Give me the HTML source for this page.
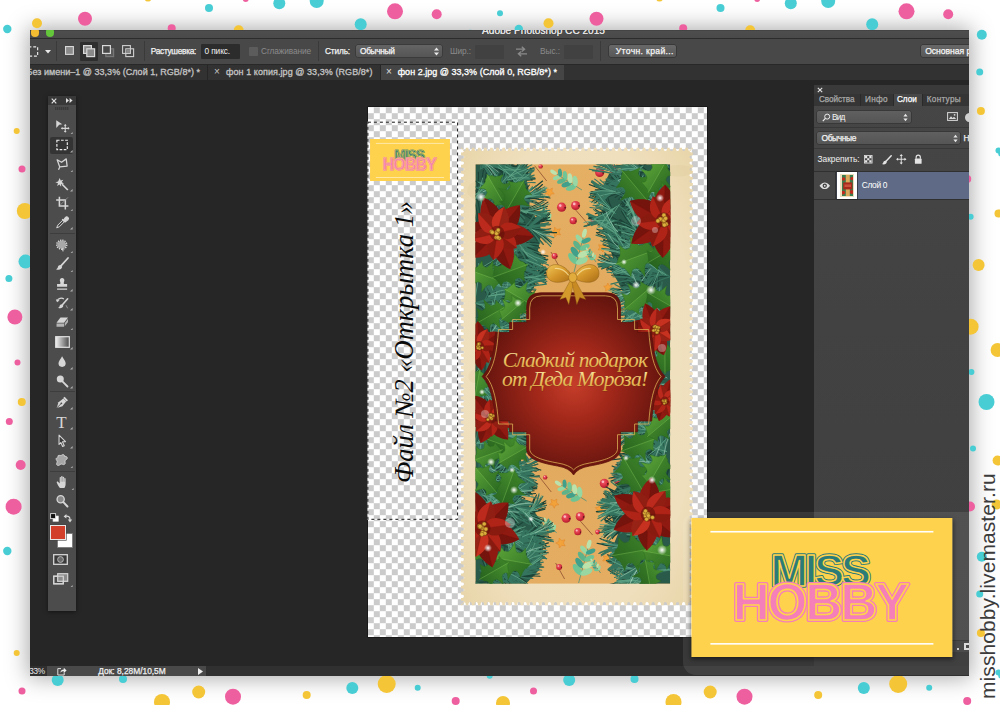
<!DOCTYPE html>
<html lang="ru"><head><meta charset="utf-8"><title>Adobe Photoshop CC 2015</title>
<style>
html,body{margin:0;padding:0;background:#fff;}
body{width:1000px;height:705px;overflow:hidden;position:relative;font-family:"Liberation Sans",sans-serif;}
.dots{position:absolute;left:0;top:0;}
.a{position:absolute;}
#shadow{position:absolute;left:30px;top:30px;width:939px;height:646px;box-shadow:0 0 21px 2px rgba(0,0,0,.34);}
#win{position:absolute;left:30px;top:30px;width:939px;height:646px;overflow:hidden;background:#262626;}
#in{position:absolute;left:-30px;top:-30px;width:1000px;height:705px;}
#title{left:30px;top:30px;width:939px;height:8px;background:linear-gradient(#3a3a3a 0,#4d4d4d 1px,#4a4a4a);overflow:hidden;}
#title span{position:absolute;left:0;width:1027px;text-align:center;top:-3.600px;font-size:10.100px;color:#e4e4e4;white-space:nowrap;line-height:1;text-shadow:0 0 .5px #e4e4e4;}
#optbar{left:30px;top:38px;width:939px;height:26px;background:#484848;border-top:1px solid #2c2c2c;box-sizing:border-box;}
#tabbar{left:30px;top:64px;width:939px;height:16px;background:#323232;border-top:1px solid #282828;box-sizing:border-box;}
.t{position:absolute;white-space:nowrap;line-height:1;}
.b{font-weight:bold;}
#doc{left:367.700px;top:107px;width:339.300px;height:530px;background:conic-gradient(#cbcbcb 25%,#fff 0 50%,#cbcbcb 0 75%,#fff 0) -0.2px .2px/12px 12px;box-shadow:0 0 0 .6px #111;}
#ftext{left:0;top:0;}
#ftext span{position:absolute;left:390.900px;top:483px;transform-origin:0 0;transform:rotate(-90deg);font-family:"Liberation Serif",serif;font-style:italic;font-size:26.4px;line-height:1;white-space:nowrap;color:#0a0a0a;}
#vtext{left:977.200px;top:698.500px;transform-origin:0 0;transform:rotate(-90deg);font-size:21px;color:#3b3b3b;white-space:nowrap;line-height:1;letter-spacing:.09px;}
</style></head><body>
<div id="shadow"></div>
<svg class="dots" width="1000" height="705" viewBox="0 0 1000 705"><circle cx="7.3" cy="29.0" r="4.2" fill="#47cdd3"/><circle cx="7.3" cy="551.0" r="4.2" fill="#47cdd3"/><circle cx="518.8" cy="29.0" r="4.2" fill="#47cdd3"/><circle cx="37.0" cy="23.3" r="5" fill="#f4c536"/><circle cx="548.5" cy="23.3" r="5" fill="#f4c536"/><circle cx="85.0" cy="18.7" r="7" fill="#ee5f9f"/><circle cx="596.5" cy="18.7" r="7" fill="#ee5f9f"/><circle cx="148.0" cy="-2.0" r="3.5" fill="#f4c536"/><circle cx="659.5" cy="-2.0" r="3.5" fill="#f4c536"/><circle cx="171.7" cy="28.3" r="4" fill="#ee5f9f"/><circle cx="683.2" cy="28.3" r="4" fill="#ee5f9f"/><circle cx="209.0" cy="8.0" r="4" fill="#47cdd3"/><circle cx="720.5" cy="8.0" r="4" fill="#47cdd3"/><circle cx="238.7" cy="30.3" r="5" fill="#f4c536"/><circle cx="750.2" cy="30.3" r="5" fill="#f4c536"/><circle cx="245.7" cy="-1.0" r="3" fill="#ee5f9f"/><circle cx="757.2" cy="-1.0" r="3" fill="#ee5f9f"/><circle cx="279.3" cy="3.3" r="6" fill="#47cdd3"/><circle cx="790.8" cy="3.3" r="6" fill="#47cdd3"/><circle cx="316.7" cy="1.0" r="7" fill="#47cdd3"/><circle cx="828.2" cy="1.0" r="7" fill="#47cdd3"/><circle cx="360.7" cy="24.3" r="6" fill="#47cdd3"/><circle cx="872.2" cy="24.3" r="6" fill="#47cdd3"/><circle cx="395.0" cy="11.3" r="8" fill="#ee5f9f"/><circle cx="906.5" cy="11.3" r="8" fill="#ee5f9f"/><circle cx="436.7" cy="14.3" r="5" fill="#ee5f9f"/><circle cx="948.2" cy="14.3" r="5" fill="#ee5f9f"/><circle cx="-11.5" cy="13.3" r="3" fill="#47cdd3"/><circle cx="-11.5" cy="535.3" r="3" fill="#47cdd3"/><circle cx="500.0" cy="13.3" r="3" fill="#47cdd3"/><circle cx="1011.5" cy="13.3" r="3" fill="#47cdd3"/><circle cx="1011.5" cy="535.3" r="3" fill="#47cdd3"/><circle cx="16.7" cy="131.0" r="3" fill="#f4c536"/><circle cx="16.7" cy="653.0" r="3" fill="#f4c536"/><circle cx="22.0" cy="169.0" r="3.5" fill="#ee5f9f"/><circle cx="22.0" cy="691.0" r="3.5" fill="#ee5f9f"/><circle cx="533.5" cy="691.0" r="3.5" fill="#ee5f9f"/><circle cx="24.8" cy="211.0" r="8" fill="#f4c536"/><circle cx="25.5" cy="261.6" r="7" fill="#47cdd3"/><circle cx="8.9" cy="278.6" r="3.5" fill="#47cdd3"/><circle cx="14.9" cy="317.0" r="7.5" fill="#ee5f9f"/><circle cx="17.5" cy="362.6" r="3" fill="#ee5f9f"/><circle cx="21.8" cy="402.0" r="4" fill="#f4c536"/><circle cx="9.3" cy="421.5" r="3.5" fill="#ee5f9f"/><circle cx="20.7" cy="465.0" r="5" fill="#ee5f9f"/><circle cx="13.6" cy="506.7" r="8" fill="#ee5f9f"/><circle cx="470.3" cy="34.8" r="5" fill="#47cdd3"/><circle cx="981.8" cy="34.8" r="5" fill="#47cdd3"/><circle cx="981.8" cy="556.8" r="5" fill="#47cdd3"/><circle cx="979.7" cy="72.0" r="3.5" fill="#47cdd3"/><circle cx="979.7" cy="594.0" r="3.5" fill="#47cdd3"/><circle cx="980.9" cy="110.9" r="4" fill="#f4c536"/><circle cx="980.9" cy="632.9" r="4" fill="#f4c536"/><circle cx="998.5" cy="150.4" r="3" fill="#47cdd3"/><circle cx="998.5" cy="672.4" r="3" fill="#47cdd3"/><circle cx="970.6" cy="216.8" r="3" fill="#47cdd3"/><circle cx="998.5" cy="213.4" r="4" fill="#f4c536"/><circle cx="978.6" cy="265.0" r="6" fill="#f4c536"/><circle cx="970.6" cy="326.7" r="8" fill="#f4c536"/><circle cx="997.6" cy="350.0" r="7" fill="#f4c536"/><circle cx="971.4" cy="372.0" r="3" fill="#47cdd3"/><circle cx="986.5" cy="402.0" r="8" fill="#47cdd3"/><circle cx="973.0" cy="448.6" r="3" fill="#47cdd3"/><circle cx="997.6" cy="460.5" r="5" fill="#f4c536"/><circle cx="970.0" cy="506.5" r="5" fill="#ee5f9f"/><circle cx="996.6" cy="504.5" r="5" fill="#f4c536"/><circle cx="57.7" cy="680.0" r="6" fill="#47cdd3"/><circle cx="569.2" cy="680.0" r="6" fill="#47cdd3"/><circle cx="123.0" cy="679.0" r="4" fill="#47cdd3"/><circle cx="634.5" cy="679.0" r="4" fill="#47cdd3"/><circle cx="162.0" cy="702.0" r="8" fill="#f4c536"/><circle cx="673.5" cy="702.0" r="8" fill="#f4c536"/><circle cx="198.7" cy="692.0" r="6.5" fill="#f4c536"/><circle cx="710.2" cy="692.0" r="6.5" fill="#f4c536"/><circle cx="233.0" cy="696.7" r="8" fill="#ee5f9f"/><circle cx="744.5" cy="696.7" r="8" fill="#ee5f9f"/><circle cx="306.7" cy="695.0" r="4" fill="#f4c536"/><circle cx="818.2" cy="695.0" r="4" fill="#f4c536"/><circle cx="352.3" cy="688.0" r="6" fill="#47cdd3"/><circle cx="863.8" cy="688.0" r="6" fill="#47cdd3"/><circle cx="386.7" cy="684.0" r="9" fill="#f4c536"/><circle cx="898.2" cy="684.0" r="9" fill="#f4c536"/><circle cx="417.7" cy="687.7" r="3" fill="#47cdd3"/><circle cx="929.2" cy="687.7" r="3" fill="#47cdd3"/><circle cx="455.7" cy="701.0" r="4" fill="#ee5f9f"/><circle cx="967.2" cy="179.0" r="4" fill="#ee5f9f"/><circle cx="967.2" cy="701.0" r="4" fill="#ee5f9f"/><circle cx="489.7" cy="675.7" r="3" fill="#47cdd3"/><circle cx="1001.2" cy="153.7" r="3" fill="#47cdd3"/><circle cx="1001.2" cy="675.7" r="3" fill="#47cdd3"/><circle cx="-8.5" cy="181.0" r="7" fill="#f4c536"/><circle cx="-8.5" cy="703.0" r="7" fill="#f4c536"/><circle cx="503.0" cy="703.0" r="7" fill="#f4c536"/></svg>
<div id="win"><div id="in">
<div class="a" id="title"><span>Adobe Photoshop CC 2015</span></div>
<div class="a" id="optbar"></div>
<div class="a" id="tabbar"></div>
<div class="a" style="left:30.600px;top:27.800px;width:8.800px;height:8.800px;border-radius:50%;background:#f4bc30;"></div>
<div class="a" style="left:45.600px;top:27.800px;width:8.800px;height:8.800px;border-radius:50%;background:#63c63b;"></div>
<svg class="a" style="left:28px;top:45.500px" width="11" height="11" viewBox="0 0 12 12"><rect x="0.5" y="1" width="10" height="10" fill="none" stroke="#e6e6e6" stroke-width="1.300" stroke-dasharray="3.200 2"/></svg>
<svg class="a" style="left:45px;top:49.5px" width="6" height="4" viewBox="0 0 6 4"><path d="M0 0h6L3 3.6z" fill="#e8e8e8"/></svg>
<div class="a" style="left:55.500px;top:41px;width:1px;height:20px;background:#3a3a3a;"></div>
<div class="a" style="left:80px;top:41.5px;width:18px;height:19px;background:#2e2e2e;border-radius:1px;"></div>
<svg class="a" style="left:64.800px;top:45.600px" width="10" height="10" viewBox="0 0 11 11"><rect x="0.6" y="0.6" width="8.6" height="8.6" fill="#8a8a8a" stroke="#d9d9d9" stroke-width="1.2"/></svg>
<svg class="a" style="left:83px;top:44.5px" width="13" height="13" viewBox="0 0 13 13"><rect x="0.6" y="0.6" width="7.8" height="7.8" fill="#8a8a8a" stroke="#d9d9d9" stroke-width="1.2"/><rect x="3.8" y="3.8" width="7.8" height="7.8" fill="#8a8a8a" stroke="#d9d9d9" stroke-width="1.2"/></svg>
<svg class="a" style="left:102px;top:44.5px" width="13" height="13" viewBox="0 0 13 13"><rect x="3.8" y="3.8" width="7.8" height="7.8" fill="#5a5a5a" stroke="#777" stroke-width="1.2"/><rect x="0.6" y="0.6" width="7.8" height="7.8" fill="#484848" stroke="#d9d9d9" stroke-width="1.2"/></svg>
<svg class="a" style="left:121.5px;top:44.5px" width="13" height="13" viewBox="0 0 13 13"><rect x="0.6" y="0.6" width="7.8" height="7.8" fill="none" stroke="#cfcfcf" stroke-width="1.1"/><rect x="3.8" y="3.8" width="7.8" height="7.8" fill="none" stroke="#cfcfcf" stroke-width="1.1"/><rect x="4.4" y="4.4" width="3.6" height="3.6" fill="#8a8a8a"/></svg>
<div class="a" style="left:143.5px;top:41px;width:1px;height:20px;background:#3a3a3a;"></div>
<div class="t" style="left:150.75px;top:47.05px;font-size:8.3px;font-weight:normal;color:#f2f2f2;letter-spacing:-0.294px;-webkit-text-stroke:.25px #f2f2f2;">Растушевка:</div>
<div class="a" style="left:201px;top:44px;width:39px;height:14.5px;background:#2c2c2c;border-radius:1px;"></div>
<div class="t" style="left:204.50px;top:47.05px;font-size:8.3px;font-weight:normal;color:#f2f2f2;letter-spacing:-0.105px;">0 пикс.</div>
<div class="a" style="left:248.5px;top:46.5px;width:9px;height:9px;background:#5c5c5c;border-radius:1px;"></div>
<div class="t" style="left:261.00px;top:47.05px;font-size:8.3px;font-weight:normal;color:#8b8b8b;letter-spacing:-0.114px;">Сглаживание</div>
<div class="a" style="left:317.5px;top:41px;width:1px;height:20px;background:#3a3a3a;"></div>
<div class="t" style="left:325.00px;top:47.05px;font-size:8.3px;font-weight:normal;color:#f2f2f2;letter-spacing:-0.151px;-webkit-text-stroke:.25px #f2f2f2;">Стиль:</div>
<div class="a" style="left:355.5px;top:45px;width:86.5px;height:12px;background:linear-gradient(#646464,#555);border-radius:2px;box-shadow:0 0 0 .5px #2e2e2e;"></div>
<div class="t" style="left:360.00px;top:47.05px;font-size:8.3px;font-weight:normal;color:#f6f6f6;letter-spacing:-0.310px;-webkit-text-stroke:.25px #f6f6f6;">Обычный</div>
<svg class="a" style="left:433.5px;top:46.5px" width="5" height="9" viewBox="0 0 5 9"><path d="M0 3.4L2.5 .6 5 3.4zM0 5.6L2.5 8.4 5 5.6z" fill="#e8e8e8"/></svg>
<div class="t" style="left:450.00px;top:47.05px;font-size:8.3px;font-weight:normal;color:#8b8b8b;letter-spacing:-0.094px;">Шир.:</div>
<div class="a" style="left:475px;top:44.5px;width:29px;height:14px;background:#414141;border-radius:1px;"></div>
<svg class="a" style="left:514.5px;top:45.5px" width="13" height="11" viewBox="0 0 13 11"><path d="M1 3.2h8.2M6.8 .8L9.6 3.2 6.8 5.4M12 7.8H3.8M6.2 5.6L3.4 7.8 6.2 10.2" fill="none" stroke="#8a8a8a" stroke-width="1.3"/></svg>
<div class="t" style="left:540.00px;top:47.05px;font-size:8.3px;font-weight:normal;color:#8b8b8b;letter-spacing:-0.053px;">Выс.:</div>
<div class="a" style="left:563.5px;top:44.5px;width:29px;height:14px;background:#414141;border-radius:1px;"></div>
<div class="a" style="left:600px;top:41px;width:1px;height:20px;background:#3a3a3a;"></div>
<div class="a" style="left:608.5px;top:45px;width:67.5px;height:12px;background:linear-gradient(#686868,#585858);border-radius:2px;box-shadow:0 0 0 .5px #2a2a2a;"></div>
<div class="t" style="left:615.75px;top:46.90px;font-size:8.6px;font-weight:normal;color:#f6f6f6;letter-spacing:0.345px;-webkit-text-stroke:.25px #f6f6f6;">Уточн. край...</div>
<div class="a" style="left:921px;top:45px;width:60px;height:12px;background:linear-gradient(#686868,#585858);border-radius:2px;box-shadow:0 0 0 .5px #2a2a2a;"></div>
<div class="t" style="left:925.20px;top:46.90px;font-size:8.6px;font-weight:normal;color:#f6f6f6;letter-spacing:-0.030px;-webkit-text-stroke:.25px #f6f6f6;">Основная рабочая среда</div>
<div class="a" style="left:380.3px;top:65px;width:183.3px;height:15px;background:#454545;"></div>
<div class="a" style="left:207px;top:65px;width:1px;height:15px;background:#262626;"></div>
<div class="a" style="left:380px;top:65px;width:1px;height:15px;background:#262626;"></div>
<div class="t" style="left:26.50px;top:68.20px;font-size:9px;font-weight:normal;color:#c4c4c4;letter-spacing:0.023px;-webkit-text-stroke:.3px #c4c4c4;">Без имени–1 @ 33,3% (Слой 1, RGB/8*) *</div>
<div class="t" style="left:214px;top:67.2px;font-size:10px;color:#c4c4c4;">×</div>
<div class="t" style="left:226.00px;top:68.20px;font-size:9px;font-weight:normal;color:#c4c4c4;letter-spacing:0.066px;-webkit-text-stroke:.3px #c4c4c4;">фон 1 копия.jpg @ 33,3% (RGB/8*)</div>
<div class="t" style="left:386px;top:67.2px;font-size:10px;color:#e0e0e0;">×</div>
<div class="t" style="left:397.70px;top:68.20px;font-size:9px;font-weight:normal;color:#fff;letter-spacing:0.023px;-webkit-text-stroke:.3px #fff;">фон 2.jpg @ 33,3% (Слой 0, RGB/8*) *</div>
<div class="a" style="left:30px;top:665.5px;width:939px;height:11px;background:#303030;"></div>
<div class="a" style="left:47px;top:665.5px;width:159px;height:11px;background:#494949;"></div>
<div class="t" style="left:29.00px;top:666.50px;font-size:8.6px;font-weight:normal;color:#e8e8e8;letter-spacing:-0.568px;">33%</div>
<svg class="a" style="left:56.5px;top:666.5px" width="10" height="9" viewBox="0 0 10 9"><path d="M4 1.6H.8V8h6.4V5.6" fill="none" stroke="#ddd" stroke-width="1"/><path d="M3.4 5.8C3.6 3.6 5 2.6 6.8 2.6V.8L9.6 3.4 6.8 6V4.2C5.4 4.2 4.4 4.6 3.4 5.8z" fill="#eee"/></svg>
<div class="t" style="left:98.30px;top:666.60px;font-size:8.4px;font-weight:normal;color:#f0f0f0;letter-spacing:-0.014px;-webkit-text-stroke:.25px #f0f0f0;">Док: 8,28M/10,5M</div>
<svg class="a" style="left:198px;top:668px" width="5" height="7" viewBox="0 0 5 7"><path d="M0 0L5 3.5 0 7z" fill="#eee"/></svg>
<div class="a" id="doc"></div>
<svg class="a" style="left:455px;top:140px" width="240" height="470" viewBox="455 140 240 470"><defs><radialGradient id="gPaper" cx=".5" cy=".5" r=".75"><stop offset="0" stop-color="#f3e6c6"/><stop offset=".7" stop-color="#efdfbc"/><stop offset="1" stop-color="#e6d2a4"/></radialGradient><linearGradient id="gKraft" x1="0" y1="0" x2="0" y2="1"><stop offset="0" stop-color="#e5af64"/><stop offset=".5" stop-color="#e0a85c"/><stop offset="1" stop-color="#e4ad62"/></linearGradient><radialGradient id="gBerry" cx=".4" cy=".35" r=".7"><stop offset="0" stop-color="#f2606c"/><stop offset=".6" stop-color="#d62f40"/><stop offset="1" stop-color="#a81a2a"/></radialGradient><radialGradient id="gPlaque" gradientUnits="userSpaceOnUse" cx="573.6" cy="384" r="92"><stop offset="0" stop-color="#c63e2a"/><stop offset=".4" stop-color="#a3281a"/><stop offset="1" stop-color="#64140e"/></radialGradient><linearGradient id="gH1" x1="0" y1="0" x2="1" y2="1"><stop offset="0" stop-color="#62aa3a"/><stop offset="1" stop-color="#2b6e24"/></linearGradient><linearGradient id="gH2" x1="1" y1="0" x2="0" y2="1"><stop offset="0" stop-color="#4f9a32"/><stop offset="1" stop-color="#245f1e"/></linearGradient><linearGradient id="gGold" x1="0" y1="0" x2="0" y2="1"><stop offset="0" stop-color="#fbeeb4"/><stop offset=".5" stop-color="#ecc566"/><stop offset="1" stop-color="#d29a34"/></linearGradient><linearGradient id="gBow" x1="0" y1="0" x2="1" y2="1"><stop offset="0" stop-color="#f0c65a"/><stop offset=".5" stop-color="#d4962a"/><stop offset="1" stop-color="#a86c16"/></linearGradient><radialGradient id="gSp"><stop offset="0" stop-color="#fff" stop-opacity="1"/><stop offset=".3" stop-color="#fff" stop-opacity=".7"/><stop offset="1" stop-color="#fff" stop-opacity="0"/></radialGradient><clipPath id="cPic"><rect x="475.4" y="164.2" width="194.80000000000007" height="419.59999999999997"/></clipPath><filter id="fBlur" x="-5%" y="-5%" width="110%" height="110%"><feGaussianBlur stdDeviation=".45"/></filter></defs><path d="M461 147.8h1.3a1.75 3.3 0 0 0 3.5 0h1.3h1.3a1.75 3.3 0 0 0 3.5 0h1.3h1.3a1.75 3.3 0 0 0 3.5 0h1.3h1.3a1.75 3.3 0 0 0 3.5 0h1.3h1.3a1.75 3.3 0 0 0 3.5 0h1.3h1.3a1.75 3.3 0 0 0 3.5 0h1.3h1.3a1.75 3.3 0 0 0 3.5 0h1.3h1.3a1.75 3.3 0 0 0 3.5 0h1.3h1.3a1.75 3.3 0 0 0 3.5 0h1.3h1.3a1.75 3.3 0 0 0 3.5 0h1.3h1.3a1.75 3.3 0 0 0 3.5 0h1.3h1.3a1.75 3.3 0 0 0 3.5 0h1.3h1.3a1.75 3.3 0 0 0 3.5 0h1.3h1.3a1.75 3.3 0 0 0 3.5 0h1.3h1.3a1.75 3.3 0 0 0 3.5 0h1.3h1.3a1.75 3.3 0 0 0 3.5 0h1.3h1.3a1.75 3.3 0 0 0 3.5 0h1.3h1.3a1.75 3.3 0 0 0 3.5 0h1.3h1.3a1.75 3.3 0 0 0 3.5 0h1.3h1.3a1.75 3.3 0 0 0 3.5 0h1.3h1.3a1.75 3.3 0 0 0 3.5 0h1.3h1.3a1.75 3.3 0 0 0 3.5 0h1.3h1.3a1.75 3.3 0 0 0 3.5 0h1.3h1.3a1.75 3.3 0 0 0 3.5 0h1.3h1.3a1.75 3.3 0 0 0 3.5 0h1.3h1.3a1.75 3.3 0 0 0 3.5 0h1.3h1.3a1.75 3.3 0 0 0 3.5 0h1.3h1.3a1.75 3.3 0 0 0 3.5 0h1.3h1.3a1.75 3.3 0 0 0 3.5 0h1.3h1.3a1.75 3.3 0 0 0 3.5 0h1.3h1.3a1.75 3.3 0 0 0 3.5 0h1.3h1.3a1.75 3.3 0 0 0 3.5 0h1.3h1.3a1.75 3.3 0 0 0 3.5 0h1.3h1.3a1.75 3.3 0 0 0 3.5 0h1.3h1.3a1.75 3.3 0 0 0 3.5 0h1.3h1.3a1.75 3.3 0 0 0 3.5 0h1.3h1.3a1.75 3.3 0 0 0 3.5 0h1.3h1.3a1.75 3.3 0 0 0 3.5 0h1.3v1.3a3.3 1.75 0 0 0 0 3.5v1.3v1.3a3.3 1.75 0 0 0 0 3.5v1.3v1.3a3.3 1.75 0 0 0 0 3.5v1.3v1.3a3.3 1.75 0 0 0 0 3.5v1.3v1.3a3.3 1.75 0 0 0 0 3.5v1.3v1.3a3.3 1.75 0 0 0 0 3.5v1.3v1.3a3.3 1.75 0 0 0 0 3.5v1.3v1.3a3.3 1.75 0 0 0 0 3.5v1.3v1.3a3.3 1.75 0 0 0 0 3.5v1.3v1.3a3.3 1.75 0 0 0 0 3.5v1.3v1.3a3.3 1.75 0 0 0 0 3.5v1.3v1.3a3.3 1.75 0 0 0 0 3.5v1.3v1.3a3.3 1.75 0 0 0 0 3.5v1.3v1.3a3.3 1.75 0 0 0 0 3.5v1.3v1.3a3.3 1.75 0 0 0 0 3.5v1.3v1.3a3.3 1.75 0 0 0 0 3.5v1.3v1.3a3.3 1.75 0 0 0 0 3.5v1.3v1.3a3.3 1.75 0 0 0 0 3.5v1.3v1.3a3.3 1.75 0 0 0 0 3.5v1.3v1.3a3.3 1.75 0 0 0 0 3.5v1.3v1.3a3.3 1.75 0 0 0 0 3.5v1.3v1.3a3.3 1.75 0 0 0 0 3.5v1.3v1.3a3.3 1.75 0 0 0 0 3.5v1.3v1.3a3.3 1.75 0 0 0 0 3.5v1.3v1.3a3.3 1.75 0 0 0 0 3.5v1.3v1.3a3.3 1.75 0 0 0 0 3.5v1.3v1.3a3.3 1.75 0 0 0 0 3.5v1.3v1.3a3.3 1.75 0 0 0 0 3.5v1.3v1.3a3.3 1.75 0 0 0 0 3.5v1.3v1.3a3.3 1.75 0 0 0 0 3.5v1.3v1.3a3.3 1.75 0 0 0 0 3.5v1.3v1.3a3.3 1.75 0 0 0 0 3.5v1.3v1.3a3.3 1.75 0 0 0 0 3.5v1.3v1.3a3.3 1.75 0 0 0 0 3.5v1.3v1.3a3.3 1.75 0 0 0 0 3.5v1.3v1.3a3.3 1.75 0 0 0 0 3.5v1.3v1.3a3.3 1.75 0 0 0 0 3.5v1.3v1.3a3.3 1.75 0 0 0 0 3.5v1.3v1.3a3.3 1.75 0 0 0 0 3.5v1.3v1.3a3.3 1.75 0 0 0 0 3.5v1.3v1.3a3.3 1.75 0 0 0 0 3.5v1.3v1.3a3.3 1.75 0 0 0 0 3.5v1.3v1.3a3.3 1.75 0 0 0 0 3.5v1.3v1.3a3.3 1.75 0 0 0 0 3.5v1.3v1.3a3.3 1.75 0 0 0 0 3.5v1.3v1.3a3.3 1.75 0 0 0 0 3.5v1.3v1.3a3.3 1.75 0 0 0 0 3.5v1.3v1.3a3.3 1.75 0 0 0 0 3.5v1.3v1.3a3.3 1.75 0 0 0 0 3.5v1.3v1.3a3.3 1.75 0 0 0 0 3.5v1.3v1.3a3.3 1.75 0 0 0 0 3.5v1.3v1.3a3.3 1.75 0 0 0 0 3.5v1.3v1.3a3.3 1.75 0 0 0 0 3.5v1.3v1.3a3.3 1.75 0 0 0 0 3.5v1.3v1.3a3.3 1.75 0 0 0 0 3.5v1.3v1.3a3.3 1.75 0 0 0 0 3.5v1.3v1.3a3.3 1.75 0 0 0 0 3.5v1.3v1.3a3.3 1.75 0 0 0 0 3.5v1.3v1.3a3.3 1.75 0 0 0 0 3.5v1.3v1.3a3.3 1.75 0 0 0 0 3.5v1.3v1.3a3.3 1.75 0 0 0 0 3.5v1.3v1.3a3.3 1.75 0 0 0 0 3.5v1.3v1.3a3.3 1.75 0 0 0 0 3.5v1.3v1.3a3.3 1.75 0 0 0 0 3.5v1.3v1.3a3.3 1.75 0 0 0 0 3.5v1.3v1.3a3.3 1.75 0 0 0 0 3.5v1.3v1.3a3.3 1.75 0 0 0 0 3.5v1.3v1.3a3.3 1.75 0 0 0 0 3.5v1.3v1.3a3.3 1.75 0 0 0 0 3.5v1.3v1.3a3.3 1.75 0 0 0 0 3.5v1.3v1.3a3.3 1.75 0 0 0 0 3.5v1.3v1.3a3.3 1.75 0 0 0 0 3.5v1.3v1.3a3.3 1.75 0 0 0 0 3.5v1.3v1.3a3.3 1.75 0 0 0 0 3.5v1.3v1.3a3.3 1.75 0 0 0 0 3.5v1.3h-1.3a1.75 3.3 0 0 0 -3.5 0h-1.3h-1.3a1.75 3.3 0 0 0 -3.5 0h-1.3h-1.3a1.75 3.3 0 0 0 -3.5 0h-1.3h-1.3a1.75 3.3 0 0 0 -3.5 0h-1.3h-1.3a1.75 3.3 0 0 0 -3.5 0h-1.3h-1.3a1.75 3.3 0 0 0 -3.5 0h-1.3h-1.3a1.75 3.3 0 0 0 -3.5 0h-1.3h-1.3a1.75 3.3 0 0 0 -3.5 0h-1.3h-1.3a1.75 3.3 0 0 0 -3.5 0h-1.3h-1.3a1.75 3.3 0 0 0 -3.5 0h-1.3h-1.3a1.75 3.3 0 0 0 -3.5 0h-1.3h-1.3a1.75 3.3 0 0 0 -3.5 0h-1.3h-1.3a1.75 3.3 0 0 0 -3.5 0h-1.3h-1.3a1.75 3.3 0 0 0 -3.5 0h-1.3h-1.3a1.75 3.3 0 0 0 -3.5 0h-1.3h-1.3a1.75 3.3 0 0 0 -3.5 0h-1.3h-1.3a1.75 3.3 0 0 0 -3.5 0h-1.3h-1.3a1.75 3.3 0 0 0 -3.5 0h-1.3h-1.3a1.75 3.3 0 0 0 -3.5 0h-1.3h-1.3a1.75 3.3 0 0 0 -3.5 0h-1.3h-1.3a1.75 3.3 0 0 0 -3.5 0h-1.3h-1.3a1.75 3.3 0 0 0 -3.5 0h-1.3h-1.3a1.75 3.3 0 0 0 -3.5 0h-1.3h-1.3a1.75 3.3 0 0 0 -3.5 0h-1.3h-1.3a1.75 3.3 0 0 0 -3.5 0h-1.3h-1.3a1.75 3.3 0 0 0 -3.5 0h-1.3h-1.3a1.75 3.3 0 0 0 -3.5 0h-1.3h-1.3a1.75 3.3 0 0 0 -3.5 0h-1.3h-1.3a1.75 3.3 0 0 0 -3.5 0h-1.3h-1.3a1.75 3.3 0 0 0 -3.5 0h-1.3h-1.3a1.75 3.3 0 0 0 -3.5 0h-1.3h-1.3a1.75 3.3 0 0 0 -3.5 0h-1.3h-1.3a1.75 3.3 0 0 0 -3.5 0h-1.3h-1.3a1.75 3.3 0 0 0 -3.5 0h-1.3h-1.3a1.75 3.3 0 0 0 -3.5 0h-1.3h-1.3a1.75 3.3 0 0 0 -3.5 0h-1.3h-1.3a1.75 3.3 0 0 0 -3.5 0h-1.3h-1.3a1.75 3.3 0 0 0 -3.5 0h-1.3v-1.3a3.3 1.75 0 0 0 0 -3.5v-1.3v-1.3a3.3 1.75 0 0 0 0 -3.5v-1.3v-1.3a3.3 1.75 0 0 0 0 -3.5v-1.3v-1.3a3.3 1.75 0 0 0 0 -3.5v-1.3v-1.3a3.3 1.75 0 0 0 0 -3.5v-1.3v-1.3a3.3 1.75 0 0 0 0 -3.5v-1.3v-1.3a3.3 1.75 0 0 0 0 -3.5v-1.3v-1.3a3.3 1.75 0 0 0 0 -3.5v-1.3v-1.3a3.3 1.75 0 0 0 0 -3.5v-1.3v-1.3a3.3 1.75 0 0 0 0 -3.5v-1.3v-1.3a3.3 1.75 0 0 0 0 -3.5v-1.3v-1.3a3.3 1.75 0 0 0 0 -3.5v-1.3v-1.3a3.3 1.75 0 0 0 0 -3.5v-1.3v-1.3a3.3 1.75 0 0 0 0 -3.5v-1.3v-1.3a3.3 1.75 0 0 0 0 -3.5v-1.3v-1.3a3.3 1.75 0 0 0 0 -3.5v-1.3v-1.3a3.3 1.75 0 0 0 0 -3.5v-1.3v-1.3a3.3 1.75 0 0 0 0 -3.5v-1.3v-1.3a3.3 1.75 0 0 0 0 -3.5v-1.3v-1.3a3.3 1.75 0 0 0 0 -3.5v-1.3v-1.3a3.3 1.75 0 0 0 0 -3.5v-1.3v-1.3a3.3 1.75 0 0 0 0 -3.5v-1.3v-1.3a3.3 1.75 0 0 0 0 -3.5v-1.3v-1.3a3.3 1.75 0 0 0 0 -3.5v-1.3v-1.3a3.3 1.75 0 0 0 0 -3.5v-1.3v-1.3a3.3 1.75 0 0 0 0 -3.5v-1.3v-1.3a3.3 1.75 0 0 0 0 -3.5v-1.3v-1.3a3.3 1.75 0 0 0 0 -3.5v-1.3v-1.3a3.3 1.75 0 0 0 0 -3.5v-1.3v-1.3a3.3 1.75 0 0 0 0 -3.5v-1.3v-1.3a3.3 1.75 0 0 0 0 -3.5v-1.3v-1.3a3.3 1.75 0 0 0 0 -3.5v-1.3v-1.3a3.3 1.75 0 0 0 0 -3.5v-1.3v-1.3a3.3 1.75 0 0 0 0 -3.5v-1.3v-1.3a3.3 1.75 0 0 0 0 -3.5v-1.3v-1.3a3.3 1.75 0 0 0 0 -3.5v-1.3v-1.3a3.3 1.75 0 0 0 0 -3.5v-1.3v-1.3a3.3 1.75 0 0 0 0 -3.5v-1.3v-1.3a3.3 1.75 0 0 0 0 -3.5v-1.3v-1.3a3.3 1.75 0 0 0 0 -3.5v-1.3v-1.3a3.3 1.75 0 0 0 0 -3.5v-1.3v-1.3a3.3 1.75 0 0 0 0 -3.5v-1.3v-1.3a3.3 1.75 0 0 0 0 -3.5v-1.3v-1.3a3.3 1.75 0 0 0 0 -3.5v-1.3v-1.3a3.3 1.75 0 0 0 0 -3.5v-1.3v-1.3a3.3 1.75 0 0 0 0 -3.5v-1.3v-1.3a3.3 1.75 0 0 0 0 -3.5v-1.3v-1.3a3.3 1.75 0 0 0 0 -3.5v-1.3v-1.3a3.3 1.75 0 0 0 0 -3.5v-1.3v-1.3a3.3 1.75 0 0 0 0 -3.5v-1.3v-1.3a3.3 1.75 0 0 0 0 -3.5v-1.3v-1.3a3.3 1.75 0 0 0 0 -3.5v-1.3v-1.3a3.3 1.75 0 0 0 0 -3.5v-1.3v-1.3a3.3 1.75 0 0 0 0 -3.5v-1.3v-1.3a3.3 1.75 0 0 0 0 -3.5v-1.3v-1.3a3.3 1.75 0 0 0 0 -3.5v-1.3v-1.3a3.3 1.75 0 0 0 0 -3.5v-1.3v-1.3a3.3 1.75 0 0 0 0 -3.5v-1.3v-1.3a3.3 1.75 0 0 0 0 -3.5v-1.3v-1.3a3.3 1.75 0 0 0 0 -3.5v-1.3v-1.3a3.3 1.75 0 0 0 0 -3.5v-1.3v-1.3a3.3 1.75 0 0 0 0 -3.5v-1.3v-1.3a3.3 1.75 0 0 0 0 -3.5v-1.3v-1.3a3.3 1.75 0 0 0 0 -3.5v-1.3v-1.3a3.3 1.75 0 0 0 0 -3.5v-1.3v-1.3a3.3 1.75 0 0 0 0 -3.5v-1.3v-1.3a3.3 1.75 0 0 0 0 -3.5v-1.3v-1.3a3.3 1.75 0 0 0 0 -3.5v-1.3v-1.3a3.3 1.75 0 0 0 0 -3.5v-1.3v-1.3a3.3 1.75 0 0 0 0 -3.5v-1.3v-1.3a3.3 1.75 0 0 0 0 -3.5v-1.3v-1.3a3.3 1.75 0 0 0 0 -3.5v-1.3v-1.3a3.3 1.75 0 0 0 0 -3.5v-1.3v-1.3a3.3 1.75 0 0 0 0 -3.5v-1.3v-1.3a3.3 1.75 0 0 0 0 -3.5v-1.3z" fill="url(#gPaper)"/><ellipse cx="474.9" cy="376.3" rx="6.4" ry="6.6" fill="#d9c08a" opacity=".18"/><ellipse cx="477.5" cy="190.5" rx="10.2" ry="9" fill="#d9c08a" opacity=".18"/><ellipse cx="678.7" cy="170.8" rx="14.6" ry="5.7" fill="#d9c08a" opacity=".18"/><g clip-path="url(#cPic)"><rect x="475.4" y="164.2" width="194.80000000000007" height="419.59999999999997" fill="url(#gKraft)"/><path d="M534.6 165.7L546.7 181" stroke="#9a5a34" stroke-width=".9"/><path d="M573 207L588 224" stroke="#9a5a34" stroke-width=".9"/><path d="M551 252L560 268" stroke="#9a5a34" stroke-width=".9"/><path d="M582 190L556.6 174.1" stroke="#3b8f7c" stroke-width=".7"/><ellipse cx="571" cy="187.7" rx="5.4" ry="2.7" transform="rotate(160.4 571 187.7)" fill="#63c79a" opacity=".9"/><ellipse cx="575.1" cy="181.1" rx="5.4" ry="2.7" transform="rotate(263.6 575.1 181.1)" fill="#8fdcaa" opacity=".9"/><ellipse cx="566.3" cy="184.4" rx="5" ry="2.5" transform="rotate(160.4 566.3 184.4)" fill="#2f9e8f" opacity=".9"/><ellipse cx="570" cy="178.3" rx="5" ry="2.5" transform="rotate(263.6 570 178.3)" fill="#b7e8b5" opacity=".9"/><ellipse cx="561.5" cy="181.1" rx="4.6" ry="2.2" transform="rotate(160.4 561.5 181.1)" fill="#4fb38e" opacity=".9"/><ellipse cx="565" cy="175.5" rx="4.6" ry="2.2" transform="rotate(263.6 565 175.5)" fill="#63c79a" opacity=".9"/><ellipse cx="556.8" cy="177.7" rx="4.1" ry="2" transform="rotate(160.4 556.8 177.7)" fill="#8fdcaa" opacity=".9"/><ellipse cx="560" cy="172.7" rx="4.1" ry="2" transform="rotate(263.6 560 172.7)" fill="#2f9e8f" opacity=".9"/><ellipse cx="553.6" cy="172.3" rx="3.8" ry="1.9" transform="rotate(212 553.6 172.3)" fill="#b7e8b5" opacity=".9"/><path d="M552 222L541.7 209.7" stroke="#3b8f7c" stroke-width=".7"/><ellipse cx="546.8" cy="219" rx="2.9" ry="1.4" transform="rotate(178.4 546.8 219)" fill="#63c79a" opacity=".9"/><ellipse cx="550" cy="216.3" rx="2.9" ry="1.4" transform="rotate(281.6 550 216.3)" fill="#8fdcaa" opacity=".9"/><ellipse cx="544.9" cy="216.6" rx="2.7" ry="1.3" transform="rotate(178.4 544.9 216.6)" fill="#2f9e8f" opacity=".9"/><ellipse cx="547.9" cy="214.1" rx="2.7" ry="1.3" transform="rotate(281.6 547.9 214.1)" fill="#b7e8b5" opacity=".9"/><ellipse cx="543.1" cy="214.1" rx="2.4" ry="1.2" transform="rotate(178.4 543.1 214.1)" fill="#4fb38e" opacity=".9"/><ellipse cx="545.8" cy="211.9" rx="2.4" ry="1.2" transform="rotate(281.6 545.8 211.9)" fill="#63c79a" opacity=".9"/><ellipse cx="541.3" cy="211.6" rx="2.2" ry="1.1" transform="rotate(178.4 541.3 211.6)" fill="#8fdcaa" opacity=".9"/><ellipse cx="543.7" cy="209.6" rx="2.2" ry="1.1" transform="rotate(281.6 543.7 209.6)" fill="#2f9e8f" opacity=".9"/><ellipse cx="540.5" cy="208.3" rx="2" ry="1" transform="rotate(230 540.5 208.3)" fill="#b7e8b5" opacity=".9"/><path d="M574 272L583.3 237.2" stroke="#3b8f7c" stroke-width=".7"/><ellipse cx="572.8" cy="258.5" rx="6.5" ry="3.2" transform="rotate(233.4 572.8 258.5)" fill="#63c79a" opacity=".9"/><ellipse cx="581.8" cy="260.9" rx="6.5" ry="3.2" transform="rotate(336.6 581.8 260.9)" fill="#8fdcaa" opacity=".9"/><ellipse cx="574.9" cy="252" rx="6" ry="3" transform="rotate(233.4 574.9 252)" fill="#2f9e8f" opacity=".9"/><ellipse cx="583.2" cy="254.2" rx="6" ry="3" transform="rotate(336.6 583.2 254.2)" fill="#b7e8b5" opacity=".9"/><ellipse cx="577.1" cy="245.4" rx="5.5" ry="2.7" transform="rotate(233.4 577.1 245.4)" fill="#4fb38e" opacity=".9"/><ellipse cx="584.6" cy="247.4" rx="5.5" ry="2.7" transform="rotate(336.6 584.6 247.4)" fill="#63c79a" opacity=".9"/><ellipse cx="579.2" cy="238.8" rx="5" ry="2.4" transform="rotate(233.4 579.2 238.8)" fill="#8fdcaa" opacity=".9"/><ellipse cx="586.1" cy="240.6" rx="5" ry="2.4" transform="rotate(336.6 586.1 240.6)" fill="#2f9e8f" opacity=".9"/><ellipse cx="584.4" cy="233.2" rx="4.6" ry="2.2" transform="rotate(285 584.4 233.2)" fill="#b7e8b5" opacity=".9"/><path d="M596 262L588 250.5" stroke="#3b8f7c" stroke-width=".7"/><ellipse cx="591.7" cy="259" rx="2.5" ry="1.2" transform="rotate(183.4 591.7 259)" fill="#63c79a" opacity=".9"/><ellipse cx="594.7" cy="256.9" rx="2.5" ry="1.2" transform="rotate(286.6 594.7 256.9)" fill="#8fdcaa" opacity=".9"/><ellipse cx="590.3" cy="256.7" rx="2.3" ry="1.1" transform="rotate(183.4 590.3 256.7)" fill="#2f9e8f" opacity=".9"/><ellipse cx="593" cy="254.8" rx="2.3" ry="1.1" transform="rotate(286.6 593 254.8)" fill="#b7e8b5" opacity=".9"/><ellipse cx="588.8" cy="254.4" rx="2.1" ry="1" transform="rotate(183.4 588.8 254.4)" fill="#4fb38e" opacity=".9"/><ellipse cx="591.3" cy="252.7" rx="2.1" ry="1" transform="rotate(286.6 591.3 252.7)" fill="#63c79a" opacity=".9"/><ellipse cx="587.4" cy="252.1" rx="1.9" ry="0.9" transform="rotate(183.4 587.4 252.1)" fill="#8fdcaa" opacity=".9"/><ellipse cx="589.7" cy="250.6" rx="1.9" ry="0.9" transform="rotate(286.6 589.7 250.6)" fill="#2f9e8f" opacity=".9"/><ellipse cx="587" cy="249.2" rx="1.8" ry="0.9" transform="rotate(235 587 249.2)" fill="#b7e8b5" opacity=".9"/><polygon points="554.3,193.7 551,194.2 549.6,197.2 548.1,194.2 544.8,193.8 547.1,191.5 546.5,188.2 549.5,189.7 552.4,188.1 551.9,191.4" fill="#f2a23a" stroke="#e0852a" stroke-width=".5" stroke-linejoin="round"/><polygon points="597.3,202 594.8,200.4 592.1,201.7 592.7,198.8 590.7,196.6 593.7,196.3 595.2,193.7 596.3,196.5 599.3,197.1 597,199" fill="#f2a23a" stroke="#e0852a" stroke-width=".5" stroke-linejoin="round"/><polygon points="560.6,234.9 557.2,234.4 554.8,237 554.2,233.6 551.1,232.1 554.2,230.5 554.6,227.1 557,229.5 560.4,228.8 558.9,231.9" fill="#f2a23a" stroke="#e0852a" stroke-width=".5" stroke-linejoin="round"/><polygon points="606.6,248.2 603.7,249.2 603,252.2 601.1,249.8 598,250 599.7,247.5 598.6,244.6 601.5,245.5 603.9,243.5 604,246.5" fill="#f2a23a" stroke="#e0852a" stroke-width=".5" stroke-linejoin="round"/><polygon points="610.8,291 608.1,289.7 605.5,291.2 605.9,288.3 603.7,286.3 606.6,285.7 607.8,283 609.2,285.6 612.2,285.9 610.2,288.1" fill="#f2a23a" stroke="#e0852a" stroke-width=".5" stroke-linejoin="round"/><circle cx="540.6" cy="166.4" r="2.2" fill="url(#gBerry)"/><circle cx="539.9" cy="165.6" r="0.6" fill="#ffd9dc" opacity=".75"/><circle cx="542.2" cy="166.6" r="0.4" fill="#3a1a10"/><circle cx="599.7" cy="172.4" r="4.6" fill="url(#gBerry)"/><circle cx="598.3" cy="170.8" r="1.3" fill="#ffd9dc" opacity=".75"/><circle cx="603.2" cy="172.9" r="0.8" fill="#3a1a10"/><circle cx="613.5" cy="169.3" r="4" fill="url(#gBerry)"/><circle cx="612.3" cy="167.9" r="1.1" fill="#ffd9dc" opacity=".75"/><circle cx="616.5" cy="169.7" r="0.7" fill="#3a1a10"/><circle cx="561.6" cy="207.2" r="4.6" fill="url(#gBerry)"/><circle cx="560.2" cy="205.6" r="1.3" fill="#ffd9dc" opacity=".75"/><circle cx="565.1" cy="207.7" r="0.8" fill="#3a1a10"/><circle cx="575.6" cy="205.5" r="4.5" fill="url(#gBerry)"/><circle cx="574.2" cy="203.9" r="1.3" fill="#ffd9dc" opacity=".75"/><circle cx="579" cy="205.9" r="0.8" fill="#3a1a10"/><circle cx="573.2" cy="220.7" r="3.6" fill="url(#gBerry)"/><circle cx="572.1" cy="219.4" r="1" fill="#ffd9dc" opacity=".75"/><circle cx="575.9" cy="221.1" r="0.6" fill="#3a1a10"/><circle cx="593" cy="221" r="2.4" fill="url(#gBerry)"/><circle cx="592.3" cy="220.2" r="0.7" fill="#ffd9dc" opacity=".75"/><circle cx="594.8" cy="221.2" r="0.4" fill="#3a1a10"/><circle cx="554.6" cy="256" r="3" fill="url(#gBerry)"/><circle cx="553.7" cy="254.9" r="0.8" fill="#ffd9dc" opacity=".75"/><circle cx="556.9" cy="256.3" r="0.5" fill="#3a1a10"/><path d="M539.2 476.7L551.3 492" stroke="#9a5a34" stroke-width=".9"/><path d="M577.6 518L592.6 535" stroke="#9a5a34" stroke-width=".9"/><path d="M555.6 563L564.6 579" stroke="#9a5a34" stroke-width=".9"/><path d="M586.6 501L561.2 485.1" stroke="#3b8f7c" stroke-width=".7"/><ellipse cx="575.6" cy="498.7" rx="5.4" ry="2.7" transform="rotate(160.4 575.6 498.7)" fill="#63c79a" opacity=".9"/><ellipse cx="579.7" cy="492.1" rx="5.4" ry="2.7" transform="rotate(263.6 579.7 492.1)" fill="#8fdcaa" opacity=".9"/><ellipse cx="570.9" cy="495.4" rx="5" ry="2.5" transform="rotate(160.4 570.9 495.4)" fill="#2f9e8f" opacity=".9"/><ellipse cx="574.6" cy="489.3" rx="5" ry="2.5" transform="rotate(263.6 574.6 489.3)" fill="#b7e8b5" opacity=".9"/><ellipse cx="566.1" cy="492.1" rx="4.6" ry="2.2" transform="rotate(160.4 566.1 492.1)" fill="#4fb38e" opacity=".9"/><ellipse cx="569.6" cy="486.5" rx="4.6" ry="2.2" transform="rotate(263.6 569.6 486.5)" fill="#63c79a" opacity=".9"/><ellipse cx="561.4" cy="488.7" rx="4.1" ry="2" transform="rotate(160.4 561.4 488.7)" fill="#8fdcaa" opacity=".9"/><ellipse cx="564.6" cy="483.7" rx="4.1" ry="2" transform="rotate(263.6 564.6 483.7)" fill="#2f9e8f" opacity=".9"/><ellipse cx="558.2" cy="483.3" rx="3.8" ry="1.9" transform="rotate(212 558.2 483.3)" fill="#b7e8b5" opacity=".9"/><path d="M556.6 533L546.3 520.7" stroke="#3b8f7c" stroke-width=".7"/><ellipse cx="551.4" cy="530" rx="2.9" ry="1.4" transform="rotate(178.4 551.4 530)" fill="#63c79a" opacity=".9"/><ellipse cx="554.6" cy="527.3" rx="2.9" ry="1.4" transform="rotate(281.6 554.6 527.3)" fill="#8fdcaa" opacity=".9"/><ellipse cx="549.5" cy="527.6" rx="2.7" ry="1.3" transform="rotate(178.4 549.5 527.6)" fill="#2f9e8f" opacity=".9"/><ellipse cx="552.5" cy="525.1" rx="2.7" ry="1.3" transform="rotate(281.6 552.5 525.1)" fill="#b7e8b5" opacity=".9"/><ellipse cx="547.7" cy="525.1" rx="2.4" ry="1.2" transform="rotate(178.4 547.7 525.1)" fill="#4fb38e" opacity=".9"/><ellipse cx="550.4" cy="522.9" rx="2.4" ry="1.2" transform="rotate(281.6 550.4 522.9)" fill="#63c79a" opacity=".9"/><ellipse cx="545.9" cy="522.6" rx="2.2" ry="1.1" transform="rotate(178.4 545.9 522.6)" fill="#8fdcaa" opacity=".9"/><ellipse cx="548.3" cy="520.6" rx="2.2" ry="1.1" transform="rotate(281.6 548.3 520.6)" fill="#2f9e8f" opacity=".9"/><ellipse cx="545.1" cy="519.3" rx="2" ry="1" transform="rotate(230 545.1 519.3)" fill="#b7e8b5" opacity=".9"/><path d="M578.6 583L587.9 548.2" stroke="#3b8f7c" stroke-width=".7"/><ellipse cx="577.4" cy="569.5" rx="6.5" ry="3.2" transform="rotate(233.4 577.4 569.5)" fill="#63c79a" opacity=".9"/><ellipse cx="586.4" cy="571.9" rx="6.5" ry="3.2" transform="rotate(336.6 586.4 571.9)" fill="#8fdcaa" opacity=".9"/><ellipse cx="579.5" cy="563" rx="6" ry="3" transform="rotate(233.4 579.5 563)" fill="#2f9e8f" opacity=".9"/><ellipse cx="587.8" cy="565.2" rx="6" ry="3" transform="rotate(336.6 587.8 565.2)" fill="#b7e8b5" opacity=".9"/><ellipse cx="581.7" cy="556.4" rx="5.5" ry="2.7" transform="rotate(233.4 581.7 556.4)" fill="#4fb38e" opacity=".9"/><ellipse cx="589.2" cy="558.4" rx="5.5" ry="2.7" transform="rotate(336.6 589.2 558.4)" fill="#63c79a" opacity=".9"/><ellipse cx="583.8" cy="549.8" rx="5" ry="2.4" transform="rotate(233.4 583.8 549.8)" fill="#8fdcaa" opacity=".9"/><ellipse cx="590.7" cy="551.6" rx="5" ry="2.4" transform="rotate(336.6 590.7 551.6)" fill="#2f9e8f" opacity=".9"/><ellipse cx="589" cy="544.2" rx="4.6" ry="2.2" transform="rotate(285 589 544.2)" fill="#b7e8b5" opacity=".9"/><path d="M600.6 573L592.6 561.5" stroke="#3b8f7c" stroke-width=".7"/><ellipse cx="596.3" cy="570" rx="2.5" ry="1.2" transform="rotate(183.4 596.3 570)" fill="#63c79a" opacity=".9"/><ellipse cx="599.3" cy="567.9" rx="2.5" ry="1.2" transform="rotate(286.6 599.3 567.9)" fill="#8fdcaa" opacity=".9"/><ellipse cx="594.9" cy="567.7" rx="2.3" ry="1.1" transform="rotate(183.4 594.9 567.7)" fill="#2f9e8f" opacity=".9"/><ellipse cx="597.6" cy="565.8" rx="2.3" ry="1.1" transform="rotate(286.6 597.6 565.8)" fill="#b7e8b5" opacity=".9"/><ellipse cx="593.4" cy="565.4" rx="2.1" ry="1" transform="rotate(183.4 593.4 565.4)" fill="#4fb38e" opacity=".9"/><ellipse cx="595.9" cy="563.7" rx="2.1" ry="1" transform="rotate(286.6 595.9 563.7)" fill="#63c79a" opacity=".9"/><ellipse cx="592" cy="563.1" rx="1.9" ry="0.9" transform="rotate(183.4 592 563.1)" fill="#8fdcaa" opacity=".9"/><ellipse cx="594.3" cy="561.6" rx="1.9" ry="0.9" transform="rotate(286.6 594.3 561.6)" fill="#2f9e8f" opacity=".9"/><ellipse cx="591.6" cy="560.2" rx="1.8" ry="0.9" transform="rotate(235 591.6 560.2)" fill="#b7e8b5" opacity=".9"/><polygon points="558.9,504.7 555.6,505.2 554.2,508.2 552.7,505.2 549.4,504.8 551.7,502.5 551.1,499.2 554.1,500.7 557,499.1 556.5,502.4" fill="#f2a23a" stroke="#e0852a" stroke-width=".5" stroke-linejoin="round"/><polygon points="601.9,513 599.4,511.4 596.7,512.7 597.3,509.8 595.3,507.6 598.3,507.3 599.8,504.7 600.9,507.5 603.9,508.1 601.6,510" fill="#f2a23a" stroke="#e0852a" stroke-width=".5" stroke-linejoin="round"/><polygon points="565.2,545.9 561.8,545.4 559.4,548 558.8,544.6 555.7,543.1 558.8,541.5 559.2,538.1 561.6,540.5 565,539.8 563.5,542.9" fill="#f2a23a" stroke="#e0852a" stroke-width=".5" stroke-linejoin="round"/><polygon points="611.2,559.2 608.3,560.2 607.6,563.2 605.7,560.8 602.6,561 604.3,558.5 603.2,555.6 606.1,556.5 608.5,554.5 608.6,557.5" fill="#f2a23a" stroke="#e0852a" stroke-width=".5" stroke-linejoin="round"/><polygon points="615.4,602 612.7,600.7 610.1,602.2 610.5,599.3 608.3,597.3 611.2,596.7 612.4,594 613.8,596.6 616.8,596.9 614.8,599.1" fill="#f2a23a" stroke="#e0852a" stroke-width=".5" stroke-linejoin="round"/><circle cx="545.2" cy="477.4" r="2.2" fill="url(#gBerry)"/><circle cx="544.5" cy="476.6" r="0.6" fill="#ffd9dc" opacity=".75"/><circle cx="546.9" cy="477.6" r="0.4" fill="#3a1a10"/><circle cx="604.3" cy="483.4" r="4.6" fill="url(#gBerry)"/><circle cx="602.9" cy="481.8" r="1.3" fill="#ffd9dc" opacity=".75"/><circle cx="607.8" cy="483.9" r="0.8" fill="#3a1a10"/><circle cx="618.1" cy="480.3" r="4" fill="url(#gBerry)"/><circle cx="616.9" cy="478.9" r="1.1" fill="#ffd9dc" opacity=".75"/><circle cx="621.1" cy="480.7" r="0.7" fill="#3a1a10"/><circle cx="566.2" cy="518.2" r="4.6" fill="url(#gBerry)"/><circle cx="564.8" cy="516.6" r="1.3" fill="#ffd9dc" opacity=".75"/><circle cx="569.7" cy="518.7" r="0.8" fill="#3a1a10"/><circle cx="580.2" cy="516.5" r="4.5" fill="url(#gBerry)"/><circle cx="578.9" cy="514.9" r="1.3" fill="#ffd9dc" opacity=".75"/><circle cx="583.6" cy="517" r="0.8" fill="#3a1a10"/><circle cx="577.8" cy="531.7" r="3.6" fill="url(#gBerry)"/><circle cx="576.7" cy="530.4" r="1" fill="#ffd9dc" opacity=".75"/><circle cx="580.5" cy="532.1" r="0.6" fill="#3a1a10"/><circle cx="597.6" cy="532" r="2.4" fill="url(#gBerry)"/><circle cx="596.9" cy="531.2" r="0.7" fill="#ffd9dc" opacity=".75"/><circle cx="599.4" cy="532.2" r="0.4" fill="#3a1a10"/><circle cx="559.2" cy="567" r="3" fill="url(#gBerry)"/><circle cx="558.3" cy="566" r="0.8" fill="#ffd9dc" opacity=".75"/><circle cx="561.5" cy="567.3" r="0.5" fill="#3a1a10"/><g filter="url(#fBlur)"><path d="M475.4 164.2L513 164.2L525 174L528 186L530 198L529 210L540 222L541 234L539 246L536 258L535 270L536 282L531 292L519 300L521 462L525 474L525 486L521 498L533 510L542 522L538 534L540 546L541 558L539 570L526 583.8L475.4 583.8z" fill="#2b5a49"/><path d="M670.2 164.2L630 164.2L609 174L603 186L605 198L603 210L601 222L605 234L609 246L613 258L611 270L618 282L623 292L631 300L630 462L626 474L618 486L609 498L611 510L613 522L618 534L613 546L618 558L623 570L628 583.8L670.2 583.8z" fill="#2b5a49"/><path d="M480.3 429.8Q484.1 440.5 490.6 449.7M478.3 422.7Q477 434.2 472 444.5M481.3 433.4Q486.9 443.6 494.2 452.5M478.3 422.7Q475.9 437.6 471.1 452M481.4 433.7Q483.3 442.5 487.9 450.1M478.3 422.5Q475 436.4 470.4 449.9M481.3 433.2Q485.7 442.8 492.2 451.2M478 421.4Q486 433.3 497 442.5M480.9 431.9Q482 440.8 481.2 449.7M654.9 413.8Q647.5 422.5 638 428.7M654 414.9Q647.3 424.1 642.1 434.2M657.5 410.2Q654.9 419.8 655 429.6M654.3 414.5Q646.4 423.8 636.9 431.5M655.6 412.9Q651.4 420.4 649.8 428.9M654.7 414Q646 421.8 635.1 426.4M655.1 413.6Q646.1 420.2 635.9 424.7M660.7 406Q658.3 420.4 661.2 434.6M654.2 414.7Q649.2 421.2 643 426.6M655.3 413.2Q647.2 423.3 638 432.2M652.9 416.5Q648.7 425.9 646.9 436.1M656.1 412.1Q650.6 419.6 643.5 425.7M653.6 415.5Q647.9 423.8 645.5 433.6M664.8 527.6Q656.6 522.3 647.7 518.3M667.2 530Q657.1 520.5 651.9 507.7M669.9 532.7Q657.3 522.9 642.6 516.7M666.7 529.5Q656.4 520.1 648.5 508.6M661.4 524.3Q654.9 516.1 651.3 506.2M664.4 527.2Q659.3 519.9 655.8 511.6M670.3 533.1Q666 523.1 665.9 512.1M664.7 527.5Q655.5 521 644.6 518.5M662.9 525.7Q655 520 645.6 517.2M666.6 529.4Q660.6 521.7 658.4 512.2M668.7 531.5Q660.6 525 650.9 521.2M662.3 525.2Q654.6 518.6 649.9 509.7M671.2 534Q665.9 520.4 665.4 505.8M526.2 269.2Q536 269.6 545.5 267.1M527.4 269.3Q535 270.5 542.3 268.2M528.1 269.3Q536.6 269.1 544.7 271.7M520.7 268.7Q530 266.7 538.3 262.3M523.3 268.9Q532.7 272.1 540.1 278.7M517.6 268.4Q529.7 273.3 539.8 281.5M524.8 269Q533.9 268.7 542.3 265.2M525.3 269.1Q534.6 271.3 543.5 274.7M517.6 268.4Q530.5 265.6 541.8 258.6M527.2 269.2Q535 271.5 542.2 275.2M495.9 315Q503.7 310.6 512.5 309.1M494.8 315.8Q501.1 310.6 504.5 303.1M491.7 318.4Q500.5 309.8 507.3 299.6M489.3 320.3Q497.3 310.1 503.1 298.5M488.4 321Q502 317.5 515.9 319.4M666.6 489.5Q657.7 490.9 648.6 490.9M670.8 487.3Q657.4 494.7 642.7 498.9M664.6 490.6Q659 496.8 655.6 504.5M666.5 489.6Q659.3 495.9 655 504.4M660.7 492.8Q651.1 496.4 641 495.4M672.2 486.5Q663.9 493.2 656.5 500.8M506.7 287.8Q514.5 282.5 523.6 280M511.6 281Q517.4 270.9 518.3 259.3M505.5 289.4Q514.8 277 526.5 266.8M506.3 288.3Q512.1 278.7 514 267.6M509.1 284.4Q517.8 279 527.2 274.8M507.5 286.6Q514 277.4 522.7 270.3M507.5 286.6Q512.8 278.2 515.9 268.7M513.2 278.8Q518.2 272.9 523.9 267.5M507.6 286.4Q515.4 275.5 519.6 262.8M512.3 280Q515.7 271.7 517.2 262.8M490.9 439.8Q506.6 435 522.8 437M489.5 440.6Q495.9 430 500.6 418.5M499.1 435.1Q509.8 427.6 522.5 424.4M490.9 439.8Q501.2 430.4 509.4 419.2M494.9 437.5Q505.8 430 518.8 427.5M494.7 437.6Q508.1 431.7 522.8 429.8M502.5 433.2Q509.4 427.5 515.1 420.7M490.2 440.2Q500.3 430.3 509.5 419.6M501.7 433.7Q507.8 428.9 512 422.4M492.7 438.7Q503.5 431.3 509.9 420M496.4 436.6Q506.5 430.6 514.5 421.9M490.9 439.8Q501.9 433.8 514 430.6M476.1 194.1Q486.1 187.9 495 180.1M476.6 193.9Q485.5 190.6 492.3 183.9M473.2 195.1Q484.3 190.3 496.4 189.2M479 193.1Q489.9 192.3 500 196.3M480.9 192.4Q488.5 190.2 494.9 185.7M475.9 194.2Q485.8 188 493 178.8M473.8 194.9Q485.5 193.8 497.3 194.1M473.9 194.9Q486.4 196.3 498.4 200.2M476.9 193.8Q486.7 188.5 494.2 180.3M476.6 193.9Q487.7 195.2 498.4 198.5M484.7 191Q492.7 185.5 500.1 179.3M473 195.2Q484.4 196.2 495.7 198.2M653.1 305.4Q642 300.8 630.2 299M659 311.3Q653.5 300 649.8 287.9M656.3 308.7Q644.8 305.5 633 305.2M660.5 312.8Q658.1 302.4 657.1 291.9M656.4 308.8Q645.3 303.5 633 302.9M662.1 314.4Q658.5 302 659.5 289.2M655.7 308.1Q645.5 304.3 634.6 304M651.6 304Q645.1 297.9 641.1 289.9M658.8 311.1Q646.8 307.1 634.3 307.9M660.3 312.6Q653.1 303.8 650.6 292.8M656 308.3Q647.8 300.3 638 294.3M661.5 313.8Q650.9 301.9 643.2 287.9M658.4 310.8Q649.9 300.2 642.7 288.7M613.5 228.6Q604 222.2 593.1 218.8M614.3 229.3Q605.3 223.5 598.7 214.9M611.3 227Q605.9 222.4 602.5 216.2M619.4 233Q611.3 224.9 607.8 213.9M610 226.1Q603.5 221 595.5 219.2M612.4 227.8Q603.6 224.5 594.4 222.1M609.3 225.5Q604 221.8 597.8 219.7M610.9 226.7Q604.2 222 596.2 219.9M612.7 228Q605.7 220.8 600.9 211.9M609.8 225.8Q602.8 222.2 595.3 219.6M496.3 372.1Q503.6 379.9 512.5 385.8M496.9 372.7Q505.7 381.6 510.9 393M496.2 372Q505.5 378.7 516.8 380.7M496.8 372.6Q499.3 381.6 499.1 390.9M499.7 375.7Q506.7 384.7 509.6 395.8M496.7 372.5Q504.8 377.6 513.5 381.9M495.8 371.6Q498.9 382.5 500.5 393.8M498.4 374.3Q505.7 379.2 513.4 383.3M499.4 375.3Q506.2 382.7 514.7 388.1M503 379.1Q509.1 383.3 515.9 386.3M494.2 369.8Q497.1 384.1 497.2 398.7M495.5 371.2Q508.4 378.1 522 383.4M653.7 362.4Q646.6 353.9 637.1 348.1M656.6 365.8Q649.6 355.3 644.5 343.8M653.4 362.1Q644.9 352.9 640.1 341.3M654.4 363.2Q649.4 351 649.5 337.8M650 358.2Q643.1 351.3 635.6 345.3M656.7 365.8Q644.1 357.5 630 352.2M485.5 185.1Q492.1 189.6 498.4 194.7M485.1 185Q492.7 185.7 500.3 184.8M480.6 183.2Q489.9 192.7 498.2 203.1M485.2 185Q494.5 187.1 504.1 186.7M485.6 185.2Q496.5 189.9 505.4 197.8M478.1 182.2Q492.1 187.5 507.1 188.2M475.7 181.2Q487.2 187.6 496.2 197.1M478.4 182.3Q490.2 187.5 502.7 190.2M482.5 184Q492.6 189 501.2 196.3M478.2 182.2Q493.1 186.6 508.6 186.8M476.8 181.6Q487.2 187.5 496.6 194.7M505.8 360.5Q516.9 366.4 529.2 368.6M502.8 357.5Q513.2 367.1 526 373M507.2 361.9Q512 370.9 515.2 380.6M503 357.7Q508.4 364.9 512.7 372.6M502.8 357.5Q513.9 362.2 526.1 362.7M504.6 359.3Q508.5 366.5 510.8 374.4M509.7 364.3Q517.6 370.8 522.4 379.9M510.4 364.9Q516.3 369.6 520.4 376M506 360.7Q516.7 365.7 528 369.2M504.1 358.8Q510.8 369.8 514.9 382M507.4 362Q513.4 369.6 517.9 378.2M507.4 362Q514.3 370.9 524.5 375.7M503.2 357.9Q511.4 363.4 521.1 365.3M639.4 327.3Q630.8 335.2 624.9 345.2M638.9 327.5Q631.3 331.7 625.9 338.5M646.8 323.1Q636 328.9 628.6 338.6M648.4 322.2Q638.8 329.9 631.4 339.6M638.5 327.8Q629.8 336.2 622.4 345.6M650.6 321Q636 329.3 620.1 334.9M646.8 323.1Q638.8 332.9 633.4 344.3M643.5 325Q633.4 332.1 624.1 340.2M643.3 325.1Q631.2 329.5 618.3 329.3M635.5 570.5Q629 580 624.5 590.6M644.2 561.8Q636.7 569.9 627.3 575.5M637.7 568.2Q632.6 575.5 630.3 584M639.4 566.5Q631.3 574.2 620.6 577.5M642.6 563.4Q633.7 574.7 629.1 588.3M639.7 566.3Q631.5 573 621.6 576.8M646.9 559.1Q635.1 572.9 629.6 590.3M645.6 560.4Q638.7 572.5 635.6 586M642.9 563.1Q632.4 570.4 621.4 576.8M640.4 565.6Q632.1 572.3 626.8 581.4M622.7 527.4Q615 527.3 608 530.4M622.5 527.4Q612.7 524.7 604.2 519.1M627.7 527.2Q620.4 530.7 614.2 536M625.1 527.3Q615.2 524.5 607.2 518.1M626.5 527.2Q617.2 526.6 608.4 523.6M627.5 527.2Q616 524.9 604.9 520.7M619.5 527.5Q610.8 528.1 603 532.1M625.1 527.3Q615.1 527.8 605.2 526.3M618.1 527.6Q610.7 527.5 603.6 529.6M630 527.1Q616.4 526.5 603.7 531.3M622.6 527.4Q613.2 529.1 604.2 532.4M665.9 226.3Q658.1 235.2 653.4 246M656.3 230.9Q647.1 234.8 640.2 242.1M656.2 231Q648.3 235.4 639.3 236.8M653.9 232.1Q645.4 236 638.5 242.3M664.3 227.1Q652.2 240.2 643.5 255.7M660.8 228.7Q649.8 231.3 638.4 230.6M659.5 229.4Q649.7 236.9 643 247.2M651.8 233Q640.6 238 631.6 246.5M661.6 228.4Q650.4 232.4 638.6 232.1M654.6 231.7Q646.8 235.4 640.4 241.3M658.2 230Q645.6 232.4 632.8 231.5M662.9 567.8Q654 564.1 645.6 559.4M664 568.1Q655.7 568.9 647.6 571.2M669.3 569.5Q659.9 566.9 651.5 561.7M665.5 568.5Q657.8 567.4 650 567.3M662.1 567.6Q655.2 564.7 649.8 559.5M671 569.9Q662.8 565.2 656.6 558.1M670.1 569.6Q656.9 565.3 646.4 556.2M486 376.9Q489.1 363.8 488.8 350.3M483.3 382.9Q487 372.6 487.6 361.6M481.7 386.4Q480.9 372.6 476.2 359.5M481.9 385.9Q490.4 375.2 502.6 369.1M486 376.9Q490.7 364.3 489.3 350.9M485.8 377.5Q490.9 369.6 498.6 364.1M483.3 382.8Q485.5 370.9 485.3 358.8M480.8 388.4Q482.1 373.2 478.1 358.5M486.6 375.6Q492.3 368.9 499.2 363.8M483.8 381.7Q489.9 367.3 498.5 354.3M487.4 373.9Q491.7 366 498.6 360.3M483.9 381.6Q492.4 373 503.8 368.7M627.8 545.4Q618.3 549.5 609.8 555.5M625.8 545.7Q611.1 547.8 597 543.3M623.3 546Q611.4 548.4 601.3 554.9M625 545.8Q615 543.8 605.5 540.2M625.2 545.7Q611.8 546.1 598.7 543.6M626.2 545.6Q612.4 544.8 600 538.6M619.3 546.5Q608.7 547.2 598.7 543.4M497.5 246.6Q504.3 250 511.8 251.4M491.7 244.2Q504.3 243.7 516.1 239.3M488.4 242.8Q496.9 253.5 501.2 266.6M490.3 243.6Q505 243.5 519.7 242M490.6 243.7Q505.4 242.8 519.1 237.3M493.4 244.9Q502.5 247.9 509.8 254.1M495.7 245.9Q507.2 249.8 516.1 258M495.9 245.9Q506.3 251.6 518 253.7M492.2 244.4Q504.6 246.8 517.1 245.4M489.5 243.2Q503 248.2 513.9 257.5M489.6 243.3Q497 253.4 503.3 264.2M518.6 258.9Q528.2 264.8 537.1 271.6M525.8 259.9Q534.6 259.7 542.9 256.6M526.9 260Q533.5 260.9 539.4 264.1M523.9 259.7Q534.2 260.9 544.2 258.3M525.5 259.9Q533.1 262.1 540.9 260.8M518.5 258.9Q532.1 261.9 545.9 259.3M529.6 260.4Q538.8 260.7 547.9 259.3M520.4 259.2Q529.1 258.1 537.2 254.6M528 260.2Q534.3 260.5 540.3 262.7M528.2 260.2Q534.7 261.1 540.6 264.1M523.4 259.6Q535.1 261.7 546.9 260.3M519.2 259Q531.6 263 541.3 271.7M530.2 260.5Q535.6 262.1 540.7 264.3M655.7 403.5Q641 401.1 626.3 403.3M651 400Q646.6 393.1 642.8 385.9M659.8 406.7Q654 395.8 650.2 384M650.7 399.7Q643.3 397 635.6 396.2M651.1 400Q642.5 395.8 632.9 395.1M660.5 407.2Q648.3 405.7 636.2 406.9M658.5 405.7Q645.8 396.5 635.7 384.5M659.7 406.6Q648.4 399.3 636 394M652.9 401.4Q644.7 396.8 635.3 396.2M652.5 401.1Q641.9 395.6 630.1 394.4M649.2 398.6Q642.1 392.8 633.3 389.8M648.1 397.8Q641.2 389.3 636.7 379.4M657.9 405.2Q644.2 399.6 629.8 395.7M656.1 403.9Q646 395.1 640.3 383.1M638.2 183.1Q635 192.4 633.1 202.1M634.6 188.6Q629 197.4 620.9 204.2M640.2 179.9Q632.8 187.7 622.9 192M640.9 178.9Q630.8 190 618.9 199.3M635.7 187Q630.9 197.3 622.5 204.9M642.7 176.2Q634.2 187.6 624.2 197.6M638.4 182.7Q632.8 196.5 633.3 211.4M636.9 185.1Q631.3 194.3 623.9 202.1M641.9 177.4Q634.5 190.5 623.8 201M636.8 185.2Q632.3 194.6 632.2 205.1M641.5 178Q628.9 188.5 615.2 197.4M638.2 183Q629.9 190.7 619.5 195.1M505.6 429.2Q511.4 442 516.1 455.3M507.3 430.6Q518.1 436.8 530.4 438.5M508.9 431.9Q516.9 437.8 526.3 441M507.3 430.7Q514.6 443.5 520.1 457.1M511.8 434.3Q519.6 441.2 526 449.3M504.4 428.3Q512.5 434.6 521.8 438.8M513.8 435.9Q520.7 441.7 529.5 443.8M512.2 434.6Q517.8 440 521.2 447M514.1 436.2Q522.2 444 532.3 449.1M503.9 427.9Q511.3 438 514.7 450M508 431.2Q516.8 437.1 527 440.2M629.6 512.9Q621 513.4 612.9 510.6M639 509.1Q623.5 514.3 611.8 525.8M635.7 510.4Q627 514.3 619 519.4M636.6 510.1Q622.2 510.5 608.7 505.3M638 509.5Q629.5 519.6 622.4 530.8M631.2 512.2Q620.7 516.2 609.7 518.3M626.9 514Q619.1 516.8 612.7 522.1M632.8 499.6Q622.5 505.1 614.9 514.1M625.2 501.8Q615 502 605 500.1M631 500.1Q616.5 502.6 602.4 498.7M627.9 501Q616.1 506.4 607 515.6M638.4 498Q626.7 495.9 617.2 488.9M638.6 498Q621.4 495.3 606 487M634.1 499.2Q624.2 509.1 616.9 521M628.6 500.8Q620.4 503.1 612.6 506.8M509 308.3Q515.2 303.2 520.1 296.7M505.2 311.4Q512 303.2 515.8 293.2M506.3 310.6Q514.2 303.9 523.1 298.4M499.9 315.8Q508.3 307.2 514 296.7M508.1 309Q514 304.8 520.8 302.4M505.9 310.8Q511.5 303.5 515.5 295.2M509.5 307.9Q513.5 303.7 516.3 298.6M505.3 311.4Q510.2 305.6 517.2 302.7M501.2 314.8Q506.4 308 509.9 300.2M530.8 281.8Q538.5 276.5 543.5 268.7M530.2 282.2Q538.9 276.3 549.2 274.4M519.3 289Q526.7 278.6 533 267.5M531.3 281.5Q539.6 276.2 546.9 269.4M520.7 288.1Q532.9 282.5 545.9 279.5M530.7 281.9Q537.3 278 542.3 272.2M520.8 288Q531.8 279.1 545.6 276M523.1 286.6Q532.3 280.5 538.8 271.7M527.9 283.6Q537.6 278.7 544.2 270.1M512.1 376.6Q519.7 370.9 526.6 364.2M506.9 379.9Q517.9 375.3 529.7 373.2M506.1 380.5Q511.5 374.2 515.5 366.9M508.4 379Q517.5 371.7 528.8 369M505.4 380.9Q515.3 372.5 521.4 361M512.6 376.4Q518.6 371.4 526 368.9M510.4 377.7Q515.4 372.6 519.7 366.9M505.6 380.7Q511.6 375 516.5 368.4M513.6 375.7Q518.3 371.9 524.1 370.3M509.6 378.2Q515.9 376.2 522.6 375.8M510.4 377.7Q516.5 371.7 521.8 365M512 376.7Q518.9 372.6 526.7 371.2M529.1 226.4Q535.3 221 538.6 213.6M534 223.8Q541.4 219.3 549.7 217.4M529.4 226.2Q539.7 221.1 551.2 220.4M527.5 227.2Q534.5 223.4 539.4 217.1M533.6 224Q542.6 220.8 549.6 214.4M529.4 226.2Q539.7 222.8 550.5 224.2M522.5 229.9Q534.2 222.3 548 220.2M532.2 224.7Q538.8 221.9 543.7 216.6M532.4 224.6Q539.2 221.6 546.2 219.3M534.1 223.7Q542.4 218.6 550.1 212.6M528.5 226.7Q536.2 222.6 544.7 220.8M656.4 238.9Q651.7 227 643.7 217M658.6 245.4Q659.5 233.9 662.9 222.9M659.2 247.3Q654.3 231.6 645.3 217.9M659.5 248.1Q657.7 236.8 660.4 225.6M656.2 238.3Q653.4 228.3 655.1 218.1M656.1 237.9Q652 230.5 646.8 223.8M659.7 248.7Q659.1 233.5 663.2 218.8M660 249.6Q656.9 237.5 655.2 225.2M658.1 244.1Q653.4 234.1 644.8 227.3M659.7 248.9Q660.9 233.8 666.3 219.6M656.4 239Q653.1 229.3 646 221.7M661.1 253Q656 239.3 655.1 224.7M659.2 247.4Q655.4 237.1 647.6 229.3M639.7 518.6Q629.6 510.9 617.5 507.5M631 509.5Q625.3 503.4 621.4 496M635.2 513.9Q626.7 501.5 622.5 487M635.6 514.3Q626.7 504.9 622.8 492.7M638.5 517.3Q626.6 510.8 613.3 508.6M630.1 508.5Q623.7 502.7 618.9 495.5M639.4 518.3Q623.1 511.2 605.6 507.8M637.2 516Q635 503.4 633.8 490.7M632.3 510.8Q624.5 503.7 619.6 494.5M639.9 518.8Q626.9 507 609.9 502.3M507 283.4Q514.8 290.3 519.5 299.6M501.8 279.2Q513.1 287 521.4 298M503.9 280.9Q515.2 289.5 528.3 295.1M503.9 280.9Q514 282.3 524.2 281.8M505.7 282.3Q510.9 292.1 513.8 302.8M511.6 287.1Q517.4 294.4 519.9 303.4M506.2 282.7Q519.6 286.2 533.4 287.6M502.7 279.9Q505.3 290.2 506.5 300.7M505.6 282.2Q516.8 283.1 528.1 282.5M503.3 280.4Q512.4 287 522.2 292.7M502.1 279.4Q506.4 292.8 508.9 306.6M506.7 283.1Q521.7 287.1 536.9 284M502.5 279.7Q507.4 294.4 510.4 309.6M503.2 280.3Q517.1 287.7 532.8 288.7M503.2 280.3Q518.2 288.8 535.5 290.2M503.1 280.2Q512.1 289.7 517.4 301.6M511.2 552.2Q518.1 547.8 525.8 545M512.4 550.5Q516.3 539.6 516.9 528M515.2 546.2Q519.8 539.5 523.2 532.2M509.7 554.4Q514 543.6 513 532M511.5 551.8Q517.5 544.1 526.2 539.5M509.7 554.5Q517.4 542.9 527.6 533.3M510.1 553.9Q519.5 543.9 530.8 536.3M508.7 555.9Q512.1 543.5 512.2 530.6M509.3 555.1Q518.2 547.8 529.3 544.7M512.8 549.9Q519.3 543.1 526.9 537.3M512.5 550.3Q515.9 542.3 516.6 533.7M508.5 556.3Q512.3 544.2 514.3 531.6M503.3 192.7Q512.7 202.9 524.9 209.6M505 195.1Q506.9 204.1 505.4 213.2M508 199.2Q514.9 205.7 523.6 209.4M507.6 198.7Q513.6 208.4 514.9 219.6M503.7 193.2Q511.5 206.8 515.1 222.1M509.9 201.8Q513 209.1 513.2 217M503.9 193.5Q508.1 208 509.6 223.1M502.8 191.9Q511.7 202.8 524.2 209.2M509 200.5Q512.4 208.9 512.5 217.9M506.7 197.3Q516.3 206.7 528.7 212.1M509.2 200.9Q515.9 207.8 524.8 211.4M504.2 193.9Q511.5 205.9 523.1 213.9M507 197.7Q513.7 207.5 517.5 218.6M507 197.8Q515 202.4 523.7 205.1M509 200.5Q511 208.5 511.4 216.7M639.1 243.3Q633 237.9 626 233.6M643.8 251.8Q637.7 239.8 633.9 226.8M642.1 248.8Q633.9 236.8 622 228.6M642.5 249.5Q642.8 237.4 645.5 225.7M643.9 251.9Q642 236 641.9 219.9M645.7 255.2Q642.3 242 643.2 228.4M644.8 253.6Q635 245.3 622.8 241.2M641.5 247.5Q639.7 237.8 641.5 228.2M638.3 241.8Q633.5 231.8 626.6 223M643.4 251.1Q632.4 245.1 620.1 242.1M638.1 241.4Q632.5 232.2 631.1 221.5M492.6 218.4Q501.4 216 508.3 210M489.8 218.6Q500 220.5 509.1 225.5M486.4 218.9Q499.9 215 512.8 209.3M490.5 218.6Q498.6 215.2 504.8 208.9M498.2 217.9Q507.2 218.4 516 220.8M496.6 218Q504.6 218.8 511.9 221.9M485.6 219Q496.7 221.7 506.8 226.9M490.9 218.5Q502.1 212.5 510.2 202.6M492.1 218.4Q503.9 218.4 515.8 219.4M494.3 218.2Q505 217.3 514.2 211.8M486.8 218.9Q497.4 221.4 506.3 227.8M649.5 390.4Q634.8 392.3 621 397.6M644.9 390.7Q633.1 389 622.5 383.4M639.5 391Q630.7 390 623 385.6M646.4 390.6Q635.9 387.6 626.3 382.5M639.2 391.1Q629.1 393.3 620.3 398.9M647.9 390.5Q638.2 388.6 629.2 384.7M647.9 390.5Q638.3 393.5 630.7 400M638.5 391.1Q630.9 391.4 623.5 389.9M644.1 390.7Q636.2 391.4 629.3 395.2M650 390.3Q640.6 385.7 632.2 379.5M648.7 390.4Q637.3 394.9 627.5 402.4M642.3 390.8Q630.6 392.5 619.5 396.7M645.7 390.6Q634.2 392.3 622.9 389.4M652.5 351.9Q646.6 342.4 643.4 331.7M656.2 357.4Q652.1 347.4 649.2 336.9M652.5 351.9Q649 343.2 647.5 334M650.2 348.4Q643.2 341.7 634.5 337.4M649 346.7Q642.5 339.6 639.4 330.5M650.5 348.9Q645.3 337.9 636.1 329.8M656.4 357.8Q644.9 345.5 629.2 339.3M654.3 354.6Q642 344.2 628.6 335.1M498.4 160.8Q509.1 159.8 519.7 157.4M498.4 160.8Q505.7 161.7 513 160.3M489.7 158.8Q497.7 162.7 503.5 169.5M496.7 160.4Q505.2 164.5 512.5 170.7M493 159.5Q501.7 162.2 510.7 160.9M499.8 161.1Q506.3 162.8 512.2 166.2M500.2 161.2Q506.8 161.9 513.3 161.1M495.5 160.1Q504 163 511.5 167.9M499 160.9Q505.7 161 512.2 159.4M498.3 160.7Q507.5 161.9 516.7 162M488.5 158.5Q499.1 163.1 508.1 170.3M490.8 159Q502.8 158.3 514.1 154.3M487.8 158.4Q500 166.2 507.4 178.6M496.2 160.3Q506.7 160.4 517.1 159.3M616.5 234.1Q609.5 226.7 606.6 217M614.2 232.1Q607 226.6 598.3 224.5M615.5 233.2Q606.2 225.1 595.7 218.6M618.7 236Q613.1 226.8 609.6 216.5M621.8 238.7Q609.6 233.7 596.4 232.5M617.4 234.9Q610.8 229.8 603.5 225.7M616 233.6Q606.3 225.8 600.5 214.7M623 239.8Q610.5 233.4 597 229.2M618.3 235.6Q608.1 228.3 600.8 218.1M616.2 233.8Q609.1 225.4 603.2 216.3M614.5 232.4Q608.1 225.8 605.4 217M507.7 463.8Q515.1 458.2 520.2 450.4M500.4 469.4Q508.3 462.5 514.7 454.2M504.5 466.2Q512.6 463.4 521.1 463.8M500.7 469.1Q510.6 461.4 516.7 450.5M508.3 463.3Q514.5 459.2 519.1 453.4M502.2 468Q509.1 458.3 515 448M500.9 469Q509.2 460.6 516 451M500.8 469.1Q510.9 465.7 521.2 463.2M508.3 463.3Q515.4 459.8 522.9 457.3M503.2 467.2Q511.5 464.8 520 465.6M499.9 469.7Q509 462.5 515.1 452.6M487.1 484Q494 487.1 501.5 487M476.2 479.6Q491.9 485.8 504.3 497.2M477.7 480.2Q491.5 477.8 503.9 471.3M481.5 481.7Q486.9 488.5 490.6 496.4M476.3 479.6Q485.2 489.5 491.1 501.5M482.9 482.3Q492 483 500.7 479.8M488.2 484.4Q497.2 487.7 506.7 486.6M475.9 479.5Q485.6 486.8 494.3 495.2M485.9 483.5Q493.4 488.8 498.5 496.4M483.5 482.5Q495.8 483.3 508.1 482.3M487.2 484Q496.2 491.9 504 500.8M483.9 482.7Q495.9 485.2 508 484M481.6 481.8Q491.2 487.6 498.6 495.9M645.4 398.7Q636 394.6 626 392.5M639.8 394.6Q630.8 390.1 620.9 388M646.6 399.6Q639.3 389.2 634.6 377.5M642.3 396.4Q635.8 391.5 627.8 389.8M640.9 395.3Q632.3 389.4 623.3 384.2M645.2 398.5Q635.1 391.2 623.4 387.1M642.3 396.4Q633.5 389.5 627.7 379.8M639.9 394.6Q632.4 387.9 622.6 385.2M644.7 398.2Q634.4 391.8 626.8 382.5M659.7 545.7Q654.2 539.1 647.4 533.7M658.9 544.5Q654.8 538.6 649.8 533.3M659.9 546Q657.6 535.8 658 525.4M661.9 549.1Q660.5 540.1 662.1 531.2M656.5 540.8Q653.1 532.7 651.3 524.2M663.1 551Q654.7 547.2 645.6 546.3M662.4 549.9Q658.1 536.7 656.2 523M659.7 545.7Q650.7 538 640 533M663 550.8Q660.7 537.5 661.8 524M658.9 544.5Q653.9 538.6 648.2 533.6M662.8 550.5Q658.2 539.5 657 527.5M662.9 550.7Q657.5 542.8 649.4 538M664.5 162Q656.5 156 646.9 153.1M667.4 166.2Q665.6 157 665.7 147.6M664.7 162.3Q656.2 155.1 646.3 150.3M666.3 164.5Q663.5 152 661.7 139.2M668 167.2Q657.1 158.7 643.5 155.7M669.6 169.5Q661.8 162.3 652.1 157.9M661.9 158.1Q655.8 151.6 648 147.1M666 164.1Q663.6 153.9 664.4 143.5M665.8 163.9Q656.3 159.1 646.3 155.4M664.4 161.8Q660 154.3 657 146M521.2 562.7Q527.8 555 530.6 545.2M528.8 557.5Q535.8 553 540.4 546.1M528.9 557.3Q535.1 552.1 542.5 548.9M492.2 339.1Q502.6 334.1 509.8 324.9M494.6 338.4Q501.9 337.4 509.3 337.6M483.8 341.2Q497.8 333.6 508.5 321.9M496.8 337.9Q505.5 332.8 512.5 325.6M487.8 340.2Q499.8 339.3 511.3 342.6M486.5 340.5Q498.7 336.3 511.5 337.6M493.8 338.7Q502.2 337.3 509.4 332.7M487.3 340.3Q496.8 336.7 504.6 330.2M493.1 338.8Q499.8 334.7 504.7 328.7M624.6 247.3Q613.7 237.3 606.1 224.5M618.8 242.5Q608.6 237.7 598 234.2M627.2 249.5Q620 235.8 616.9 220.6M625.6 248.2Q616.5 240.6 611.8 229.7M621.5 244.8Q614.2 236.2 607.8 226.9M625.6 248.2Q614.8 243.2 603.2 240.3M618.1 241.9Q610.6 233.1 604.5 223.2M514.1 338.1Q520.2 335.8 526.6 334.8M506.2 341Q514.1 335 518.5 326.1M508 340.4Q515.6 340.3 523 342.1M510.9 339.3Q519.9 333.9 525.5 325.2M506.9 340.8Q514.6 339.1 522.5 339.4M515.6 337.6Q523.2 334 530.1 329.3M511 339.3Q520.4 339.3 529.8 340.5M510.9 339.3Q521.2 336.6 531.7 337.6M665.7 593.6Q664.3 608.5 668.4 622.8M666.2 592.5Q660.8 601.9 652.2 608.5M666.7 591.4Q667.1 603.8 670.1 615.7M666.8 591.4Q659.5 597.6 651.5 602.7M669.9 584.7Q659 593.9 645.8 599M663.7 598Q659.5 606.4 659.2 615.8M668.4 587.9Q656.7 600.5 643.5 611.6M666.9 591Q667.3 603.7 669.9 616.1M664.1 597.1Q659.3 606.7 657.3 617.1M487 434.1Q501.7 433.2 516.2 430.5M498.4 438.1Q508 441.8 516.9 446.9M490.4 435.3Q499.1 442.4 507 450.4M498.7 438.2Q507.8 441.2 517.2 443.1M491.4 435.7Q501.6 443.4 510.8 452.3M487.7 434.4Q494.8 441 500.4 449M498.5 438.2Q505.7 439.3 512.9 439.2M491.8 435.8Q500 438.7 507.7 442.8M495.1 437Q505.5 440.3 516.4 441.1M490.7 435.4Q503.5 439 514.5 446.2M496.8 437.6Q502.9 441.7 508.3 446.6M485.2 433.5Q497.7 433.5 509.2 428.6M517.1 507.8Q524 510.5 530.2 514.4M516.3 507.5Q526.2 511.8 533.9 519.6M511 505.4Q521.9 511.5 530.4 520.6M520.9 509.3Q528.1 512.7 533.4 518.6M517.5 508Q524.2 509.2 531 508.3M514.2 506.7Q523.1 512.4 530.2 520.3M518 508.1Q525.3 509.8 531.1 514.5M665.1 384.1Q652.4 389 641 396.4M664.5 384.1Q649 385.2 634.8 391.4M654.4 384.7Q644.1 381.7 634.3 377M660.8 384.3Q648.6 388.2 638.2 395.5M659.9 384.4Q649.6 381.7 639.7 377.9M665.2 384.1Q651.8 385.9 638.6 383M656.2 384.6Q644 384.6 632.2 382.1M658.1 384.5Q647.6 381.7 638.3 376.1M663.1 384.2Q651.1 383.1 639.8 378.7M655.8 443.5Q649.5 437 646.3 428.4M666.6 451.6Q657.8 440.1 653 426.4M655.5 443.2Q648.3 438.4 640.6 434.5M655.7 443.4Q646.9 438.2 637 435.7M664.9 450.4Q656.6 442.4 652.1 431.8M656.2 443.7Q649.1 441 641.5 440.4M656.7 444.1Q650 437.2 644.8 429M660.3 446.9Q651.2 440.2 640 438.4M661.7 448Q654.4 437.8 651.3 425.7M658.5 445.5Q652.4 437.9 650.1 428.3M666.3 451.4Q657.3 446.6 647.1 446.1M655.5 443.2Q651.3 438.2 649.4 431.8M665.2 450.6Q656.8 438.7 650.3 425.7M510.8 492.9Q521.4 490.7 530 484.1M515.5 491.3Q524.8 488.3 534.5 488.2M504.4 495.1Q513 488.6 519.3 479.9M515.8 491.3Q525.6 487.1 536.2 485.6M505.3 494.8Q515.4 494.5 524.8 498.4M514.4 491.7Q523.2 490.3 532 490M515.1 491.5Q525.8 489.3 536.8 488.7M660.7 153.5Q648.8 149.8 636.7 147.1M656.5 149.5Q649.7 142.1 640.6 138M664.5 157.2Q653.8 145.8 639.3 140.1M659.3 152.2Q651.9 146.1 642.9 143.2M654.8 147.9Q648.1 138.6 642.7 128.5M664.8 157.5Q655.5 145.2 648.1 131.7M664.1 156.8Q651.8 153.3 639.3 150.9M661.2 154Q657.3 142.8 655.9 131.1M663.8 156.5Q652 153.6 639.9 152.1M484.3 518.5Q486.1 506.6 484.1 494.8M488.7 508.1Q493.6 500.5 501.3 495.9M486.6 513.1Q486.8 501 482.8 489.5M483.9 519.5Q488.9 509.3 497.5 501.9M489.7 505.8Q492 498.2 491.5 490.3M487.3 511.4Q491 502.4 496.9 494.7M484.2 518.9Q486.9 507.8 484.7 496.6M511 440.2Q517.1 433.7 521.6 426.1M503.2 446.8Q513.5 444.1 524.1 443.7M504.1 446.1Q510 438.2 514.9 429.6M504.2 445.9Q514.6 442.1 525.7 441.6M510.2 440.9Q514.6 435.7 517.5 429.5M504.6 445.6Q512.7 438.6 516.8 428.8M508.4 442.4Q516.1 438.7 524.3 436.6M504.4 445.8Q514 440.2 524.9 438.3M511.2 440.1Q515 434.2 518.3 428M503.5 446.6Q513.6 440.9 524.8 437.9M505 445.3Q508.8 436.5 510.9 427.3M507.9 442.9Q514.2 438.3 521.8 436.4M647.9 537.9Q640 530.1 633.9 520.8M643.6 534.2Q635 529.3 625.5 526.2M651.5 541Q642.9 533.5 631.8 530.8M649.2 539Q640.6 536.9 631.8 535.9M649.5 539.2Q642.7 529.2 639.8 517.4M645.5 535.8Q636.9 530 627 526.6M646.6 536.7Q640.5 530.3 636.2 522.6M650.8 540.3Q642.4 530.6 638.3 518.3M650.4 540Q639.1 536.4 627.2 536.7M639.3 414.7Q632.2 410.9 624.2 409.3M640 415.3Q632.6 411 624.1 410M643.5 418.5Q639.4 407.3 637.7 395.4M638.1 413.6Q631.6 405.1 628.1 395M639.3 414.8Q633 410.8 626 408.3M638.1 413.7Q630.4 408.2 622.2 403.6M642.9 417.9Q633.7 410.4 628.8 399.5M635.8 411.6Q629.4 403.9 620.2 399.8M636.7 412.5Q631.8 406.9 625.3 403.3M641.1 416.3Q631.8 413.5 622.2 412.2M635.4 205.6Q627.6 195.5 616.4 189.3M630.9 195Q624.9 185.4 616.3 178M634 202.2Q628.5 192.8 627.7 181.9M636.1 207.3Q629.4 198.2 620.1 191.6M633.2 200.3Q625.9 191.4 617.8 183.1M630.7 194.5Q624.6 187 616.6 181.5M632.1 197.6Q629.2 188.6 630.4 179.2M635.7 206.4Q623.8 193.5 610.2 182.3M631.8 197Q628.7 184.1 626.8 171M630.6 194.2Q629.3 186.5 630.1 178.8M636.2 207.5Q628.4 193.2 616.5 181.9M630.7 194.4Q624.8 188.1 617.9 183M493.6 285Q506.3 292.5 517.1 302.5M493.9 285.1Q503.1 287 511.7 290.9M494.8 285.2Q506.3 285.5 517.8 284.8M494.5 285.2Q507.6 286.2 520.6 285M486.6 284Q502.4 288.4 515.9 297.9M488.4 284.2Q499.8 285.1 511.1 282.9M487.7 284.1Q502.4 280.2 514.9 271.5M493.5 285Q506.5 286.1 518.9 282.2M487.9 284.2Q500.9 280.7 513.3 275.5M486.1 283.9Q499.2 291.6 508.8 303.4M493.2 285Q503.8 285 514.3 283.9M632.1 540.7Q623.7 546.6 613.8 549.4M625 546.4Q620 552.4 617.9 559.8M631.9 540.9Q620.3 547.6 607.7 552M626.7 545Q617.9 551.9 613.1 562M623.7 547.4Q619.2 551.1 615.1 555.3M625.6 545.9Q621.3 551.1 618.8 557.3M622.9 548Q618.1 552.5 611.9 554.3M627.2 544.6Q621.4 548.4 614.8 550.4M632.4 540.5Q628.2 549.9 628.5 560.2M504.6 199.6Q509.1 191.6 511.5 182.8M501.9 204.2Q509 197.5 517.8 193.1M505 199Q508.1 188.7 510 178.1M500.3 206.8Q509.4 200 520.5 197.7M499.9 207.5Q502.3 197.6 501.2 187.6M504.4 200Q511 193 519.4 188.1M502.9 202.5Q506.7 193.8 508.2 184.5M666.2 306.9Q663.3 315.2 661.8 323.8M667 305.8Q663.8 312.3 661.3 319.1M672.1 299.6Q671 310.3 672.1 321M670 302.2Q661.1 311.7 649 316.6M665 308.2Q661.3 316.4 659 325M667.8 304.8Q661.1 312.7 652.1 317.9M665.6 307.5Q661.2 313.5 654.8 317.2M512.3 495.5Q523.3 489.5 533.7 482.5M503.6 498Q514.9 498.8 526.1 500.7M503.7 497.9Q515.2 491.8 524.6 482.9M509.1 496.4Q518.1 494.9 527.2 494.3M514.4 494.9Q521.7 492.1 529.5 492.9M510.9 495.9Q521.1 491.6 528.5 483.5M508.8 496.5Q517.8 490.3 525.5 482.7M504.2 497.8Q519.6 494.1 535.5 493.5M515.9 494.5Q523.9 490.5 531.4 485.7M505.5 497.4Q517.9 497.6 529 503.2M511 495.8Q522.1 491.1 534.1 490.8M507.4 496.9Q520.8 498.2 533.5 502.9M507.6 496.8Q520.9 491.3 530.7 480.8M617.3 192.2Q604.7 191.3 592.7 195.3M609.3 190.5Q598.8 189.1 589.3 184.5M609.3 190.5Q602.6 190.6 596.1 192.3M616.1 191.9Q605.6 193.6 595.4 196.6M608 190.2Q598.9 187.8 591.5 182M614 191.5Q602.4 189.8 591 191.9M610.7 190.8Q603.1 189.2 595.3 189.8M620.9 193Q609.3 190.3 598.5 185.1M619.8 192.7Q606.5 196.7 594.2 203.1M632.9 506Q622 513.2 609.3 516.3M634.6 504.6Q624 511.6 611.6 513.7M634.6 504.6Q626.7 514.1 620.8 525M640.8 499.3Q629.8 502.3 618.5 503.6M632.5 506.3Q624.1 513.3 616.9 521.4M640.2 499.8Q630.4 510.4 622.1 522M635.4 503.9Q623 511.4 609 515.6M633.4 505.6Q624.3 515.5 617.5 527M642.4 498Q634.1 506.4 623.3 510.8M641.4 498.8Q636.1 509.4 634.3 521M511 378.6Q519.8 381.3 528.9 380.2M516 379.9Q525.3 381.5 533.7 385.7M512 378.8Q521.4 378.9 530.8 377.9M515.6 379.8Q525.5 383.1 534.4 388.6M512.9 379.1Q525 380.6 537.2 380.3M512.9 379.1Q522.4 382.6 529.8 389.4M512.2 378.9Q523.3 381.2 534.6 381.3M506.8 377.5Q519.6 382.3 529 392.1M515.7 379.8Q524.9 382.2 534.3 380.3M508.7 378Q517.4 380.5 524.3 386.4M511.3 378.7Q521 381.2 531.1 381M516 379.9Q525.4 381.4 533.8 385.8M504 376.7Q518.2 381.9 530.6 390.4M512.2 378.9Q522.7 382.9 533.9 383M509 378.1Q518 382.5 525.5 389.3M508.3 377.9Q518 378.9 527.6 377.1M640.6 348.1Q631.8 353.9 623.7 360.6M647.2 345.5Q637.2 350.9 629.4 359M639.9 348.3Q628.9 349.6 617.8 349.5M644.4 346.6Q632.2 347.9 620.4 344.4M640.7 348Q632.8 354 627.1 362.1M645.5 346.1Q635.4 353.9 628.5 364.6M641.3 347.8Q634.7 350.6 629.5 355.6M638.7 348.8Q632.6 352.8 628.4 358.7M493.6 292Q503.5 285.3 514.3 280.4M493.2 292.4Q501.1 289 509.4 287.1M492.4 293.1Q499.8 286.4 505.4 278.1M490.2 295Q497.2 283 499.7 269.4M495.6 290.2Q503 284 508 275.8M496 289.8Q503 283.7 512 281.4M491.1 294.2Q504.2 290.1 517.9 289.8M495.7 290.1Q502 284 505.1 275.8M486.1 298.7Q492.1 289.7 494.4 279.2M493.3 292.2Q501.7 285.3 512.4 282.8M504 331.9Q513.4 334.2 521.5 339.5M511.4 334.2Q519.4 335.7 527.4 334.6M509.4 333.6Q516.9 336.9 522.8 342.5M514 335.1Q523.1 337.8 532.7 337.2M513.4 334.9Q519.8 338.6 525.4 343.3M507.9 333.2Q515.9 336.3 524.5 336.3M504.4 332.1Q516.6 336.3 529.5 337.7M513.5 334.9Q521.1 337.9 528.1 341.8M512.8 334.7Q522.2 337 531.7 335.1M502.4 331.5Q514.4 335.1 524.8 342.1M510.7 334Q519.7 336.8 529 337.3M526.6 551.5Q534.1 546.3 542.9 543.8M530.1 549.4Q536 545.8 540.3 540.5M530 549.4Q536.2 544.5 543.9 542.4M529.7 549.6Q535.7 546.7 542.3 546.1M529.8 549.5Q538.8 545.3 548.4 542.9M526 551.9Q535.4 548.4 545.4 548M624.8 524.5Q615.2 528.2 606.6 534M623.9 524.9Q617.5 530.7 612.4 537.7M623.3 525.1Q615 531.3 607.2 538.1M617.8 527.3Q611.8 528.4 605.6 528.5M616.7 527.8Q610.3 531.1 604.5 535.3M616.2 528Q608.1 531.5 599.3 532.8M616.8 527.8Q609.9 532 604 537.5M625 524.4Q616.9 527.4 608.2 527.8M624.6 524.6Q618.1 531.3 612.2 538.6M620.9 526.1Q612.9 526.2 604.8 525.7M622.7 525.3Q614.1 526.4 605.4 526M494.6 308.4Q498.1 315.2 503.7 320.5M493.2 303.9Q494.2 317.1 490.1 329.8M495.1 309.7Q496.6 318.3 494.6 326.8M492.8 302.8Q495.2 314.2 493.7 325.7M492.6 301.9Q496.2 312.2 503.5 320.2M495.3 310.5Q499.8 318.6 505.7 325.8M494.4 307.5Q496.8 318.4 496.3 329.5M492.3 301Q497.3 312.8 505.5 322.6M492.6 302.1Q496.7 314.8 504.4 325.7M496.1 312.9Q497.8 322 496 331M492.6 302.1Q496.7 312.9 501.7 323.3M495.9 312.2Q499.3 321.2 499.9 330.7M638.4 295.8Q625.6 300.9 614.3 308.8M639.1 295.8Q627.3 295.8 615.9 292.8M639.5 295.7Q626.7 298.5 615 304.2M628.9 296.7Q620.3 295.7 612.3 292.3M629 296.7Q620.3 297.2 612.4 300.7M632.9 296.3Q623.8 297.2 614.8 296.1M628.8 296.7Q619.7 297.3 611.2 300.6M653.9 432.3Q647.4 424 643 414.5M645.1 428.8Q637.6 427.2 630 428.5M646.5 429.4Q637.4 427.2 628 427.9M653.7 432.2Q644.2 431.3 634.9 433.5M646.8 429.5Q640.5 423.7 635.6 416.6M643.8 428.3Q636.2 425 630.2 419.4M646.4 429.3Q637.6 427.4 628.7 428.5M636.1 473.8Q626.3 474.9 616.7 477M633.6 474Q623.5 475.6 613.5 473.9M635.1 473.9Q622.6 476.1 611 481M638.1 473.7Q626.9 470.5 616.7 464.8M629 474.3Q622.1 473.6 615.3 472M637.4 473.7Q625.6 478.6 614.3 484.7M634.7 473.9Q623.8 474.7 613.5 470.9M633.6 474Q623.3 476.2 613.1 473.6M629.9 474.2Q619.2 475.5 608.9 478.2M632.7 474Q624.3 472.6 616.1 469.9M502.4 378.7Q515.1 383.5 528.5 382.2M504.7 379.5Q516.6 381.7 528.5 382.9M511.3 381.8Q520.8 384 529.1 389.3M497.5 377Q506.8 384.5 513.5 394.4M505.8 379.9Q513.5 385.4 519.7 392.5M506.3 380.1Q520.4 383 534.7 383.5M499.2 377.6Q511.6 378.7 523.5 374.8M509.9 381.3Q521.5 385.4 533.9 385.9M500.7 378.1Q515.5 380.6 530.5 379.7M512.5 382.2Q519.9 383.5 527.2 382.3M660.9 261.3Q653.9 273.5 652.5 287.5M654.4 265.9Q648.5 271.6 645.1 279M662.6 260.1Q651.9 263.9 640.7 266.1M654.8 265.7Q644.2 272.8 635.6 282.4M661.3 261Q649.4 264.4 637 264.5M655.2 265.4Q645.3 271.5 634.7 276.4M662.4 260.2Q656.6 270.1 652.8 281M655.3 265.3Q645.4 273.6 639 284.8M650.7 268.7Q644 276.7 640.9 286.7M654.5 265.9Q642.7 268.9 630.7 267.9M662.3 260.3Q655.9 275.1 653.1 290.9M501.5 504.9Q509.7 513.1 516.2 522.6M496.2 501.1Q506.9 511.7 516 523.6M496.7 501.5Q504.9 507.9 514.7 511.2M499.7 503.7Q508 508.7 517.2 511.9M490.1 496.8Q499.4 511.8 504.4 528.8M498.8 503Q510.1 510.7 522 517.5M491.1 497.5Q502.5 501 514.4 502.4M496.6 501.4Q508.5 506.2 521.1 508.7M499.2 503.3Q508.8 507.4 519 508.8M494.7 500Q502.4 510 507.1 521.7M501.4 504.8Q511.1 513.2 522.9 518.3M502.7 505.8Q508.2 511.3 511.4 518.3M514.7 373.8Q525.1 380.2 534.3 388.1M512 373Q520.9 374.1 529.8 373.7M506.2 371.2Q516.5 374.6 526.2 379.5M503.7 370.5Q519.9 370.6 534.8 364.2M516.5 374.3Q524.4 375.9 531.5 379.7M510.5 372.5Q520.3 373.5 530.2 373.2M508.4 371.9Q522.3 372.8 535.1 367.2M510.8 372.6Q521.1 372.2 531.2 370.3M509.9 372.3Q519.7 374.7 529.6 372.8M533.7 533.4Q540.6 530.7 547.9 531.3M524.7 536.1Q533.3 532.7 542.6 533M528.6 535Q541.1 531.6 554 530.7M534.1 533.3Q541.2 529.8 547.7 525.1M526.9 535.5Q537.7 535.2 548.6 536.3M534 533.4Q541.4 531.4 548.2 527.8M525.2 536Q538.4 537.4 551.2 541.2M524.2 536.3Q535.8 530.2 543.6 519.8M528.9 534.9Q541.1 529.5 552.6 522.8M532.9 533.7Q540.7 533.1 548.4 534M481.9 558.6Q486.2 569 487.9 580.1M490.2 564.8Q496.4 568.5 503.3 570.4M481.3 558.1Q490.8 565.1 498.3 574.3M491.9 566.1Q496.8 572.3 501.1 578.9M491.6 565.9Q500.2 572.2 506.6 580.8M483.1 559.5Q497.3 562.1 511.6 562.4M482.7 559.2Q490.4 566.1 496.2 574.8M488.6 563.6Q495.7 568.4 503.8 571.4M481.7 558.4Q489.4 563.8 494.8 571.5M486.5 562Q497.4 564.2 508.6 564.1M485.9 561.6Q491.6 567.7 496.4 574.5M483.4 559.7Q491.7 564.4 501 566.3M486.2 561.8Q492.8 566.7 500.8 569.1M483.8 560Q491.8 571.6 496.6 585M491.9 566.1Q501.2 570.6 511.5 571.6M491.9 566.1Q500.4 572 509.9 576.2M490.4 565Q500.5 568.8 511.2 570.4M486.9 562.3Q493 571.7 494.6 582.7M628 255.2Q619.2 248.9 608.7 246.1M626.4 254Q617.6 245.8 612.2 234.9M621.6 250.2Q613.6 243.3 603.8 239.6M625.6 253.3Q618.9 245.8 616.3 236.1M626.8 254.3Q615.4 248.4 603 244.8M627.7 255Q618.7 252.1 609.3 251.2M631.9 258.3Q618.3 254.1 604.1 255.3M629.7 256.5Q621.9 250.7 612.6 248.2M621.5 250.1Q614.8 243.1 609.2 235.2M642 236.1Q629.3 225.7 621.5 211.3M641.9 236Q631.6 232.5 620.7 231.7M643 237Q635.3 225.3 633 211.6M640 234.2Q630.5 226.1 620 219.4M633 227.7Q626.8 219.8 623.3 210.4M636.2 230.7Q628.3 227.4 619.8 227.6M641.7 235.8Q636.5 221.6 633.5 206.8M638.3 232.7Q630.1 224.2 619 220.3M642.3 236.4Q631.8 234.8 621.2 234.5M637.4 231.8Q628.6 226.4 618.8 222.6M639.4 233.7Q633.6 223.3 629.9 212M641.5 235.6Q639.3 225.3 640 214.8M527.3 515.3Q534.5 521.7 542.3 527.1M521.5 509.9Q527.7 515.6 531.2 523.3M522.6 511Q532.7 516.6 543.7 520.4M525.1 513.2Q532.8 520.9 537 531M527.1 515.1Q532 521.7 534.6 529.6M528.4 516.3Q534.2 520.4 540.8 523.1M522.1 510.4Q528.4 515 535.7 517.7M522 510.4Q529.3 516.8 532.8 525.8M649.4 307.2Q634.1 310.9 618.3 309.8M647.4 308Q636 314.1 628.3 324.5M643.8 309.4Q633.4 311.8 622.7 312.6M643.6 309.5Q635.3 312.4 626.6 312.8M642.5 310Q632.9 313.5 625.1 320.1M642.9 309.8Q631.9 314.2 620 315.4M643.8 309.4Q631.9 313.7 619.4 314.9M648.8 307.4Q636.3 315.2 627.7 327.1M641.5 310.4Q631 314.1 622.7 321.5M642.7 309.9Q633 316.5 626.2 326.1M648.9 307.4Q637.8 310.5 626.4 308.3M637.7 311.9Q630.3 314.8 624.1 319.8M636.4 312.5Q629.5 314.5 622.4 315.1M474 372.1Q481.3 387 483.6 403.4M476.5 376.2Q486 381.3 496.6 383.8M478.9 380.2Q484.7 389.7 486.8 400.6M480.2 382.3Q484.1 389.5 489.8 395.4M505.4 251.2Q517.9 247.4 531 248M506.3 250.6Q520 245.6 534.1 242.5M500.4 254.1Q511.5 249.7 523.1 247.3M502.6 252.8Q510.6 246.9 516.3 238.9M506.7 250.4Q514.9 241.7 520.9 231.3M499.2 254.9Q510.8 251.3 522.8 252.8M497.5 255.9Q507.7 248.4 516.9 239.7M510.5 248.1Q518.6 242.8 528.2 240.9M661.9 187.7Q656.6 200.1 647.6 210.3M659.8 193.8Q658.6 201.7 658.6 209.7M664.3 180.7Q655.8 189.7 644.7 195.2M659.2 195.6Q656.5 204.5 650.1 211.3M661.1 190Q657.5 203.8 655.8 218M660.5 191.7Q653.2 203.2 643.3 212.5M662.9 185Q658.5 198.3 648.8 208.3M664.3 180.7Q664.6 199.5 671.7 217M660.5 191.9Q653.3 202.7 645.2 212.9M663.4 183.5Q663.7 196.1 665.3 208.7M659.1 195.9Q657 207.9 650.1 218M660.7 191.2Q659.4 204.2 661.6 217M645.8 416.4Q636.3 422.8 627.8 430.5M647.7 415.7Q632.1 415.4 617.2 410.5M641.6 417.9Q630.1 421.2 620.5 428.4M647.1 415.9Q639.1 423.6 632 432.1M645.5 416.5Q633.1 415.4 622.1 409.7M646.3 416.2Q637.2 426 629.4 436.9M645 416.7Q631.2 417.4 618.1 413.1M640.7 418.2Q630.9 422.2 622.7 428.8M637.1 419.4Q626.8 420 616.5 419.4M638.4 419Q629.3 423.7 623.1 431.9M660.5 378.2Q651.6 381.8 643.4 386.6M660.9 378.2Q650.1 374.7 640.3 369.3M653.5 378.4Q644.4 378.5 635.7 380.9M655.3 378.4Q647.8 376.6 640.8 373.2M665.3 378.1Q653.7 378.2 642.5 375.2M663.9 378.1Q651 377.7 638.7 381.6M664.1 378.1Q654 382.2 644.6 387.9M667.5 378Q653.6 381.7 641.9 390.1M663.3 378.1Q654 378.1 645.2 375.1M659.7 378.2Q648.7 378.3 638.4 382M661.5 378.2Q652.6 379.7 645 384.4M657.9 378.3Q646.8 378.7 636.2 382.2M481.1 217.1Q486.1 205.2 493.1 194.4M477.8 226.4Q487.4 218.3 497.8 211.3M477.5 227.2Q473.8 208.8 468.6 190.9M478 225.8Q478.2 213.2 474.3 201.3M480.6 218.5Q479.2 204.1 475.4 190.1M478.2 225.2Q482.6 214.5 482 203M480.7 218.2Q490.2 207.3 502.6 199.9M481.4 216.3Q481.4 206.1 479.7 196M477.7 226.5Q485.2 217.2 494 209.2M479.7 221.1Q484.4 205.3 485.8 188.8M478.2 225.2Q486.6 210.3 496.4 196.3M489.7 541.6Q501.9 533.7 512.6 523.7M493.9 540.3Q504.2 536.3 512.3 528.7M489.4 541.6Q505 540.7 520.3 543.7M494.7 540Q505.3 539.3 516 539.6M492.4 540.7Q501.2 534.5 507.2 525.6M493.4 540.4Q505 541.7 516.4 544.8M490.3 541.4Q500.7 543.9 510.4 548.6M495.3 539.9Q507.9 534.4 517.6 524.5M489.7 541.5Q505.4 540.4 519.9 546.3M498.8 538.8Q506.6 536.2 514.7 535.8M495 539.9Q505.7 537.5 516.4 536M488.2 542Q504.1 535.7 517.5 525.3M655.9 295.7Q653.4 302.8 654.2 310.3M658 291.5Q649.9 298.1 641.2 303.9M659.8 287.8Q662 301.1 666.7 313.8M658.2 291.1Q656.6 301.6 658.5 312.1M656.4 294.7Q650.9 302.7 643.9 309.4M660.9 285.7Q652.3 293.1 641.4 295.9M658.3 290.9Q650.3 298.6 640.9 304.5M655 297.5Q651.9 303.5 647.5 308.7M660.7 286.1Q649.9 292.8 638.2 297.4M653.5 347.6Q647.1 354.4 642.8 362.7M654.9 346.5Q647.3 349.4 639.2 351M652.4 348.4Q644.2 356.2 638.6 366M658.3 344Q648.9 346.9 639.1 347.8M649.4 350.5Q642.3 356 638.4 364.1M654.4 346.9Q646.4 355.4 643.1 366.5M653 347.9Q646.2 353.8 638 357.5M649.2 350.7Q641.5 354.9 633.3 357.9M643.2 274.6Q635 268.7 628.6 260.8M643.9 274.9Q635 269.9 624.9 267.7M646.8 276.5Q642.3 267.3 640.2 257.3M647.5 276.9Q635.3 272.2 622.2 271.9M643.2 274.5Q636.6 263.7 633 251.6M637.8 271.6Q629.2 269.8 620.7 271.6M641.9 273.8Q633.2 269.2 625.4 263.1M637.2 271.3Q628.5 269.5 619.7 271.2M638.1 271.8Q632.5 265.7 627.9 258.9M639.6 272.5Q629.6 267.2 619 263.1M644.6 275.3Q634.1 266.1 628.7 253.2M486.6 340.1Q493.3 334.6 501.2 331M481.6 343.7Q489.8 336.3 496.1 327.2M475.2 348.3Q489.7 341.9 504.7 336.7M478.9 345.6Q484.8 337.4 488.4 327.8M483.1 342.6Q494.5 337.2 506.6 334M479.9 344.9Q493 341.2 506.4 338.7M482 343.4Q492 335.4 503.7 330.3M485.7 340.8Q492.9 334.9 498.8 327.8M485 341.3Q492.8 337.2 501.5 336.3M480.5 344.5Q488.3 335.5 492.5 324.3M481 344.1Q494.3 340.2 508.2 339.7M487.4 339.6Q496.3 333.3 502.2 324.2M475.5 348Q486.6 339.4 500.3 336.3M476.5 347.3Q486.8 338.2 492.2 325.5M479.1 345.5Q488.8 340.7 499.6 339.1M476.4 347.4Q484.2 338.3 490.1 327.9M475.7 347.9Q491.1 338.1 508.9 334.1M485.5 341Q492.7 336.6 500.6 333.4M644.1 238.8Q636 245.6 629.8 254.2M635.1 242.1Q627.6 245.3 620.5 249.4M648.9 237Q637.1 250.3 628 265.7M638.2 241Q626.1 246 613 245.1M638.4 240.9Q625.5 241.5 613.4 236.9M634.5 242.3Q624.7 245.5 614.5 244.7M646 238.1Q636.1 248.1 628 259.7M645.9 238.1Q633.9 239.2 622.1 236.7M647.8 237.4Q637.9 245.4 632.4 256.9M479.9 546Q487.8 537.2 490.8 525.7M475.6 549.4Q486.6 539.4 500.1 533.4M478 547.6Q485.7 537.2 489.8 525M481.7 544.7Q493.3 535.3 506.8 529M486.1 541.3Q495.2 533.9 502.3 524.5M481.2 545Q488.5 534 493.4 521.8M482.7 543.9Q492.9 535.7 505.3 531M487.6 540.2Q494.5 534.3 500.8 527.8M478.2 547.4Q490.9 539.6 500 527.9M484.2 542.7Q493.6 535.6 501.2 526.6M479.2 546.6Q490.4 536.4 504.6 531.1M479.3 546.6Q489.2 540.5 500.8 539.3M479.4 546.5Q489.9 539.5 501.1 533.9M500.3 202Q508.8 210.6 513.4 221.9M500 201.8Q511.1 202.7 522.1 202.4M509.8 207.1Q516.1 212.7 520.8 219.7M511.2 207.9Q516.9 212.8 521.3 218.9M510.6 207.6Q519.2 211.5 528.3 214M510.8 207.6Q521 210.9 531.6 213M507.8 206Q518.2 212.3 524.8 222.5M498.5 201Q504.9 209.5 508 219.7M510.7 207.6Q520.9 212.3 531.5 215.8M504.3 204.1Q515.2 205.2 526.2 205.4M505.6 204.9Q513.8 211.1 521.1 218.3M504.6 166.5Q515.9 168.8 527.3 169.8M502.6 165.7Q510.5 170 516.1 176.9M499.1 164.3Q508.2 165.9 517.1 163.2M499.1 164.3Q510.1 169.9 519.7 177.6M501.4 165.2Q513 169.7 522.4 177.8M505.6 166.8Q514.6 169.8 523.9 171.4M501.7 165.3Q510.9 168.7 519.1 174M502.8 165.8Q515 167.2 527.1 166.2M504.7 166.5Q513.5 167.6 522.4 167.2M502.2 165.5Q512.7 166.2 523.2 165.6M610.4 220.7Q597.9 221.2 586.4 226.1M608.8 220.7Q595.9 221 584.2 226.4M606.2 220.6Q597.2 220.2 588.7 217M618.3 221Q607.4 226.5 597.2 233.4M606.3 220.6Q597.6 220 589 218M615.9 220.9Q604.9 216.5 595.3 209.5M618.7 221Q608.8 215.7 600 208.7M612.7 220.8Q600.6 220.2 588.6 218.6M604.9 220.6Q595.2 219.5 587 214.1M606.4 220.6Q596.7 221.4 587.7 225.3M613.5 220.8Q603.1 222.3 593.2 218.9M659.9 515.5Q653 506.7 644.6 499.3M655.9 508.8Q648.9 499.3 638.7 493.5M659.5 514.8Q648.8 501.5 644.6 484.9M654.5 506.4Q647.2 495.1 635.9 487.9M659.4 514.7Q653.1 498.8 651.1 481.8M654 505.6Q650.4 494.3 650 482.5M655.8 508.6Q650.1 499.6 646.9 489.4M655.5 508.1Q652.9 499.7 652.3 491M654.6 506.6Q647.8 495.2 638.7 485.5M655.7 508.5Q652 497.4 652.8 485.7M659.6 515Q651.7 500.3 646.5 484.3M642.7 443.7Q633.5 447.8 623.8 450.5M644.2 442.6Q636.1 447.6 626.9 450.2M645.9 441.6Q638.9 444.5 631.3 445.2M643.4 443.2Q636.9 447.3 631.2 452.6M643.3 443.3Q636.5 447.1 629.4 450.3M644.5 442.4Q637.1 445 629.3 446.2M649.6 439.1Q643.1 445.1 637.8 452.1M647.9 440.2Q638.7 444.1 628.8 445.9M646.6 441.1Q636.2 447.2 628.7 456.5M641.8 444.2Q635.5 448.6 628.2 451M642.7 443.6Q636.3 447.8 629.4 451.3M647.9 440.3Q640.8 444.9 635.6 451.7M644.5 442.5Q636.5 446.1 627.8 446.9M645.8 441.6Q638.4 451.1 632.1 461.4M647.6 440.4Q639.4 444.9 630.9 448.7M648.5 439.8Q640.4 444 631.3 445.1M660 446.3Q654.6 453.9 650.6 462.3M666 439.3Q658.6 447.4 648.9 452.4M660 446.3Q651.6 454.2 641.3 459.2M659.8 446.5Q653.5 453.8 648.4 461.9M664.1 441.6Q656.8 448.6 648.5 454.2M661.6 444.5Q656 454.2 652.3 464.7M659.1 447.5Q654.3 452.5 647.7 454.9M666.2 439Q657.8 444.4 648.4 447.5M664.2 441.4Q657.1 450.4 651 460.2M658.6 448Q651.2 455.3 643.1 461.8M666.7 438.5Q661.2 452.2 659.7 466.9M656.3 551.6Q648.8 550.9 641.4 552.1M667.9 553.6Q654.1 550.5 642.5 542.4M668.3 553.7Q657 555 646.1 558.4M665.5 553.2Q655.9 556 647.7 561.6M669.3 553.9Q654.3 550.9 639 553.2M668.3 553.7Q654 555.9 641.9 563.8M663.1 552.7Q653.7 552.5 645.1 556.4M659.4 552.1Q650.1 549.5 641.8 544.6M662.3 354.6Q654.9 348.6 649 341.2M656.9 350.5Q649.4 345.2 640.5 342.6M660.2 353Q653.6 348 645.8 345.2M667.4 358.5Q659.4 345.6 657.8 330.5M658.3 351.5Q648.7 347.8 638.7 345M663 355.1Q654.9 346.3 648.2 336.3M667.1 358.3Q657.5 353.7 647.2 350.8M657.4 350.9Q649.6 345.4 643.9 337.8M658.7 351.8Q648.7 346.7 637.9 344.3M665.3 356.9Q656.5 347.6 648.8 337.3M665.6 357.2Q656.2 351.8 645.3 350.6M662.8 355Q655.8 348.4 646.8 344.9M629.9 268.1Q617.7 268.5 606.6 263.3M636.3 269Q627.8 265 620.1 259.5M643.7 270.1Q627.4 266.3 611.9 260.2M632.2 268.4Q622.1 268.5 612.2 270.7M635.3 268.9Q623.2 262.3 612.5 253.6M634.4 268.7Q620.4 266.8 606.4 269.1M632.2 268.4Q619.6 268.2 607.9 263.4M529.9 550.4Q537.2 551.5 544.6 550.7M524.7 548.6Q534.6 552 545.1 552M529 550.1Q538.1 552.1 545.3 558M529.5 550.3Q537.5 551.4 545.6 551.1M530.5 550.6Q538.6 554.3 546.2 558.8M530.4 550.6Q539.2 552.6 548.3 552.7M531 550.8Q537.4 553.6 543.3 557.6M502.4 260.5Q516.5 266.5 531.7 268.5M496.8 254.8Q503.5 268.6 505.9 283.6M506.2 264.4Q514.3 272.9 520.9 282.6M502.6 260.7Q512.6 265.9 523.5 268.8M503.7 261.9Q513.9 272.5 526.7 279.8M501.5 259.6Q512 271.8 520.7 285.4M502.4 260.5Q508.7 275.4 510.3 291.5M508.1 266.3Q515.9 274.3 521.8 283.9M504.8 263Q516.4 271.8 529.7 277.8M499.6 257.6Q506.9 268.2 509.5 280.8M502.3 260.4Q510.3 266.2 520.1 267.9M499.5 257.6Q509.6 263.3 521.1 264.9M498.6 353.9Q512 347.7 521.9 336.8M507.6 355.1Q520.4 360.4 530.6 369.8M505.5 354.8Q516.3 351.3 525.9 345.5M500.3 354.1Q514.6 347.6 526.5 337.3M505.2 354.8Q515.3 352.2 523.8 346.3M498.5 353.9Q512.3 366.7 521.4 383.1M510.5 355.4Q519.1 354.7 527.3 351.8M499.5 354.1Q513.8 363.1 525.9 374.9M498.7 354Q514.4 357.7 528.7 365.4M509.9 355.3Q518.7 357.4 526.6 361.8M502.5 354.4Q513.9 350.9 522.6 342.7M499 354Q517 354.1 533.2 361.7M498.5 478.3Q510.5 471.8 523.5 467.8M501.5 476Q507.3 468.8 511.7 460.7M505.6 472.8Q514 466.5 523.7 462.7M503.9 474.2Q510.2 466.8 515.5 458.7M505.3 473.1Q510.6 469 513.6 463M503.1 474.8Q510.1 470 518.3 468M500 477.2Q507.2 467.9 511.9 457M499.5 477.6Q508.8 473.7 518.7 471.4M503.7 474.3Q512.2 466.5 519.3 457.6M496.9 479.6Q502.7 470.1 507 459.8M494.7 481.3Q508.9 474.4 524.6 473.5M503.5 474.5Q510.8 467.8 516.1 459.4M494.7 481.3Q502.7 474.5 512.5 470.9M496.4 479.9Q505.9 470.7 511 458.6M500.2 477.1Q507.2 470.1 511.1 461M498.1 478.7Q508.2 476.3 518.6 475.4M479.4 187.4Q490.4 186 500.8 182.3M478.2 187.3Q488.8 192.7 497.2 201.1M475.1 186.9Q484.8 191.2 492.8 198M482 187.8Q491.9 193 500.3 200.4M480 187.5Q488.7 188.9 497.3 186.7M475.9 187Q484.4 190.7 491.8 196.2M485.5 188.2Q494.4 188.3 502.9 186M485.4 188.2Q496.2 187.4 505.7 182.2M481.9 570.2Q497.2 569.4 511.8 564.4M494.8 570.4Q507.2 570.7 518.2 576.3M491 570.4Q502.6 571.5 514 569M492.5 570.4Q504.9 566.7 516.9 562M481.1 570.2Q494.6 572.9 507.4 577.9M628.8 568Q619 567.5 610 571.4M633.4 568.6Q622.1 565.1 612 559M630.9 568.3Q624 568.6 617.3 570.6M624.6 567.4Q619.2 566 614 563.8M627.6 567.8Q620.1 567.7 613.2 570.5M631.1 568.3Q621.5 567.5 612.4 570.5M629.6 568.1Q622.5 567 616.2 563.5M632.6 568.5Q621.4 565.7 611.6 559.4M626.8 567.7Q618.7 565.9 611 562.8M494.2 328Q503.8 329.2 512.8 332.9M504.4 327.3Q514.4 324.8 523.8 320.5M503.9 327.4Q516 326.7 528.1 327.7M495.5 327.9Q508.7 326.6 520.8 321.6M494.9 327.9Q509.2 329.5 521.7 336.6M496.9 327.8Q509.6 324.8 520.8 318M497.2 327.8Q508.6 328.3 519.7 330.9M611 210.2Q605.9 214.5 599.7 216.9M617.7 205.6Q610.8 211.2 602.2 213.3M616.7 206.3Q606.1 212.7 594.9 217.9M614.1 208.1Q604.9 211.8 595.2 213.7M612.6 209.1Q606.8 213.9 603.5 220.7M609 211.6Q600.7 217 590.9 218.9M486.9 506.6Q496.6 508.5 506.5 507.2M488.8 507.4Q497.3 514.3 504.9 522.1M476.2 501.7Q491.2 498.6 505.3 492.5M485.7 506Q494.2 510 502.3 515M486.8 506.5Q497.2 514.1 503.3 525.4M489.1 507.6Q496 511 503.6 511.9M476.3 501.7Q492.2 503.5 508.2 502.7M480.6 503.7Q489.9 510.1 497.7 518.4M481.5 504.1Q490.8 505.7 500.1 504.7M483.3 504.9Q493.9 507.5 504.7 508.2M476.3 501.7Q486.7 507.6 496.6 514.3M487.3 506.8Q497 512.8 504.3 521.7M477.8 502.4Q483.1 512.9 487 524.1M480.1 503.5Q492.9 508.4 506.6 510.1M652.6 412.7Q648.4 420.6 645.4 429M650 416.4Q645.6 424.4 638.1 429.8M650.4 415.8Q647.3 424.4 648.2 433.6M649.2 417.6Q644.9 426.2 641.9 435.3M648.7 418.2Q644.8 424.1 638.7 427.7M651.5 414.2Q643.1 420 634.1 425M651.3 414.5Q646.3 420.5 639.4 424.2M655.1 409.2Q646.7 411.7 638.2 413.5M666.2 490.1Q663.3 477.1 664.9 463.8M664.2 484.5Q659.5 477.8 653.9 471.8M664.5 485.3Q665 475.9 669.3 467.5M662 478.5Q659.9 469.9 654.2 463.2M663.1 481.5Q663.1 471 665 460.7M665.1 486.9Q666.3 474.8 671.3 463.7M663.6 483Q661.5 474.7 661.8 466.1M664.8 486.3Q662.1 477.3 661.6 468M663.1 481.5Q663.4 472 666.1 462.8M634.9 459.4Q626 464.1 615.9 464.7M642.1 454.4Q630.1 462.9 621 474.6M641.9 454.6Q627.5 458.9 612.5 459.8M637.2 457.8Q629.9 465.8 625.7 475.6M635.1 459.2Q627.4 465.3 620.4 472.2M637.1 457.8Q626.8 466.1 613.9 469.4M643 453.8Q635.1 462.7 631.5 474M526 253.1Q534.8 262.6 540.4 274.1M528.3 255.3Q537.9 262.8 543.2 273.7M527 254Q534.3 259.7 539.1 267.6M520.8 248.3Q532.6 254.2 545.2 257.9M525.2 252.4Q532.5 258.7 536.6 267.5M520.2 247.7Q530 258.2 535.9 271.4M519.4 246.9Q532.9 254 547.9 256.1M522.6 249.9Q528.6 258.9 530 269.6M630 292.9Q624.7 296.8 620.7 301.9M635.1 289.6Q627.6 292 619.8 293.6M634.7 289.9Q628.6 296.1 625.6 304.3M633.7 290.5Q626.3 295.3 617.9 297.9M630.9 292.3Q624.5 296 617.3 297.5M636.2 288.9Q630.1 293 626.2 299.1M636.7 288.5Q626.3 290.1 615.7 289.1M629.1 293.5Q622.5 297.5 617.6 303.5M628.9 293.6Q623.7 296.4 618 298.2M634 290.3Q628.4 298.2 624.6 307.1M630.6 292.5Q624.2 294.6 617.6 295.6M644.8 359.8Q636.5 356.6 628.9 352M639.4 358.6Q630.2 358.9 621.2 360.3M636.8 357.9Q625.8 356.8 614.8 358.2M635.6 357.7Q627.9 353.7 621.8 347.7M643.9 359.6Q631.8 357 619.7 359.9M634.3 357.4Q627.2 356.5 621 353M642.7 359.3Q630.4 357.7 618.1 358.6M640.5 358.8Q631.1 352.7 622.7 345.3M635.8 357.7Q624.9 355.7 613.9 355.3M636.5 357.9Q627.6 355.7 619.6 351.2M633.9 357.3Q624.1 355.4 614.3 357M640.4 358.8Q627.6 360.6 615.6 365.3M508.6 482.5Q517.9 483.6 527.3 483.1M510.2 483Q517.9 487.8 523.5 494.8M519.1 485.4Q527.6 488.5 536.5 487.6M516.7 484.8Q524.6 488.7 531.8 493.9M511.5 483.4Q521.3 485.4 531.3 485.3M511.3 483.3Q520 485.2 527.6 490M518.2 485.2Q524.2 488 529.6 491.7M518.9 485.4Q525.6 487.8 532.8 487.6M511 483.2Q522.2 482.5 533.3 480.4M517.1 484.9Q524.1 488.2 530.5 492.4M514.2 484.1Q522.7 488.2 530.8 493.2M514.1 484.1Q524.6 485.7 535.3 485.4M510.6 483.1Q520.5 489.1 529.7 496.3M517 484.9Q523.6 486.8 528.6 491.5M513 483.7Q521.1 486.4 528.3 491M489.1 221.9Q493.8 213.9 497.3 205.2M491 220.5Q502.1 217.7 513.4 216.3M492.6 219.3Q501.6 215.3 511.4 213.7M487.6 222.9Q494.6 213.2 497.8 201.6M486 224.1Q498.7 223.9 511 227M488.4 222.4Q498.4 216.5 505.9 207.6M494.9 217.7Q499.8 212.1 502.1 205.1M487.9 222.7Q491.1 213.8 492.8 204.6M485.7 224.3Q495.8 219.6 506.8 218.2M494.3 266.2Q501.8 257.5 505.8 246.8M496.1 264.3Q508.6 258.8 522.1 256.7M498.9 261.3Q503.1 250.8 505.9 239.9M497.4 262.8Q506 251.4 511.9 238.5M498.1 262.1Q505.3 255 514.9 251.8M497.1 263.2Q503.9 255 509.4 245.8M497.9 262.4Q502.3 248.3 504 233.6M494.9 265.6Q502 257.3 511.2 251.6M495.3 265.1Q502.3 254.1 505.1 241.3M657.6 413.2Q648.5 405.2 638 399.2M654.6 406.6Q652.6 400.3 653 393.6M657.9 413.8Q655.4 402.7 654.7 391.4M659.6 417.3Q660.2 404.2 665.7 392.3M658.8 415.7Q653.5 405.4 647 395.8M656.3 410.2Q654.7 401.9 656.1 393.5M656.3 410.3Q650.7 403.9 642.8 400.5M645 376.3Q636.5 368.8 630.2 359.3M641.8 373.8Q635.1 369 629.7 362.7M641.2 373.4Q635.6 366 631.2 357.8M642.2 374.2Q631.1 368.4 619.2 364.8M642.9 374.7Q637.3 367.7 633.1 359.9M639.4 372Q632.5 368 625 365.6M648.7 379Q641.8 366.5 637.7 352.9M638.4 371.3Q631.3 364.8 622.2 361.9M640 372.5Q631.6 364.9 624.3 356.3M641 373.2Q633.6 367.3 624.4 364.8M646.4 377.3Q639.9 369.4 635.8 360.2M638.4 371.2Q631.1 363.9 625.5 355.2M490.9 453.2Q495.4 445.7 496.7 437.1M496 449.3Q503 443.6 511.2 439.7M493.2 451.5Q496.8 444.4 497 436.4M496.1 449.2Q506.1 444.5 517.1 444.4M499 447Q504.8 441.8 511.9 438.7M492.7 451.9Q501.7 446.5 511.4 442.4M515 198.6Q530.1 191.8 542.6 181M524.7 196.9Q537.5 194.8 550 198M525.9 196.7Q536 193.6 545.3 188.8M526.8 196.5Q534.5 194 540.6 188.8M519.3 197.8Q529.7 195.1 540.5 195.8M519 197.9Q532.7 197.8 546.1 200.2M527.9 196.3Q535.2 194.2 542.7 194.7M523.2 197.1Q534.3 193 542.4 184.5M513 175.9Q519.4 171.5 523.5 164.8M507.4 179.7Q515.4 172.6 520.4 163.2M507 179.9Q516.8 177.3 526.9 175.7M510.5 177.6Q520.2 174.7 530.1 173.3M515.1 174.5Q522.2 169.7 528.1 163.5M510.3 177.7Q518.8 174 528 172.2M515.4 174.3Q522.5 168.3 526.8 160.2M514.2 175.1Q523.8 170.6 534 167.9M511.9 176.7Q518.8 171.3 522.6 163.5M512.7 176.1Q520.6 170.1 526.6 162.1M512.3 176.3Q521 171.8 530.5 169.4M485.4 162.7Q491.7 152.8 501.7 146.7M485.2 162.9Q492 155.2 495 145.4M484.6 163.6Q493.1 154.8 497.3 143.2M484.6 163.7Q489.5 156.7 491.7 148.5M486.9 160.8Q494.7 152.1 504.9 146.1M486.4 161.4Q489.8 152.6 492 143.4M522.3 198.5Q528.4 195.9 533.7 191.8M516.8 200.8Q523.7 198.7 530.8 197.2M515.4 201.4Q523.6 194.3 529.3 185M516.6 200.9Q528.2 199.5 539.3 203.2M513.7 202.1Q522.6 199 532.1 198.4M517.3 200.6Q525.4 195.5 532.3 188.6M519.5 199.7Q528.9 197.2 538.6 197.8M519.7 199.6Q527.1 197.6 534.6 197.9M516.8 200.8Q528.1 196.9 536.5 188.4M522.3 198.5Q529 196.6 534.6 192.5M519.5 199.7Q529.7 197.3 540 199.7M517.8 200.4Q525.5 197.7 532.1 192.7M479.4 304.8Q487.5 310.4 492.9 318.7M476.3 303.7Q488.5 307.4 501.3 307.6M477 304Q486.9 307.7 494.6 314.9M476.1 303.7Q487.7 310.7 497.1 320.5M483.5 306.1Q491.4 310.7 497 318M476.4 303.8Q485.3 307.6 493.2 313.4M477.6 304.2Q486.2 307.9 493.7 313.5M484.5 306.5Q492.8 309.4 500.1 314.4M492 398.8Q495.4 411.9 492.8 425.2M493.4 402.8Q494.6 414.4 492.9 426M488.5 388.8Q487.2 403.9 482.9 418.5M490.4 394.3Q501 405.1 514.8 411.6M489.1 390.4Q486.9 401.9 481.9 412.4M492.8 401Q493.6 414.8 492.1 428.4M490.1 393.4Q494.4 404.9 501.7 414.7M490.7 395.1Q494.1 407.2 502.5 416.7M488.8 389.8Q487.3 404.5 481.2 418M493.8 403.9Q496.5 411.4 497.6 419.2M488.3 388.2Q503.1 398.3 518.7 407.1M489.3 391.1Q490 409 488.8 426.9M527.5 532.4Q534.7 535.1 542.2 536.7M527 531.9Q538.8 535.6 550.9 537.8M528.7 533.3Q534.8 541.9 538.2 551.9M525.8 530.9Q533.7 536.4 543.1 538.2M529.6 534.2Q535.8 542 540.5 550.9M526.8 531.7Q533.8 542.5 536.7 555.1M533.9 537.8Q539.8 542.5 546.5 545.9M532.2 536.4Q538.8 543.1 541.6 552.1M534.2 538Q540.5 542.5 545.1 548.8M526.3 531.3Q534.4 541.5 537.9 554M527.8 532.6Q535.2 536.3 543.5 536.4M527.2 532.1Q532.9 540.2 536.4 549.5M528.7 533.4Q536.3 536.4 544.4 537.7M534.3 538.1Q539.6 544.1 543.4 551.1M650.5 191.2Q643.9 194.7 639.4 200.7M662.1 186.7Q648.9 190.6 638 199M659.6 187.7Q649.6 196.6 642.4 207.8M660.2 187.5Q652.6 198 648.4 210.3M662.2 186.7Q651.9 187.7 641.8 185.3M660.2 187.5Q647.3 190.9 634.2 188.7M650 191.4Q644.2 195.3 640.1 201.1M662.7 186.5Q652.5 185.6 643.1 181.9M662.1 186.7Q650 189.9 640.7 198.2M657.1 188.7Q647.1 190.8 636.9 191.2M474 383.3Q478.2 395.9 481 408.9M477.5 385.6Q489.9 387.4 502.4 387.3M474.8 383.8Q487.4 385.3 499.7 382.6M482.9 389.3Q490.3 393.7 495.9 400.4M475.9 384.5Q485.3 385.4 494.3 382.6M474 383.3Q485.9 390.3 499.4 393M483.4 389.6Q491.3 394.9 500.6 396.7M484.3 390.2Q489.8 394.5 496.2 397.2M488.1 525.3Q495.2 532.9 505 536.5M482.4 521.1Q496.9 526.7 512.4 527.1M478.2 517.9Q488.3 529.6 493.2 544.2M477.6 517.5Q491.3 525.9 505.7 533M481 520.1Q488.3 534.4 492.8 549.7M485.7 523.6Q497 531.1 505.8 541.4M488.4 525.5Q497.8 532.9 509.5 535.4M478.8 518.4Q486.9 527.9 491.3 539.7M481.6 520.4Q494.5 527.2 508.8 529.9M487 524.5Q496 534.1 503.7 544.8M640 201.5Q632.9 209.3 623.5 214M643.5 197Q638.4 208.3 637.1 220.7M642.4 198.4Q636.6 203.8 629.1 206.2M647.4 192.1Q636.2 202.7 621.5 207.2M640.2 201.2Q635.3 210.3 631.8 220.1M645.9 193.9Q634.8 202 621.8 206.8M641 200.3Q638.1 207.2 636.4 214.5M646.8 192.8Q639.1 200.5 629.4 205.3M646 193.8Q637 204.1 632.6 217.1M638.6 197.5Q625.4 186.8 611.2 177.6M631.7 187.4Q628 178.2 626.7 168.3M633.6 190.2Q628.7 182.9 621.2 178.5M638.5 197.4Q638.5 184.2 641.3 171.2M631.4 187Q627.6 177.5 626.9 167.3M635.4 192.8Q629.4 184.1 620.3 178.9M638.7 197.7Q637 183.6 641.2 170M632.2 188.1Q624.7 178.5 614.6 171.8M638.6 197.6Q628.8 183.7 624.2 167.3M632.7 188.9Q626.7 180.8 618.1 175.6M634.2 191.1Q631.7 179.2 631 167.1M631.4 186.9Q623.8 178.3 621 167.1M509.1 436Q520.5 437.2 532 436.2M512.3 436.4Q520 436.9 527.4 439.3M511.1 436.2Q522.6 435.7 534.1 433.6M511.6 436.3Q520.4 435.6 529.1 433.9M509.5 436.1Q519.6 433.7 529.4 430.4M506.3 435.6Q518.7 440.6 530.2 447.4M510.2 436.1Q521.1 437.3 531.9 436.1M502.2 435.1Q517 433.6 530.1 426.7M510.3 436.2Q521.2 437.9 531.1 442.8M506.1 435.6Q515.1 436.6 524 434.8M504.2 435.4Q516.3 437.3 527.7 441.6M479.6 458.6Q488.2 466.7 498.5 472.3M482 462.1Q482.8 472.9 481.1 483.7M483.9 464.7Q490.7 470.5 498.8 474.2M487.4 469.5Q491.5 475.1 492.7 481.9M486 467.6Q492.8 474.5 500.9 479.9M485.9 467.3Q490.2 476.4 492.2 486.3M483 463.5Q486.6 471.2 488.1 479.6M486.8 468.6Q490.3 475.5 493.1 482.6M481.7 461.7Q490.5 470.6 501.3 477M484.1 465Q487.6 473.1 487.8 481.9M479.8 458.9Q488 463.5 496.9 466.9M485 466.2Q491.6 471.9 499.1 476.4M509.1 345.8Q516.9 341.9 523.9 336.5M503.2 348.8Q512.2 346.4 521.6 346.9M503.8 348.5Q513.5 342.8 522 335.4M504.3 348.2Q515.3 342.9 526.9 339.1M502.5 349.2Q510.7 339.5 515.2 327.7M511.3 344.7Q520.4 341.6 530.1 341M512 344.3Q519.6 340.6 525.2 334.4M508.6 346Q519.3 343.6 530.2 343.2M509.9 345.3Q515.8 341.7 522.6 340.2M508.9 345.9Q515.6 343.5 520.8 338.6M646.4 346.6Q634.7 350.6 624.6 357.9M653.5 344.4Q646.7 352.9 643.5 363.4M648.7 345.9Q637.9 349.7 626.6 349M642.8 347.8Q635.2 351.1 628.1 355.3M648.3 346Q638 349.5 627.1 350.5M651.1 345.1Q640.8 350.3 633.4 359.1M651.4 345Q641.3 342.4 632.3 337.1M644.5 347.2Q636.9 350.7 629.6 354.9M640 326.8Q634.7 331.7 627.7 333.8M643.6 323.2Q638.5 332.6 635 342.7M638.4 328.3Q632.4 333.4 624.9 335.4M638.7 328Q633.7 332.9 629.2 338.3M640.6 326.2Q633.5 333.2 624 336.6M640.8 326Q633.4 335.3 622.7 340.4M644.2 322.6Q636.8 330 630.7 338.7M641.3 325.5Q634.3 332.1 628.8 340M637.4 329.3Q630.9 334.3 622.9 336.2M637.7 329Q629.2 334.2 619.9 337.8M638.6 328.1Q633 333.7 626.3 337.9M638.7 328Q632.2 332.8 627.9 339.7M640 326.7Q635.2 332 632.1 338.3M613.6 190.5Q607 194.5 601.5 199.9M614.8 190Q603 193.5 590.7 193.4M611.8 191.2Q601.1 193.2 590.2 194M608.5 192.5Q601.5 195.8 596.5 201.7M609.5 192.1Q599.7 195.5 591.6 202.1M611.2 191.5Q601.9 193.9 592.3 193.5M612.2 191.1Q602.8 195.6 592.5 195.5M613.2 190.7Q604.6 193.9 595.5 195.3M638.7 301.6Q631.7 305.6 625.6 310.7M637.8 302Q627.4 307.5 615.7 309.9M645.9 298.4Q630.9 299.8 616.3 296M645.9 298.4Q634.9 306.5 625.3 316.2M655.4 331.2Q649.1 339.7 641.8 347.2M658.8 323.3Q659.4 334 662.5 344.2M656.7 328.4Q653.7 337.4 648.1 345M658.8 323.5Q656.2 338.5 657.9 353.7M654.5 333.6Q650.3 342.6 643.9 350.1M654.5 333.5Q651.7 341.2 645.9 347M658.9 323.1Q652.9 336.9 653.6 352M657.3 327Q650.5 337.9 641.7 347.1M658.8 323.4Q657.9 337.2 663.1 350M659.5 321.8Q650.9 329.4 640.4 334M659.8 320.9Q656.5 337.8 658.2 354.9M659.3 322.1Q646.8 332.3 632 338.5M658.6 323.7Q652.7 334 651.5 345.8M479 471.7Q486.6 479.2 490.2 489.2M478.6 471.3Q487.3 476.1 497.2 476.8M478.2 470.9Q484 478.5 487.6 487.5M478.9 471.6Q486.8 480.8 491 492.3M484.5 477.9Q490.8 483 498.6 484.9M482.1 475.2Q489.7 485.7 494.5 497.8M485.1 478.7Q492.8 485.2 502 489.5M481.8 474.9Q487.1 483.6 491.7 492.7M482.9 476.1Q489.3 484.8 491.2 495.4M618.1 505.3Q610.4 501.7 601.9 501.3M625.5 509.5Q616.9 499.7 609.6 489.1M618.9 505.8Q613 502 607.6 497.5M621.2 507.1Q614.7 503.4 607.7 501.3M626.2 509.9Q618.2 500.8 612 490.4M625.9 509.7Q613.7 507 601.4 508.3M625.5 509.5Q613.5 502.9 603.7 493.4M616 504.1Q610.6 500.3 604.2 499.3M619.6 506.2Q612.4 502.3 607.4 495.8M624.9 509.2Q614.5 503.3 607.4 493.7M623.9 508.6Q614.6 502.3 603.8 499.4M622 507.5Q614.9 500.4 608.5 492.6M638 518.4Q627.6 509.9 618 500.5M644.2 523.3Q629.2 519.1 613.6 518.5M634.4 515.6Q625.7 508.8 615.7 504.4M644.7 523.6Q635.4 515 629.1 504M642.6 522Q631 516.6 618.7 513.3M643.2 522.5Q628.7 514.9 612.4 514.6M639.5 519.6Q629 510.7 615.8 506.6M645.4 524.2Q638.2 511.8 634.6 497.9M633.6 514.9Q624.6 510.6 614.8 508.7M639.2 519.3Q627 511.2 619 498.7M634.3 515.5Q623.8 507 616.6 495.5M633.8 515.1Q626.3 506.8 616 502.5M637.1 517.7Q629 512.2 623 504.6M657.4 534.2Q647.2 541 635.2 543.5M651.4 537.3Q639.9 543.8 627 547.1M651.3 537.4Q640.6 540.4 629.5 539.2M662.1 531.8Q646.4 535.4 630.4 536.4M658.2 533.8Q648.2 542.5 639.9 552.8M653.3 536.3Q642.1 544.9 633.5 556.2M659.1 533.3Q651.4 548.2 647.1 564.4M656.8 534.5Q650.1 544.6 644.8 555.5M656.5 534.6Q645.1 539 632.9 539M658.1 533.9Q647.8 532.3 637.8 529.6M659.8 533Q648.9 537.6 641.2 546.5M509.8 468.1Q519.1 467.6 528.4 468.6M506.4 468.3Q521.5 467.8 536.1 471.2M509.1 468.1Q519.6 465.9 528.6 460.1M513 467.9Q525.8 468.3 537.9 464.1M507.5 468.2Q522.2 467 536.3 471.3M509.2 468.1Q523.3 463 536.8 456.3M520.6 467.3Q529.7 466.1 537.5 461.4M516.5 467.6Q529 465.9 540.8 470.1M519.8 467.4Q529 466.5 537.9 468.9M641.4 575.8Q633.6 580.6 628 587.9M633.1 580Q627.5 582.7 621.3 583.1M638 577.5Q628.2 582.7 619.2 589.3M638.8 577.1Q629.7 579.2 620.4 579.1M633.7 579.7Q626.4 584.1 621.6 591.1M633.6 579.8Q628.7 583.4 625.4 588.5M641.2 575.9Q632.8 579.9 623.6 581.4M638 577.5Q631.6 581.9 626.7 587.9M637.3 577.9Q630.8 581.2 625 585.4M639.1 577Q632.9 584.3 627.6 592.3M634.5 579.3Q626 583.8 616.5 585.7M647 446.9Q638.8 444.8 631.3 440.9M642.5 446.6Q633 446.8 624 449.8M652.6 447.2Q641.5 442.6 630.9 437M651.9 447.2Q638.9 449.2 626.7 454.2M644.9 446.7Q635.7 446.2 627.4 442.2M645.7 446.8Q637.9 445.3 630.3 442.9M647.9 446.9Q637.7 448.3 627.7 450.9M653.7 447.3Q642.5 447.6 632.5 452.8M654.3 330.2Q646.7 323.8 637.5 320.3M653.2 328.9Q642.2 322.9 630.1 320M654.9 331Q647.3 324.5 639.1 318.8M646.5 321Q641.6 315.9 638.2 309.8M494.1 410.7Q506.5 404.7 520.3 404.6M494.2 410.6Q507.2 410.6 520.1 411.9M498.6 408.1Q505.9 403.6 512 397.4M498 408.4Q508 402.1 514.3 392.2M504.4 404.9Q510 400.5 514.6 395M500.1 407.3Q507.8 406.4 515.4 406.9M498.8 408Q504.8 401.8 507.9 393.6M496.1 409.5Q506.1 404.8 516.8 401.9M503.8 405.2Q513.1 400.1 520.7 392.7M497.2 408.9Q507 403.5 517.8 400.3M497.7 408.6Q507.1 404.6 517.2 403.4M496.6 419.3Q506 417.3 515 413.6M498.5 418.9Q511 419.1 522.4 424.2M507.9 417.1Q516.2 413.9 523.1 408.4M506.6 417.4Q514.2 416.7 521.3 413.5M503.9 417.9Q512.6 415.5 519.8 409.9M504.9 417.7Q512.2 414.8 518.9 410.9M504.6 417.7Q514.1 416.4 523.6 417.5M498.6 418.9Q509.4 417.2 520.4 418.1M491.4 233.9Q496.8 225.4 498.9 215.6M489.5 236.8Q495.1 229.6 502.4 224M484.8 243.6Q492.4 232 503.5 223.6M491.4 233.9Q495.2 224.9 497.2 215.2M484.3 244.4Q490.2 234.9 498.9 227.8M482.9 246.3Q487.8 232.2 490.2 217.5M641.2 324.3Q635 320.9 628.4 318.9M641.5 324.5Q636.8 321.3 632.5 317.6M641.7 324.7Q635 320.8 627.9 317.5M641.1 324.3Q634.7 319.1 629.3 312.9M650.3 329.7Q645 322.9 642.2 314.8M645.8 327.1Q639 325.2 632 324.6M645.3 326.8Q638.3 323.7 630.7 323.3M646.1 327.3Q639.6 324.8 632.7 324.3M648.4 328.6Q642 323 638.2 315.4M641.8 324.7Q634.3 320.5 625.9 318.5M643 325.4Q638.7 321.5 634.9 317.1M642.1 324.9Q635.4 322.1 628.2 321.3M644.1 326Q638.7 322.7 632.6 321.1M493.2 528.6Q501.9 526.8 510.6 528.2M489.9 530.1Q498.9 528.1 508.1 527.7M486.6 531.5Q494.9 521.1 501.5 509.6M488.7 530.6Q495.3 521.8 500.5 512.1M486 531.8Q495.8 529.5 505.9 529.3M487.4 531.2Q497 520.4 502.9 507.1M494.8 527.9Q504 525.7 513.3 524.7M490.4 529.8Q501.8 523.6 510.7 514.2M494.9 527.8Q505.5 520.8 513.4 510.9M482.9 533.1Q494.1 533.5 505 536M632.5 487.8Q628.1 493.5 624.4 499.8M638.1 482.6Q628.1 487.2 617.2 486.9M635.4 485.1Q629.9 495.2 627.1 506.3M633.7 486.7Q628 493.3 620.3 497.5M634.3 486.2Q627.1 494.3 620.9 503.3M638.4 482.4Q632 493.4 628.1 505.5M635.7 484.8Q630.9 492.3 629.1 501M630.4 489.7Q626 495.8 622.6 502.4M634.2 486.2Q628.7 491 622.2 494.6M634.4 486.1Q627 492 618 494.8M631.6 488.7Q623.8 495.2 618.6 503.8M631.5 488.7Q624.7 493.7 617 497.2M480.8 161.1Q493.7 165 507 162.7M476 158.6Q486.6 165.7 499.2 167.6M483.2 162.3Q492.9 167 499.5 175.6M477.9 159.6Q485.8 168.8 490.1 180.1M482.3 161.8Q490.9 169.2 497.1 178.7M482.6 162Q492.1 165.3 501.9 167.6M478 159.7Q488.7 168.1 498.5 177.5M476.5 158.9Q488.5 164.5 501.6 165.9M639 168.8Q630.4 177.4 623 187M634.8 171.7Q629 175.1 622.8 177.5M641.2 167.2Q633.2 174.5 627.6 183.7M636.3 170.6Q629.1 173.5 621.6 175.1M636.5 170.5Q628.6 176.4 621.3 183M637.2 170Q628.5 176.6 617.9 178.9M641.7 166.9Q635.9 173.4 631.3 180.9M637.9 169.5Q631.8 173.9 627.6 180.3M637 170.2Q630.6 173.6 623.6 175M643 166Q631 169.6 618.7 172.1M503.8 543.6Q518.2 545.4 532.6 543.4M506.2 543.9Q517.1 545 527.2 549.3M503.4 543.5Q517.9 546.3 530.7 553.7M499.4 543Q514.8 543.1 530 539.8M504.4 543.7Q513.6 546.5 521.9 551.1M501.5 543.3Q515.9 547.1 530.5 544.5M507.9 544.2Q519.5 548.4 528.5 556.7M504.1 320.5Q511.9 322.6 518.6 327.2M513.1 320.5Q519 319.6 524.6 317.5M513.4 320.5Q521 320.1 528.4 322.3M515.8 320.5Q523.4 320.5 530.8 319M507.3 320.5Q517.8 317.6 526.7 311.2M505.9 320.5Q516.6 319.9 527.1 322.3M508.7 320.5Q517.4 319 525.3 315M507.2 320.5Q517.2 320.6 526.4 316.7M512.7 320.5Q519.5 319.5 526 317.2M658.9 355.9Q653.3 364.2 650 373.6M658.1 356.3Q648.5 364.4 640.6 374.2M652.3 359.4Q643.4 366 637.2 375.2M648.8 361.3Q638 364.8 626.7 364.3M648.5 361.5Q638.8 364.2 628.8 365.6M650.4 360.5Q640.8 368.4 634.4 379.2M480.6 329.6Q487.4 333.3 495 334.2M485.7 333.1Q492.6 337.3 498.4 342.8M480.5 329.6Q488.1 335 492.5 343.1M480.8 329.7Q492.2 333.4 504.2 332.3M477.1 327.1Q487.1 330.2 497.5 331.9M479.8 329.1Q486.6 339.7 490.9 351.5M482.4 330.8Q489.3 335.9 497.3 338.7M476.5 326.7Q487.6 332.4 500.2 332.4M484 332Q491 335.8 498.9 336.5M477.8 327.6Q484.4 335.3 489.5 344M486.6 333.8Q494.3 336.6 502.3 338.2M484.8 332.5Q493.5 336.6 503 337.6M507.5 293.8Q514.2 298.9 518.4 306.3M510 294.7Q521.2 295.8 532 292.6M514.7 296.5Q522.3 298.9 528.4 304M517.2 297.4Q523.7 299.2 529.2 302.9M511.5 295.3Q521 297.4 530.6 298.6M509.8 294.6Q517.6 299.4 524.5 305.4M514.6 296.4Q520.6 298.6 527 298M510.8 295Q519.5 299 527.6 304.1M511.5 295.3Q519.4 295.9 527.2 295M512.1 295.5Q522.5 298.7 533.3 297.7M482.2 397.2Q482.5 387 480.3 377.1M483.2 393.6Q485.3 383.5 483.7 373.3M481.7 398.9Q487.7 390.3 495.1 382.8M479.8 405.2Q477.1 389.4 471.1 374.5M482.4 396.3Q489.1 385.6 497.7 376.4M483.5 392.4Q482.9 381.8 481.3 371.4M480.6 402.8Q490.3 390.4 501.4 379.3M483.1 393.8Q487.5 383 494.6 373.8M481.1 400.7Q485.2 386.7 487 372.2M479.3 407.1Q485.7 392.8 493.3 379.1M512.6 443.7Q519.7 448.2 527.2 451.8M509.6 441.4Q519.2 449.4 526.5 459.5M503.7 437Q516.3 446.3 531.4 450M512.3 443.5Q518.7 448.6 526.2 452.2M515.5 445.9Q521.3 450.8 526.2 456.5M510.8 442.3Q517.4 449.1 526.1 452.6M514 444.8Q522.4 451 528.7 459.5M508.9 440.9Q515.6 448.8 520.5 457.8M506.3 439Q517.3 444 529.3 444.2M511.4 442.8Q517.1 448.8 522.2 455.3M504.4 437.5Q513.6 446.8 518.3 459.1M503.7 437Q512.5 444.6 523.7 447.7M486.8 321.9Q494.5 316.8 503.3 314M489.6 319.9Q497.4 313.8 504.2 306.5M485.4 322.9Q494.6 317.2 505.2 315.4M487.7 321.3Q496.7 315.7 502.3 306.7M483.3 324.3Q491.6 320.8 500.5 320M484.7 323.3Q487.9 316.1 489.6 308.3M488.5 320.7Q497.9 317.8 507.8 318.7M483.2 324.4Q489.6 314.1 495.1 303.4M489 320.4Q498.9 317.5 509 315.9M480.6 326.1Q494.4 323.2 508.5 324.1M652.5 562.9Q645.4 548.5 643.5 532.6M650.7 559.6Q644.1 549.5 642 537.6M653.4 564.6Q645.8 553.4 634 546.9M650.7 559.5Q644.7 550.9 642.9 540.5M655.5 568.5Q640.5 557.5 623.4 549.7M655.5 568.5Q646.5 556 633.3 548M647.7 554.1Q644.2 546.9 642.4 539.1M648.3 555.1Q644.3 543.8 642.2 531.9M648.9 556.2Q642.6 547.7 633.5 542.2M653.3 564.4Q647.8 552.5 647.9 539.4M650.3 558.8Q648.8 547.4 648.9 535.8M652.7 563.3Q642.1 554.5 629.2 549.7M652.5 563Q652 552.6 652.6 542.2M634.4 382.5Q626.9 385.5 621.4 391.5M640 380.1Q629.5 384.2 618.3 384.3M639 380.6Q629.9 385.3 622.7 392.7M637.2 381.3Q629.5 384.3 623.8 390.3M640.9 379.8Q629.9 386.4 619.4 394M635.7 382Q629.5 386.1 624.2 391.3M644.9 378.1Q634.1 388.1 624.4 399M635.3 382.1Q627.2 384.5 618.8 383.9M644.4 378.3Q635 381.9 625 383.3M633.9 382.7Q626.4 388.2 619.7 394.7M638.7 380.7Q628 381.7 617.5 380.6M640.8 379.8Q630.1 387.5 621.9 397.9M502.2 574.6Q516.9 576.5 531.5 573.7M509.8 581.3Q519.7 588.9 526.8 599M504.1 576.3Q513.4 585.4 524.7 591.7M501.6 574Q507.3 586.5 510.9 599.7M503.8 576Q512.7 583.1 518.5 592.9M506.9 578.7Q515 585.6 521.5 594M509.2 580.8Q516.6 586.8 524.8 591.7M510.1 581.6Q516.9 586.2 521.5 593M507.1 578.9Q515.7 586.3 523.2 594.8M509.1 580.7Q515 588 523.5 591.9M510.2 581.7Q517.3 588.9 526.8 592.1M506.6 578.5Q513.9 591 515.2 605.4M503.6 575.9Q515.8 577.3 528.1 576.6M509.7 581.2Q515.5 589.4 519.9 598.4M648.4 313.3Q638 318.5 628.1 324.7M648 313.4Q636.9 315.4 627 320.9M642.7 314.8Q631.6 318.9 621 324.3M646.3 313.8Q635.2 320.6 628.1 331.5M640.9 315.3Q630.5 315.9 620.7 312.6M648.3 313.3Q638.5 320.7 632.7 331.5M647.7 313.5Q636.3 313.8 625.1 312M649.3 313Q637.3 321.8 629.7 334.6M640.7 315.3Q631.8 315.5 623.1 313.9M516.9 411.6Q525.4 418.4 536.1 420.7M508.2 405.4Q518.1 411.5 529.3 414.1M508.9 405.9Q518.7 411.4 529.8 413.7M516.6 411.4Q523.6 416.2 532 417.9M505.3 403.3Q515.8 406.6 526.7 408.2M510.3 406.9Q517.2 414.2 521.2 423.3M509.4 406.2Q517.5 411.4 526.7 414M509.2 406.2Q514 414 517.8 422.3M507.1 404.6Q516.3 408.2 525.8 410.5M484.5 282.4Q490.6 289.3 499 293.2M480.7 279.1Q490.6 286.6 502.8 289.3M481.3 279.6Q488.3 285.8 494.4 293M481.3 279.6Q490.5 287.1 502 289.9M477.5 276.4Q484.3 285.7 490 295.7M478 276.8Q486.1 285.1 496.5 290M481.9 280.1Q491.5 286.4 502.3 290.6M479.8 278.3Q487.5 284.9 497 288.6M483.8 281.7Q490 286.7 495 292.9M509.6 395.7Q516 400.4 523.3 403.2M512.6 398.6Q520.2 405.8 529.3 410.9M511.1 397.1Q517.4 404.9 520.6 414.4M514.2 400.1Q518.2 404.9 523.6 408M512.4 398.4Q518.3 402.1 524.8 404.6M508.3 394.5Q512.2 403.8 513.1 413.9M512 398Q518.1 402.7 525.6 404.5M510 396.1Q517 401 521.1 408.5M507 393.2Q513.8 399 522.2 402.2M649.1 367.3Q635.4 366.7 622 364.8M657.7 367.4Q644.2 364.9 631.9 358.8M656 367.4Q643.2 360.2 632.3 350.3M653.3 367.3Q641.6 367.9 630.2 365.2M655.8 367.4Q639.3 368.6 623.3 373.3M653 367.3Q639.8 362.3 630.3 351.9M660.7 367.4Q646.8 362.6 635.3 353.5M659.1 367.4Q644 368 629 370.5M647.9 367.3Q633.9 369.6 621.1 375.5M668.2 322.8Q656 320 643.5 319.5M668.2 322.8Q660.7 318.1 652.4 315M668 322.5Q664.9 310.6 665.7 298.3M672.3 327.3Q658.8 324.5 645.1 324.3M663.8 318Q658.1 308.7 654.8 298.2M666.4 320.8Q657.7 311.4 646.2 305.9M663.8 318Q655.1 309.7 644.2 304.7M665.8 320.2Q654.6 314 641.9 313.3M668.7 323.4Q663 315.9 659.2 307.2M671.3 326.1Q666.3 315.9 664.8 304.6M664.8 319.1Q656.7 313.2 647 310.6M663.2 317.4Q656.2 309.1 652.2 299M653.5 386.3Q644.4 384 635.2 385.3M650.8 385.5Q642.5 382.3 633.7 382.8M651.7 385.8Q642.5 382.2 635.5 375.3M651.5 385.7Q642.4 383.6 633.1 382.5M648 384.6Q641.6 383.6 635.2 385.1M649.5 385.1Q643.2 382.2 637.7 378.1M649.2 385Q641 383 632.6 383.1M658.4 387.9Q646.4 382.4 636.2 374M657.1 387.5Q645.9 388.9 634.9 391.2M646 384Q636.8 381.6 629.7 375.3M655.7 387Q647.5 388.4 639.6 391M652.3 386Q642.2 382.4 631.5 381.4M648.4 384.7Q640.4 380.8 632.8 376M649.7 385.1Q641.9 383.6 635.1 379.5M647.3 384.4Q637.6 383.2 627.9 384.7M649.4 385.1Q642.9 382.3 635.8 381.6M654.2 517.7Q648.2 526.1 646.1 536.1M654.2 517.7Q649 525.4 645.5 534M653.6 518.4Q647.9 524.9 639.9 528.6M655.7 515.7Q648.1 526.6 643.5 539M658.1 512.5Q652.7 524.8 648.9 537.6M659.2 511Q649.5 524.1 637.1 534.4M660.2 509.6Q649.9 519.7 638.6 528.5M655 516.6Q644.2 525.5 632.1 532.4M656 515.2Q650.4 528.9 646.3 543.2M476.1 198.2Q481.8 184.7 483.4 170.1M479.9 194.6Q492.4 190.6 505.2 187.8M478 196.4Q486.7 188.7 493.4 179.2M474.7 199.5Q488.9 193.7 503.9 190.4M480 194.6Q485 184.5 486.1 173.3M474.3 199.9Q479.3 186.4 478.4 172M476 198.3Q485.2 196.6 494.5 197.4M474.5 199.7Q483.1 193.1 488.1 183.5M479.5 195Q487.9 189.8 496.9 185.5M478.9 195.6Q487.2 188.9 497.3 185.7M481.3 193.2Q489.1 186.7 498.5 183.1M478.8 195.7Q484.2 188.3 486.7 179.5M528.1 277.1Q534.9 275.8 540.4 271.8M523.2 277.3Q535.2 276.6 546.8 273M523.8 277.3Q534.3 276.7 544.4 279.6M521.4 277.4Q530.6 276.2 538.6 271.3M526.7 277.2Q537 274 546.5 268.7M530.8 277Q537.9 276.2 544.9 277.6M529.2 277.1Q535.6 276.6 541.1 273.3M520.7 277.4Q533.6 276.7 545.7 272.3M524.9 277.2Q535.9 277.8 545.7 282.8M519.6 277.4Q532.1 275.6 544.2 278.9M650.1 416.4Q641.7 418.7 632.9 418.9M651.8 415.5Q642 420.8 633.2 427.7M658.1 412.2Q644.9 413.9 632.3 409.9M655.3 413.7Q642.3 418.8 632.3 428.4M660.1 411.2Q646.3 413.1 632.3 413.4M651.1 415.8Q643.7 420.8 637.2 426.9M660.5 411Q646.4 417.3 631.2 420.6M655.8 413.4Q643.1 417.5 630 419.4M655.4 413.6Q646.2 417.4 636.3 417.5M652.8 415Q643.9 417.9 634.6 419.1M661.1 410.7Q646.8 410.4 632.6 408.5M656.7 412.9Q649.7 418.1 643.8 424.6M527 567.2Q532.8 564.4 539.2 563M525.7 567.8Q533.2 564.9 541.2 564.2M520.4 570Q528.4 566.5 536.9 565.5M521.9 569.4Q530.4 562 537.1 553M524.9 568.1Q530.9 564.9 535.1 559.6M521.4 569.5Q527.6 564.5 532.9 558.7M524.7 568.2Q533.8 566.4 543 567M509.4 412.4Q516.2 416.7 520.9 423.1M512.2 414.7Q519 420.4 527.2 423.4M512.5 414.9Q519.3 420 524.2 426.8M510.5 413.3Q519 417.4 527.9 420.4M506.7 410.2Q513.2 415.3 518.1 421.9M508.4 411.6Q517.9 419.8 530.1 423.1M513.7 415.9Q520.5 421.6 525.5 428.9M509.4 412.4Q518.3 418.9 528.9 421.2M514.7 416.7Q518.7 420.8 521.4 425.7M509.8 412.7Q517.9 421.4 528.9 425.5M512.7 415.1Q518.4 421.1 526.2 424M509.7 412.7Q515.8 417.4 519.1 424.4M496.2 438.8Q503.5 430.4 507.7 420.1M487.3 445.3Q497.6 437.4 509.8 432.8M495.1 439.7Q500.6 432 504.5 423.4M490.8 442.7Q503.6 439.1 517 439.7M489.4 443.7Q506.7 439.6 524.1 442.6M494.5 440Q501.9 428.9 507.6 416.9M647.6 366.1Q641.2 373.8 632.2 378.4M641.1 372.1Q635.9 376.6 632.5 382.7M645.7 367.9Q636.5 373.8 626.3 377.6M645.4 368.1Q639.2 374.2 631.3 378.1M647 366.7Q638.7 370.9 630 374.3M646.5 367.1Q637.7 372.8 628.6 377.8M644.5 369Q638.4 374.3 634.5 381.4M647.4 366.3Q641.1 371.3 637.2 378.3M646.1 367.5Q640 377.2 636.4 388M635.2 457.3Q626.9 453.6 617.8 453.6M644.1 461.6Q635.8 455.6 629.7 447.3M638.5 458.9Q629.9 456.7 620.9 456.7M637.8 458.6Q631.8 454.8 627.3 449.3M639.3 459.3Q629.9 456.5 620.2 455.7M639 459.1Q630 453.6 623.4 445.3M643 461.1Q634.8 456.8 625.5 456.4M644.6 461.9Q634.8 458.2 624.6 456.5M635.6 457.5Q629.3 454.7 624.9 449.3M635.5 457.5Q629.7 454.3 623.1 453.2M500.4 230.3Q510 229.5 519.4 227.4M504.1 232.3Q509.6 238.9 514.4 246.1M504.3 232.4Q517.4 232 530.2 229.4M509.1 235Q516.1 243.1 520.8 252.9M509.9 235.4Q516.7 238.3 523.9 240.3M500.1 230.1Q511.1 240.5 518.6 253.6M503.6 232Q513.2 237 523.4 240.7M500.6 230.4Q510.3 239 516.2 250.5M505.7 233.1Q514 239.3 521.5 246.4M508.9 234.9Q515.8 238.6 523.5 240.1M511.5 236.3Q518.3 242 522.8 249.6M637.3 431.9Q630.4 436.4 624 441.7M632.2 433.2Q621.7 436.4 610.7 437.2M639.4 431.4Q629.5 435.7 621.2 442.6M633.5 432.9Q625.8 435.7 617.6 435.1M642.1 430.7Q628.7 436.8 617.6 446.5M632.3 433.2Q624.7 434.3 617.1 432.8M640.5 431.1Q629.9 434.3 618.8 433.9M633.2 433Q626.1 434.2 618.9 434.9M645 248.3Q635.6 244.6 627.7 238.2M646.1 248.5Q633.8 245.3 623.3 238.1M641.4 247.9Q632.6 250.9 624.1 254.7M636.7 247.3Q628.7 247.1 620.7 248M633.7 246.9Q625.1 246.2 617 243M639 247.6Q627.9 245.7 617 242.7M644.3 248.2Q633.1 244.7 623 238.6M635.7 247.1Q628.5 247.1 621.4 248.8M660 207.2Q655.9 195.8 652.9 184M662.3 209.9Q656.3 202.2 647.7 197.4M659.6 206.8Q655.7 195.7 654.5 183.9M661.2 208.6Q651.9 198.2 639 192.7M663.6 211.4Q657.3 203.9 654.1 194.6M655.2 201.7Q648.4 195.4 640.8 190.2M655.4 201.9Q649.8 198.3 643.7 195.6M658.6 205.7Q648.1 200.5 636.4 199.4M655.2 201.7Q649.3 194.9 644.3 187.5M658.6 205.7Q652.4 201.6 645.8 198.4M495.6 195.6Q499.6 185 500.3 173.6M494.7 197.7Q502.7 189.7 512.9 184.5M493.8 199.8Q502.8 191.5 513.6 185.6M494.1 199.2Q499.7 187.6 502.1 175M494 199.3Q499.1 187.9 499.9 175.4M494 199.3Q496.3 186.5 494.2 173.7M492.9 201.8Q502.9 191.7 515.6 185.3M493 201.6Q503.9 191.7 518.2 187.7M508.4 294Q518.4 292.2 527 286.8M512.6 293.8Q522.8 294.9 531.4 300.5M503.2 294.1Q516.4 293.1 528.8 297.9M508.8 293.9Q519.4 288.3 529.2 281.2M515.6 293.7Q523.5 293.3 530.8 296.5M505.7 294Q515.4 298.6 523.8 305.4M516.4 293.7Q524.7 291.9 531.3 286.6M502.8 294.1Q512.6 300.2 520.4 308.8M509.7 537.2Q516.8 540.3 523 545M502 534.8Q512.4 536.2 522.9 536.2M507.9 536.6Q514.9 539.2 519.9 544.7M505.9 536Q516.7 541.1 524.7 550.1M507.5 536.5Q517 539.4 526.8 538.5M510.3 537.4Q516.2 539.8 521.2 543.8M509 537Q518.9 538.4 528.8 538M507.1 536.4Q515.4 537.9 523.7 536.4M524.1 211.9Q537.1 209.7 547.9 202.1M518.9 211.6Q530 217.5 539.6 225.6M531.1 212.4Q539 212.8 546.8 211.7M528.7 212.2Q538.1 215.7 547.2 220M528.2 212.2Q538 209.8 547.5 206.3M520.6 211.7Q534.3 211.6 547.2 216.2M520.3 211.7Q534 212.4 546.6 217.7M524.4 212Q534.3 212 544.1 211.2M517.4 211.5Q527.1 215.5 535.1 222.3M517.3 211.5Q531.3 208.4 543.3 200.6M520.6 211.7Q532.7 209.9 544.1 205.6M518 211.5Q529 214.8 538.5 221.2M477.1 348.5Q480 337.2 479.6 325.4M476.1 351Q482.6 343 490.9 336.8M473.7 357.1Q478.4 348.8 485.6 342.8M475 353.8Q479.2 340.8 477.4 327.1M476.2 350.7Q482.3 341.8 489.7 334.1M478.1 346.1Q482.9 336.6 483.1 326M476.7 349.4Q480.6 339.7 480.8 329.3M474.4 355.2Q479.6 342.9 486.5 331.4M473.7 357Q483.1 347.7 494 340.2M481 318.6Q490.8 319.3 500.7 318.9M490 320.3Q497.2 323.6 502.8 329.3M482 318.8Q493.3 320.8 504.8 319.7M487.4 319.8Q499.2 324.1 510 330.3M477.1 317.9Q488.5 325.6 499 334.6M481.2 318.6Q494.9 316.2 506.2 307.9M480.5 318.5Q492.7 328 501.7 340.6M490.5 320.4Q498.7 321.6 507 321.4M485.9 319.5Q495.9 321.9 505.5 325.5M478.4 318.1Q490.3 315.6 502.1 312.1M484.8 319.3Q498.6 321 511.8 316.4M476.5 317.8Q488.1 319.7 498.3 325.6M505.6 170.7Q515.5 176.6 522.5 185.8M509.6 173.1Q515.6 177.5 520.8 182.7M509.4 173Q516.9 177.5 522.7 184M511.6 174.3Q519.4 177.9 525.1 184.3M506.9 171.4Q514.5 173.9 522.5 172.9M510.5 173.7Q518.9 177 527.5 179.6M518.4 242.4Q528.6 246.8 539.6 247.9M506.8 237.3Q520.6 237.1 533.2 231.4M512.2 239.7Q522.6 239.3 532 234.8M510.3 238.8Q522.4 244.6 530.6 255.2M515 240.9Q527 242.5 539.1 243M511.3 239.3Q520 242.4 529.1 241.3M518.4 242.4Q525.1 247.4 529.5 254.5M518.2 242.3Q528.1 244.9 538.2 246.1M518.6 242.5Q528.6 245.6 538.9 243.8M510.2 238.8Q519.9 246.7 528.3 255.9M513.1 240Q521.8 246.1 527.6 255M519.6 242.9Q527.2 243.4 534.8 242.5M482.8 360.7Q488.3 351.2 496 343.4M482.9 360.5Q486.8 353.5 489.7 346M479.6 365.9Q486.3 354.4 494.7 344M476.8 370.6Q486.3 357.8 497.1 346.1M479.7 365.8Q483.6 353.9 484.1 341.4M477.7 369.1Q483.8 356.8 488.7 343.9M483 360.3Q488.4 349.2 498.2 341.6M474.8 374Q477.3 360.7 475 347.3M478.2 368.2Q484.5 358 485.7 346M480.5 364.5Q486.3 356.6 493.2 349.8M475.5 372.8Q483 357.9 496.2 347.6M630.6 558.5Q618.8 560.5 606.9 560.2M630.8 558.5Q620.5 563.5 612.4 571.6M624 560.4Q617.5 561 611 560.3M635.6 557.1Q624.2 556.2 613.8 551.3M631 558.4Q622 557.9 613.3 555.9M630.8 558.5Q618.7 559.3 607.4 554.8M625.4 560Q616.7 562.1 607.8 561.8M624 560.4Q616.1 564.9 609 570.5M626 559.8Q618.9 562 612.2 565.3M624.7 560.2Q616.5 561.2 608.2 560.1M626.6 559.7Q616.6 562.4 606.4 560.6M494.8 328.6Q501.7 319.3 505.4 308.4M490.5 334.7Q497 326.7 505.8 321.3M494.2 329.4Q501.7 320.1 505.1 308.7M490.4 334.9Q493.7 324 492.1 312.8M490.9 334.2Q494.9 323.3 495.6 311.7M491.4 333.5Q501 326.5 512.1 322M494.8 328.6Q500.2 323.4 506.7 319.6M491.6 333.1Q495 323.4 497.2 313.3M494.8 328.6Q502.5 320.8 512.3 315.8M496.6 326Q502.5 318.2 504.4 308.6M475.2 582.8Q487.1 587.4 499.9 587.1M483.3 586.8Q491.5 592.3 498.3 599.4M474.8 582.6Q486.9 585.8 499.5 587M473.9 582.2Q482.3 589.7 489.1 598.6M473.8 582.1Q486.5 583.1 498.5 578.7M484.6 587.5Q490.5 592.3 495.1 598.4M484.2 587.3Q490.6 589.2 497.3 589.8M480.2 585.3Q487 589 493.4 593.4M481 585.7Q490.7 590.8 497.4 599.5M481.3 585.9Q491.8 589.4 502.8 590.2M479 584.7Q490 590.5 500.2 597.6M484.3 587.4Q493.8 590.8 503.8 589.6M505.4 525.1Q511.5 532.1 519.4 536.9M508.2 530.6Q512.3 540.8 514.4 551.6M502.4 519.4Q512.6 529.1 524.1 537.2M507.1 528.4Q511.5 536.7 512.1 546M504.9 524.2Q512.6 535.9 522.9 545.4M504 522.5Q506.6 537.1 504.4 551.9M508.2 530.6Q512.8 540.6 519.7 549M507.5 529.2Q512.7 537.6 514.6 547.2M504 522.4Q511.2 529.6 520.2 534.2M502.6 519.8Q507.3 531 507.5 543.2M502.9 520.4Q507.7 529.5 514.2 537.4M506.8 527.9Q511.2 534.8 517.3 540.2M505.5 525.3Q510.9 535.3 513 546.4M510.6 573.4Q519.8 578.6 526.7 586.7M505.8 571.4Q517.3 574.7 529 576.3M507.6 572.2Q518.2 577.5 527.9 584.2M509.5 573Q521.3 575.7 533.3 574.9M508.9 572.8Q519.2 577 527.1 584.8M501.5 569.6Q517.2 569.9 532 564.7M510.9 573.6Q520 576.3 529.5 575.7M511.9 574Q519.7 576.7 526.3 581.9M506.4 571.7Q517.4 574.4 528.8 575.8M635.7 586.2Q624.3 589 612.8 590.7M637.6 585.5Q628.2 588.2 620.1 593.9M640.4 584.5Q628.3 588.2 615.6 588.6M636.9 585.8Q625.9 589.2 615.9 595M637.9 585.4Q626.9 586.8 615.9 585.2M642.8 583.6Q630.3 590.8 619.1 599.7M644.6 583Q632 581.8 619.7 579.1M643.5 583.4Q631.9 588.6 621.9 596.6M635.5 586.3Q628 589.2 621.9 594.4M632.7 587.3Q624 590.1 614.8 589.1M636 586.1Q625.7 588.5 616.9 594.4M633.5 587Q624.9 589.4 617.5 594.3M640 584.6Q631.9 588 623.2 587.3M641.3 584.2Q632.9 586 624.2 586.8M496.4 305.1Q500.2 297 501 288.1M496.9 304Q504 295 513.8 289.2M499.9 297.2Q504.4 291.2 510.4 286.4M495.8 306.3Q499.2 295.5 506.4 286.7M499.8 297.5Q504.7 289 506.2 279.3M498.7 299.8Q501.7 290 503.6 279.9M497.4 302.8Q502.3 294.5 509.8 288.3M496.6 304.6Q503.5 298.3 511.2 293M625.8 496.7Q615.7 504.9 609.5 516.4M629.3 494.8Q619.1 498.6 611.6 506.5M626.8 496.2Q619.4 501.7 613 508.3M623 498.3Q615.6 501 607.8 501.8M623.4 498.1Q611.5 501.9 599.2 502.7M631.5 493.6Q621 503.2 611.8 513.9M619.2 500.4Q610.9 505.3 601.6 507.6M630.9 493.9Q618 501.8 608.6 513.8M669.9 242.5Q658.4 236.7 646.2 232.3M661.7 236.3Q654.7 232.3 646.8 230.6M670.3 242.8Q658.6 239.2 646.4 240.9M661.7 236.3Q653 230.6 643.7 226M663.4 237.5Q658.4 232 655.4 225.2M671.3 243.5Q658.4 236.9 644.2 234.1M663.6 237.7Q657.2 233.4 652.7 227.1M670.8 243.1Q660 236 653.5 224.9M668 241Q658 236.9 647.2 235.9M638.6 481.8Q626.1 477.6 612.9 477.2M640.3 482.6Q630.4 474.7 622.7 464.8M636.7 480.8Q625.1 477.9 613.2 477.1M640.1 482.5Q627.8 476.5 617.1 467.9M642.5 483.7Q629.7 481.9 617.2 484.8M640.3 482.6Q630.4 478.3 619.6 478.4M634.6 479.8Q627.7 473.6 623.6 465.2M639.1 482.1Q629.9 478.8 620.1 478.1M640.9 482.9Q626.1 478.8 610.9 481.2M656.8 471.8Q654.4 483.5 653 495.4M658.5 466.9Q653.8 475.1 646.9 481.4M660.2 461.8Q654.5 477.2 645.9 491.2M660.4 461.2Q653.9 476.7 652.6 493.5M657 471.1Q652.7 482.9 643.6 491.4M655.6 475.3Q653 485 651.3 494.9M659.7 463.3Q654.4 474.7 647.8 485.3M657.2 470.6Q654.3 481.8 654.6 493.4M656.4 473.1Q655.2 483 655.4 492.9M658.4 467Q653.6 479.2 652.8 492.4M658.8 466Q657 477.6 659.9 488.9M659.5 463.7Q655.1 476.6 648.6 488.5M492.1 407.1Q498.6 413.9 506 419.6M490.4 403.3Q496 418.9 507.8 430.5M493.1 409.5Q501.1 419.4 511.2 427.1M489.6 401.4Q496.6 413.7 497.5 427.8M492.7 408.5Q499.4 418.2 508.6 425.5M491.9 406.8Q500.9 415.9 511.2 423.5M492.2 407.4Q496.2 417.8 504.3 425.5M494.9 413.5Q497.9 422.8 498.3 432.6M493.1 409.4Q498.4 417.9 505 425.4M490.7 403.9Q493.7 419.7 494.6 435.8M490.8 404.1Q495.3 416.5 498.3 429.4M492.5 408.1Q497 421.1 506.6 431M502.5 537.4Q511.6 535.2 519.7 530.7M507.1 537.3Q515.1 538.6 522.8 540.9M511.4 537.3Q521.6 535.4 531 531.1M500.8 537.5Q513 534.8 522.6 527M501.4 537.4Q513.9 541.4 524.5 549M506.3 537.4Q515.4 536.2 523.1 531M499 537.5Q512 531.3 522.9 522.1M495 469.2Q504 461.6 509.2 450.9M496.9 467.7Q502.7 460.1 504.9 450.8M494.7 469.4Q503.4 461.8 511.2 453.3M495.1 469.1Q504.2 461.1 509.7 450.4M499.7 465.7Q507 458.4 513.5 450.4M502.5 463.6Q509.2 458 516.8 453.9M495.8 468.6Q506.1 464.2 517.1 461.7M493 470.7Q501.4 465.2 510.7 461.7M493.7 470.2Q498.8 461.5 502.9 452.3M493.8 470.1Q502.2 461.4 506.9 450.3M492.1 471.4Q503.7 466.8 515.7 463.3M494.3 469.7Q502.3 459 509.1 447.6M656.9 427.1Q651.9 436.3 643.4 442.3M656.8 427.2Q654.3 433.2 649.6 437.8M663 416.8Q660.8 426.9 661.2 437.3M657.4 426.2Q651 432.1 643.7 437M656.6 427.6Q651.1 436.2 647.1 445.6M658.2 424.8Q652.8 435.1 643.5 442M657.7 425.7Q653.2 433.9 646.1 440M658.6 424.2Q654.1 430.8 648.8 436.6M660 421.8Q657.9 431.8 658.9 441.9M661.7 419Q656.2 429.5 652.7 440.8M662.7 417.2Q653.6 422.2 643.9 426M658.3 424.7Q657.1 432.9 657.2 441.2M663.6 391.9Q652.4 393 642.4 398.3M667.2 392Q659.5 386.8 653.3 379.8M656.2 391.6Q649 392.9 642.7 396.4M667.3 392.1Q654.7 390.2 642.6 386.4M662.4 391.8Q652.6 392.8 643.9 397.7M663.8 391.9Q654.9 391.6 646.6 388.4M656.6 391.6Q649.2 390.1 642.9 385.6M666.1 392Q659 396.5 652.4 401.8M665.4 392Q652.1 389.9 641 382.3M667.3 392.1Q658.1 390.1 650.4 384.6M667 392Q658.2 396.3 650.3 402.1M501.7 571Q509.9 564 519.8 559.7M496.4 576.1Q504.7 567.3 509.6 556.3M492.2 580.2Q501.5 576.5 511.4 576.2M498.2 574.4Q507.7 569.1 517.9 565.3M501.9 570.8Q506.4 565.2 508.9 558.4M492.6 579.8Q506.4 571.7 521.8 567.2M492.7 579.7Q506 574.2 519.7 570.2M495.6 576.9Q501.9 564.9 502.5 551.3M491.5 580.9Q505.4 572.7 520.4 566.9M500.9 571.8Q506.2 565.6 508.3 557.7M519.8 180.3Q526.5 178.8 533.2 178.1M516.7 181.7Q525 175.5 532.4 168.1M514.6 182.6Q524.6 179.5 535.1 178.9M516.6 181.7Q524.8 176.2 530.6 168.3M511.1 184.2Q518.8 180 524.3 173.1M511 184.3Q520.5 180.7 530.4 178.9M515.9 182Q523.2 178.9 530.7 176.5M513.2 183.3Q522 179.9 529.2 173.7M511.3 184.1Q519.1 176 525.6 166.7M514.3 182.8Q523 179.8 532.2 180.1M643.3 291.1Q635.4 283.2 628.8 274.4M644.1 291.9Q633.9 285.1 621.9 282.4M645.1 292.7Q637.1 285.3 633.3 275M647 294.5Q638.1 290.7 628.8 288M649 296.2Q644.4 287 640.9 277.4M650.9 297.9Q639 287.3 625 279.7M649.1 296.3Q640.3 284.8 637.5 270.6M643.3 291.2Q636.6 283.8 631 275.6M644.9 292.5Q635.1 284.3 624.7 277M493 406.7Q504.4 404.3 515 399.5M484.4 407.8Q497.9 406.8 511.5 407.6M488 407.3Q499.5 405.3 511 406.5M485.3 407.7Q493.6 401.7 500 393.6M498.9 405.9Q508.4 406.2 517.6 408.8M489.4 407.2Q499.8 405.6 509.9 408.5M490.1 407.1Q500.7 398.4 509.5 388M491.7 406.8Q501 402.2 509.7 396.8M496.7 406.2Q508.2 405.6 519.2 401.9M644.6 387.6Q630.6 393.1 617.3 400.1M634.1 391Q622.9 393.8 611.4 395.5M634.1 391Q627.1 394.1 622 399.8M641 388.8Q633.5 395 626.7 402M633.4 391.2Q623.4 391.5 613.5 390.7M635.5 390.5Q624.7 391.8 613.8 391.4M632.3 391.6Q622.8 395.4 614.7 401.7M633.9 391Q624.1 393.9 615 398.7M635.4 390.6Q624.9 392.8 614.1 392.2M641.1 388.7Q628.4 395.4 618.7 406M637.1 390Q626.4 393.1 615.4 394M643.4 388Q634.7 391.6 627.2 397.4M502.3 181.3Q514.2 180.2 525.8 182.8M507.6 178Q515.2 170.9 519.6 161.4M504.8 179.7Q519.8 178.2 534.9 178M513.8 174.1Q519.4 169.7 523.4 163.8M507.1 178.3Q515.1 170.5 519.7 160.4M511.5 175.6Q519.1 169.9 525.1 162.5M507.4 178.1Q512.2 170.3 513.3 161.1M505.4 179.4Q514.3 176.7 523.6 175.9M504.7 179.8Q513 174 522.9 171.9M513.5 174.3Q519.7 165.4 525.1 156M508.1 177.7Q516.9 176.9 525.8 176.9M505.8 179.1Q514.6 174.5 524.2 171.8M502.7 181Q514 171.1 521.9 158.4M507.1 178.3Q518.7 177.5 530.3 177.9M513.4 174.4Q520.6 168.3 527.2 161.5M507.1 178.3Q518.7 175.8 530.7 174.9M656.7 562.3Q648.5 562.7 640.9 565.6M659.8 562.1Q651.3 565.3 643.4 569.9M667.9 561.6Q657.6 559.7 647.5 557M669 561.5Q655.6 566.4 643.5 574M658.3 562.2Q647.3 564.6 636.2 562.4M670.1 561.4Q652.1 560.6 636.5 551.7M649.2 333.6Q640.1 324.9 629.5 317.9M647.9 331.9Q641.1 321.4 635.8 310.2M645.8 329.4Q636.7 321.1 625.3 316.3M649.5 333.9Q645.6 322.5 644.1 310.6M644.6 327.8Q638.9 320.6 634.9 312.3M646.2 329.8Q636.5 319.9 624.5 313M644 327.1Q639 319.7 636.2 311.2M642.9 325.8Q635.1 317.9 624.8 314M645.9 329.4Q641.5 321.9 640.5 313.2M644.2 327.4Q636.5 321.2 627.3 317.7M646.5 330.2Q637.7 321.1 632.3 309.6M627.6 506.2Q616.4 513.6 606 521.9M627.1 506.4Q615.1 508.7 603.2 505.8M627.1 506.4Q615.4 508.6 605.1 514.8M620.5 508.2Q608.5 510.4 596.3 511.5M617.6 509Q609.6 511.1 602.7 515.5M618 508.9Q607.5 511.3 596.8 511.9M626.1 506.7Q614.9 504.9 604.4 500.9M618.5 508.8Q611 512.5 605.2 518.6M631.1 166.9Q621.2 166.5 611.6 169.1M630.5 166.7Q624.6 162.9 619.2 158.3M638.5 168.9Q629.9 170.4 621.8 173.4M635.7 168.1Q626.8 168.6 618.8 172.9M637.5 168.6Q626.6 162.4 617.5 153.7M637.5 168.6Q629.4 165.3 622.7 159.5M516.2 474.4Q524.1 477.4 530.4 483.2M517.5 474.7Q525.5 475.9 533.5 475.5M511.4 473.7Q525.4 476.6 537.7 484M516.5 474.5Q524.5 473.7 532.1 471.2M518.1 474.7Q528.6 477.7 539.3 475.9M654.4 209.8Q648.8 224.4 647.4 240M656.4 206.4Q649.1 221.6 643.4 237.5M652.9 212.4Q648.1 222.4 648.2 233.5M656 207.1Q645.4 217.3 631.5 221.7M655.5 207.9Q649.4 221 647.1 235.4M651.7 214.4Q646.1 223.6 637 229.4M654.7 209.3Q647.4 223.1 645.8 238.7M657.4 204.7Q652.5 217.4 649.2 230.6M656.1 206.9Q652.8 223.3 654.5 240M652.8 212.6Q645.6 222.4 643.3 234.4M619.1 264Q609.9 264.9 601.6 268.9M625.5 264.6Q616.4 263.3 608.8 258.1M619.9 264.1Q611.8 263.6 603.8 265.2M615.7 263.7Q606.4 263.7 598 259.8M617.6 263.9Q608 265 598.6 267M625.1 264.6Q616.8 261.9 609.2 257.6M627.4 264.8Q618.6 266.9 610.1 269.9M621.6 264.2Q609.7 262.8 599.1 257.1M623 264.4Q613.3 263.6 603.8 261.3M628.3 264.9Q618.4 264.7 608.6 265.4M623.3 264.4Q613.8 259.7 605 254M672.2 230.8Q664.1 223.3 655.1 216.9M672.4 231.4Q667.8 220.8 664.6 209.7M671.4 229.2Q661.7 223.7 651.6 219.2M671.5 229.3Q667.2 220.1 664.4 210.5M669.1 224.1Q662.1 217.1 653.2 212.7M667.2 220Q664.3 213.8 663 207.2M669.1 224.1Q663.2 220 657 216.5M667.4 220.6Q664.6 210.9 663.2 201M670.6 227.5Q667.7 215.6 667 203.3M671.4 229.2Q661.2 221.4 648.9 217.7M667.3 220.3Q663.4 214.3 658.3 209.3M671 228.2Q669 217.5 669.7 206.8M667.5 220.7Q662.7 212.2 654.7 206.6M669.7 225.4Q663.5 218.6 656.4 212.9M527.7 514.3Q531.5 506.8 533.9 498.7M527.1 514.8Q533.2 508.8 541 505.3M533.7 508.8Q538.3 504.9 543.9 503M531.1 511.1Q534.6 506 537.4 500.5M532.8 509.6Q537.2 505.1 543.1 503M533.2 509.2Q537.6 505.1 540.6 499.8M526.2 515.6Q535.1 511.1 544.9 509.2M526 515.9Q531.8 509.8 536 502.5M530 512.1Q537.7 507.7 546.3 505.4M530 512.1Q536.6 505.7 541 497.7M530 512.1Q535.1 507.9 541.6 506.4M533.6 508.8Q539.2 504 545.9 500.7M527 514.9Q535.8 510 545.6 507.8M528.3 513.7Q532.8 504.5 536.5 494.9M532.5 509.9Q539 506.1 545.9 502.9M504.9 461.7Q512 467.1 520.2 470.4M505.9 462.4Q513 466.9 521.4 467.9M508 463.9Q514.2 468.6 519.6 474M510.4 465.7Q515.9 470.1 518.9 476.6M502.3 459.8Q515.4 463.8 529.1 464.6M502.6 459.9Q511.6 469.3 516.8 481.2M501.6 459.3Q513.6 464.1 526.5 463.3M503.3 460.5Q513.3 470.5 520.1 482.9M511.8 466.7Q519.3 471.6 527.6 474.7M510.9 466Q519.3 470.9 528.3 474.5M508.5 464.3Q516.2 469.8 521 478.1M659.9 462.7Q646.5 469.3 635.1 479.2M652 462.2Q640.2 465.8 629.9 472.7M659.2 462.7Q648.8 461.6 639.9 456M658.8 462.6Q647.5 461.1 636.8 456.9M648.5 462Q637.7 461 628.5 455.2M658.6 462.6Q643.2 464.9 629.2 471.7M655.7 462.4Q646.2 456 637.4 448.7M660.5 462.7Q644.8 466.2 630.6 473.6M651.3 462.2Q639.5 465.7 628.3 470.9M649.8 462.1Q641.2 460.5 633.9 455.8M480.3 441.8Q494.8 441 508.5 445.9M478.3 442.7Q487.6 438.6 494.6 431.1M484.6 440Q495.7 437.6 507.1 438.6M476 443.7Q482.8 435.7 487.8 426.5M488.7 438.2Q495.8 433 501.2 426.1M484.5 440Q494.5 436.5 505.1 435.6M487.8 438.6Q498.1 433.6 507.5 427.1M478.9 442.5Q492.2 438.9 505.9 440M643.2 338.7Q631.5 338 620.1 335.7M640.1 338.9Q631.7 341 624.1 345M640.6 338.9Q628.5 340.9 616.4 338.8M632.5 339.4Q626.2 340.6 620.4 343.5M641.9 338.8Q629.4 337.9 618.6 331.7M638.9 339Q627.1 339.7 616.3 344.5M644.7 338.6Q632.7 340.4 622.4 346.6M635.7 339.2Q627.6 340.8 620.3 344.7M666.3 315.5Q663.9 329.9 666 344.4M664.8 318Q657.5 328.6 649.1 338.4M668.8 311.3Q657.5 317.9 645 321.6M664.3 318.7Q658.1 325.2 651.2 330.9M666.8 314.7Q659.1 327.8 647.8 338M663.9 319.4Q659.6 328.3 651.7 334.3M664.7 318Q660.9 331 659.8 344.4M667.2 314Q665.7 323.4 665.8 332.8M665 317.6Q663.3 326 664.7 334.5M662.2 322.3Q658.3 332.5 650.4 340.1M669.9 309.5Q665.6 322.2 664.6 335.6M669.2 310.6Q658.2 317 645.9 320M662.2 322.2Q660 331.3 659 340.5M663.9 319.4Q655.4 327.5 645.3 333.7M664 319.2Q658.5 329.2 654.7 339.9M626.1 190.8Q618.4 183.8 608.4 180.8M624.6 189.4Q616.8 182 609.8 174M627.7 192.2Q616.7 185.9 604.1 185.1M634.9 198.6Q622.4 190.1 614.8 177.1M633 196.9Q623 188.2 616.4 176.6M633.5 197.3Q622.5 187.4 609.9 179.6M630.8 194.9Q622.4 189 612.2 187.2M628.9 193.2Q618.3 187.2 606.9 182.7M635.2 198.9Q622.7 189.3 608.4 182.7M615.2 172.4Q604.8 168.3 593.9 166.2M615.6 172.8Q609.7 167 604.6 160.5M616.4 173.3Q610 165.8 605.7 156.9M613.6 171.4Q606.1 166.8 597.9 163.9M620.4 176Q611.5 168.4 603.7 159.8M613.5 171.3Q605.1 164.6 594.8 161.6M659.8 514.8Q652.9 524.3 642.7 530.2M662.5 511.7Q651.2 521.3 636.8 525.1M656.5 518.8Q648.6 524.1 640 528.1M657 518.2Q649.9 527.9 645.9 539.3M664.1 509.9Q655.3 518.6 650.5 530M656.7 518.6Q649 524.5 640 528.1M661.7 512.6Q655 525.7 654.8 540.3M510.3 228.3Q517.4 233.1 525.3 236.4M508.1 226.4Q517.4 233.6 527.5 239.4M507.7 226.2Q514.6 233.7 523.7 238.3M510.9 228.8Q516.2 233.3 520.2 238.9M508.3 226.7Q517.2 234.7 528.3 239M507 225.5Q516.4 233.1 521.8 243.9M503.8 222.8Q511.7 229.6 520.8 234.7M506.6 225.2Q513.6 233.2 518.9 242.4M500.4 219.9Q514.2 223.7 528.3 225.4M489.2 353Q500.3 342.1 507.8 328.4M496.2 347.2Q503 340.5 507 331.8M486.9 355Q500.9 348.8 516.1 347.4M492.8 350.1Q499.7 344.3 508 340.7M497 346.6Q503.9 338.9 508.3 329.5M495 348.3Q504.7 342.5 515.8 340.1M491.3 351.3Q499.8 341.8 505.4 330.2M489.3 353Q499.3 343.5 504.8 330.8M488.9 353.3Q497.1 346 507.5 342.4M487.8 354.3Q501.4 346.6 516.7 343.7M493.9 349.1Q500 342.7 508.1 339.3M488.7 353.5Q494 342.8 497.1 331.3M491.8 350.9Q498 344.6 506.5 341.8M487.9 354.2Q499.1 342.9 508.9 330.3M609.6 207.8Q601.3 199.7 590.5 195.2M610.2 208.4Q604.4 203.6 601.1 196.9M615.5 213.5Q607.4 207.2 598.5 202.1M606.9 205.2Q600.1 199.3 596.3 191.2M607.5 205.8Q599.1 199.5 588.9 197.2M607.5 205.8Q602.4 199.8 600 192.2M611.2 209.3Q604.6 199.1 602.5 187.1M613.6 211.7Q608.8 204.1 607.5 195.2M652.6 547.8Q641.6 556.4 628.2 560.6M651.6 549.7Q646.6 559.4 644.6 570M650.9 551Q646 561.2 638.4 569.6M653.6 545.8Q651.7 559.4 651.8 573.1M652.7 547.7Q646.4 556.7 644.7 567.5M649.4 553.8Q644.4 561.2 636.8 566M654.1 545.1Q650.6 560.6 653.6 576.2M650.9 551Q644.2 558.3 635.9 563.6M652.9 547.2Q649 557 648.1 567.5M649.5 553.7Q642.2 561.3 634.2 568M506.1 419.4Q516 423.5 525.3 428.7M508.9 419.4Q517.7 421.3 525.3 426.1M511.5 419.5Q521.5 419.2 531.3 417.3M504 419.4Q515.1 422.9 525.5 428.2M502.3 419.3Q513.5 423.3 523.7 429.3M505.4 419.4Q513.6 418.1 521.1 414.7M505.8 419.4Q516.6 421 527.2 423.5M507.3 419.4Q515.3 420.7 522.1 425.1M504.8 419.4Q515.3 415.8 525.1 410.5M508.8 419.4Q519.5 419.8 529.4 423.8M509.8 419.5Q518.8 419.7 527.6 421.1M511.9 419.5Q521 419.2 529 414.9M510.5 419.5Q519.3 418.7 527.8 421.3M652.4 279Q647.1 286.1 639.2 290.1M658 272.6Q657.4 283.7 659.5 294.6M657.8 272.8Q656.3 281.7 658.4 290.4M655.3 275.7Q645.3 280.4 634.9 284.2M654.8 276.3Q650.3 284.5 647.5 293.5M659.1 271.4Q656.5 283.2 658.3 295.1M655.5 275.5Q651.9 286.9 650.7 298.9M651 280.6Q647.9 286.8 647.3 293.7M656.2 274.7Q651.4 281.9 647.8 289.7M652.8 278.6Q646.5 281.8 639.7 283.4M654.7 276.4Q649.2 286.5 646.7 297.8M653.8 277.4Q648.6 283.5 641.6 287.3M655.7 275.3Q652.5 282.7 652.1 290.7M650.5 281.2Q642.6 286.4 634.1 290.8M653.8 277.5Q651.1 287.6 649.4 298M652 279.5Q646.1 284.4 639.5 288.5M656.1 274.8Q649.5 283.1 645.2 292.8M645.2 281.1Q633.2 282.2 621.7 285.8M643.1 280.1Q629 271.8 617 260.8M634 275.8Q622.9 273.5 611.7 275.3M643.9 280.5Q629.5 273.5 618.1 262.4M641.6 279.4Q630.6 275.4 619 274.6M644.9 280.9Q633.2 268.6 623.4 254.9M633.6 275.6Q624.9 274.5 616.2 275M635.6 276.5Q626.9 273.5 620.6 267M643.7 280.3Q633.3 273.1 625.6 263.1M643.4 280.2Q637.5 271.1 634.1 260.8M645.8 281.4Q636.7 272.4 628.5 262.6M636.8 277.1Q627 274.6 616.9 276.1M642 279.5Q629.3 269.6 622.1 255.3M636.1 276.8Q627.4 272.5 617.8 271.5M650 434.6Q639.4 425.7 626 422.3M645.5 426.8Q640.1 422.1 634 418.4M647 429.3Q644.4 421.7 644.7 413.7M644.5 424.9Q643 416.5 642.9 407.9M645.4 426.5Q640.3 420.5 634.6 415.2M648.6 432.2Q646.7 424 646.6 415.7M650.8 436Q645.4 422.4 643.8 407.8M650.1 434.7Q650.1 421.1 656 408.8M650.3 435.2Q639.7 431.6 628.6 429.8M649.1 433Q645.1 422.2 642.2 411M646.2 427.9Q640.4 421.9 632.8 418.7M635.1 219.1Q634.5 208 636.6 197.1M636.1 222.2Q633.9 212.3 636.3 202.4M633 212.5Q628.3 203.2 620.8 196M633.2 213.2Q630.6 203.7 632.1 193.9M634.7 217.9Q629.2 208.8 621.9 201.1M633.7 214.5Q631.5 204.8 625.5 196.9M635.7 221Q633.1 209.5 632.3 197.6M635.3 219.6Q632.8 208.6 632.6 197.4M636 221.7Q637.9 211.6 642 202.2M643.1 461.8Q634.6 471.5 622.7 476.7M638.2 466.9Q633.2 472.4 627 476.7M644.4 460.4Q636.5 469 631.7 479.6M637.7 467.3Q631.8 475 627.6 483.7M638.6 466.4Q633.1 473.9 630.6 482.9M641 463.9Q635.8 471.5 627.7 475.9M644.1 460.7Q634.1 465.9 623.7 470.2M644 460.9Q637.3 465.4 630.1 468.8M641.9 463Q636 470.9 631.5 479.6M638 467Q633.2 472.3 631.3 479.1M639.7 465.2Q634 473.2 630.5 482.3M641.5 463.4Q633.6 469.2 624.8 473.7M486 268.9Q496.6 272.8 505.6 279.7M488.3 269.1Q500.3 266.4 511.3 260.6M481.7 268.7Q490.9 263.1 499.2 256.1M492.4 269.3Q505.1 268.6 517 264.3M488.1 269Q496.9 273.3 503.6 280.4M489.8 269.2Q500.2 269.4 510.5 268.6M481.3 268.6Q495.3 271 508.8 275.8M646.3 581.8Q631.1 574.7 620.3 561.9M636.2 580.5Q624.1 574.8 613.4 566.9M643.9 581.5Q633 576.1 623.9 567.9M645.9 581.8Q633.2 579.7 620.3 580.5M645.7 581.7Q628 580 611.4 586.3M640.4 581Q630.3 578.4 621.7 572.6M644 581.5Q632.3 576.9 621.3 570.9M645.6 581.7Q632.7 585.4 620.8 591.7M633.7 580.2Q621.3 581 609.3 584.6M638.6 580.8Q624.6 578.9 612 572.5M648.6 582.1Q636.5 575.9 626.2 566.9M498.6 167.8Q508.7 170 519.1 170M497.8 167.5Q504.9 173.8 508.6 182.5M494.7 166Q503.8 169.7 513.6 169.9M492.9 165.2Q499.4 173.9 501.5 184.6M499.8 168.4Q507.2 170.8 513.2 175.9M496.2 166.7Q505.8 169.5 515.7 170.2M494 165.7Q503.8 173.4 511.2 183.3M501.1 169Q510 175.1 517.3 183M501.5 169.2Q509.3 172.7 517.6 174.5M492.7 165.1Q498.8 174.8 500.4 186.2M492.3 164.9Q502.9 171.2 515.2 172.7M500.9 168.9Q507.7 173.9 512.9 180.7M497.3 167.3Q506.2 168.5 515.2 168.2M498.8 168Q507.6 174.1 514.5 182.3M492.8 165.1Q499.1 173.9 501.4 184.4M493.4 165.4Q506 163.2 517.8 158.4M503.1 170Q512.1 173.3 519.6 179.2M494.4 165.9Q505.8 165.8 516.1 160.9M497.9 167.5Q503.8 174.4 506.6 182.9M500.3 168.7Q508.2 171.3 516.4 172M479.7 264.3Q489.7 274.2 502.2 280.7M484.8 270.1Q492 275.4 500.8 276.9M480.3 265Q487.1 272.4 496.2 276.8M478.6 263.1Q485.5 277 485.8 292.6M488.1 273.8Q495 282.5 503.7 289.3M484.1 269.2Q490.8 280 494 292.3M484.7 270Q494.3 274.8 504.6 277.6M488.6 274.4Q494.3 282 497.8 290.7M482.4 267.4Q490.4 275.6 500.2 281.5M628.6 274.5Q618 270.2 607 267.2M633.8 278.1Q623.4 270.8 615 261.3M633.9 278.2Q621.8 270.5 607.5 268.8M633.4 277.8Q626.9 269.9 622.4 260.7M626 272.7Q619.4 267 614.4 260M627.1 273.4Q619.3 269.6 610.7 269.3M624.7 271.8Q617.8 269.1 610.4 267.6M626.4 273Q620.7 267.2 617.3 259.9M628.8 274.6Q619.5 267.6 612.4 258.4M630.5 275.8Q619.3 271.6 607.9 268.3M634.1 278.3Q625.7 272.3 620.5 263.3M631.6 276.6Q622.8 271.7 612.7 271M501.2 510Q509.7 503.3 515.4 494.1M494.6 512.2Q507.1 499.8 513.8 483.6M496.3 511.6Q511.7 512.6 525.3 519.8M503.2 509.4Q516.7 509.9 530.2 511.6M494.1 512.4Q506.4 507.7 517.1 500.2M498.9 510.8Q509.4 506.7 519 500.9M508.9 507.5Q515.3 503.2 520.9 498.1M496.4 511.6Q507.7 510.1 518.5 513.8M504.6 508.9Q513.1 509.9 521.4 512.1M494 512.4Q507.3 510.9 520.6 510.8M652.3 572.2Q638.5 578.3 626.4 587.2M651.7 572.4Q635.9 573.5 620.1 572.7M644.5 574.9Q632.6 580.5 619.5 580.7M645.5 574.6Q634.9 582.1 625.9 591.7M647.8 573.8Q636.6 578.3 624.6 577.5M649.6 573.1Q640.5 576 630.9 575.5M647.8 573.8Q638.5 578.8 631 586.2M652.1 572.2Q639.9 578.2 626.4 578.5M643.4 575.3Q636.2 579.3 631.4 585.9M651 572.6Q641.1 576.3 631.8 581.3M645.5 574.6Q633.6 579.3 623.8 587.5M644.6 574.9Q633.8 575.4 623 575M645.8 574.5Q637.3 577.4 630 582.7M488.3 577Q495.6 586 504.7 593.1M488.6 577.3Q497.6 586.7 508.9 593.3M490.8 580.5Q497.6 588.6 500.7 598.7M488.4 577.2Q493 589.8 491.6 603.2M485.6 573.2Q495.7 584.6 507.9 593.6M489.4 578.5Q493.3 587.9 495.1 597.9M487.1 575.3Q495.4 588 506.8 598.1M485.5 573.1Q489.2 587.3 490.9 601.8M492.8 583.3Q501.2 590.4 511 595.4M488 576.5Q495.6 588.9 507.3 597.5M494.2 585.3Q501.4 594.9 512.1 600.4M494 585Q497.7 591.9 498.2 599.7M494.2 585.3Q498.8 593.1 506 598.6M489.1 578.1Q494.6 591.1 494.1 605.1M533.2 230.1Q544.7 233 556.6 232.6M530.2 228.4Q538.4 231.5 547 233.1M529.2 227.9Q536.7 235.7 543.3 244.3M529.3 227.9Q541.8 231.8 554.7 232.7M526.1 226.1Q534.6 230.3 541 237.3M525.9 226.1Q537.4 230.6 549.6 231.8M536.4 231.9Q544.8 235.7 550.7 242.8M526.9 226.6Q537.7 231.6 549.7 231.2M525.9 226Q531.9 233.2 537.4 240.8M529.9 228.3Q540.3 230.7 550.7 228.7M531.8 229.3Q539.5 234.9 545.8 242M532.5 229.7Q543 235.4 551.5 243.6M527.4 248.8Q533.3 253 540.4 254.4M528.6 250Q534.8 253.8 541.9 255.1M527.7 249.1Q533.8 253.9 537.8 260.5M522.5 244.2Q530.6 252.8 537.6 262.3M529.2 250.6Q535 256.2 539.7 262.8M524 245.6Q532.7 254.3 538.5 265.2M523.3 245Q530.7 249 538.7 252M527.8 249.3Q532.7 255.2 536 262.1M524.4 246.1Q529.3 252.7 531.6 260.7M527.6 249Q534.4 252.8 541.4 256M528.2 249.6Q533.9 253.3 540 256.1M491.1 493.8Q499.7 503.5 503.2 516M492.7 496.4Q498.9 507 507.9 515.3M489.7 491.7Q493.4 506.4 492.9 521.5M494.3 498.7Q501.1 504.4 508.8 508.9M490.2 492.5Q492.5 502.3 491.4 512.3M486.5 486.7Q491 500.3 494.1 514.2M661.6 273.5Q653.3 269.5 645.4 264.6M671.9 276.6Q658.2 273.6 644.2 273.9M671.8 276.6Q654.5 273.4 639.9 263.6M662.7 273.8Q649.8 268.3 635.8 267.8M669.6 275.9Q657.3 275.5 645.6 279.1M656.4 272Q645.7 267.6 634.2 267.4M659.9 273Q650.6 269.7 642.9 263.6M657.3 272.2Q645.6 270.7 634.1 273.6M487 497.5Q497.6 503.3 504.5 513.1M479.4 493.5Q494.9 501.7 511.5 507.2M489.5 498.8Q497.7 503.6 503.7 510.9M490.1 499.1Q498.9 501.4 508 500.4M481.6 494.7Q497.3 498 513.3 497M485.7 496.8Q492.6 503.2 498.6 510.5M481.1 494.4Q491.9 505.4 499.5 518.8M480.2 494Q497.1 496.5 514.2 497.2M489.1 498.6Q498.6 503.3 509.1 504.1M657.9 157.5Q646.4 162.8 636.4 170.4M652.2 156.4Q639.2 158.4 626.7 162.4M651.2 156.2Q639 152 626.3 153.7M653.3 156.6Q640.9 152.4 629.7 145.5M655 157Q644.3 150.7 634.9 142.6M650.8 156.1Q639.3 150.3 628.8 142.9M651.2 156.2Q643.4 151.4 636.2 145.9M645 155Q637.4 154.5 630.4 157.3M646.1 155.2Q638.5 152.8 632.8 147.2M645.5 155.1Q634.8 154.2 624.2 156M664.4 321.4Q660.2 331.2 660.2 341.9M664.4 321.4Q655.2 330.6 644.8 338.6M665.5 319.1Q659.6 326.9 650.9 331.4M664.1 322Q658.9 332.1 650.9 340.1M663.8 322.5Q659.3 329.2 653.2 334.5M666.4 317.5Q659.7 328 657.4 340.3M662.5 325.3Q657.7 335.5 650.8 344.4M663.1 324.1Q660.3 336.1 659.7 348.4M668.8 312.6Q655.7 319.1 641.9 324.1M662 326.3Q659.4 334.2 653.6 340.2M662.1 326.2Q657.8 335.3 657.3 345.4M645.6 462.9Q639.2 457.6 634.1 451M649 465.1Q639.1 461.3 628.5 460.4M655.1 469.1Q645.1 463.9 634.2 461.1M657.1 470.4Q649 457.5 644.3 443M651.5 466.7Q639 463.2 626.3 465.2M654.8 468.9Q644.6 465 633.7 465.8M655.4 469.3Q644.6 461.1 631.3 458.5M652.3 467.3Q647.2 459.9 644.3 451.4M654.1 468.4Q644.4 466.1 634.4 467M647.9 464.4Q640.5 457.1 634.1 448.9M661.5 448.6Q657.5 441.1 650.8 436M662.7 451.5Q654.1 443.9 643.8 438.8M660.6 446.5Q656.1 439.6 649.9 434.2M664.6 456.1Q659 442.4 659.8 427.6M664.5 456Q659.2 442.7 656.2 428.7M664.6 456.2Q660.8 445.2 658.6 433.8M661 447.5Q660.5 437.1 661.9 426.7M664.4 455.8Q652.6 445.6 637.7 440.8M664.1 454.9Q664.8 442.9 667.3 431.1M506.1 300.6Q517.9 299.2 528.4 293.6M509.8 300.1Q517.5 299 525.1 301M508 300.3Q519.5 299.6 530.7 302.2M503.1 300.9Q513.2 298.1 522.9 294.1M513.7 299.6Q521.7 297.8 528.8 293.8M503.5 300.9Q517.7 299.8 531.4 303.7M513.9 299.6Q521.1 297.9 528 295.4M506.4 300.5Q514.5 299.8 522.3 302.1M509.5 300.1Q518.9 296.8 527.8 292.3M481.2 454.9Q486.7 461.3 493.1 466.8M478.8 448.1Q482.7 461.3 484.7 474.8M479.9 451.3Q481.8 459.7 482.9 468.2M481.1 454.8Q482.7 464.2 488.1 472M479.6 450.4Q484.8 461.8 486.2 474.3M479.6 450.5Q481 460.5 481 470.6M481 454.5Q485.5 462.2 491.2 469.1M481.3 455.4Q483.5 463 484.6 470.9M478.7 447.9Q483.4 462.9 493.6 474.8M637.7 168.7Q627.4 163.8 617.4 158.1M647.5 171.1Q632.2 174.9 618 182M647.2 171Q632.8 170 618.6 172.6M644.2 170.3Q628.8 172.7 613.7 176.4M640.8 169.4Q628.5 163.7 617.7 155.6M638.6 168.9Q627.5 166.6 617.6 161.3M647.5 171.1Q635.1 161.2 623.8 150M634.8 167.9Q625.6 165.7 616.1 165.3M517.9 575.4Q527.5 567.6 533.8 556.9M511.7 579.1Q525.3 575.2 539.4 573.7M521.5 573.3Q527.7 569.7 532.3 564.2M511.7 579.1Q525.6 575.4 540 576.2M519.5 574.5Q526.8 570.7 532.2 564.5M511.5 579.3Q522.8 575.5 534.7 574.7M521.5 573.3Q527.3 568.2 534.9 566.2M515.6 576.8Q525.2 567.1 533 556.1M511.2 579.4Q522 570.4 528.8 558.2M666.3 480.1Q661.1 488.2 657.4 496.9M666.8 479.3Q660 485.3 652.8 490.6M662.9 485.5Q659.2 491.9 653.3 496.5M661.5 487.7Q657.3 497.4 656 507.8M660.9 488.6Q657.9 494.4 655.4 500.3M661.7 487.4Q658.7 495.7 659.6 504.4M663.5 484.5Q657.8 490.5 650.6 494.5M662.8 485.6Q654.7 492 645 495.5M663.8 484Q658.6 493.5 654.7 503.7M663.3 484.8Q658.1 490.1 652.1 494.4M662.9 485.4Q661.7 494.5 661.5 503.7M664.8 482.5Q657.9 491.9 654.5 503.1M660.8 419.8Q650 411.4 637.4 405.8M658.5 418.3Q650.4 408.7 644.7 397.5M666 423.4Q653.5 419.7 640.6 418.3M660 419.3Q654.4 410.3 651.1 400.3M662.7 421.2Q650.5 415.4 637.4 412.4M661.2 420.1Q651 412.6 638.7 409.7M660.4 419.6Q648.2 412.2 639.5 400.8M656.3 416.7Q649.1 414.5 641.6 413.4M667.7 424.6Q655.4 416.3 646.3 404.5M661.4 420.2Q652.8 412.3 645 403.5M667.7 424.6Q653.3 418.9 638.4 414.7M651.3 400Q648.2 412.5 651.1 425.2M649.7 402.4Q646.9 414.6 649.7 426.7M647.9 405.2Q641.4 414.7 638.3 425.7M650.7 400.9Q641.4 407.3 630.3 409.5M653.1 397.2Q652.8 411.5 655.1 425.7M650.9 400.7Q640.9 406.9 629.8 410.7M652 398.9Q641.2 408.4 628.3 414.6M648.5 404.3Q639.4 410.8 628.6 414M654.9 394.5Q653.5 409.7 655.7 424.9M647.6 405.7Q639.1 413.9 629.3 420.4M654.4 395.2Q651.9 408.9 652.3 422.8M652.5 398.2Q647.1 411.4 647.4 425.8M648.1 404.9Q643.2 414 639.4 423.6M652.5 398.1Q644.2 403.9 634.5 406.6M660.9 194.7Q649.5 191 637.8 188.4M659.3 193.9Q649.6 188 640.8 180.8M663.7 196Q656.4 191.3 650.3 185.3M664.4 196.4Q652.4 188.2 644.2 176.1M656.1 192.3Q647 186.1 641.3 176.5M656.7 192.6Q647.9 190.8 638.8 190.7M654 191.3Q645.7 185.5 640.8 176.6M664.6 196.5Q654.1 194.9 643.5 195.5M658.4 193.4Q650.3 191.9 642.2 193.7M634.4 472.7Q622.5 472.8 611.8 477.9M639 473.6Q627.9 465.8 620.5 454.4M638.5 473.5Q626.8 465.8 619 454.2M644 474.8Q628.1 473.8 612.6 477.8M646 475.2Q632.3 472.3 618.3 471.8M632.7 472.3Q621.9 470.8 612.1 466M638.7 473.6Q628.2 472.8 617.8 473.6M645 475Q632.5 472.8 619.8 473.3M640.8 474.1Q629.1 472.9 617.5 474.8M637.5 473.3Q627.5 474.4 617.8 477.3M492.5 397.8Q502.3 400.9 512.5 401.6M497.3 400.4Q503.8 405.6 509.2 411.8M493.7 398.5Q501.5 402 507.6 408.1M500.5 402.2Q506.8 404.2 513.4 405.2" fill="none" stroke="#1b4337" stroke-width="1.1" stroke-linecap="round"/><path d="M478.4 422.9Q483.9 437.4 491.1 451.1M480.4 429.9Q483.3 439.7 483.4 449.9M480.2 429.4Q480.1 441.5 476.8 453M479.2 425.7Q485.7 438.5 493.7 450.6M478.8 424.5Q488.4 435.7 499.2 445.8M481.2 432.8Q483 444.9 479.9 456.7M478.6 423.6Q477.2 438.1 472.5 451.8M480 428.5Q482.8 436.5 486.5 444.1M480.3 429.7Q482.7 437.7 485.9 445.4M480.8 431.5Q484.5 443.4 484.7 455.9M478.5 423.1Q484.8 437.9 484.2 453.8M654.1 414.8Q650.8 421.6 649.3 429.1M660.2 406.6Q645.3 412.7 629.9 417.5M658.4 409.1Q652.8 422.4 648.8 436.3M661.9 404.3Q654.3 414.3 643.2 420.1M658.6 408.8Q656.8 419.3 657.8 429.9M658 409.6Q647.1 415.3 635.5 419.5M653.8 415.2Q649.2 422 646 429.6M658.4 409.1Q655.2 422 655.8 435.4M657.8 409.9Q650.1 419.7 640.4 427.4M667.6 530.4Q658.8 524.5 648.4 522.6M672 534.8Q666.6 521.1 666.1 506.3M663.6 526.5Q652.9 518.4 641.1 512.1M667.8 530.6Q661.6 522.6 652.6 518M661.2 524Q651.5 516.3 639.5 513.6M664.8 527.6Q653.4 521.2 641.3 516.4M662.6 525.4Q656.1 517.7 653.8 507.8M664.1 526.9Q655.8 515.9 651.8 502.7M661.3 524.1Q655.3 517.4 651.5 509.1M669.8 532.6Q661.6 523.5 651 517.5M520 268.6Q529.9 270.3 539.6 273M518.9 268.5Q529.4 267.7 539.2 263.9M517.2 268.4Q527 273.1 534.9 280.6M524.9 269Q531.4 270.4 537.1 273.7M528.6 269.4Q537.8 270.2 546.9 268.5M527.7 269.3Q535.3 269.9 542.8 268.3M519.7 268.6Q529.3 270.7 538 275.5M521 268.7Q531.3 269.3 541.2 266.5M520.8 268.7Q529.1 270.7 537.4 269M525.2 269.1Q535.2 271.7 543.8 277.3M493 317.3Q501.1 307.7 506.3 296.3M487.4 321.9Q495.3 310.9 497.4 297.5M488.4 321.1Q500.6 318.5 513 317.4M496.7 314.3Q502 307.6 506.6 300.5M497.7 313.5Q504.4 310.5 511.3 308.4M490.8 319.1Q502.6 315.6 514.8 313.8M489.9 319.8Q497.4 310.8 501.3 299.7M496.9 314.2Q502.2 310 507.8 306.4M494.4 316.2Q500.2 309 504.4 300.7M497.4 313.8Q504.9 307.3 513.8 302.9M493.6 316.8Q504 311.3 515.5 309.2M494.8 315.9Q501.8 311.8 506.5 305.2M497.6 313.6Q503.9 308.6 511.2 305.1M495.6 315.2Q504.7 309.6 514.9 306.6M492.7 317.6Q499.9 310.6 503.9 301.4M664.1 490.9Q657.7 496.4 652.5 503M662.6 491.7Q655.8 494.8 648.3 495M669.7 487.9Q659.4 498 654.2 511.4M663.8 491.1Q655.6 497 649.1 504.6M666.1 489.8Q659.6 494.9 651.4 496.5M669.4 488Q657 491.3 644.4 488.8M669.8 487.8Q660.7 492.9 650.7 495.9M661.2 492.5Q656 497.1 653 503.3M664.5 490.7Q656.7 490.5 649.1 489.2M660.8 492.8Q654.7 497.7 650.4 504.2M671.3 487Q660.8 489.6 649.9 490.8M512.9 279.2Q517.2 271.7 518 263.2M507.4 286.8Q514.5 277.3 519.7 266.5M509.6 283.7Q515.6 273.3 516.6 261.3M512.3 280.1Q517 271 525.4 264.9M506.7 287.7Q519.6 280.7 533.3 275.4M509 284.6Q513.9 275 516.1 264.5M506.8 287.6Q516.9 277.8 530.1 273.1M511.7 280.9Q516.5 275 519.1 267.8M506.9 287.4Q512.6 280.4 520.3 275.9M510.6 282.3Q516.9 277.6 524.1 274.6M497.6 436Q508.1 431 516.9 423.4M499.2 435Q509 427.7 517.9 419.3M502.7 433.1Q511.3 428.6 520.9 426.7M492.7 438.7Q502.7 437.5 512.8 437.4M492 439.2Q504.8 433.1 515.3 423.3M495.3 437.3Q509.3 433.5 523.5 435.9M492.7 438.8Q505.9 433.7 519.9 431.8M502.9 433Q513.6 428.1 525.3 426.9M498.8 435.3Q508.3 428.9 519.7 427.2M479.4 192.9Q490.7 190.4 502.2 190.1M482.8 191.7Q490.2 189.3 497.2 185.7M480.8 192.4Q490.3 187.4 498.5 180.4M485 191Q493.7 188 501.7 183.4M481.9 192.1Q490.2 191.9 498.4 193.4M482.6 191.8Q489.9 188.2 496.4 183.5M483.8 191.4Q491.8 188.9 500.1 188.1M478 193.4Q486.9 186.5 493.9 177.5M474.4 194.7Q484.9 191.7 495.8 191.2M653 305.4Q647.6 299.2 645.3 291.4M655.2 307.6Q646.9 301.4 636.6 299.6M661.7 314.1Q654.3 300.1 649.8 285M662.2 314.5Q648.7 304.9 633 299.9M660 312.4Q654.1 300.3 650.6 287.4M660.3 312.7Q652.3 305.5 642.1 302.3M658.3 310.7Q653 300.4 648.7 289.6M661.7 314.1Q660.2 297.9 662.1 281.7M653.1 305.5Q645.8 297.6 635.8 293.7M660.1 312.4Q650.5 306.4 640.3 301.4M652.9 305.3Q646.7 297.7 638 293.2M615.4 230.1Q606.2 225.5 596.2 222.9M610.8 226.6Q602.6 222.6 594.1 219.4M618.1 232.1Q607.7 225.7 600 216.2M616.6 231Q607.5 227.3 597.7 225.8M617.8 231.8Q607.4 224.8 595.2 221.7M610.3 226.2Q604.7 221.8 598.5 218.6M617.4 231.5Q610.4 224.1 606.1 214.8M611.8 227.4Q604.5 221.2 595.7 217.5M609.9 225.9Q604.6 221.7 600.8 216.3M611.7 227.3Q603.5 221 598.7 211.9M611.6 227.2Q603.6 221 597.3 213M609.8 225.9Q604.1 221.6 599.8 215.9M501.8 377.9Q510.2 383.5 519.4 387.9M499.2 375.1Q508.6 383.2 514.9 393.9M500.1 376.1Q511 380.6 522.5 383.6M501.9 378Q505.6 385.3 508 393.1M497 372.8Q506.3 379.5 516.9 384M496.2 372Q505 380.1 510.8 390.7M500.7 376.8Q511.2 381.9 522.6 384M495.4 371.1Q501.7 381.8 506.7 393M498.2 374Q505.1 383.6 511.2 393.7M659 368.5Q652.1 359.8 642.6 354M659.9 369.5Q648.3 356 638.8 341M656.4 365.5Q647.8 353.3 635.5 344.7M655.4 364.4Q649.8 353.2 647.2 340.9M651.7 360.2Q646.9 351.6 645.2 341.9M656 365Q644.9 357 632.9 350.6M654.8 363.6Q649.4 350.5 646.4 336.7M649.9 358.2Q642.3 350.2 633.5 343.6M655.1 364Q644.1 354.3 630 350.5M650 358.3Q644.1 350.5 641.3 341.2M653.8 362.5Q649.5 354.7 646 346.4M659.6 369.2Q659.9 357 661.8 344.9M656.7 365.8Q645.3 355.3 630.8 350M660.5 370.1Q653.3 359.3 649.4 347M486.8 185.7Q495 187.3 503.3 187.6M485 184.9Q494.7 188.6 505 190.4M478.8 182.5Q492.4 187.8 503.9 196.8M480 182.9Q486 189.7 491.1 197.3M477.2 181.8Q489.5 185.1 502.2 186M481 183.3Q490.6 193.8 499.2 205.2M484.5 184.8Q496.2 186.7 507.8 184.8M483.2 184.2Q494.6 188.9 506.9 189.2M505.4 360.1Q513.5 370.3 517.6 382.6M510.8 365.4Q517.1 369.1 523.9 371.8M502.5 357.3Q514.6 364.3 527.8 368.9M505.1 359.8Q512.6 363 520.6 364M507.5 362.2Q515.1 369 519.5 378.2M502.4 357.1Q513.8 362.7 526.3 364.8M508 362.7Q516.4 370.9 520.4 381.9M642.4 325.6Q632 333.7 619.1 336.7M642.4 325.5Q633.9 326.3 625.3 326.4M639.3 327.3Q627.8 333 615.1 333.9M643.1 325.2Q637.6 333.3 633 342M639.7 327.1Q632.1 329.9 624.1 329.7M645.6 323.8Q632 330.7 621.6 341.9M649.7 321.5Q638.4 320.9 627.4 318M642.7 325.4Q632.2 328 621.4 328.3M644.3 324.5Q635.7 330.3 625.8 333.4M640.6 565.4Q633.9 572.3 630.1 581.1M640.7 565.3Q630.3 574.8 616.6 578.6M647.4 558.6Q638.8 575.5 633.5 593.6M642.8 563.2Q633.8 570.4 624 576.3M644.5 561.5Q630.6 569.5 615.2 574.2M636.2 569.8Q628.1 578.5 622.8 589.1M644.7 561.3Q632.3 573.7 616.9 582.1M640.9 565.1Q635.8 574.9 632.3 585.3M641.7 564.2Q629.6 573.9 614.5 577.5M645.5 560.5Q636.4 568 625.9 573.4M638.8 567.1Q630.3 575.4 619.3 579.7M643.4 562.6Q630.8 572.5 617 580.8M618.4 527.5Q609.9 527.1 602.1 530.4M625.5 527.3Q614.7 529.3 604.2 526.3M628 527.2Q618.2 527.1 608.6 525.8M619.7 527.5Q613.9 528.3 608.6 530.8M625.4 527.3Q617.1 525.3 609.5 521.4M621.8 527.4Q614.5 528.1 607.6 530.5M623.5 527.3Q616.3 526.8 609.2 525.1M625.9 527.2Q615.2 526.3 605.4 521.9M652.5 232.7Q641.5 236.9 629.7 238M652.6 232.7Q645 235.8 637.2 238M658.1 230.1Q644.7 236.1 630.4 239.3M658.6 229.8Q648.1 234.7 640.2 243.1M652.4 232.7Q643.8 238.4 633.6 240.1M658.4 229.9Q649.3 234.2 641.2 240.2M653.7 232.1Q641.7 236.8 629.3 240.3M663.4 567.9Q652.8 567.2 642.2 567.6M668.7 569.3Q656.2 563.7 647.2 553.3M670.2 569.7Q656.4 572.7 643.8 579.1M669.3 569.4Q658.1 570.3 648.1 575.5M671.5 570Q663.1 565.8 655.6 560.3M670.2 569.7Q661.3 568.1 652.4 569.9M662.2 567.6Q653.6 565.8 644.9 565.2M662.4 567.7Q651.9 565.5 642.8 559.8M671.6 570Q658 567 644.2 565.3M668.1 569.2Q657.5 565.8 647.3 561.4M664.8 568.3Q656.4 563.7 650.2 556.2M669.1 569.4Q659.4 571.1 650 573.8M662.2 567.6Q655.7 564.4 650.1 559.8M660.2 567.1Q651.2 565.5 642.2 566.7M664.2 568.2Q653.5 566.7 644.1 561.1M661.4 567.4Q652.8 565.1 643.9 565.5M480.7 388.5Q481.7 374.1 477.9 360.1M482.8 383.9Q492.6 370.5 504.5 358.9M482.5 384.6Q492.8 370.8 507.9 362.4M482.7 384.1Q487 373.5 488.9 362.3M486.7 375.5Q493.2 368.3 501.1 362.7M480.4 389.2Q490.8 382.6 502.3 378M485.1 379Q488.5 366.2 485.9 353.3M482.5 384.5Q492.3 372.6 506.3 366.2M486.9 374.9Q490.4 362.3 492 349.3M484.3 380.7Q488.1 371.4 487.5 361.3M486.3 376.2Q489.1 368.2 489.4 359.6M625.7 545.7Q616.7 550.1 608.8 556.2M626.3 545.6Q612 547.8 598.8 553.5M620.9 546.3Q611.6 545.5 602.6 543.4M624.9 545.8Q613.4 543.8 602.5 539.6M626.4 545.6Q617.4 548.4 610.3 554.4M622.2 546.1Q611.1 549.7 601.3 555.9M628.6 545.3Q614.9 547.5 601.6 543.3M620.1 546.4Q610.6 548.2 602.8 554M617.4 546.8Q608.2 548.1 599.9 552.4M628.2 545.3Q618.4 545.7 608.7 543.7M617.7 546.7Q608.4 548.9 599.8 553.3M620.4 546.4Q610.3 548.4 602 554.4M497.6 246.6Q508.7 249.2 520 248.1M493.3 244.8Q500.5 252.3 505.8 261.1M498.4 247Q507.5 250.1 514.7 256.4M498.6 247.1Q506.6 249.6 514.9 249.6M492.1 244.3Q500.5 250.6 506.3 259.2M497.6 246.6Q507.4 252.6 518.8 254.3M489.5 243.2Q502.2 251 511.8 262.6M484.6 241.2Q500.9 239.8 516.5 234.9M488.9 243Q505.2 242.8 519.9 236M530.3 260.5Q538.5 261.4 546.7 260.4M528.5 260.3Q534.5 261.1 540.2 262.8M522.8 259.5Q533.9 262.5 545.3 261M521.1 259.3Q529.6 263.9 537.4 269.5M519.6 259.1Q530.1 260.5 540.5 258.5M522.9 259.5Q533.7 263.1 542.8 269.9M518.6 258.9Q531.7 262 544.1 267.3M518.3 258.9Q527 261.8 533.5 268.2M527.9 260.2Q537 263.8 545.7 268.2M525 259.8Q534.1 259.6 542.7 256.4M523 259.5Q533.8 260.7 544.6 261M522.6 259.5Q533.7 259.8 544.7 258.5M651.4 400.2Q643.8 396 635.1 395.4M658.5 405.7Q653.6 392.2 652.5 377.8M653.8 402.1Q645.5 393.9 639.2 384M652.2 400.9Q641.2 393.3 634.6 381.8M650.8 399.8Q640.7 395.5 630 392.9M655.6 403.5Q645.9 392.2 637.5 379.9M659.6 406.6Q649.9 398 641.2 388.4M653.8 402.1Q646.9 396.2 638.6 392.7M652.4 401Q642.6 392.2 637.6 380M640.2 180Q636.5 189.7 634.6 199.9M641.5 177.9Q635.5 189.3 633.6 202.1M643.2 175.3Q638.7 186.3 637.2 198.1M639.5 181Q634.2 189.3 630.8 198.5M635.1 187.9Q630.1 193.9 624.1 199M635 188Q629.5 194.6 623 200.4M641.6 177.8Q633.8 187.4 630.8 199.4M637.5 184.1Q632 191.8 630.6 201.1M639.3 181.4Q635.7 193.5 634.2 206M643.2 175.4Q639.2 186.7 637 198.5M513.2 435.4Q520.4 441.3 528.7 445.7M512.4 434.8Q521.7 441.4 528.4 450.5M511.4 434Q519.2 439.7 527.7 444.6M511.3 433.9Q521.8 438 532.7 440.9M512.2 434.6Q518.8 444.4 524.4 454.8M510.3 433.1Q517.6 441.4 522.6 451.4M508.7 431.8Q518 436.9 528.3 439.3M507.6 430.9Q514.2 438.7 518.9 447.9M506.3 429.8Q517.6 433.6 529.4 434.9M508.3 431.4Q519.8 440.1 533.5 444.6M503.7 427.7Q514.3 439.7 520.5 454.4M511.4 434Q520.8 441.3 527.2 451.3M626 514.4Q617.3 519.9 610.8 527.9M635.7 510.4Q626.7 519.6 622 531.6M631.2 512.3Q623.7 515.2 615.7 515.8M635.5 510.5Q627.3 514.2 619.8 519.1M634.6 510.9Q624.1 512.1 613.5 510.7M630.7 512.5Q621.6 514 612.5 511.9M634.6 510.9Q625.9 516 620.4 524.4M638.5 509.3Q625 513.7 610.7 514.8M636.1 510.3Q627.8 521.5 620.8 533.6M633.4 511.4Q624 519.6 615.5 528.7M636.2 510.2Q623.6 514.1 610.4 513.3M637.1 509.9Q623.6 514.9 609.2 514.2M634.5 499.1Q622.9 499.8 611.4 498.8M635.2 498.9Q622.9 501.1 612.3 507.8M628.6 500.8Q619.6 507.2 611.3 514.5M625.4 501.7Q617.3 508.6 610 516.4M630.9 500.2Q617.7 503.4 606.6 511.1M638.7 497.9Q623.8 492 611.2 482M633 499.6Q619 496.7 606.1 490.9M627.6 501.1Q618.1 502.1 608.5 501.6M627 501.3Q618.1 504.3 611 510.5M624.5 502Q612.6 503.9 600.7 502.4M629.3 500.6Q616.5 503.9 603.5 501.8M508.9 308.4Q514.6 302.1 522.1 298.4M508.4 308.8Q513.3 304.6 519 301.5M502.9 313.4Q509 306.6 513.8 298.9M507.3 309.7Q514.7 302.5 518.6 292.9M504.3 312.2Q512.5 305.1 517.3 295.3M503.2 313.1Q508.8 307.1 516.4 304M507.9 309.2Q513.9 304.5 521.3 302.7M506.1 310.7Q512.4 303.5 516.1 294.7M502.5 313.7Q509.6 304.7 515.6 294.9M505.6 311.1Q511.3 304.7 519.2 301.4M509.4 308Q516.6 302.2 525.2 298.6M530.4 282.1Q536.5 278.8 541.4 273.9M530.1 282.3Q538.3 277.6 547.7 276.9M520.4 288.2Q531.3 278.3 539.4 266.1M521.9 287.3Q532.1 281.4 543.5 278.6M519.8 288.6Q530.7 283.4 539 274.6M521.6 287.5Q532.7 281.9 544.4 278.1M530.1 282.3Q538.8 278 545.4 270.9M528.8 283.1Q535.9 279.5 543.7 277.8M521.4 287.7Q530.3 282.2 537.9 275M520.9 287.9Q531.6 281.6 544 280.7M520.5 288.2Q533.4 285.6 546.4 284.1M524.1 286Q534.1 279.6 545.6 277M530.7 281.9Q538.5 278.4 544.2 272.2M526.1 284.7Q534.8 279.7 544.7 278.9M505.3 380.9Q513.4 370.8 517.9 358.6M508.5 378.9Q516.9 375 525.6 371.8M510.2 377.8Q519.6 374.3 529.4 371.6M504.6 381.4Q510.8 372 516.2 362M504.8 381.3Q511.9 377.2 519.6 374.8M508.1 379.1Q514.8 372.8 520.9 365.9M513.2 375.9Q520.3 370.3 529 367.8M510.7 377.5Q518.4 372.8 523.5 365.2M530.6 225.6Q538.3 218.2 544.2 209.3M524.4 228.8Q536 224.9 548.1 223.5M529.1 226.4Q538.1 221.2 545.2 213.6M526.2 227.9Q536.5 223.8 547.6 224.6M534 223.8Q541.5 218.5 548.4 212.5M523.2 229.5Q533.2 226.1 543.7 225.6M522.2 230Q529.3 223.1 534.5 214.8M522.9 229.6Q535.6 225 548.7 222.5M528.2 226.9Q537.6 220.5 544.4 211.3M525.5 228.3Q535.1 225.5 545.1 226.1M532.3 224.7Q538.2 220 542.6 214M529.3 226.2Q534.7 220.9 538.9 214.7M529.4 226.2Q539.4 223.6 549.7 225M529.6 226.1Q537.6 224.6 545.7 225.1M525.9 228Q535.3 224 542.7 217M658.8 246Q650.5 236.6 640.2 229.3M660.1 250.1Q656.4 236.2 648.2 224.3M656.3 238.8Q654 230.2 652.8 221.4M661.1 253Q661 236.4 665 220.2M658.3 244.7Q655.8 234.8 654.5 224.7M660.6 251.4Q653.1 238.4 644.2 226.3M636.6 515.3Q626.7 509.9 615.5 508.2M639.6 518.5Q629.9 509.7 619.3 502M638.6 517.5Q629.3 508.5 617.1 504.3M635.5 514.2Q629.5 506.7 624.5 498.5M633 511.6Q624.1 503.5 614.5 496.3M636.6 515.3Q625.8 505.3 619.4 492.1M632.8 511.3Q625.1 503.7 620.6 493.9M639.2 518.1Q633.1 505.4 629.1 492M634.8 513.4Q625.4 507.4 614.4 506M635 513.7Q627.3 504.3 620.8 494.1M632.5 511Q620.9 503.7 608.6 497.6M631.3 509.8Q625 502.5 619.4 494.7M632.2 510.7Q623.2 502.7 612.6 496.9M632.1 510.7Q621.7 505.4 610.7 501.6M512.2 287.5Q522.2 295 534.2 298.1M504.7 281.5Q519.7 288 535.9 289.3M506.3 282.8Q514.1 295.3 517.9 309.6M508.9 284.9Q517 295.7 520.8 308.7M507.2 283.5Q517 289.5 528 292.8M508.4 284.5Q513.6 293.8 517.8 303.5M501.8 279.1Q514.2 288.7 528 296.1M507.5 283.8Q515 289.8 519.8 298.1M507.5 283.8Q515.4 295.2 521.9 307.5M507.8 557.4Q509.4 543.1 508.4 528.8M513.7 548.4Q517.5 541.3 523.6 536M508.2 556.7Q514.6 547.3 523.1 539.6M514.3 547.5Q518.7 540.8 520.8 532.9M512.6 550.1Q516.2 542 518 533.3M513.2 549.2Q518.8 543.2 521.2 535.3M512.3 550.6Q518 542.5 525.2 535.7M512.8 549.9Q519.2 541.8 528.1 536.7M509.2 555.2Q514.8 542.8 516.4 529.3M510.3 553.6Q519 542.8 531.1 536.3M513.2 549.3Q520 540.6 528 533.1M511.5 551.7Q519 541.9 523.7 530.4M503.5 193Q505.7 206.6 501.5 219.7M504.4 194.2Q509.9 202.4 517.3 208.9M505.8 196.2Q511.7 206.2 514.1 217.5M508.9 200.4Q516.3 206.2 524.5 210.8M503.3 192.7Q513.4 197.7 524.7 197.8M507.7 198.8Q515.7 209.2 520.8 221.3M503.2 192.6Q504.7 204.4 502.2 216M510.5 202.7Q516.8 209.1 525.2 212.3M502.6 191.7Q510 205.8 510.2 221.8M644.1 252.2Q638.2 241.2 633.7 229.5M639.6 244.1Q632 238.9 623.9 234.4M638.2 241.7Q632.5 233.8 625.1 227.6M639.2 243.4Q636 235.1 634.9 226.3M642.6 249.6Q632.8 240.7 621 234.8M638.8 242.7Q633.1 237.2 626 233.8M639.1 243.2Q636.1 235.2 634.8 226.7M640 244.9Q634.4 234.3 625.6 226.1M642.7 249.7Q640.3 237.7 639.4 225.5M491.5 218.5Q503 222.3 513.5 228.5M485.5 219Q498 218.8 509.8 214.5M490.6 218.6Q500.2 216 507.7 209.4M485.9 219Q497.6 214.3 508.5 207.6M490.8 218.6Q501.7 216.7 511.4 211.3M491.6 218.5Q502.3 220.8 512.5 225M639.9 391Q628.9 392.8 619.5 398.8M646.1 390.6Q635.9 388.2 627.9 381.5M648.3 390.5Q640.1 393.9 633.6 400.1M640.6 391Q630 389.7 619.8 387.1M646.4 390.6Q637.1 392 628.8 396.5M639.4 391Q630 391.3 621.3 387.4M645.5 390.6Q632.5 388.5 620.9 382.3M637.3 391.2Q629.5 392.8 622.4 396.4M640.7 391Q633.8 393.7 627.2 397.4M656.5 357.8Q649.5 345.5 643.7 332.6M654.2 354.4Q644 346.5 631.4 343.4M654.1 354.2Q643.1 344.2 628.9 340M652.2 351.4Q645.6 340.8 636.9 332M654.2 354.5Q644.9 342.7 640.8 328.2M657 358.7Q644.4 345.8 627.3 340M655.3 356.1Q652.1 341.7 651.9 327M652.1 351.3Q643.8 341.4 632.9 334.2M654.5 354.8Q646.7 342.2 642.8 327.8M655.8 356.8Q651.3 344.2 649.6 330.9M655.5 356.4Q650.1 340.3 647.1 323.5M494.9 160Q506.1 164.1 518 163.4M497.7 160.6Q507.4 164.5 516.5 169.6M491.1 159.1Q498.8 164.5 504.9 171.5M497.1 160.5Q504.5 162.3 510.8 166.6M489.2 158.7Q499.4 163.7 508.7 170.1M489.8 158.8Q498.4 162.5 506 167.9M615.2 233Q608.8 226.1 603.6 218.3M619.1 236.3Q609 226.6 604.2 213.5M619.6 236.8Q612.9 230.5 604.7 226.4M614.9 232.7Q609.1 226.4 606.1 218.4M617.7 235.1Q610.5 230.9 602.8 227.5M618.7 236Q611.1 230.3 602.7 225.8M618.6 236Q611.6 228.1 608.1 218.1M621.2 238.1Q612.6 234.3 603.4 232.8M614.9 232.7Q609.3 226 605 218.3M620.4 237.5Q610.8 231.6 599.7 229.7M613.8 231.8Q607.1 225.1 598.9 220.2M620.2 237.3Q609.9 228.3 602.6 216.7M505.6 465.4Q513.1 458.5 522.8 455.1M505.1 465.8Q513.4 458.5 518.3 448.6M508 463.5Q514.6 457.8 523.1 455.5M502 468.2Q512.6 465.1 523.7 464.1M503.7 466.9Q510.1 462.4 517.9 461.2M501 468.9Q510.3 463.4 520.3 459.2M503.5 467Q507.7 458.9 511 450.4M499.3 470.2Q507.1 462 512.3 451.8M501.5 468.5Q506.8 460.4 511.1 451.8M506.6 464.6Q514.7 459.5 523.3 455M503.5 467Q511.8 461.5 516.8 452.9M499.2 470.3Q508.8 463.6 519.5 458.9M487.1 483.9Q496.6 486.3 506.4 487.7M489 484.7Q496.1 485.6 503.2 484M484.2 482.8Q496.5 486.8 507.4 493.8M489.7 485Q499.3 490.3 510.2 491.3M479.4 480.9Q490.4 486 499 494.5M476.1 479.6Q489.4 477.2 500.5 469.6M477.2 480Q491.9 479.2 505.5 473.7M482.9 482.3Q494.2 489.8 502.3 500.6M643.3 397.2Q637.4 392 631.9 386.3M647 399.9Q637.8 391.3 625.9 387.3M638.9 393.9Q633.8 389.1 630.6 382.8M644.1 397.7Q635.2 390.9 628.3 382M640.2 394.9Q631.2 391.3 621.9 389M638.6 393.7Q631.6 389.7 626.8 383.2M638.2 393.4Q630.2 388.3 624.5 380.8M640.9 395.4Q632.8 390.1 623.9 386.2M638.9 393.9Q633.7 389.2 626.9 387.3M647.2 400Q638.7 388.6 635.4 374.7M661.3 548.2Q652.1 542.2 642.5 537M660.6 547Q655.8 539.3 652.3 530.9M661.2 548Q658.4 536 660 523.7M657.2 541.8Q653.1 536.5 648.2 531.9M659.1 544.8Q651.8 538.6 643.7 533.6M662.9 550.7Q657.8 541.9 655.4 531.9M657.6 542.5Q653.3 536 649.9 528.9M658 543Q654.3 535.9 648.1 530.7M657.8 542.8Q654.4 535.4 648.1 530.2M656.9 541.5Q653.3 533.7 652.9 525.2M660.7 547.3Q657.5 539.5 657.3 531.1M657.9 542.9Q651.5 538.1 644.6 534.2M664 161.3Q656.4 153.6 647.3 147.8M665 162.7Q662 154.8 659.9 146.5M662.7 159.2Q655.7 150.9 652.7 140.4M665.2 162.9Q654.3 157.6 643.1 153.1M665 162.6Q661.5 153.7 661.2 144.1M668 167.1Q665 154.4 665.3 141.4M662.9 159.6Q655.4 153.5 646.5 149.8M665.9 164Q663.9 150.6 664.1 137.1M525.5 559.7Q533.7 553.8 539.7 545.8M523.1 561.4Q533.4 556.9 544.6 556.3M524.8 560.2Q530.7 555.8 535.2 550M522 562.2Q533.9 557.7 546.7 558.5M521.2 562.7Q529.3 556.7 538.4 552.6M523.2 561.3Q533.4 554 545.3 550.2M522.7 561.7Q533.1 554.6 542 545.8M523.8 560.9Q534.3 554.7 546.5 553.7M522.7 561.7Q532.2 556.9 542.5 553.8M526.8 558.8Q535.2 552.6 542.9 545.4M523.7 561Q529.7 555.8 537.4 553.8M524.8 560.2Q533.5 552.1 537.9 541M522.9 561.6Q534.1 555.4 546.8 553.7M488.2 340.1Q495.6 332.9 501.8 324.6M494.3 338.5Q502.1 338 509.7 339.4M485.6 340.7Q498.3 338.5 511.1 338M490.5 339.5Q497.9 335.4 504.5 330.1M487.7 340.2Q498.8 332.4 508.3 322.9M494.2 338.5Q503.8 339.2 512.9 342.4M495.1 338.3Q503.5 335.3 510.5 329.9M485 340.9Q498.6 347.8 511.2 356.4M619.1 242.8Q611 236.8 601.6 233M616.6 240.7Q609.1 232.7 605 222.6M626.6 249Q615.7 238.3 601.7 232M624.3 247.1Q616.9 240.9 607.5 238.7M618.7 242.4Q611.4 236.5 604.9 229.8M619.2 242.8Q607.8 238.3 596 235.1M623.2 246.2Q612.2 236.6 599 230.5M622.2 245.3Q616.2 236.9 612.5 227.3M620 243.5Q611.8 238.8 602.3 237.8M624.6 247.4Q617.6 240.9 608.8 237.3M621 244.4Q611.2 237.3 605 226.8M507.1 340.7Q515.6 338 522.1 332M511.1 339.2Q519.6 337.8 528.1 339.3M510.7 339.4Q516.8 336.4 521 331M511.8 339Q518.5 338.6 525.2 339.1M508.7 340.1Q516.5 335.2 521.8 327.6M510.3 339.5Q518.8 336.3 525.8 330.5M505.6 341.2Q516.4 338.6 527.4 340.5M506.7 340.8Q515 339.3 523.2 340.5M510.6 339.4Q516.9 335.9 521.9 330.6M509.2 339.9Q517.1 335.4 524.3 329.9M506.4 341Q514.5 339.7 522.6 341.7M509 340Q518.8 338.1 528.7 338.3M515.5 337.6Q523.3 334.7 530.8 331.1M515 337.8Q523 334.5 530.1 329.4M665.2 594.7Q661.5 605.4 661.8 616.6M663.2 599.1Q655.3 607.5 646 614.4M666.9 591Q659.2 599.6 650.5 607.2M669.8 584.8Q664.9 598.5 663 612.9M666.5 591.9Q660.3 600 653.4 607.5M663.3 598.8Q659.7 607.5 658 616.7M667.7 589.4Q663.1 601.5 664.3 614.3M666.2 592.6Q656.4 601.6 644.3 607M667.9 588.9Q660 603.6 656.6 620.1M664.6 596.1Q659 605.2 657.2 615.9M664.6 596Q659.1 608.1 651.1 618.7M666.7 591.4Q663.5 601.6 656.3 609.6M668.4 587.8Q655.8 596.9 641.2 602.2M664.1 597.1Q663.6 608.3 664.2 619.4M669.1 586.2Q663.2 596.5 654.5 604.7M667 590.9Q663.9 601.1 664.7 611.7M489.3 434.9Q501.4 441.1 509.5 452M486.1 433.8Q500.9 433.4 515.5 431M486 433.7Q497.6 435.4 509.4 435.1M492.5 436.1Q501.8 439 510.3 443.9M496 437.3Q507.5 438.6 519.2 437.9M487.8 434.4Q494.9 440.1 501.2 446.8M494.4 436.7Q502.3 436.9 510.1 435.9M491.4 435.7Q503.8 440.3 515.6 446.3M485.6 433.6Q498.3 433.9 510.8 431.2M486.9 434.1Q498 433.8 508.5 430.4M520.7 509.2Q527 510.1 533.4 510.3M510.9 505.4Q519.4 513.3 526 522.8M518.2 508.3Q525.2 511.7 532.9 512.3M516.1 507.4Q523.7 510.5 531.7 512.4M510.9 505.4Q522.1 506.9 533.1 504.6M512 505.8Q522.5 505.4 532.8 503.5M515.8 507.3Q524 508 532.3 507.5M514.3 506.7Q522.7 510.8 530.6 515.6M517.8 508.1Q527.2 508.8 536.6 508.6M516.7 507.6Q523.3 513.2 529.2 519.5M512.5 506Q523 506.9 532.8 503.3M515.3 507.1Q523.2 508 531 507.7M652.4 384.8Q642.6 384 633 381.7M656.7 384.5Q647.9 387.8 639.9 392.6M665.1 384.1Q652.9 381.6 641.3 377M664 384.1Q650.5 383.7 638 388.6M657.4 384.5Q649.4 385.5 641.7 388M664.4 384.1Q653.5 382.8 644.3 376.8M653.7 384.7Q644.7 387.7 636.4 392.1M654.8 384.6Q645.4 386.4 636.5 389.7M655.8 384.6Q644.3 388.2 633.3 392.7M665.6 450.9Q656 446.3 645.6 444.3M661.5 447.8Q652.6 445.2 643.3 445.1M655.6 443.3Q649.8 439.8 643.6 437.2M660.8 447.2Q654.8 437.9 652.3 427.2M666.7 451.7Q656 440 651 425M661.8 448Q655.7 439.7 653.4 429.8M663.7 449.4Q656.7 441 652.7 430.8M658.3 445.4Q649.4 438.1 638.4 434.9M666.3 451.4Q652.1 445.6 636.8 445.4M656.8 444.2Q650.4 438.4 642 436.1M663.8 449.5Q654.3 444.7 644.2 441.2M659.4 446.1Q653.8 439.6 649.6 432.2M511.9 492.6Q523 487.8 533.2 481.2M511.6 492.7Q519.6 490.4 527.9 490.3M515.2 491.4Q522.6 488.8 529.3 484.8M507.1 494.2Q516.3 494.1 525.4 495M511.6 492.7Q522 491 532.4 490.4M513 492.2Q520.3 489.6 525.7 484M509.5 493.4Q520.5 489.5 530.6 483.9M508 493.9Q517.9 488.5 524.7 479.5M517 490.8Q526.8 487.9 535 481.8M515 491.5Q523.5 488.6 532.5 489.2M511.4 492.7Q517.6 487.6 523.4 482M505.8 494.7Q516.5 486.3 524.9 475.7M511.6 492.7Q522.2 492.2 532.4 494.8M511.4 492.7Q521.3 485.1 529.9 476.1M655.2 148.3Q647.9 141.2 644.1 131.9M657.7 150.7Q647.4 141 640.5 128.8M664.2 156.9Q654.5 152.5 643.9 151.3M660.3 153.2Q652.9 140.5 647.4 126.8M659.3 152.2Q647.4 143.1 639.8 130.3M655 148.1Q647.7 141 639.7 134.8M662.4 155.2Q652.4 144.7 643.9 132.8M656.1 149.1Q648.7 139.9 638.5 133.9M657.3 150.3Q650.7 143.7 643 138.5M663 155.8Q655.3 144.7 649.1 132.7M664.2 156.9Q650.6 153.5 636.7 151.5M661.4 154.2Q646.7 148.4 630.9 149.5M654.3 147.4Q647.8 141.9 643.9 134.3M485.2 516.6Q492.6 503 502.8 491.4M487.7 510.5Q491.7 500.2 498.3 491.4M485.7 515.4Q483.8 502.3 480.6 489.5M489.3 506.8Q492.9 496.7 500.4 488.9M484.3 518.5Q484 506.5 479.1 495.5M487.4 511.3Q488.7 499.3 487.1 487.3M487 512.2Q490.6 502.7 497.7 495.3M488.1 509.5Q490.2 499.1 489.1 488.5M484 519.4Q494.9 506.3 507.8 495.1M484.4 518.4Q487.5 503.1 489.3 487.5M487.1 512Q491.1 499.1 499.6 488.8M488.1 509.6Q490.6 501.4 491.4 492.9M485.8 515.1Q491.6 505.3 500.3 498M488.1 509.6Q493.8 497.7 494.9 484.4M489 507.3Q492 497.4 498.6 489.3M510.4 440.8Q516.7 437.1 523.6 434.8M508.8 442.1Q512.8 437.3 515.9 431.9M507.6 443.1Q512.4 437.3 514.1 429.9M510.6 440.6Q517.3 435.3 525.5 433M511.4 439.9Q518 435.6 522.3 429M508.4 442.4Q515.7 438.5 523.5 435.9M511.7 439.6Q518.3 433.9 526.4 430.7M510.3 440.8Q515.7 436 519.1 429.7M510.5 440.6Q515.1 436.6 517.8 431.2M507.3 443.3Q514.8 439.3 523 437M506.8 443.8Q512.9 437.2 517.4 429.4M648.6 538.5Q640.3 532.5 631.3 527.6M645.1 535.4Q636.1 528.7 630 519.4M646.1 536.3Q636.5 529.6 630 519.8M644.5 535Q638.5 530.4 632 526.5M651.2 540.7Q643.5 534.6 639.1 525.9M644 534.5Q636.1 528.6 630.3 520.7M648.7 538.5Q642.8 532.4 635.2 528.8M644.4 534.8Q638.7 529.6 634 523.5M645 535.4Q637.1 529.4 628.7 524.2M651.6 541.1Q639.5 537 627.1 534M648.9 538.7Q637.4 533.6 624.9 531.6M650.9 540.5Q643.8 532 640.9 521.4M635.8 411.6Q628.3 405.7 623.5 397.4M642.5 417.6Q634.7 413.3 625.8 412.4M639.3 414.7Q633.3 406 631 395.8M641.8 417Q638.1 408.7 636.3 399.7M640 415.4Q633.2 410.4 625.9 406M640.1 415.4Q636.5 407.4 633.6 399.1M636.9 412.6Q631.1 408.4 627.4 402.4M642.5 417.6Q635.2 413.5 627.6 410.2M641.8 417Q637 404.6 633.5 391.7M642.1 417.3Q635.7 412 630.7 405.4M640.5 415.8Q633.7 408 630.1 398.4M630.5 193.9Q626.2 182.2 617.2 173.7M633.3 200.6Q628.3 187.5 627 173.6M635.6 206Q636.9 189.2 639.7 172.5M633.6 201.2Q629.7 186.3 629.2 170.8M631.7 196.7Q624.8 188.3 615.9 182.1M636.2 207.6Q633 197 632.9 186M635 204.6Q626.7 197.5 616.4 193.6M635.1 205Q627.5 190 625.9 173.3M632.9 199.6Q630.3 187.8 632.4 175.8M634.9 204.5Q622.4 193.8 608.9 184.4M491.1 284.7Q505.3 283.1 519.2 280.1M492.9 284.9Q504.3 287.2 514.3 293.1M497.1 285.6Q509.3 288.3 519.2 296M489.6 284.4Q501 285.9 510.5 292.2M494.6 285.2Q504.9 286.8 513.7 292.2M489.9 284.5Q506.1 288.6 519.9 298.1M486.5 283.9Q501.8 284.9 517 282.6M490.5 284.6Q500.3 282.9 509.7 279.8M491.8 284.8Q504.7 291 515.8 300.1M626.8 544.9Q617.7 551.4 610.9 560.4M627.7 544.3Q620.1 550.4 615.2 558.8M625.1 546.3Q619.4 549.8 613 551.2M626 545.6Q618.6 552.4 609.7 557.2M627.5 544.4Q621.5 549.8 617.7 556.9M630.2 542.2Q621.9 547.9 612.7 551.9M622.8 548.1Q617.2 553.7 612.4 559.9M623.7 547.4Q617.9 549.8 611.7 551.4M625.2 546.2Q618.1 548.8 610.8 550.8M622.6 548.3Q617.9 553.2 614.3 559M628.1 543.9Q619.5 550.5 614.8 560.2M628.9 543.3Q618.9 547.3 608.1 547.6M631.5 541.2Q626.1 552.2 623.7 564.3M502.8 202.6Q506 189.8 505.7 176.7M500 207.3Q512.6 199.8 525.7 193.3M504.2 200.3Q511.8 190.2 514.6 178M505.2 198.7Q509.4 190.1 509.4 180.6M504.7 199.5Q510.9 192 518.3 185.7M505.2 198.7Q509 192.4 510.7 185.2M503.5 201.5Q510.4 192.9 518.6 185.5M500.8 206Q505.7 197.7 511.9 190.4M500 207.4Q500.7 196.8 500.2 186.2M502.4 203.4Q512.6 194.3 523.9 186.7M505.5 198.2Q507.8 187.9 508.9 177.5M502.3 203.5Q511.1 194.7 522.8 190.7M503.9 200.8Q507 193.5 509.3 185.9M503.1 202.2Q514.4 195.5 526.6 190.7M672.1 299.7Q662 303.1 651.5 304.4M666.2 306.9Q660.1 312 652.9 315.6M664.9 308.4Q660.4 317.2 658.7 327.1M666.7 306.2Q662.8 315.1 661.3 324.8M668.4 304.1Q658.9 309.7 648.2 312.4M671.4 300.5Q667 310.7 667.6 321.8M666.5 306.5Q661.3 316.4 657.3 326.9M672.2 299.6Q670 310.9 669.1 322.3M507.2 496.9Q518.3 493 528.8 487.4M512 495.6Q524.8 494.2 537 498M501.8 498.5Q510.6 491.8 516.2 482.2M505.4 497.4Q517.9 496.9 529.3 502.1M515.4 494.6Q523.6 491 530 484.8M502.5 498.3Q515.7 493.8 528.1 487.8M501.4 498.6Q516.9 498.6 531.4 503.7M613 191.3Q605.2 190 597.6 191.7M614.6 191.6Q606.9 186.3 600.1 179.8M607.8 190.1Q601.7 189 595.9 186.4M609 190.4Q599.4 187.8 591.4 182M611.7 191Q602.5 189.9 593.5 191.9M613.6 191.4Q604.3 191.7 595.2 192.8M611.1 190.9Q602 188.6 593.3 184.9M609.2 190.4Q599.8 186.8 591.5 181M612.6 191.2Q602.9 186.3 594.7 179.2M615.3 191.8Q605.3 193.4 595.9 197.1M619.2 192.6Q608.1 190.4 599.3 183.4M618.4 192.4Q605.5 190.3 592.7 193.2M611.5 190.9Q602.8 188.6 595.5 183.1M607.8 190.1Q599.5 186.4 592.2 180.8M632.8 506.1Q625 512.9 619.7 521.8M636.3 503.1Q626 511.9 617 522M633 505.9Q628.2 513.6 624.2 521.6M633.2 505.7Q624 513 612.8 516.7M632.8 506Q622.7 514.6 616.5 526.3M639.5 500.4Q631 507.5 621.1 512.6M637.8 501.8Q626.6 511.5 612.2 515.2M632.4 506.4Q623.3 511.3 613.5 514.8M641.9 498.4Q633.3 509.7 629.3 523.2M503.9 376.7Q515.5 377.2 526.4 373.5M509.4 378.2Q519.1 379.5 527.7 384.4M504.5 376.9Q515.7 379.2 527.1 379M508.1 377.8Q521.8 381.1 535.8 378.9M510.9 378.6Q520.6 381.6 530.6 380.1M517.4 380.2Q525.6 382.4 533.2 386.3M640.9 347.9Q631.8 351.4 625.1 358.4M637.8 349.2Q629.3 350.8 620.6 351.3M640 348.3Q632.9 352.3 627.7 358.7M643.9 346.8Q632.1 346.4 621.1 342M639.3 348.6Q629.1 352.5 621.5 360.4M642.5 347.3Q635.1 349.5 627.4 348.4M644.7 346.4Q634.9 347.8 625.2 346M642.8 347.2Q635.5 349.4 629.7 354.3M642.4 347.3Q635 350 627.5 352M646.5 345.7Q638.5 350.9 631 356.8M637.8 349.2Q630.4 351.2 622.8 351.2M642.8 347.2Q634.7 347.8 626.8 346.1M494.7 291Q498.8 283.7 502 276.1M494.2 291.4Q499.6 284.4 504.2 276.8M489.4 295.7Q504.3 292.7 519.5 292.4M493.4 292.1Q501.4 284.3 506.8 274.5M486.9 298Q503 294.3 519.6 293.9M493.1 292.4Q499.7 285.1 504.3 276.4M496.7 289.2Q501.7 282.6 505.8 275.3M489.1 296Q500.9 288.3 514.1 283.5M491.7 293.6Q495.9 284.8 498.1 275.3M485 299.7Q492.3 286.6 495.5 272M512.6 334.6Q520 336.6 527.6 336.7M507.6 333.1Q518.8 338.5 527.2 347.8M514.2 335.1Q521.4 338.4 528.2 342.5M513.5 334.9Q522.2 337.4 531.2 338.3M505.3 332.4Q515.4 339 524.8 346.5M508.4 333.3Q516.7 335.9 525.5 335.9M511 334.1Q518.7 337.1 525 342.7M510.3 333.9Q520.8 338.2 532.1 337.7M509.5 333.6Q518.9 337.7 527.4 343.4M511.5 334.3Q521.3 336.4 529.6 342.1M525.7 552.1Q531 546.9 535.8 541.3M531.1 548.7Q537.1 545.5 541.4 540M523.6 553.3Q533.7 547.3 545.1 544.5M525.2 552.4Q533.9 546 544.1 543M524.2 553Q530.3 546.2 534.3 538M522.9 553.8Q530.8 547.6 535.7 538.8M527.2 551.2Q533.2 544.8 538.5 537.7M529.2 549.9Q539.3 547.6 549.6 546.4M523.3 553.6Q531.9 543.5 538 531.7M530.7 549Q536.1 545.5 540.2 540.5M526.5 551.6Q533.7 546.9 542.2 545.2M530.8 548.9Q537.2 544.6 541.8 538.5M531.6 548.4Q537.5 544.2 542.5 538.9M622.6 525.4Q614.2 526.7 605.9 525M619.2 526.8Q611.6 528.2 604 528.6M623.1 525.2Q614.7 533 607.9 542.2M616.7 527.8Q610.4 531.1 603.4 531.8M617.2 527.6Q609 531.8 599.8 532.4M620.8 526.1Q612.4 529.3 603.8 531.8M617.9 527.3Q608.4 529.1 598.8 528.7M622.4 525.5Q616.3 530.3 611.2 536.1M617.2 527.6Q609.8 529.9 603.6 534.4M623.4 525.1Q611.8 528.7 599.9 526.8M623.3 525.1Q614 530.7 607.2 539.2M493.1 303.5Q495.6 314.7 502.2 324.1M496 312.7Q497.3 318.7 496.9 324.9M493.5 304.9Q500 312.6 508.7 317.6M493.2 304Q499 311.7 506.6 317.6M494.2 307.2Q498.3 317.6 497.9 328.8M493.9 306.1Q497.3 318.7 495.4 331.6M492.9 302.9Q500.1 310.7 509.5 315.7M636.4 296Q623.5 293.6 611.5 288.3M634.8 296.2Q625.2 295.7 616.3 299.3M627.2 296.9Q619.8 298.7 612.6 301.3M627 296.9Q616.7 297.5 607.1 293.8M639.4 295.7Q626.6 291.3 614.9 284.5M628.6 296.7Q618.4 298.1 609.2 302.8M630.9 296.5Q622.2 296.7 614.4 300.5M627 296.9Q619.7 296.7 612.7 294.4M636.8 296Q624.4 293.5 613 287.9M632.8 296.4Q624.5 297.2 617.1 301.1M634.1 296.2Q621.5 294.8 610.1 289M649.5 430.5Q638.5 431.8 627.7 434.4M651.3 431.2Q642.2 422.6 638 410.9M645.8 429.1Q639.4 424.9 633.3 420.2M649.8 430.7Q642.1 429.1 634.3 429.7M651.6 431.4Q643.1 422.7 638 411.8M652 431.5Q640.5 430.9 630 435.3M650.7 431Q644.2 422.2 639.7 412.1M653.1 432Q640.4 428.1 627 427.8M652.4 431.7Q644.4 426.3 639.1 418.3M650.2 430.8Q641.6 429.6 632.9 429.8M650.3 430.9Q637.9 428 625.2 429.7M650.1 430.8Q642.6 427.1 636.2 421.6M650.5 431Q640.3 431.4 630.5 434.3M653.6 432.2Q646.1 425.4 639.7 417.5M643 428Q637.5 426 632.8 422.4M632.6 474Q624 474.7 615.6 476.8M631.3 474.1Q622.3 476.7 614.6 482.1M631.3 474.1Q621.1 474.1 610.9 473.2M637.6 473.7Q626.1 478.1 617.7 487.2M631.3 474.1Q622.4 473 613.9 470.2M628 474.3Q620.9 475.5 614.1 478.1M628.8 474.3Q621.2 476.4 614 479.9M639.2 473.6Q629.9 469.6 621.3 464.5M508.7 380.9Q519.4 385.4 529.1 391.9M511.6 381.9Q523.4 386.2 535.8 387.5M506.5 380.1Q518.1 382.9 528 389.8M508.5 380.8Q517.5 382.3 526.6 381.6M499.5 377.7Q514.6 377 528.5 370.9M511.4 381.8Q520.2 386.3 527.6 392.7M507.8 380.6Q516.8 383.6 523.8 390.1M505.2 379.7Q512.7 385.9 519 393.3M502.7 378.8Q516.9 377.6 530.9 374.8M501.2 378.3Q510.2 385.2 515.4 395.1M505 379.6Q516.5 384.3 528.9 384.4M656.8 264.3Q646.7 266 636.6 265.4M659.6 262.2Q650.3 267.1 639.8 267.9M658.1 263.3Q652.1 270.8 648.3 279.6M651.4 268.2Q643.4 275 633.5 278.3M653.7 266.4Q645.1 272 635.7 276.3M654.4 266Q649.4 274.3 645.3 283.1M651.1 268.3Q642.4 273.4 632.4 274.9M659.3 262.5Q646.4 265.9 633.4 263.9M658.4 263.1Q648.8 272 640.3 282M659.1 262.6Q646.9 268.3 633.4 269.8M661.8 260.6Q656.2 274.7 657 289.9M492.9 498.8Q504.8 507.5 518.4 512.9M501 504.6Q509.4 509.8 515.8 517.3M494.9 500.2Q507.5 504.3 520.5 506.8M500.3 504.1Q509.6 509.9 519.5 514.3M500.9 504.5Q512 510.8 520.5 520.2M492.1 498.2Q503.7 501 515.6 499.3M490.7 497.2Q506.1 506.2 516.6 520.6M498.8 503Q508.5 507.5 519 508.1M502 505.3Q512.3 510.6 523.3 514M493.1 498.9Q500.6 511.6 504.3 525.9M498.3 502.7Q507.7 509.5 515.2 518.3M504.3 370.6Q515.3 371.9 525.9 369M514.9 373.8Q526.5 376.8 538.5 377.2M507.1 371.5Q516.4 377.4 524 385.4M515.4 374Q523.1 376.2 531.1 377.2M513.1 373.3Q523.6 379.1 532.9 386.6M503.4 370.4Q517.5 372.1 531.7 371.2M506.4 371.3Q518.6 377.7 529.5 386M509.2 372.1Q518 375.6 527.4 376M513.2 373.3Q523.5 378.2 531.1 386.7M505 370.8Q515.8 375.5 524.7 383.2M507.3 371.5Q521.5 370.1 535.4 366.5M503.7 370.4Q513.3 378.6 521 388.7M511.1 372.7Q520 374.2 529.1 374.6M515.1 373.9Q525 375.7 533.5 381.3M510.4 372.5Q522.8 377.3 533.1 385.8M506.9 371.4Q521.9 375.3 535 383.5M533.2 533.6Q544 531.5 553.6 526.2M525.9 535.8Q535.5 531.6 542.6 523.8M524.9 536.1Q539.8 535.7 553.5 541.8M529.9 534.6Q537.1 530.8 542.2 524.4M528.3 535Q541.1 531.6 552.3 524.5M522.4 536.8Q532 537.8 541.5 539.6M522.8 536.7Q532.1 529.1 540.6 520.5M522.4 536.8Q538 536.2 553.1 540M527.9 535.2Q539.7 533.1 551.6 532.1M528.1 535.1Q540.4 530.7 549.5 521.4M526.8 535.5Q537.4 531.7 548.6 531.7M531.8 534Q542.8 531.6 554.1 531.4M482.5 559Q494.3 563.7 507 563.8M482.6 559.1Q495 561.5 507.1 558.2M490.1 564.7Q497.7 567.7 505.6 569.6M486.9 562.3Q493.5 570.5 496.6 580.5M484.4 560.4Q492.7 565.5 498.1 573.6M490.7 565.2Q498 567.7 505.7 568.9M481.6 558.4Q494.2 566.8 503.8 578.5M484.2 560.3Q488.9 573.4 490.6 587.3M629.2 256.2Q616.3 249.3 601.7 248.4M627.6 254.9Q620.6 247.8 615.1 239.4M629.6 256.5Q621.9 247.5 615.2 237.7M632 258.4Q624.6 243.7 621.4 227.6M620.4 249.2Q610.7 244.5 600.7 240.7M628.7 255.8Q622.5 247.2 619.8 237M621.5 250.1Q613.3 244 607.9 235.3M625.8 253.5Q614.8 247.7 603.1 243.7M622.6 251Q615.8 246.7 611.6 239.8M631 257.6Q623.3 249.3 620 238.5M631.2 257.7Q619.5 247.2 605.2 240.8M621.1 249.8Q612.5 242.7 605 234.4M635.9 230.4Q628.3 227.5 620.1 227.4M640.2 234.4Q629.6 224 622.7 210.7M639.9 234.1Q631.2 224 627.8 211M641.1 235.3Q635.1 221.9 634.1 207.2M639.3 233.6Q632 226 621.9 222.5M639.1 233.4Q625.3 230.3 611.2 229.9M638.8 233.1Q630.9 229.1 622.6 226.1M525.4 513.5Q531.1 519 534.3 526.3M527.2 515.1Q533.2 521.9 541.4 525.5M527.9 515.8Q534 521.4 539.5 527.7M523.9 512.1Q533.1 519.2 544.4 521.8M522.3 510.6Q528 516.8 530.7 524.8M523.3 511.5Q532.8 516.4 543.4 518.3M527.5 515.4Q532.6 519.7 535.4 525.7M522.8 511.1Q531.1 520 542 525.5M646 308.6Q634.5 311.8 622.7 313.2M647.8 307.8Q637.2 310.4 626.5 307.9M644.6 309.1Q636.6 315.8 629.4 323.4M648.8 307.4Q637.2 315 627.5 325M641.5 310.4Q634 314 625.9 315.4M639.7 311.1Q628.3 316.8 620.6 327M641.2 310.5Q629 314.5 616.1 313.7M643.4 309.6Q634.2 314.4 627.2 322M475.2 374.1Q487.6 379 500.3 382.6M479.7 381.3Q484.9 391.8 487.2 403.2M479.5 381.1Q483.5 388.1 485 396.1M474.7 373.3Q476 385.9 471.9 397.8M477 377Q479.7 385.7 481.1 394.6M480 381.9Q484.7 388.4 491.6 392.5M478.4 379.4Q479.3 390 478.1 400.7M474.9 373.7Q486.8 381.7 500.7 384.8M476.6 376.4Q487.5 385 499.1 392.6M479.6 381.3Q484.6 389 486.9 397.9M475.3 374.3Q484.4 384.5 495.2 392.9M474.9 373.6Q474.6 388.5 471.2 403M497.1 256.1Q507.3 244 515.4 230.4M509.9 248.5Q520.2 244.5 531.2 243.6M502.8 252.7Q511.7 244.3 517.6 233.7M504.8 251.5Q515.6 247.6 527.1 246.1M502.7 252.8Q512.1 245 519.7 235.5M509.1 249Q518.8 242.7 529.8 239.4M505.9 250.9Q513.1 245.6 519 238.8M507.9 249.7Q519.6 243.4 529.2 234.1M504.9 251.5Q514.6 246.8 521.1 238.2M509.1 248.9Q520.1 242.5 532.2 238.6M499.6 254.6Q510.6 248.3 522.7 244.4M496.2 256.7Q506.6 245.3 515.2 232.6M662.1 187.3Q659.3 202.2 660.5 217.3M664.1 181.5Q654.1 193.5 640 200.1M659.3 195.5Q657 203.6 656 211.9M660.9 190.8Q659.8 203.3 661.3 215.8M659.3 195.4Q656.7 205.5 650.1 213.6M664.2 181.1Q667 199.1 673 216.3M660.4 192.2Q658.4 200.9 659.2 209.7M662.5 186Q655.6 197.1 647.3 207.2M662.3 186.7Q661 200.2 664.8 213.1M662.2 186.8Q658.6 202.3 650 215.7M643.4 417.2Q631.6 420.3 619.5 422.3M647.7 415.7Q640 423.2 634.8 432.5M635.8 419.9Q628.7 421.2 621.6 419.9M646.3 416.2Q634.4 424.9 623.3 434.5M641.2 418Q630.9 417.6 620.9 415.5M635 420.2Q627.9 424.2 621.5 429.5M641 418.1Q628.5 418.4 616.8 414M647.2 415.9Q633.7 420.4 619.5 419.5M643.6 417.2Q637.1 423.8 631.8 431.4M662.4 378.2Q652.7 374.5 643.9 369M661 378.2Q646.9 378.1 633.3 382.1M659.6 378.2Q647.8 380.5 638.2 387.6M658.8 378.3Q649.5 376.8 640.7 373.3M653.5 378.4Q643.7 377.3 634.4 380.5M663.3 378.1Q651.8 377.5 641.6 372M666.3 378.1Q655.6 377.4 646.4 372M664.4 378.1Q650.8 374.6 638.3 368.2M656.9 378.3Q646.6 377.2 637.6 372M480.5 218.8Q481.2 205.6 480.4 192.4M480.5 218.8Q485.2 206.9 491.7 195.8M477.7 226.7Q485.8 215.3 495.7 205.3M478.5 224.2Q488.8 216.3 500.7 211.2M483.3 211Q485.6 203 485.1 194.6M480.8 217.8Q488.2 205.4 496.9 193.9M480.9 217.6Q484.3 208.3 491.6 201.5M480.9 217.6Q489.7 208 500.1 200.3M478.3 225Q482.2 214.4 482.7 203.1M480.1 219.8Q486.6 210.8 494.4 202.9M479.8 220.8Q481.9 204.6 479.8 188.4M477.8 226.3Q486.6 211.1 499.4 199M481 217.3Q483.2 205.4 480.5 193.7M491 541.2Q497.7 533.9 503.3 525.7M490.9 541.2Q503.2 539.5 515.4 541.1M496.2 539.6Q503.2 533.4 509.5 526.5M498.8 538.8Q509.8 533.2 520.2 526.6M489.9 541.5Q503.8 539.7 517 544.3M488.8 541.8Q500.3 538.4 510.4 532M499.8 538.5Q510.2 534.9 521.3 535.3M491.4 541Q505.1 535.4 517.6 527.7M493.6 540.4Q507.6 536.4 519.7 528.4M657.1 293.3Q652.7 303.8 644.3 311.4M656.3 295Q654.6 305.1 655.2 315.3M660.8 285.8Q652.1 293.8 640.7 297.1M659.6 288.3Q653.8 299.3 643.9 306.9M656.4 294.8Q654.9 301.9 654.8 309.1M660.7 285.9Q660 297.3 663.7 308M657 293.5Q655.7 300.5 655.3 307.7M660.4 286.7Q652.3 294.3 643 300.1M656.5 294.5Q651 302.3 649.7 311.8M660 287.5Q655.4 298.1 655.3 309.6M655.8 296Q652.5 302.6 650.7 309.7M655.3 297Q649.4 304.6 641 309.2M659.6 343Q651.7 350 647.7 359.8M649.5 350.5Q641.8 355 633.7 358.8M658.9 343.6Q648.1 350.9 635.9 355.2M656.9 345Q645.9 353.9 638.5 365.9M655.6 346Q648.6 350.7 640.7 353.5M660 342.7Q648.4 351.4 639.6 362.8M650.9 349.4Q644 354.5 636.2 358.1M659.1 343.4Q649.3 354.3 644.2 368.1M651.3 349.2Q643.6 355.7 638.7 364.4M650.8 349.5Q643.4 354.6 634.6 356.8M649 350.9Q643.3 354.4 638.7 359.3M654.1 347.1Q644.3 352.6 633.8 356.9M649.9 350.2Q644 354.5 640 360.6M639.6 272.6Q630.4 269.5 621 267.2M640.5 273.1Q629.1 266.5 620.1 256.9M637.6 271.5Q628.5 267.8 618.5 267.6M640.4 273Q632.7 267.9 623.9 265.4M638.3 271.9Q628.8 270.6 619.5 272.4M637.6 271.5Q629.6 263.4 623.4 253.8M640.3 272.9Q630.4 272.3 620.8 274.8M486.8 340Q496.1 331.3 502.2 320.1M487.6 339.5Q493.7 332.4 498.9 324.4M483.9 342.1Q493.3 335.7 501.3 327.7M483.3 342.5Q495.6 336.7 508.8 333.8M483.9 342.1Q491.8 332.4 497.3 321.3M638.8 240.7Q628.7 244.9 617.9 246.7M647 237.7Q633.7 239.2 620.8 236.4M645.6 238.2Q636.2 247.6 631.1 259.8M648.9 237Q637.9 248.8 632 263.8M646.5 237.9Q631.6 236.9 618.6 229.4M636.2 241.7Q627.9 244 620.7 248.6M643.7 238.9Q629.2 243.4 614.3 246.3M480.5 545.6Q488.3 537 494.6 527.3M483.8 543.1Q494.1 534.7 505.7 528.3M485.2 542Q492.4 534.1 495.4 523.8M475.4 549.6Q487.2 542.7 500.8 541.6M487.1 540.5Q497.6 534.3 509.6 532.6M479.1 546.7Q490 537 498.5 525.1M481.9 544.5Q488.3 536.6 493.4 527.8M504.2 204.1Q517.6 208.1 531.5 206M507.5 205.9Q515.2 213.6 522 222.3M505.2 204.6Q516.9 209.3 529.4 211M508.3 206.3Q517.8 210.6 524.8 218.3M504 204Q512.4 207.5 521.6 207.9M509.4 206.9Q516.6 213.9 522.5 221.9M510.5 207.5Q516.9 213.4 522.2 220.4M503 203.4Q515.6 204.8 528.2 204.6M501.7 202.7Q513.8 206.3 526.4 204.5M505.3 204.7Q516.2 211.4 523.8 221.7M499.7 201.7Q511.9 203.1 523.6 199.3M500.8 202.3Q511.4 211.1 520.1 221.9M499 201.3Q512 206.5 525.9 205.8M500.8 165Q512.6 168.4 525 168.3M505.3 166.7Q514.2 170.6 521.9 176.4M500.2 164.7Q509.5 167.9 519.2 169.3M508.8 168Q518 169.9 525.5 175.5M503.7 166.1Q511.6 170.3 520.6 170.6M507.6 167.6Q516.2 171.4 525.5 173M507.7 167.6Q516.1 172.8 524.1 178.7M506.6 167.2Q513.6 171.1 521.5 172.1M503.3 165.9Q509.9 170.6 515.6 176.4M506.6 167.2Q515.4 170.8 524.8 172.1M501.4 165.2Q509.5 168.3 518.1 169.4M497.3 163.6Q505.6 168.6 512.9 174.9M498.6 164.2Q506.8 167.5 514.5 171.9M612.8 220.8Q602.3 216.9 593.6 209.7M617 220.9Q603.3 220.2 589.9 223.5M618.3 221Q602.2 218.9 586.6 214.4M606.1 220.6Q598.5 222 591.6 225.6M610 220.7Q601.1 220.7 592.9 217.3M615.6 220.9Q603.3 221.9 591.5 225.2M609.4 220.7Q596.5 222.4 584 226.2M615.6 220.9Q605.3 220.2 595.6 223.7M616.5 220.9Q602.4 219.3 588.6 216.3M605.7 220.6Q597 220.6 588.6 222.8M608.7 220.7Q597.6 218.5 587.7 213.2M604.7 220.6Q596.6 221 588.7 223.3M659.3 514.4Q648.4 508.1 636.8 503.3M659.8 515.2Q658.1 501.4 659.1 487.5M660.5 516.5Q655.2 503.3 654.2 489M661.7 518.5Q649.3 504.7 633.9 494.3M653.6 504.9Q645.3 496.9 636.3 489.7M661 517.3Q652.1 505.9 642.3 495.3M658.2 512.7Q653.3 502.3 650.6 491.1M655.6 508.3Q648.2 497.7 638 489.9M655.7 508.5Q650.2 499.2 647.1 488.8M657.3 511.2Q648.1 499.7 634.7 493.4M658.1 512.5Q652.9 501.4 652.6 489.1M655.7 508.5Q647.3 498.7 635.5 493.2M660.5 516.5Q648.8 506.7 634 503.1M657.2 511Q647.3 502.7 636.5 495.5M655.9 508.9Q649.2 496.2 646.2 482.3M648.4 439.9Q642.2 448.8 637.1 458.3M644.3 442.6Q635.8 448.5 630.2 457.2M649.9 438.9Q637 442.8 623.6 442.7M644.2 442.6Q639.3 447.8 635.3 453.6M646.5 441.2Q638.4 448.5 631.8 457.1M644.8 442.2Q635.5 449 629.9 459.1M643.4 443.2Q638 447.5 634.4 453.3M666.3 438.9Q662.9 450.3 661.1 462M664.7 440.8Q655.2 446.1 644.4 448.3M665.6 439.8Q663.2 452.3 662.2 465.1M666.9 438.3Q658.6 447.6 653.5 458.9M661.5 444.6Q657.7 451.3 656 458.9M659.9 446.4Q652.4 455 649.3 466.1M659.9 446.5Q654 454.3 645.5 459M659.1 447.4Q652.3 455.3 646.9 464.2M665.8 439.5Q656 447.4 644.3 452.1M668.2 553.6Q658 557 648.5 561.9M665.6 553.2Q653.1 555.1 641.5 559.9M657.1 551.7Q648.5 551.2 641 547M669.2 553.8Q657.9 553.2 647.5 557.7M662.5 552.6Q653.3 549 646.1 542.2M661.1 552.4Q649.3 550.1 637.4 551M667.5 553.5Q657.1 545.3 648.9 534.8M661.6 552.5Q653.9 549.7 647 545.2M659.6 552.1Q651.8 549.8 645.7 544.4M663.6 552.8Q654.9 547 648.9 538.4M659.1 552.1Q650.7 550.5 642.2 551M663 355.1Q656.7 348.6 651.9 340.9M660.9 353.6Q652.4 349.5 643 348.3M660.8 353.4Q652.3 346.6 646.5 337.4M657 350.5Q649.7 346.4 641.8 343.4M666.7 358Q660.5 348.6 655.8 338.3M658.2 351.4Q653 346.3 649.2 340.1M664.5 356.3Q652.1 347.4 638.2 341.3M662.2 354.5Q657.6 346 653.8 337M636.8 269.1Q624.7 269.5 612.8 271.9M639.8 269.6Q624.3 268.4 610.1 262.1M629.8 268.1Q621.9 267.4 614 268.2M639 269.4Q624 265.2 609.8 258.7M637.5 269.2Q625.7 270.2 614.4 273.6M640.7 269.7Q628.6 270.4 616.6 272.1M635.2 268.9Q625.8 268.9 617.2 264.8M638.3 269.3Q629.5 265.5 621.1 260.8M633.9 268.7Q622.5 269.5 611.6 272.9M642.5 269.9Q629 266.2 615.3 268.4M529.6 550.3Q535.5 553.3 540.1 558.1M520.7 547.2Q530.8 553 539.9 560.2M529.3 550.2Q535.3 552.3 541.6 552.3M527.5 549.6Q533.9 554 538.9 560.1M530.3 550.5Q536.4 552.4 542.9 552.9M530.4 550.6Q538.8 553 545.5 558.5M522.4 547.8Q530.9 555.6 537.2 565.4M521.1 547.3Q530.2 545.7 539 542.6M526 549.1Q534.5 554 542 560.1M524.3 548.5Q535.3 551.5 546.6 550.3M529.6 550.3Q536.1 552.9 541.7 557.4M522.6 547.9Q532.6 549.1 542.1 546M524.2 548.4Q533.8 551.6 543.9 551.7M508.4 266.6Q516.7 272.9 526.6 276.5M504.3 262.5Q510.1 275.4 510.8 289.6M504.2 262.4Q515 268.8 527.4 270.5M508.2 266.4Q517.8 273.9 523.8 284.7M507.9 266.1Q512.9 272.7 516.5 280.2M504.1 262.2Q512.2 270.3 522.7 274.7M506.2 264.4Q514.1 270.8 523.8 273.3M497.9 255.9Q509.8 260.1 522.4 259.9M503.3 261.5Q509.2 272.6 510 285.3M501.8 259.9Q505.8 269.9 506.1 280.6M498.7 256.7Q505.7 267.4 510.9 279.1M514 355.8Q525.8 358.3 537.8 357.2M499 354Q511.4 356 522.7 361.3M503.1 354.5Q519.8 355 534.8 362.4M506.9 355Q519.6 357.8 532.2 355M505 354.7Q520.1 354.5 535 351.6M502 475.6Q509.2 471.4 517.1 468.5M505.3 473.1Q512.4 465.5 522.1 461.9M503.4 474.5Q509.4 469.7 516.8 467.1M499.2 477.8Q505.8 471.7 509.7 463.6M503.4 474.6Q510.6 468.9 519.6 466.5M502.6 475.2Q508 469.2 511.5 461.9M485.8 188.3Q493.6 189.3 501.3 189.3M483.9 188Q493.9 189.4 503.2 193.5M475.8 187Q487.9 193.6 498.6 202.3M479 187.4Q487.5 187.5 495.9 186.8M475.4 186.9Q486.9 190.5 497.7 195.8M477.8 187.2Q486.4 186.2 494.8 184.1M477.3 187.2Q487.6 187.4 497 183M475.3 186.9Q484.3 191.6 490.9 199.3M486.4 188.4Q496.1 189.3 505.4 186.4M485.3 188.2Q493.8 187.7 501.3 183.6M483.3 188Q491.5 189.9 499.2 193.4M485.3 188.2Q491.6 190.8 496.8 195.1M492.8 570.4Q503.2 571.2 513.3 574.2M493.7 570.4Q507.1 572.1 520.3 569.3M482.6 570.2Q494.8 576 506.5 582.8M481.3 570.2Q494.5 565.5 506.7 558.6M480 570.2Q493.3 578.3 501.9 591.3M485.9 570.3Q498.9 563.9 511.1 556.1M481 570.2Q499.2 568.4 516.8 573.6M479.8 570.2Q491 578.1 500.9 587.6M491.3 570.4Q503.8 571.4 516.3 569.4M479.9 570.2Q495.1 577.6 508.7 587.7M493.5 570.4Q501.6 567.1 509.3 562.9M493 570.4Q501.7 569.6 509.3 565.3M483.4 570.2Q497 575 509 582.7M489.8 570.3Q503.9 573.8 517 580.1M480.5 570.2Q493.9 568.4 505.8 562.1M481.7 570.2Q496.9 574.1 511.4 580.1M630 568.2Q623.2 567.1 616.4 568.8M626.3 567.7Q619.5 566.7 612.9 564.8M627.9 567.9Q618.1 566.3 608.9 562.8M635.7 568.9Q626.4 569 617.3 571.1M629.6 568.1Q622.9 564.4 616.6 560.1M627.7 567.9Q619.7 565.8 612.8 561.4M625.8 567.6Q619.9 566 613.7 566.7M625 567.5Q619.4 566.3 613.8 567.2M625.1 567.5Q616.4 567.4 608 569.9M506.4 327.2Q516.7 324.4 526.4 319.7M497.2 327.8Q508.5 328.6 519.6 331.5M503.9 327.4Q512 325.6 518.5 320.6M494.5 328Q505.5 329.4 515.4 334.4M505 327.3Q515.9 324.6 525.3 318.3M500 327.6Q510.6 326.8 520.9 329.3M503.1 327.4Q511.7 327.2 520 324.8M496.7 327.8Q506.8 330.5 516.1 335.2M495.5 327.9Q506.5 321.6 516.9 314.3M500.7 327.6Q510.8 326.6 520.7 328.5M506.3 327.2Q517 325.8 527.3 322.4M503.7 327.4Q515.8 326.5 527.5 323.3M504.4 327.3Q513.3 324.8 521.6 320.8M505.2 327.3Q515.4 329 525.3 331.8M618.4 205.2Q609.8 212.3 602.8 221M608.9 211.7Q601.1 216.8 592 218.6M612.4 209.2Q603.4 214.5 597.7 223.3M610.8 210.4Q603.1 216 594.2 219.4M613.5 208.5Q606.2 214.6 600.3 222.1M616.6 206.4Q609.5 213.4 605.9 222.6M609 211.6Q604.5 215.8 598.7 217.6M611.1 210.2Q604.2 213.4 599.3 219.2M612.9 208.9Q607.2 213.4 601.9 218.3M609.8 211.1Q601.5 216.3 592.4 219.7M616.8 206.2Q608.4 212.4 603.6 221.7M489.8 507.9Q499 510.2 508.5 509.3M488.1 507.1Q496 515.1 502.3 524.4M486.6 506.5Q495.2 511.4 501 519.3M488.7 507.4Q494.6 512.4 499.6 518.4M478.4 502.7Q491.5 507.6 505.5 506M480.8 503.8Q493.2 509 506.4 511.3M489.1 507.6Q500.1 510.8 508.4 518.6M649.9 416.5Q644 422.9 636 426.3M651.6 414.1Q649.5 421.5 650.7 429.2M651.2 414.6Q645.9 421.7 639.9 428.2M648.7 418.3Q643.9 424.4 641.3 431.6M653.3 411.7Q648.4 418.9 647.2 427.5M650.9 415.1Q643.6 423.1 634.4 429M648.9 417.9Q645 423.5 642.8 430.1M653.8 410.9Q649.8 419.5 649.3 428.9M649.2 417.5Q646.1 423.7 644.9 430.6M649 417.7Q642 423.2 633.7 426.5M649.9 416.5Q646.3 422.7 645.7 430M656 407.8Q648.8 413.7 640.3 417.6M652.6 412.8Q647.5 423.6 645.3 435.4M662.4 479.7Q661 471.3 656 464.4M664.2 484.5Q661.2 477.4 656.9 471M663.5 482.7Q660.2 472.8 660.5 462.4M663.2 481.7Q660.9 471.5 654.4 463.3M663.3 482.1Q659.4 472 658.3 461.3M662.1 478.8Q660.5 472.8 656.6 468M665.9 489.2Q664.3 475.7 667.1 462.4M663.6 483Q659.5 472.5 660.1 461.2M665.8 488.8Q657.4 478.4 647.2 469.7M664.7 485.8Q659.5 475.2 650.7 467.3M663 481.3Q660 471.8 654.8 463.4M665.1 487Q659.9 479.4 651.9 474.7M633.4 460.4Q624.6 465.5 619.2 474M635.3 459.1Q628.2 463.8 623.5 470.9M637.7 457.5Q629.6 462.6 620.2 464.1M637.2 457.7Q631.3 463.4 628 470.8M644 453.1Q631.2 461.8 617 467.9M633.9 460Q626.6 465.6 619.9 471.8M634.8 459.4Q625.1 464.5 614.8 468.2M635.5 458.9Q630.2 464.3 626 470.6M635.2 459.2Q625.9 464.5 615.6 467.3M642 454.5Q630.8 459.8 618.9 463.5M641.3 455Q633.4 463 626.4 471.7M641.8 454.6Q629.8 460.2 616.9 462.8M638.4 457Q629.8 460.7 620.4 460.9M635.3 459.1Q627.2 464.6 619.9 471.2M634.9 459.3Q626.3 464.5 616.8 467.9M645 452.5Q635.5 460.7 629 471.5M524.1 251.3Q533 254.6 542.3 256.9M522.5 249.8Q530.4 254.9 539.7 256.1M525.4 252.5Q535 259.3 546.4 262.4M520.5 248Q531.6 259.5 538.7 273.8M523.7 251Q530.8 257.7 536.3 265.8M527.1 254.2Q537.6 260.3 548.7 265.2M521.6 249Q533.3 258.3 541.5 270.8M529.4 256.3Q535.9 261.2 543.7 263.2M519.2 246.8Q525.6 257.5 528.9 269.4M520.2 247.7Q529.9 258 542.8 263.8M529.1 256Q537 264.3 547.6 268.8M628.9 293.6Q624.2 296.8 618.9 299.3M634.6 289.9Q626.1 294.3 620.2 301.9M635.3 289.4Q626.1 294.4 616.2 297.9M638 287.7Q630.4 296.1 624.7 305.9M634.4 290Q629.3 294.3 625.3 299.7M633.3 290.7Q629.3 296.3 626 302.3M639.7 358.6Q627.5 359 615.6 362M639.4 358.6Q630.1 356.1 621.2 352.8M645 359.9Q631.4 363.1 619.3 370M634.3 357.4Q624.8 354.7 614.9 354.1M642.8 359.4Q634.8 356.6 627.2 353M640.2 358.7Q629.6 353.3 621.6 344.6M637.3 358.1Q630 356.2 622.5 357.4M638.4 358.3Q630.1 357 622.9 352.7M642.6 359.3Q629.7 356.5 618.5 349.6M637.5 358.1Q628.8 355.6 619.9 356.4M633.5 357.2Q624.3 353.2 616.1 347.4M635.8 357.7Q626.3 355.9 616.7 356.8M640.2 358.8Q630 355.2 621.6 348.4M518.7 485.3Q526.2 487.1 533.8 485.4M518.3 485.2Q523.9 487.5 529.2 490.4M518.3 485.2Q525.8 486 533.2 485.2M516.2 484.6Q523.8 486.8 531.2 489.7M511.7 483.4Q522.2 485.8 532.7 483.7M515.7 484.5Q525.3 485.1 534.9 484.3M514.8 484.3Q522.7 486.4 530.8 486.8M509.6 482.8Q518.8 486.4 526.5 492.4M507.9 482.4Q516.4 484.3 525.2 483.8M509.9 482.9Q521 483.5 532 481.4M495.2 217.5Q502.2 212.6 506.1 205.1M489.2 221.8Q498.8 217.1 509.4 216.1M489.2 221.8Q494 215.1 498.1 208M494.9 217.7Q502.8 212.9 512 212.2M492 219.8Q499.1 216.4 503.9 210.2M494 218.3Q501.7 211.3 511.4 207.2M488.3 222.4Q493.4 213.3 494.9 203M489 222Q497.3 219.2 506.1 219.9M489.1 221.8Q494.6 214.3 498 205.7M494.6 217.9Q501 212.7 508.8 210M493.9 218.4Q501.3 213.4 506.6 206.1M488.6 222.2Q499 219.8 509.7 220.4M484.7 225Q489.4 215.3 491.4 204.6M486.4 223.8Q496 222.6 505.4 224.9M494.7 265.8Q505.5 259.8 517.5 257.4M500.2 259.8Q504.4 250.1 506.7 239.7M497.1 263.2Q506.7 257.1 517.2 252.7M501 259Q511.7 250.7 523.7 244.3M499.2 260.9Q511.2 253.4 524.3 248.3M501.5 258.5Q507.8 251.7 513 244M501.5 258.5Q508 251.5 515.4 245.5M498.7 261.5Q509.9 253 522.3 246.4M499.7 260.4Q508.2 248.6 513.9 235.2M503.9 255.8Q514 248.8 525.4 244.5M502.5 257.4Q510.1 250.2 513.8 240.4M496.5 263.9Q506.1 259.2 516.6 256.8M496.5 263.9Q506.8 254.5 513.6 242.4M654.9 407.3Q650.6 400.8 649.2 393.1M655.5 408.6Q652.1 400.8 647.4 393.6M656.2 410.1Q653.3 402.7 653 394.8M659.2 416.4Q654.9 408 648.1 401.6M656.6 411Q651.9 402.9 645.6 396M655.6 408.8Q653 400.6 651.3 392.2M659.1 416.4Q652.4 408.4 644 402.2M659.2 416.5Q658.3 404.5 659.8 392.6M655.9 409.5Q649.4 400.8 640.4 394.8M655.8 409.2Q648.6 401.3 640.1 394.8M658.9 415.9Q657 406.9 658.1 397.8M638 371Q631.8 365.6 624 362.9M647.7 378.3Q636 375.4 623.9 374.1M640.9 373.2Q633.3 368.8 625.2 365.6M643.5 375.1Q633.1 371 621.9 371.4M638.5 371.3Q630.3 366.6 621.3 363.6M490.5 453.5Q497.4 448.4 502.8 441.8M491.3 453Q503.6 453 515.8 454.7M490.2 453.8Q502.9 454.3 515.3 456.8M490.5 453.5Q497 447 500.2 438.4M496.2 449.1Q501.9 445.1 505.3 439M492.1 452.3Q500.5 450.9 509 451.1M491.1 453Q501.8 449.2 513.1 447.7M523 197.2Q533.4 196.8 543.7 197.6M528.1 196.3Q537.3 193.1 546 188.5M515.7 198.5Q532.2 200.9 546.9 208.6M516.7 198.3Q527.8 194.2 536.1 185.7M517.4 198.2Q527 198.7 536.3 201.3M527.8 196.3Q535.2 196.1 542.4 197.6M523.1 197.2Q531.4 193 538.7 187.4M529.6 196Q537.6 193.8 545.2 190.2M529.5 196.1Q537.2 195.7 544.9 196.3M521.8 197.4Q533.9 193.5 544.8 186.9M527.5 196.4Q537 194.9 546.1 191.7M520.6 197.6Q534.8 194.7 549.1 196.9M514.7 174.8Q522.8 169 531.9 164.8M513.5 175.6Q520.7 168.7 526.6 160.7M512.7 176.1Q520.6 172.5 529.1 170.8M516.5 173.5Q521.3 169.5 525.6 165M511 177.2Q518.9 171.2 528.2 167.5M507.6 179.6Q517 172.7 525.8 165.1M513.2 175.7Q523.4 171.5 534.4 169.7M507.9 179.3Q514.9 173.6 519.3 165.7M506.4 180.3Q519.6 175.5 533.6 175.7M515.3 174.3Q521.6 170.6 526.1 164.8M507.1 179.8Q516 170.5 522.6 159.4M480.3 169.2Q483.4 154.2 481.2 139M486.6 161.1Q489.7 153.2 490 144.7M486.7 161Q495.5 153.3 506.3 149.1M485.5 162.5Q491.3 152.6 493.6 141.3M483.4 165.2Q490.3 157.5 497.9 150.4M485.5 162.5Q492.7 152.2 496 140.1M480.4 169.1Q492.9 162.1 506.5 157.8M482.2 166.8Q490.9 158.6 502.1 154.1M486.6 161.2Q490.8 153.3 493.2 144.7M482.1 166.9Q487.6 158.7 495.5 152.9M487.8 159.7Q491.7 152.8 494.8 145.5M482.8 165.9Q492.4 158.2 504 154.2M483.8 164.7Q493.2 153.8 505.3 146M517.5 200.5Q524.5 199.1 531.4 200.8M520.3 199.4Q528.6 195.9 535.5 190.2M517 200.7Q526.2 195.4 532.3 186.7M518.8 200Q528.3 196 538.3 193.7M521.3 199Q528.5 196.7 536.1 196.2M522 198.7Q530.7 195.7 539.9 194.4M518.2 200.3Q525.7 194.5 532.6 187.8M485.8 306.9Q494.8 307.6 503.8 307.1M474.4 303.1Q488.6 299.4 502 293.6M486.6 307.2Q495.6 311.5 502.3 318.7M486.3 307.1Q495.9 309.6 505.6 307.7M478.4 304.4Q490.4 308.8 499.8 317.4M475 303.3Q490.5 300.8 505.7 297M486.2 307Q494.6 309.4 503.3 309.6M481.2 305.4Q490.6 314.9 499.2 325.1M484.6 306.5Q493.8 308.5 503.2 308.3M474.6 303.2Q489 300.1 502.7 294.8M481 305.3Q489.3 311.6 496.9 318.7M481.1 305.3Q490.2 308.1 499.7 307.6M479.4 304.8Q489.5 307.1 499.6 304.8M474.4 303.1Q489.9 306.4 505.7 305.9M474.7 303.2Q487.1 304.1 499.6 303.2M491.9 398.7Q498.7 407.1 508.4 411.8M488.3 388Q496.3 397.4 507.5 402.5M493.8 404.1Q496.6 413.4 498.4 423M488.8 389.5Q494 401.1 500.8 411.9M489.2 390.8Q493.4 401.6 499.6 411.4M489.2 390.8Q493 403.4 500.4 414.4M489.8 392.4Q488.9 408.3 481.3 422.3M491.4 397.2Q500.3 409.4 511.6 419.4M491 396Q489.6 410.6 485.4 424.6M491.1 396.3Q497.8 407.7 507.3 417M525.4 530.5Q530.3 538 534.5 546M529.9 534.4Q536 539.1 542.7 542.7M528.6 533.3Q536.4 540.7 542.4 549.7M525.5 530.6Q535.5 534.8 546.3 534.1M530.5 534.9Q534.6 540.4 536.6 547M530.6 535Q537 539.4 544.3 542M525.1 530.3Q536.2 534.6 547.9 536.5M528.9 533.6Q536.3 540.4 545.6 544.4M662.9 186.4Q648.5 185.9 635.5 180M652.7 190.3Q643.8 193.3 634.4 193M654.3 189.7Q643.6 193 635 200.1M650.6 191.2Q644.4 194.3 640 199.6M652.1 190.6Q643.1 197.7 636.8 207.4M662.1 186.7Q647.3 185.1 633.2 180.2M658.3 188.2Q651 195.7 646.2 205M661.5 187Q650.7 191 639.2 192.3M662.2 186.7Q648 192.6 632.7 193.2M649.8 191.5Q640 194.1 632.1 200.3M653.7 190Q641.5 191.1 629.3 191.1M652 190.6Q642.9 197.6 634.6 205.3M477 385.3Q485.7 384.9 494.3 383.9M482.3 388.9Q490.3 394.5 495.7 402.6M480 387.3Q487.8 393.9 497.5 397.1M478.6 386.3Q487.9 393.5 496.2 401.8M483.7 389.8Q489.2 393.5 495.3 396.1M473.6 383Q480.3 393.6 483.8 405.8M481.5 388.3Q489.2 393.9 497.8 397.8M475.7 384.4Q482.3 396.5 482.9 410.3M481.5 388.3Q489.3 392.2 497.9 393.9M482.2 388.8Q486.5 393.7 489.9 399.1M484 390Q490.9 395.9 496.7 402.7M480.7 387.8Q485 393.3 488.6 399.2M476.3 516.6Q493.4 520.6 510.9 521M486.9 524.4Q495.2 533.9 501.7 544.6M483.8 522.1Q495.3 531.3 508.3 538.3M485.8 523.6Q493 529.4 496.7 537.8M485.4 523.3Q494.5 531.1 502.8 539.9M481.2 520.2Q488.8 533.3 492.4 548M476.5 516.7Q486.5 524.5 498.7 527.8M484.6 522.7Q491.2 530.3 493.7 540M478.6 518.3Q490.7 519.1 502.7 518.9M483.1 521.6Q492.8 526.9 503.8 527.6M482.9 521.5Q496 525.3 509.4 527.8M484.6 522.7Q493.3 524.8 502.2 525.1M484.9 522.9Q494.1 531.7 499 543.4M639.8 201.8Q632.7 208.5 629.1 217.5M643.3 197.3Q638.2 205.6 637.3 215.3M641.3 199.9Q634 205.2 626.1 209.5M645.6 194.3Q641.8 204.6 642.6 215.6M646.6 193.1Q639.4 200.3 635.8 209.7M645.2 194.8Q637.3 205 627.2 213M643.8 196.6Q637.9 204.5 634.2 213.6M643.6 196.8Q635.2 202.4 625.6 205.7M639.1 202.7Q634.6 209.4 632.6 217.3M636.2 194Q633.3 181.7 633.4 169.1M638.3 197.1Q627.7 189.2 614.7 186.7M639 198.1Q632.4 188.1 623.7 179.9M632.2 188.1Q626.3 176.8 626 164.1M640.4 200.1Q641 186.9 646.1 174.8M636.1 193.9Q623.6 186.9 610.3 181.6M639.9 199.4Q634.2 185.8 632.6 171.1M635.6 193.1Q625.1 185.3 613.2 180.1M633.6 190.2Q626.7 182.4 617.2 178.4M501 435Q511.6 437.8 521.3 442.7M499.7 434.8Q509.9 437.6 517.8 444.8M506.9 435.7Q514.8 438.3 522.4 441.8M503.9 435.3Q517 434.4 529.4 430M498.3 434.6Q508.6 441.3 516.6 450.6M511.7 436.3Q521.9 436.1 531.8 433.4M502.6 435.2Q511.5 439.9 518 447.6M480.1 459.3Q486.2 466.5 494.8 470.4M485.5 466.8Q490.6 473.2 492.9 481M484.8 465.9Q493.1 472.9 503.1 477.1M487.1 469.1Q489.5 477 491 485.1M483.8 464.5Q488.8 470.4 495.8 473.5M481.7 461.6Q483.8 471.9 484.9 482.2M481.4 461.1Q482.6 473.1 481.7 485.1M509.1 345.8Q518.3 342.4 528.1 343.3M508.2 346.2Q518.5 342 526 333.9M504.3 348.3Q512.7 345 521.7 345.6M505.5 347.6Q516.2 343.5 524.6 335.7M513.2 343.6Q520.4 341.6 527.8 340.7M507.5 346.6Q513.8 343.7 518.8 338.8M507 346.9Q515.1 343.2 523.7 340.6M506 347.4Q515.4 341.8 526 339.2M503.5 348.7Q510.9 342.5 517.7 335.7M508.2 346.2Q517.6 342.7 527.5 341.6M504.4 348.2Q511.7 343.1 517.6 336.3M507.7 346.5Q517.2 342.5 527.1 339.8M641.4 348.2Q635.5 352.6 630.4 358.1M653.8 344.3Q643.1 344.3 632.5 343.4M644.5 347.2Q637.5 351.4 632.7 358.1M640.9 348.3Q633.4 351.6 625.2 351.1M641.2 348.3Q634.1 348.8 627.2 347.5M643.9 347.4Q636.8 353 630.2 359.1M644.9 347.1Q634.4 347.3 624.2 344.7M646.8 346.5Q634.9 350.4 623.8 356.2M645.8 346.8Q635.7 351.8 627 358.9M644.6 347.2Q637.2 348.1 630.1 346.2M651.8 344.9Q640.4 342.4 630.2 336.7M643.6 347.5Q634.5 348.9 626.8 354M637.6 329.1Q629.6 335.4 619.9 338.6M637.2 329.4Q630.7 334.1 626.7 341M642.7 324.2Q633.7 328.4 624.2 331.3M637.7 328.9Q632.9 334.6 629.3 341.1M639.4 327.3Q634.5 333.9 630.8 341.3M641.8 325Q630.8 331 618.4 332.8M645.1 321.8Q633.4 329.2 620.4 333.6M607.3 193Q600.5 195.1 594.5 198.9M608.2 192.7Q599.6 194.8 590.8 195.6M613.8 190.4Q606.6 194.1 600.9 199.8M616.6 189.3Q605.2 196.6 595.8 206.3M619.9 188Q608.1 193.1 595.2 192.8M612.6 190.9Q605.1 193.8 597.2 195M611.1 191.5Q602.5 193.7 595.7 199.5M609.5 192.1Q602.4 193.1 595.2 193.2M619.1 188.3Q605.3 191.8 594.6 201.2M608.9 192.4Q602.4 195.4 595.3 195.4M612.5 191Q604.5 194.6 599 201.4M617.3 189Q606.6 196.1 598.2 205.7M645.5 298.6Q633.8 300.5 621.9 300.6M638.8 301.6Q629.6 307.6 621.4 314.9M651.7 295.8Q639.7 298.5 627.5 298.8M639.8 301.1Q628.4 305.6 616.7 308.8M650.6 296.3Q638 305.7 628.6 318.4M651 296.1Q640.1 301.1 631.1 309.2M640.8 300.7Q631.1 306 623.3 313.9M652.5 295.5Q637.3 303.3 627.2 317.2M651.2 296Q637.5 303.7 625.5 313.9M651.7 295.8Q634.3 299.1 616.6 299.2M639.7 301.1Q631.3 304.4 622.2 304.2M640.6 300.7Q630.6 305 620.2 308.3M643 299.7Q632.1 303.5 620.6 304.4M655.8 330.4Q654.8 340.3 656.4 350.2M657.9 325.4Q649.4 335.1 637.9 341.2M654.7 332.9Q651.9 342 653.4 351.4M658.4 324.4Q656.4 340 658 355.6M656.8 328.1Q646.3 338 635 347M660.7 319Q662.3 336.6 668.6 353.1M656.8 328Q650 334.7 642.5 340.7M657.1 327.3Q654.7 337.3 655.9 347.6M654.4 333.7Q651.8 342.7 651.8 352M654.9 332.5Q651 341 646 348.9M655.1 332.1Q647.7 341 638.7 348.2M480.1 473Q491.1 480.8 503.8 485M484.6 478.1Q490.7 487.4 495.7 497.4M479.3 472.1Q486.9 483.5 498.8 490.3M485.6 479.2Q492.1 485.7 495.2 494.4M485.5 479.1Q493.9 485.2 502.7 490.3M479.8 472.6Q488.8 477.8 498.6 481.2M482.2 475.4Q486.8 484 488.1 493.7M483.3 476.6Q488.2 485.4 490.5 495.1M478.8 471.5Q491 478 504.9 479.4M485.7 479.3Q490.9 483.8 497 486.8M481.5 474.6Q488.6 479.5 496.7 482.4M616.7 504.5Q609.5 501.9 601.9 500.2M620.4 506.7Q610.8 502.8 600.8 499.9M621.8 507.4Q612 503.5 601.7 501.1M619.2 506Q610.6 499.7 605 490.7M616.2 504.3Q609.7 500.9 602.6 499.2M619.5 506.1Q613.6 502.1 609.5 496.2M616.8 504.6Q609.8 498.8 604 491.7M620 506.4Q611.8 500.8 602 499.4M619.1 505.9Q612 501.9 605.5 496.9M619 505.8Q612.4 503.6 605.5 503.1M625 509.2Q616.2 501.4 608.2 492.7M620.2 506.5Q610.8 502.8 600.8 501.3M639.9 519.9Q626.8 513.5 612.8 509.2M638.2 518.5Q625.8 509.2 617.1 496.3M642.4 521.8Q634 514.6 623.4 511.7M642.5 521.9Q636.2 512.2 631.9 501.4M643.9 523Q636.6 512.1 632.6 499.6M653.5 536.2Q642 541.4 634.1 551.3M653.7 536.1Q646 544.3 639.8 553.7M655.9 535Q644.7 537.8 633.2 537.3M650.6 537.7Q641.7 544.3 636.2 553.9M651.8 537.1Q642 543.3 632.8 550.4M654.5 535.7Q645.4 541.8 634.7 544.3M661.3 532.2Q652.3 539.4 647.1 549.6M649.3 538.4Q641.7 542.5 633.6 545.3M661.1 532.3Q649.7 534 638.5 531.4M656 534.9Q642.2 539.3 628.1 541.8M655 535.4Q646.9 539.6 640 545.7M509.4 468.1Q519 465 527 458.8M514.3 467.8Q526.3 466 537.3 460.7M515.6 467.7Q526.2 468.1 536.3 464.7M509.9 468.1Q521.9 469.1 533.2 473.5M518.3 467.5Q527.7 465.7 535.7 460.6M511.1 468Q523.2 467.3 535.3 468.1M513.1 467.9Q524.3 470.3 534.7 475.1M508.3 468.2Q521.9 467.1 535.3 470.2M509.1 468.1Q520.6 466.7 532 468.4M516.6 467.6Q529.4 465.6 540 458.1M516.1 467.6Q527.3 468.5 538.4 470.5M514.9 467.7Q525.1 462.7 534.5 456.3M520.1 467.4Q529.5 465.7 537.8 461.2M635.7 578.7Q629.6 582.3 624.4 587.1M631.5 580.9Q625 584 617.8 584.5M641.7 575.6Q629 577.9 616.3 575.2M636 578.6Q627.6 582.8 620.2 588.6M637.4 577.8Q628.4 579.8 619.2 581M632.4 580.4Q626.3 583.1 621.8 588M633.5 579.9Q627.2 582.1 620.7 583.6M640.5 576.3Q634.2 581.9 629.6 588.9M635.2 579Q627.5 583.5 618.6 584.3M634.8 579.2Q628.9 581.9 622.4 581.8M632.4 580.4Q624.7 583.2 619 589.1M639.1 577Q630.2 578 621.4 576.9M634 579.6Q628 581.6 621.7 581.3M654.1 447.3Q645.8 452.1 638 457.7M645.6 446.8Q634.5 446.3 623.8 449.2M651.9 447.2Q643.4 441.9 635.6 435.6M649.5 447Q639.5 450.4 629.8 454.6M652.2 447.2Q643.8 446.7 635.5 447.9M645.1 446.8Q634.3 447.1 624.3 443.1M653.1 447.3Q644.9 449.7 637.1 453.1M649.8 447.1Q639.9 442.4 632.2 434.6M653.1 447.3Q642.8 441.2 633.6 433.6M652.5 447.2Q642.2 446.6 632.4 449.9M641.4 446.5Q632.7 445.1 625.1 440.7M647.5 446.9Q637.3 450.1 628.4 456.1M648.1 446.9Q637.4 446 628 440.9M654.3 330.3Q642.6 326.6 630.4 324.8M653.5 329.3Q651.8 319.2 651.8 309M650.8 326.1Q647.3 317.5 644.5 308.6M648.9 323.9Q643.8 316.7 639.7 308.9M650 325.2Q645.8 317 642.7 308.2M647 321.6Q641 316.6 634.3 312.5M647.3 322Q644.4 315.9 642 309.5M650.4 325.6Q640.8 320 630.3 316.5M649.2 324.2Q644.7 318.6 643 311.6M653.4 329.2Q646.3 321 642.6 310.8M651 326.4Q642.7 320.7 633.3 317.3M493.8 410.8Q501.8 400.7 508.8 389.9M496.6 409.3Q507.5 400.7 513.8 388.4M496.4 409.4Q506 406.5 515.9 406.5M502.5 405.9Q513.2 404.1 524.1 403.9M496.4 409.4Q504.8 403.7 510.5 395.3M494.1 410.7Q505.6 405.2 518.3 404.7M500.5 407.1Q510.3 401 517.7 392.1M497.8 408.6Q506.2 402.9 513.6 395.8M494.9 410.2Q506.4 408.9 517.8 410.3M499.5 407.6Q506.7 398.6 510.9 387.7M495 410.2Q505.2 400.4 513.6 389M499.8 407.4Q508 398.7 513.8 388.3M502 418.2Q515.8 416.6 529.4 419.1M497.2 419.1Q509.3 414.9 521 409.6M502.2 418.2Q514.8 416.4 527.2 419.2M498.5 418.9Q512.6 420.5 525.8 425.8M505 417.7Q515.8 412.8 526.1 406.9M494.5 419.7Q507.1 420.5 518.9 425M498 419Q511.2 414.1 522.4 405.7M503 418.1Q511.5 419.1 519.4 422.3M494.3 419.7Q504.5 412.4 513.5 403.6M506 417.5Q518.2 416 528.7 409.5M502.7 418.1Q511.4 417.4 519.4 420.7M502.2 418.2Q513.2 414.4 521.9 406.6M488.7 238Q493.7 226.8 496.4 214.9M487.3 240Q497.5 230.5 509.1 222.8M489.4 236.9Q495 228.8 499 219.7M485.1 243.2Q495.4 238.5 506.5 236.2M488.7 237.9Q494.4 229.5 497.5 219.9M491.3 234.1Q495.8 226.2 502.4 220M483.4 245.7Q483.6 233.8 482.6 221.9M484.3 244.3Q498.6 236.4 513.8 230.8M485.4 242.7Q496.5 234.5 508.3 227.2M490.7 235Q498.6 228.2 507.2 222.3M486.8 240.7Q493.6 229.4 498.8 217.2M483.2 245.9Q495.3 233.9 509.3 224.3M646.2 327.3Q639.8 320.9 634.2 313.8M646.1 327.2Q639.5 322.1 631.3 320.3M642.5 325.1Q636.5 322.3 629.9 321.7M647.5 328Q638.8 321.2 633.5 311.5M641.4 324.5Q635.1 319.7 630.2 313.5M647.9 328.3Q641.1 324.3 633.3 323.2M646.6 327.5Q638.1 323.2 628.7 322.9M645.3 326.7Q636.6 320.6 631.5 311.4M646.9 327.7Q640.3 324.1 633.3 321.5M644.6 326.4Q636.9 323 631.2 316.7M641 324.2Q636.2 321.8 632.9 317.7M488.4 530.7Q500.7 525.1 511.4 516.8M495.6 527.5Q503.3 524.2 511.3 521.9M485.2 532.1Q496.9 522.7 505.3 510.4M489.8 530.1Q502.1 524.8 515.5 524.3M487.3 531.2Q497.3 527.1 505.9 520.7M487.7 531.1Q498.7 527.9 510 530M486.4 531.6Q497.1 526.4 508.7 524M484.9 532.3Q494.5 526.7 502.8 519.4M489.3 530.3Q502.2 525.6 515.9 523.7M496.3 527.2Q503 522.8 508.2 516.6M493.8 528.3Q503.2 526 512.8 527.3M635.1 485.3Q626.7 489.7 617.4 491.5M633.3 487.1Q626.5 493.2 621.7 501M638.2 482.5Q631.3 488.3 623.5 492.9M631.3 488.9Q624.5 496.4 615.1 500.1M631.2 489Q627 493.5 621.4 496.1M630 490.1Q623.7 495.9 616.8 501.2M636.4 484.2Q626.3 490.3 615.5 495.2M636.2 484.4Q628.6 493.4 622.6 503.6M635.4 485.1Q631.1 493.8 628.2 503.1M486.6 164.1Q492.6 170 498.1 176.4M474.5 157.9Q488.2 162.5 502.5 165M479.9 160.6Q488.2 164.4 496.9 167.2M480.4 160.9Q489.6 163.1 499.1 163.8M480.1 160.7Q486.7 168.4 491.5 177.4M483.8 162.6Q495.2 167 507.5 167.2M480.4 160.9Q492.9 164.3 505.8 165.5M476.1 158.7Q485.3 160.9 494.7 159.9M476.1 158.7Q484.5 165.5 489.1 175.3M485.8 163.6Q492 167.1 498.9 168.2M481.2 161.3Q491.2 161.9 501.2 161M478 159.7Q490 164.5 503 165.5M483.6 162.5Q493.5 169.2 499.6 179.7M486.7 164.1Q492.1 167.8 496.8 172.5M638.3 169.2Q630.8 172.8 622.8 175.1M642.2 166.5Q630.1 169.7 617.6 171.2M642.7 166.2Q634.3 172.8 628.5 181.9M641.6 166.9Q634.2 172.9 625.1 175.6M642.7 166.2Q634.7 174.6 629.8 185.1M639.4 168.5Q630.9 171.6 621.9 172.9M638.4 169.2Q631.2 175.9 625.2 183.7M636.8 170.3Q628.3 174.8 619.1 177.2M636.2 170.7Q630.7 174.6 625.6 178.9M508.5 544.2Q519 542.9 529.3 540.2M501.1 543.2Q513 545.1 524.7 548.1M498.2 542.8Q514.5 544.6 530.5 541.1M505.8 543.9Q515.9 548.3 524.9 554.8M498.8 542.9Q510.1 535.8 520.1 527M510.7 544.5Q522.6 545.1 533.2 550.6M501.5 543.3Q515 546.1 528.8 544.9M502.5 543.4Q514 537.4 524.2 529.5M508.3 544.2Q518.5 546.7 528.1 550.6M507.9 544.2Q517 542.3 525.8 539.3M507.4 544.1Q519.7 544.6 531.9 543.6M506.5 544Q520.4 546.3 531.7 554.7M501.6 543.3Q514.9 538.3 526.6 530.1M507.7 320.5Q517.8 318 526 311.5M511.8 320.5Q521.3 318.4 529.7 313.5M508.5 320.5Q517.6 324.8 526.1 330M506.4 320.5Q518.4 321.7 530.1 324.8M509.4 320.5Q519.1 321.7 528.5 324.3M504.9 320.5Q512.2 317.7 518.9 313.6M503.9 320.5Q512.5 322.8 519.8 327.8M504.9 320.5Q515.3 317.9 525.4 314.2M506.4 320.5Q517.7 320.5 528.1 324.7M512.9 320.5Q521.5 323.3 529.7 327.2M660.9 354.8Q645.3 354.6 630.1 350.8M662 354.2Q650.2 365.8 644.2 381.3M660.8 354.8Q647.5 356.8 634.1 355.5M653.1 359Q644.8 363.8 639.3 371.7M658.6 356Q645 360 630.9 361.4M657.6 356.6Q644.2 364.6 634.2 376.5M658.8 355.9Q648.2 364.7 642.4 377.3M657.5 356.6Q648.4 362.5 641.8 371M654.8 358.1Q644 360.3 633 360M651.1 360.1Q641.4 363.4 631.1 363.7M648.4 361.5Q641.1 365.8 636.2 372.7M656.2 357.3Q644.5 360.4 632.3 360.6M482.4 330.8Q492.9 334.3 503.6 336.9M477.6 327.5Q482.2 339.1 482 351.4M477.4 327.4Q482.9 335 486 343.9M481.2 330Q488.8 335 497.1 338.7M480.8 329.7Q488.5 337.8 494.5 347.2M478.2 327.9Q486.7 336.6 494 346.4M484.7 332.5Q493.3 338.5 503.2 341.5M478.9 328.4Q486.3 334.1 490.6 342.3M480.8 329.8Q491.2 335.1 501.9 339.6M484.1 332Q491.8 339.1 497.2 348.1M481.3 330.1Q486.4 337.8 490.9 345.9M517.7 297.6Q525.3 301.1 533.7 302.5M513.4 296Q521.9 298.1 528.7 303.6M516.6 297.2Q523.6 299.6 531 300.4M510.6 294.9Q521.7 295.9 532.9 295.1M517.9 297.7Q523.9 300.7 530.7 301.2M510.3 294.8Q518.6 297.9 527.5 297.1M511.3 295.2Q518.9 299 524.9 305.1M507.9 294Q515.8 295.5 523.8 294.6M514.5 296.4Q520.9 298.7 525.5 303.6M507.7 293.9Q515.7 294.4 523.6 293.2M516.3 297Q523.8 300.9 530.5 306.2M516.4 297.1Q523.5 300.8 529.5 305.9M515.7 296.8Q521.5 298.2 527.4 298.3M515 296.6Q520.9 301 526.2 306.1M482.3 396.6Q486.5 384 486.7 370.8M481.9 398.2Q486.2 384.5 494.5 372.9M482.1 397.6Q486.4 384.7 495.5 374.6M482.8 394.8Q484.2 382.5 480.5 370.6M481.4 399.7Q484.4 389.9 490.5 381.6M481.2 400.4Q479 385.5 471.7 372.3M480.9 401.4Q490.2 389.4 503.6 382M481.4 399.8Q480.2 389.9 475.6 380.9M479.9 405Q479.1 390.3 475.6 376M481.2 400.7Q481.6 391 477.6 382.1M482.8 395.1Q487.5 384.2 495.7 375.7M515.1 445.7Q522.9 451.3 528.1 459.2M511.6 442.9Q518.6 448.4 523 456.2M508.1 440.3Q516.8 446 526.6 449.1M513.1 444.1Q521.3 449.7 531 451.9M510.5 442.2Q520 450.3 527.8 460M513.1 444.1Q521.5 449.7 527.7 457.6M487.4 321.5Q493.2 313.8 495.7 304.6M483.7 324Q491.3 318.8 500.3 317.4M490 319.7Q495.4 313.4 498.8 306M483.2 324.4Q494.5 319.2 506.9 318.4M484.3 323.6Q490.3 317 494.1 308.9M491 319Q496.5 317 502.2 315.9M487.8 321.2Q495.9 317.8 504.6 317.2M482 325.2Q493.7 325.8 505.1 328.2M484.4 323.5Q493 314.4 497.5 302.7M490.9 319Q495.7 314.5 499 308.9M651.5 561.1Q647.2 550 646.9 538.1M652.9 563.6Q647.5 552.6 639.6 543.1M648.7 555.9Q644.6 546.4 641.6 536.4M648.7 555.9Q643.5 545.9 636.7 536.9M651.1 560.3Q650.3 548.4 651 536.4M651 560.2Q645.7 546.1 635.5 535.1M649.1 556.5Q643.3 548.7 634.7 544.2M653.2 564.2Q643 550.8 628.5 542.1M635.2 382.2Q626.5 384.1 617.6 384.2M636.7 381.6Q626.6 386.6 615.4 386.7M633.3 382.9Q625.1 385.5 616.4 384.6M635.9 381.9Q627.2 384.3 618.3 385.7M644 378.5Q636 386.7 628.9 395.6M637.8 381.1Q626.6 382.8 615.4 381.7M638.7 380.7Q630.1 387.5 623.9 396.6M641.1 379.7Q628.9 381.1 616.7 381.3M642.6 379.1Q633.4 386.1 625.4 394.5M641.9 379.4Q633.7 380.5 625.4 380.2M501.3 573.8Q512 580.6 524 585.1M507.1 578.9Q517.4 587.8 526.2 598.1M501.2 573.7Q513.1 583.9 526.5 592.2M506.1 578.1Q517.1 588.2 530.3 595.1M501.8 574.3Q505.1 586 504.1 598.2M507 578.9Q516.9 589 529.8 594.7M502.7 575.1Q514.4 583.1 527.1 589.7M504.6 576.7Q511.8 588.1 513.3 601.5M502.2 574.6Q511.9 579.3 522.5 580.9M638.6 315.9Q630.2 318.9 621.3 318M648.7 313.2Q639 313 629.9 309.8M642.8 314.8Q633.1 316.7 624.4 321.5M645.4 314.1Q637.3 312.9 629.4 310.9M646 313.9Q637.1 316.7 627.7 315.9M649.2 313.1Q636 316.4 624.2 323.3M644.7 314.3Q633 315.8 621.9 312M649.1 313.1Q634.9 310.8 622.6 303.4M647.9 313.4Q640 320.9 633.3 329.6M640.9 315.2Q629.9 315.2 618.8 313.9M640.2 315.4Q629.8 319.1 619.9 323.7M647.8 313.4Q636.8 315.2 625.8 314M648.1 313.4Q636.2 322.1 629.5 335.1M648 313.4Q635.1 318.8 621 318.2M637.5 316.2Q629.1 318.3 622.6 323.9M640.5 315.4Q632.8 317.6 624.8 317.4M511.6 407.8Q520.7 417 527.4 428.2M507.2 404.7Q516.4 409.7 522.9 418M505.7 403.6Q517.4 414.9 523.6 430M506.6 404.3Q517.4 411.3 530.2 412.8M508.1 405.3Q517.2 416 524.1 428.2M516.1 411Q523.9 415.9 533 417.3M508.7 405.7Q519.1 414.4 527.2 425.1M513.6 409.3Q524 414.6 535.6 416M508 405.3Q515.9 413.2 521.1 423.1M511.2 407.6Q521.3 415.2 530.7 423.6M508.7 405.8Q521.1 411.6 533.9 416.3M507.1 404.6Q515 416 521.1 428.5M483.4 281.4Q490.3 289.8 494.5 299.8M477.6 276.4Q488.3 286 495.8 298.3M485.9 283.5Q492.8 287.8 500.5 290.7M479.7 278.3Q486.6 288.5 489.4 300.5M481.4 279.7Q490.2 287.1 501.3 289.8M482.3 280.5Q490.4 287.8 500.5 291.8M484.6 282.4Q490.1 286.6 493.3 292.8M486.1 283.7Q490.8 288.7 494 294.8M476.5 275.5Q487.5 278.3 498.8 279.8M480.4 278.8Q485.7 285 488.2 292.8M482.8 280.9Q490.4 289.6 497.3 298.8M479.5 278.1Q488.5 284.1 499 287.2M510.9 397Q518.7 403.6 527.1 409.6M509.8 395.9Q517.3 405 521.2 416.3M510.1 396.2Q519.5 401 529.7 404.1M507.1 393.3Q510.8 403.5 511.3 414.4M510.8 396.9Q515.7 405.3 519 414.5M511.1 397.2Q517.2 403.3 521.9 410.7M510 396.1Q519.2 404.1 526.1 414.2M514.9 400.8Q519.5 406.2 522.7 412.5M512.7 398.7Q519.5 405.9 522.4 415.3M512.8 398.8Q519.5 406 528.6 409.8M510 396.1Q519.2 401.3 529.7 402.3M506.2 392.5Q510 406 511.5 420M514.5 400.4Q520.8 406.7 528.5 411.2M505.6 391.9Q510.7 402.4 513.6 413.7M647 367.3Q634.8 369.8 623.2 374.3M659.6 367.4Q645.6 367.4 632.9 361.7M648.6 367.3Q636.5 371.2 624.7 376.1M649.9 367.3Q639.9 371.6 631.4 378.4M659.3 367.4Q647 371.6 635.2 376.8M660 367.4Q644.8 377.6 631.2 389.8M649.2 367.3Q639.1 369.1 629.3 372.6M653.4 367.3Q638.1 369.5 625.1 377.8M657.7 367.4Q643.8 371.3 631.4 378.8M649 367.3Q639.4 365.5 631.4 359.9M656.2 367.4Q640.9 359.1 630.2 345.4M663.7 317.9Q656.6 310.3 652.8 300.6M666.5 320.9Q657.7 312.2 653.3 300.6M662.7 316.8Q656.5 312.2 650 308.4M670.6 325.5Q660.8 317.3 648.5 313.6M669.7 324.5Q664.1 313.6 659.9 302.1M663.5 317.7Q656 310.8 650.9 302M667.4 321.9Q659 310.4 646.4 303.9M663.2 317.3Q656.1 309.3 646.6 304.6M646.6 384.2Q638.5 380 631 374.9M651.5 385.7Q643.7 380 636.5 373.5M648.9 384.9Q642.2 382.5 636.6 378.3M651.3 385.6Q640.3 384.5 629.3 385.7M648 384.6Q640.4 383.1 632.6 383.6M654.9 386.8Q644.9 381.4 636.3 374.1M656.3 387.2Q649.7 381.9 645.4 374.5M657.6 513.1Q646.2 521.7 632.3 525.6M660.9 508.7Q656.8 524.4 656.3 540.5M652.2 520.3Q646.8 525.7 640.4 529.7M657.9 512.7Q646 519.4 633.1 524.1M653 519.2Q646 526.3 642.3 535.5M661.6 507.8Q648.9 519.9 634.8 530.3M660.6 509.1Q653.5 521.8 648 535.3M660 509.9Q647.2 518.4 633.5 525.5M661.5 507.8Q656.9 525.2 658.7 543.1M660.2 509.7Q649.4 516.6 637.3 520.9M660.7 508.9Q652 524 647.1 540.7M654.8 516.8Q649.4 523.8 647.2 532.4M653.7 518.3Q648 525.6 641.4 532.2M475.9 198.4Q488.8 196.2 501.9 195.9M476.9 197.4Q487.6 194.5 498.5 192.5M481.9 192.7Q489.4 183.7 495.9 173.8M482.4 192.3Q491.2 188.8 500.4 186.2M482.1 192.5Q489.2 184.2 495.5 175.4M473.3 200.9Q482.6 191.3 495.1 186.5M481.3 193.3Q490.1 185 497.6 175.4M483.2 191.5Q487.3 184.4 489.2 176.4M479 195.5Q487.4 187.8 496.9 181.4M480.4 194.2Q490.4 189.6 501.3 189.5M477.7 196.7Q485.9 185.9 489.3 172.8M525.4 277.2Q536.4 278.3 546.1 283.5M529.6 277.1Q536.3 276.2 542.7 274.4M526.1 277.2Q536.7 278.3 546.9 281.4M523 277.3Q531.3 279.2 538.3 284M528.9 277.1Q536.6 278.1 544 275.8M518.5 277.5Q527.5 280.4 535.1 286M523.4 277.3Q534.4 276.7 545 279.9M524.7 277.2Q533.7 275.7 541.2 270.5M523.6 277.3Q533.8 276.7 543.8 274.4M654.8 413.9Q647.2 423.7 641.7 434.8M651.1 415.9Q641.7 422.6 633.9 431M655 413.8Q644 419.2 632 421.3M653.3 414.7Q647 420 643.3 427.4M651.5 415.7Q644.4 419.4 639.7 425.9M659.9 411.3Q648.6 415.6 640.4 424.4M651.1 415.8Q642.7 422.4 635.7 430.5M654 414.4Q646.4 418.8 640.7 425.4M650.7 416.1Q643.9 420.8 639 427.5M649.2 416.8Q640.7 421.6 633.9 428.6M661 410.7Q648.1 411.3 635.8 407.5M521 569.7Q531.8 564.1 540.2 555.5M516.8 571.4Q528.1 567.6 537.2 559.9M517.2 571.3Q527.5 571.1 537.2 574.3M523.7 568.6Q533.6 566.6 543.7 567.1M519.9 570.2Q527.2 567.5 533.8 563.1M523.1 568.8Q531.2 563.8 538.2 557.2M521.8 569.4Q532 564.1 543.3 562.1M527 567.3Q533.9 563.2 540.3 558.2M521.3 569.6Q530.6 567.2 540.3 567M522 569.3Q532 567.6 541.8 570.2M527.7 566.9Q534.3 565.5 541.1 565.1M509.3 412.3Q515.5 416.3 521.9 419.7M509.4 412.4Q515.9 420.2 521.3 428.8M514.3 416.4Q519.8 420.5 525.9 423.7M505.5 409.3Q516.4 418.1 524.4 429.5M514.9 416.8Q521.8 421.7 529.2 425.8M513.6 415.8Q520.2 422.3 524.5 430.5M508.9 412Q518.4 415.8 528.3 418.4M506.7 410.2Q514.8 419.1 520.9 429.5M498 437.5Q506.2 430.5 511.9 421.4M493.8 440.6Q504.7 432.7 517.1 427.5M488.8 444.2Q497 433.6 503.8 422.2M500.4 435.7Q507.4 431.3 515.4 429.1M497.8 437.7Q507.1 428.2 514.3 417.1M492.3 441.6Q506 434.1 520.9 429.5M488.8 444.2Q495.1 430.2 499.1 415.4M493.1 441.1Q498.2 432.3 502 422.8M493.6 440.7Q504.6 437.7 516.1 437.1M489.2 443.9Q502.2 440.8 515.5 442.2M500.5 435.7Q508.3 427.9 513.2 418M493.9 440.5Q505.9 437 518.3 437.8M491.5 442.3Q499.2 430.4 502.9 416.8M495.2 439.5Q504.5 435.5 514.5 433.8M646.9 366.8Q639.4 374.4 634.1 383.5M642.3 371Q638.2 375.3 635.6 380.7M641 372.2Q635.1 377.8 628.5 382.4M641.5 371.8Q637.9 375.8 634.6 380.2M644.4 369.1Q640.5 374.5 638.5 380.9M642.6 370.8Q637.8 376.1 634.2 382.3M648.3 365.5Q642.1 371.7 637 378.8M647.4 366.3Q642.1 372.1 638.2 378.8M648.7 365.1Q640.8 371.8 631.9 377.2M647.8 365.9Q641 373.6 635.9 382.6M647.8 365.9Q639.8 371.6 630 373.3M645.5 462.3Q636.8 461.9 628.2 462.5M638.8 459.1Q630.7 454.6 624 448.2M635.2 457.3Q629.7 454.9 625.9 450.2M642.6 460.9Q634 458 625.1 456.1M634.7 457.1Q628.4 452.4 622.6 447.1M636.4 457.9Q629.8 455.4 622.9 454.5M636.1 457.8Q629.4 454.3 624 448.9M645.2 462.2Q634.4 459.3 623.2 458.2M643.8 461.5Q632.8 455 622.9 447M636.3 457.9Q630.7 456 624.8 455.6M507.4 234.1Q512.9 242.4 517.6 251.2M508.3 234.6Q516.5 239.7 525.9 242.5M501.7 231Q514.6 236.3 524.3 246.2M500.7 230.4Q506.9 242.1 508.6 255.3M507.2 234Q516.1 235.7 525.2 235.5M503.2 231.8Q512.9 232.7 522.7 232.2M502.6 231.5Q507.6 242.2 511.1 253.5M509.6 235.3Q519.1 240.1 529.6 242M502 231.1Q512.7 235.9 520.3 244.7M505.9 233.3Q517.2 237.1 529.2 236.7M502 231.1Q514.1 236.9 523.6 246.4M639.5 431.4Q631.2 434.5 623.8 439.1M636.7 432.1Q628.5 433.1 620.5 430.8M642.5 430.6Q630.3 437.9 619.1 446.5M632.5 433.2Q621.6 435.9 610.5 434.4M633.4 432.9Q622.8 435.7 612.1 433.6M636.7 432.1Q624.7 436.4 613.7 442.7M636.3 432.2Q625.7 437.6 616.7 445.5M642.3 430.7Q630.9 433 619.3 432.9M630.9 433.6Q621.1 436.6 612.2 441.5M641.5 430.9Q632.1 435.2 623.3 440.7M638.6 247.5Q627.3 246.6 616.2 249M644.7 248.3Q630.9 246.7 617.2 248.1M647.3 248.6Q632.1 244.5 617.8 238.1M640.8 247.8Q628.5 242.6 616.8 236.3M646.6 248.5Q635.6 248.1 624.9 251M634.8 247Q625.1 246.1 616.3 241.9M635.1 247.1Q624.3 245.3 613.5 247.5M634.3 247Q627.6 247.2 621.1 248.6M647.6 248.7Q634.3 252 622.3 258.6M633.4 246.9Q624.8 245.1 617.2 240.6M646.3 248.5Q636 247 626.7 242.4M635.8 247.2Q628.6 246.6 621.7 248.7M642.9 248.1Q635.4 241.9 628.6 234.9M634 246.9Q627.4 248 621 250.3M640 247.7Q629.3 248.6 619.3 252.2M645.2 248.4Q630.2 247.2 616 241.9M655.1 201.6Q649.5 195.1 641.6 191.8M655.3 201.8Q650.1 195.8 642.8 192.5M658.1 205.1Q655.7 198.4 654.2 191.4M660 207.3Q651.5 197.1 639.6 191.2M659 206.1Q652.7 198.8 649 189.9M656.9 203.7Q651.8 194.2 648.6 184M658.9 206Q651.2 200.1 642.1 196.8M659.7 206.9Q655.8 199.6 655.2 191.4M662.4 210Q651.6 206.1 640.2 205.4M663.4 211.1Q654.1 199.6 648.5 185.8M657.1 203.9Q654.2 194.7 653.1 185M496 194.6Q501.3 185.8 502.3 175.6M493.8 199.8Q498.6 188 500.3 175.5M494.5 198.2Q501.8 190.2 510.2 183.4M493.2 201.2Q506.4 192.2 520.7 185.1M497.8 190.5Q502.9 180.7 504.1 169.7M496 194.8Q500.6 185.7 508 178.6M492.7 202.4Q496.8 191 504.6 181.6M497.9 190.3Q501.4 183.3 502.4 175.6M494 199.4Q498.3 187.4 506 177M492.6 202.7Q497.5 188.1 497.9 172.7M494.5 198.3Q496.6 188.8 495.9 179M493 201.6Q492.9 186.4 487.6 172.2M508.8 293.9Q519.1 291 528.3 285.7M504.8 294.1Q512.6 298.8 519.8 304.6M509.3 293.9Q517.5 292 525.3 288.5M516.1 293.7Q524.9 290.5 533.4 286.5M507 294Q516.7 296.1 525.2 301M501.8 294.2Q516 290.7 529.4 285M511.8 293.8Q523 288.7 532.4 280.9M507.8 294Q520.4 290.9 530.2 282.6M507.5 294Q518.1 296.6 527.6 302M510.7 537.5Q518.7 538.3 526.8 537.5M508.2 536.7Q518.6 537.2 528.6 534.4M505.9 536Q513.3 540.5 518.5 547.5M504.1 535.4Q511.6 539 519.8 539.1M510.4 537.4Q515.9 540.7 520.6 544.8M504.4 535.5Q514.6 535.3 524.5 533M499.7 534.1Q514.3 535.3 528.8 533.7M501.9 534.8Q511 536.8 518.2 542.6M500.8 534.4Q509.4 537.5 518.6 537.5M505.5 535.9Q513.5 539.2 520.9 543.9M530.4 212.4Q538.5 212.6 546.3 215.1M530.1 212.4Q540.1 212 549.9 210.3M524.1 211.9Q532.7 210.8 540.6 207.1M520 211.6Q533 209.2 544.1 202M530.6 212.4Q539.1 213.9 547.2 216.9M523.7 211.9Q534.7 212.7 544.9 217M474.6 354.9Q474.2 343.7 471.6 332.8M474.4 355.3Q484.6 344.9 496 335.8M474.1 356.1Q474.7 346.5 472.4 337.1M477.6 347.2Q480.4 340.1 485.9 334.8M475.1 353.6Q478 343.4 477.2 332.9M478.1 346.1Q480.7 336.8 479.7 327.2M477.5 347.6Q481.5 341.4 487.5 337M478.5 344.9Q481.4 338.6 486.1 333.5M475.1 353.4Q474.4 344.9 472 336.7M475.7 352.1Q477.2 341.6 477.5 330.9M474.8 317.5Q487.5 320.6 497.6 328.8M482.9 319Q495.3 318.4 506.4 312.8M481.4 318.7Q495.7 324.6 507.9 334.3M489.2 320.1Q500.7 322.9 511.6 327.4M484.3 319.2Q494.3 319.3 503.9 316.6M479.1 318.3Q491 320.8 502.3 325.2M511.2 174.1Q517.7 178.6 525.2 180.9M504.7 170.1Q513.5 173.3 522.5 175.4M505.1 170.3Q514.7 171.3 524.4 171.1M505.8 170.8Q515.3 175.3 522.5 183M509.7 173.1Q516.7 177.9 522.1 184.4M508.4 172.3Q517.5 174.5 526.9 174.5M508.2 172.2Q515.9 176.1 524.4 176.7M510.8 173.8Q516.4 179.3 520.3 186.2M506.5 171.2Q515.5 175.7 525.3 177.8M503.1 169.2Q509.2 180.3 513.1 192.3M508 172.1Q514.8 174.8 522.1 174.6M508.7 172.6Q513.5 176.7 517 182M504.1 169.8Q513.6 173 523.5 174.6M505.2 170.4Q512.1 177.2 518.1 184.9M502.6 168.9Q512.8 175.1 524.6 177.5M509.7 173.1Q517.8 177 526.4 179.4M509.6 173.1Q518 177.3 524.4 184.3M509.5 173Q515.7 178 520.7 184.1M510 238.7Q522.3 243.9 535.3 247M508.8 238.2Q515.2 246.1 517.9 255.9M506.7 237.2Q517.4 243 525.1 252.4M511.7 239.4Q521.5 246 528.6 255.3M516.8 241.7Q527.6 244 538.6 244.4M511.8 239.5Q522.4 247.3 531.3 257M509.5 238.5Q518 246.2 523.9 255.9M507.2 237.5Q517.5 242.6 526.1 250.2M518.2 242.3Q527.6 246.8 537.9 247.2M509.8 238.6Q519.2 244.6 527.7 251.8M517.1 241.8Q524.2 246 532.3 247.2M506.3 237Q519.1 237.5 531.2 233.3M510.2 238.8Q523.5 244.1 534 253.8M480.5 364.5Q484.9 356.6 487.6 348M481.7 362.5Q489.6 352.9 492.3 340.7M480.4 364.6Q489.3 354.6 500.3 347.3M482 361.9Q485.8 350.4 487.2 338.4M480.2 364.9Q489.5 354.4 501.2 346.7M481.7 362.5Q485.4 355.1 487.8 347.1M480.5 364.4Q488.8 354.7 498.4 346.4M478.4 368Q483.3 356.5 486.7 344.5M479.9 365.4Q487.6 354.1 499.1 346.8M480.3 364.9Q484.9 354.2 487 342.7M479.2 366.6Q483 357 483.6 346.7M635.8 557Q627.2 559.3 619.8 564.1M626.7 559.6Q619.7 561.7 612.4 562.6M625.7 559.9Q616.4 562.5 608.8 568.4M630.3 558.6Q620.7 565.1 612.8 573.7M633.7 557.7Q624.1 560.1 615.9 565.6M627.9 559.3Q617.5 563.5 608 569.2M630.7 558.5Q620.3 560.5 609.8 558.6M628.6 559.1Q618.4 564.2 608.8 570.3M633.4 557.7Q620.3 560.3 607 560.5M624.7 560.2Q617 562 609.2 562.4M628.6 559.1Q618.6 564.9 610.5 573.3M631.3 558.3Q623 563.2 617.8 571.4M492.1 332.5Q498.2 322.2 499.2 310.2M490.9 334.2Q499.3 330.9 508 328.3M495.7 327.3Q500.6 319.8 507.3 313.9M492.2 332.4Q501.7 327.4 511.8 323.6M491.6 333.2Q499.4 324.6 510.1 320.2M495.6 327.5Q501.2 322.1 507.4 317.5M495.4 327.8Q497.8 321.3 498 314.5M490.2 335.2Q500.9 325.7 513 318.1M494.4 329.2Q498.1 320.8 498.1 311.7M494.6 328.9Q500 319.7 504.1 309.9M493.5 330.5Q502.5 322.7 513.1 317.2M494.5 329Q499 317.9 498.1 306M495.8 327.2Q501.5 321.4 508.1 316.5M478.5 584.4Q486.9 587.8 493.5 594.2M482.9 586.7Q490.3 590.9 496.5 596.7M476.2 583.3Q486.9 585.5 497.9 584.6M478.7 584.5Q487.8 592.4 495.2 601.9M481.2 585.8Q491.1 589.1 501.6 588.1M474.8 582.6Q485.7 585.6 497 585.4M480.3 585.3Q489.9 592.5 498.3 601M480.9 585.6Q490.9 586.3 500.9 585.6M478 584.2Q489.7 585.2 500.8 581.7M477.9 584.1Q489 590.1 498.5 598.4M475.6 583Q487.8 586.8 500.3 588.8M502.9 520.3Q511.2 533.4 523.5 542.9M507.1 528.3Q511 539.8 511.7 551.8M506.5 527.2Q510.7 535.3 517.6 541.2M507.5 529.1Q512.8 540 512.9 552.1M510 573.2Q520.8 578.3 532.9 578.4M502.1 569.9Q510.1 578 515.4 588.1M498.4 568.3Q516.3 567.4 533.9 564.6M503 570.3Q511.5 574.9 518.7 581.3M501.8 569.8Q513.3 570.8 524.8 569.5M507.5 572.1Q514.8 577.2 520.8 583.8M501.6 569.7Q517 574.2 533 573.5M499.7 568.9Q511.3 571 523 569.2M510.1 573.2Q517.4 576.8 523.4 582.4M505.2 571.2Q513.4 577.6 519.1 586.3M499.4 568.7Q513.6 568.1 527.1 563.9M506.4 571.7Q517.3 578.2 527 586.5M644.5 583Q635.1 587.8 626.4 593.8M636.7 585.8Q626.5 588.2 616 589M638.5 585.2Q630.5 589.4 623 594.3M640 584.6Q630 587.5 619.5 586.3M641.9 583.9Q633 588.8 624.9 595M632.4 587.4Q625.5 589.6 618.4 590.6M641.8 584Q631.4 584.4 621.1 582.9M633.6 587Q625.9 590.3 619.5 595.7M498.9 299.4Q499.7 293 499.9 286.6M497.5 302.6Q500.6 295 506.1 288.9M496.4 304.9Q498.7 294.1 499.7 283M497.1 303.4Q498.3 294.1 497.4 284.7M498.8 299.8Q502.1 289.8 508.1 281.3M498.6 300.1Q499.6 293.1 499.7 286M497.5 302.6Q502.1 294.6 509.3 289M497.9 301.6Q501.5 295 507.2 290.1M497.9 301.6Q502.8 291.9 503.9 281M495.5 307Q497 298.2 497 289.2M494.7 308.8Q504 299.6 516.3 295.1M497.7 302.1Q501.4 295.1 502 287.2M495.7 306.6Q504.6 298.4 516 294.3M496.4 305.1Q498.4 296 499.1 286.8M623.4 498Q616.8 502.9 612.4 509.8M629.3 494.8Q617 501 604 505.9M631.9 493.4Q623.6 500.1 619 509.8M631.6 493.6Q617.9 503.4 601.4 507M631.2 493.8Q618.1 499.4 603.8 499M623.5 498Q613.3 501.5 602.6 500.5M624.5 497.4Q614.4 504.7 606.9 514.8M629.6 494.6Q620.4 499.1 610.4 501.5M619 500.5Q612.3 504 604.8 504.2M629.6 494.6Q622 504.1 616.2 514.7M623.9 497.8Q615.2 500.4 606.2 500.6M667.6 240.7Q658.8 230.7 652 219.1M660.9 235.7Q654.1 228.5 649 220.1M662.5 236.8Q654.7 229 644.6 224.6M669.9 242.4Q663.4 233.3 659.6 222.8M669.6 242.3Q660.1 235.8 653.2 226.5M663.6 237.7Q654 233 643.2 232M671.1 243.4Q659.1 234.7 650 222.9M666.9 240.2Q658.9 237.1 650.4 235.9M663 237.2Q654.4 232 644.9 228.8M668.8 241.6Q664 233.9 660.8 225.4M640.6 482.8Q629 476.6 616.1 473.6M637.4 481.2Q630.4 474.8 626.5 466.2M637.4 481.2Q626.3 475.7 616.7 467.9M632.9 479Q625.5 473.9 616.8 472.1M640.1 482.5Q632.9 474.1 628.6 464M638.4 481.7Q630.9 474.5 625.7 465.5M640.1 482.5Q630 478.1 622.5 470M632.2 478.6Q623.7 471.5 616.9 462.8M642.9 483.9Q627.9 478 612 474.9M632.2 478.7Q622.3 474.2 614.6 466.5M643.1 484Q632.8 479.3 623.9 472.3M631.5 478.3Q622.8 474.3 613.4 472.7M660.5 460.9Q659 472.5 660.3 484.1M659.1 465Q656.4 476 655.6 487.3M660.1 462.2Q661 478.1 664.5 493.7M658.2 467.6Q656.5 482.1 656.4 496.8M655.8 474.7Q652.5 484.6 645.6 492.5M659.6 463.6Q653.8 472.4 646.9 480.4M660 462.3Q656.6 477.8 655.6 493.6M655.7 475Q650.7 485.9 642.7 494.8M655.7 475.1Q653.3 484.4 654.8 493.8M491.3 405.4Q496.7 419 497 433.7M492.4 407.9Q498.1 419.7 501.3 432.3M492.9 409.1Q496.4 421 494.9 433.3M494.2 411.9Q497.1 420 497 428.5M490 402.3Q500.3 413.3 511.5 423.3M495.3 414.5Q498.6 423.9 505 431.4M494 411.6Q495.1 421.3 494.4 431M502.1 537.4Q513.2 534.4 521.8 526.8M507.7 537.3Q516.4 536.9 524.7 539.8M503.2 537.4Q511.9 538.9 519.9 542.7M509.3 537.3Q518.9 535.2 527.8 531M503 537.4Q516.4 537.8 529.6 539.9M504 537.4Q516.9 537.9 529.5 540.4M508.9 537.3Q515.8 539.1 522.5 541.4M509.1 537.3Q519.2 536.4 528.6 533M504.9 537.4Q515.2 538.9 524.1 544.3M503.6 537.4Q512.9 539 521.5 542.7M497.6 467.3Q507.7 464.5 518.2 464.7M502.3 463.7Q508.8 461 515.7 459.3M493.2 470.5Q499 462.7 502.3 453.5M492.4 471.1Q501.4 465.7 511.9 464.3M494.8 469.3Q499.2 462 502.8 454.3M501.7 464.1Q505.9 458.2 509 451.7M501.1 464.6Q508.2 459.2 517 457.5M492.1 471.4Q501.9 471.1 511.5 472.8M499.9 465.5Q506.3 457.6 511.8 449.1M496.6 468Q504.5 465.8 512.6 466.7M658 425.2Q656.4 434 656.5 443M662.3 417.9Q659 431.4 661.3 445.2M658.7 424.1Q655.2 433.5 655.5 443.6M663 416.8Q654.7 428.2 645.4 438.8M661.7 419Q655 424.4 647.8 429.1M661.3 419.7Q658.6 429.8 657.4 440.1M659.9 422Q656.6 431.6 656.1 441.8M659.1 423.3Q654.2 434.7 645 443M658 425.3Q655.4 435.3 655.4 445.7M660.3 421.3Q657.2 433.3 657.6 445.6M660.2 391.7Q649.3 389.5 639.1 385M668.1 392.1Q654.3 396.4 641.9 403.7M663.5 391.9Q653.2 391.4 643.2 388.4M661.1 391.8Q653.3 389.7 646.4 385.8M668.5 392.1Q656.7 397 647.9 406.2M663.2 391.9Q653.3 392.9 643.6 394.9M666.1 392Q653.8 391.8 642.1 388M665.8 392Q656.1 393.9 646.6 397M497.9 574.7Q508.4 569.1 520.1 566.5M498 574.5Q504.5 566.6 509.1 557.5M493.7 578.8Q503.5 574.6 513.9 571.8M501.7 571Q506.4 564.4 510.5 557.3M499 573.6Q508.2 567.8 518.9 565.6M496 576.5Q502.2 568.8 505.4 559.4M495.9 576.6Q504.1 565.4 507.7 551.9M495.8 576.7Q503.4 572.2 512.1 570.8M497.6 574.9Q503.1 565.8 505.1 555.4M510 184.7Q516.8 179.7 520.9 172.2M514.7 182.6Q522.8 177.8 532.2 176.7M513.5 183.1Q524.2 178.4 532.6 170.2M516.7 181.7Q524.9 177 534.2 175.1M509.4 185Q517.1 181.3 525.6 180.2M517.7 181.2Q524.9 178.8 530.3 173.5M515.5 182.2Q522.4 179.1 529.6 176.9M518.8 180.7Q526.5 178.1 534.7 178M517 181.5Q525.2 178.9 531.4 172.9M510.2 184.6Q522.6 182.2 535.2 182.6M515.9 182.1Q522.9 179.7 530.4 179.3M518.6 180.8Q526.6 176.2 533.9 170.7M651 298Q638.3 290 623.7 286.7M650.3 297.4Q644 285 643.7 271.1M649.3 296.5Q635.4 289.5 620 287.5M648.9 296.1Q637.1 286 629.9 272.2M650.1 297.2Q638.5 288.8 625.2 283.6M641.9 289.9Q635.1 284.3 627.8 279.6M649.2 296.4Q640.8 290.3 631.3 286.1M641.6 289.7Q636.2 283 631.5 275.7M651.3 298.2Q638.9 291.8 625.8 286.7M645.6 293.2Q640.5 283.4 637.6 272.8M493.4 406.6Q502 405.7 509.5 401.4M491.2 406.9Q503.8 407.4 515.8 411M495.5 406.3Q504.5 406.1 512.7 402.4M485.6 407.7Q496.2 406 506.7 408.8M485.3 407.7Q500.1 409.2 513 416.6M492.8 406.7Q504.2 403.6 513 395.9M493.9 406.6Q506.3 406 518.6 408.5M492.7 406.7Q505.1 403.3 514.9 395M485.2 407.7Q495.5 413.5 503.7 422M484.4 407.8Q492.4 400.2 496.5 389.9M640.1 389.1Q627.3 391.4 614.7 388.5M642.6 388.3Q631.6 390.6 622.7 397.3M636.3 390.3Q627.7 392.6 620.9 398.4M640.9 388.8Q631.9 388.4 623.1 386.6M633 391.3Q624.2 394.3 614.9 393.6M635.6 390.5Q629.6 394.9 624.1 399.9M634.1 391Q627 393.6 619.6 394.7M639 389.4Q627.4 393.5 615.2 394M637.9 389.8Q628.7 393.4 620.3 398.5M632.9 391.4Q623.3 396.8 615.2 404.3M643.3 388Q630.7 390.4 617.9 391M636.5 390.2Q625.3 392.9 613.9 394.7M504.8 179.7Q514.4 172.5 526.1 169.9M510.8 176Q522.1 171 534.1 168.2M502.6 181.1Q512.3 178.3 522.3 177.6M510.2 176.3Q519.8 174.2 529.4 176.4M504.5 179.9Q509.6 169.2 512.7 157.7M503.6 180.5Q509.2 166.7 509.4 151.8M514.6 173.6Q520.7 168.3 524.6 161.2M657.4 562.3Q648.4 564.6 640.3 569.2M663.4 561.9Q652.1 557.8 641.5 552.2M663.3 561.9Q648 566 635.9 576.2M666.5 561.7Q649.6 561.3 633.9 555.3M665.2 561.7Q654.5 561.9 644.6 566M670.9 561.4Q655 568.3 642.3 580.1M664.5 561.8Q654 561.4 644.4 557.1M670.2 561.4Q658.7 563.5 648.6 569.4M659.5 562.1Q646.9 565.1 635.2 570.8M645.3 328.8Q637.7 318.3 627.5 310.4M648.4 332.6Q641.8 324.7 638.8 314.8M648.2 332.3Q635.8 326.9 622.5 324.3M644.2 327.3Q638.5 319 634.2 309.9M649.3 333.6Q636.4 326.4 622.3 322.1M646.5 330.2Q642.6 321.3 641.8 311.5M643.4 326.4Q638 318.3 630.2 312.5M644.6 327.8Q640 321.3 638.3 313.5M648.9 333.2Q639.2 322.3 627.2 314M648.5 332.7Q642.7 324.6 639.6 315.1M648.7 333Q641 320.7 629 312.7M650.2 334.7Q643.8 324.7 633.9 318.3M646.9 330.7Q638.9 320.3 634.8 307.8M643.8 326.9Q635.6 320.5 626.2 315.9M616.2 509.4Q606.8 511.1 598.7 516.1M627.9 506.1Q614.6 504.8 602.7 498.8M621 508.1Q609.2 512.7 598 518.6M621.9 507.8Q610.4 511.2 598.3 512M622.4 507.7Q609.4 506.8 596.6 504.7M617.8 509Q609 510.2 600.6 507.6M616.6 509.3Q608 514.1 601 521M620 508.4Q612 509.5 604 507.8M623.8 507.3Q612.4 510.1 602.3 516.1M626.8 506.5Q611.7 507.1 597.4 502.6M625.8 506.8Q613.2 509 602.2 515.5M627.2 506.4Q617.6 507.9 607.9 508.4M635.2 168Q628.1 165.9 620.7 166.7M632 167.1Q623.1 164.8 614 166.4M631.5 167Q621.8 163.8 614.3 156.8M632.2 167.2Q624.3 165.4 616.4 166.8M628.7 166.2Q621.5 163 613.5 162.9M638 168.7Q629.8 162.4 623.8 153.8M638.2 168.8Q630 164.6 624.2 157.4M633.5 167.5Q625.3 167.2 617.8 170.5M632.6 167.3Q622.5 162.9 611.4 163M635.8 168.1Q625.8 164.7 616.6 159.4M635.8 168.2Q626.6 166.3 617.4 168M520.5 475.1Q527.2 476.2 534 476.6M510.6 473.5Q522.9 479.5 532.4 489.2M509.9 473.4Q520.8 471.1 531.1 466.9M518.2 474.8Q528.8 477.8 537 484.9M516.9 474.5Q528 477.2 539.5 476.8M515.7 474.4Q527.3 479 537.1 486.8M514.8 474.2Q522.8 474 530.7 473M516.2 474.4Q523.9 476 531.6 474.3M516.3 474.5Q524.1 476.6 531.4 480M516.9 474.5Q528.5 478.3 537.3 486.8M512.9 473.9Q524.2 472.8 535.2 469.9M516.4 474.5Q524.8 476.9 532.3 481.6M508.2 473.1Q517.8 473.8 527.3 472M508.7 473.2Q518.9 478.2 527.9 485M507.8 473.1Q520.3 475.8 532.8 473.5M508 473.1Q521.1 478 532.5 486.1M517.8 474.7Q525.8 476 532.7 480.3M509.6 473.4Q523.3 472.2 536.2 467.5M511.1 473.6Q524 476.1 536.4 480.5M655.7 207.7Q648.6 222.4 636.4 233.3M652 213.8Q644.4 221.8 634.6 227M656.1 206.9Q645.7 215.2 634.4 222.1M656.9 205.5Q651.8 219.9 652.2 235.2M650.8 216Q642.7 225.5 633.3 233.7M653.1 212Q643.6 220.4 632.4 226.7M657 205.4Q654.4 219.3 656.4 233.3M658.2 203.4Q648.5 212.4 637.5 219.6M658.3 203.3Q649.8 213.3 637.7 218.3M625.4 264.6Q613.7 261.1 604.8 252.9M619.2 264Q608.5 263.6 598 265M619.8 264.1Q610.1 263.2 600.9 259.7M619.7 264.1Q610.3 264.5 601.7 268.2M622.9 264.4Q614.3 265.7 607 270.5M620.5 264.1Q610.7 261.1 602.3 255.2M620.3 264.1Q609.3 263.9 598.5 266.2M617.3 263.8Q610.1 262.9 603 263.7M622 264.3Q609.9 261.8 599.7 254.9M616.4 263.7Q609 264.4 602 266.9M615.7 263.7Q606.7 262.5 597.7 263.9M616.4 263.7Q608.3 263.5 601 260M668.4 222.7Q664.2 215.3 657.9 209.6M669.2 224.3Q666.2 216.1 666.5 207.4M671.8 229.9Q668.5 218.4 668.9 206.5M669.9 225.9Q664.1 216.8 656.3 209.1M671.1 228.4Q665.2 221.6 658.6 215.8M668.8 223.4Q665.3 216.8 664.4 209.4M672.2 230.9Q665.9 223.8 658.4 217.8M669.6 225.2Q666.7 213.3 668.8 201.3M669.9 225.8Q663.1 219.9 654.6 216.7M668.9 223.8Q663.9 214.1 662.8 203.2M668.5 222.9Q664.8 216.3 663.1 209M529.5 512.6Q535.7 506.3 538.4 497.9M530.3 511.9Q535.7 507.6 542.2 505M533.7 508.8Q539.6 503.5 542.9 496.2M531.5 510.8Q536 505.9 542.1 503.1M528.6 513.4Q535.6 505.5 539 495.6M530.1 512.1Q536.7 504 539 493.9M509 464.7Q517.3 469.6 526.3 473.3M504.5 461.4Q511.1 467.3 516.8 474M509.9 465.3Q516.4 469.5 524 471.1M507 463.2Q513.4 469.3 517.5 477M501.7 459.3Q508.4 468.1 512.2 478.4M501.5 459.1Q512.4 462.5 523.8 461.8M501.2 458.9Q515.1 462.9 529.6 461.6M510.4 465.7Q519.1 469.4 528.3 471.6M510.2 465.5Q515.3 470.2 518 476.4M509.9 465.3Q516.3 469.4 521.2 475.1M505.6 462.2Q511 468.6 515.7 475.5M651.3 462.2Q639.4 459.1 627.9 454.6M659.2 462.7Q646.2 463.8 633.4 466.5M653.2 462.3Q640.6 464.2 628.9 469M657.1 462.5Q647 457.7 639.9 448.9M654.3 462.4Q643.9 463.5 633.8 466.2M656.9 462.5Q641.4 462.6 626.1 464.6M658 462.6Q644 462.2 630 463.5M651.3 462.2Q639.7 462.4 628.6 458.7M650 462.1Q639.7 461.8 630.1 465.7M647.6 462Q640 462.3 632.7 459.9M646.1 461.9Q637.8 461.7 629.9 464M656.1 462.5Q647 457.7 640.3 450M648.2 462Q639.8 460.8 631.7 463.1M646.6 461.9Q636.4 461.6 626.3 459.5M486.1 439.3Q496.2 434.3 503.9 426M487.3 438.8Q494.6 438.1 501.9 439.9M477.1 443.2Q488.8 435.3 496 423.3M478.4 442.7Q493.5 444 506.7 451.5M480.2 441.9Q489.3 436.9 496.2 429.1M481 441.5Q490.2 437.8 499.8 435M489 438.1Q495.8 436.9 502.7 437.6M476.8 443.4Q487 437.9 495.2 429.8M640.9 338.9Q632.5 341.3 624.8 345.4M639.1 339Q629 338.2 620 333.2M639.4 339Q631.5 339.2 623.9 341.1M641.6 338.8Q628.2 341.1 615 338.4M636.7 339.2Q626.8 341.3 617.3 344.7M642.6 338.8Q633.4 338.3 625 334.4M632.9 339.4Q625.7 340.2 618.8 338M634.5 339.3Q623.7 339.7 613.2 337M641.3 338.9Q630.1 342.7 619.3 347.4M670.1 309.1Q667.3 326.6 672.8 343.6M669 310.9Q664 325.4 665.8 340.6M662.8 321.2Q658.4 328.8 656.2 337.2M667 314.2Q661.8 323.5 658.6 333.7M668.1 312.4Q668.3 324.7 671.3 336.7M668.4 311.9Q656.1 318.6 643.2 324.1M662.5 321.7Q654.4 330.3 645.3 337.7M667.4 313.6Q666 325.5 668.9 337.1M669.4 310.3Q658.1 321.7 645.2 331.2M631.2 195.3Q627 186.6 625.4 177M630.4 194.6Q618.3 187.1 604.2 185.1M636.4 200Q627.2 186.9 619.9 172.7M625.2 189.9Q618.1 185.3 609.8 183.9M628.1 192.6Q621 183.6 615.1 173.7M628.9 193.2Q617.8 185.6 605.9 179.2M626.9 191.5Q618.1 183.3 610.7 173.9M626.1 190.7Q617.6 183 607 178.5M635.5 199.1Q620.6 189.3 603.1 186.1M625 189.8Q615.3 183.5 603.8 181.7M635 198.7Q625.6 187.6 619.1 174.5M633.4 197.2Q624.6 185.8 619.6 172.2M628.4 192.8Q621.8 186.7 617.7 178.7M633.5 197.3Q622.5 187 613.2 175.2M611 169.6Q603.7 164.9 595.2 163.4M616.9 173.6Q607.6 164.1 601.6 152.3M610.1 169Q604.9 164.7 598.5 162.5M614.2 171.8Q605.6 169.1 596.6 168.7M622.1 177.2Q614.5 166.5 609.2 154.5M618.8 174.9Q610.6 169 602.8 162.4M620.5 176Q609.6 170 597.7 166.1M618.4 174.6Q609.1 165.5 604.7 153.1M614.9 172.3Q606.4 166.1 596.2 164M620.5 176.1Q612.6 167.9 608.3 157.3M619 175Q604.3 170.9 589.2 169.3M616.9 173.6Q609.5 168 604.3 160.4M618.4 174.6Q605.4 171.8 592.2 170.7M616.5 173.3Q609.1 164.6 605.3 153.8M655.1 520.4Q650.8 527.7 648 535.6M663.4 510.7Q656.8 524.1 654.4 538.9M658.9 515.9Q652.5 524.4 646.9 533.4M662.4 511.9Q656.6 523.3 652.1 535.2M655.2 520.3Q650.2 525.8 648.2 533M658.6 516.3Q652.5 527 647.8 538.4M660.8 513.8Q652.7 524.1 646.4 535.6M660.1 514.6Q652.3 523.9 641.3 529M663.7 510.4Q656.4 518 647.4 523.5M663.4 510.7Q649.6 518.8 633.8 521.8M506 224.7Q516 226.4 526.1 226.3M507 225.5Q512.3 236.4 514.7 248.4M504.7 223.6Q508.3 231.2 510.6 239.3M505.2 224Q514.7 228.1 524.6 230.9M502.9 222Q508.7 232.9 509.7 245.3M511.1 229Q518.1 233.4 525.5 236.9M508.5 226.8Q512.8 232.7 515.9 239.4M510.1 228.2Q517.5 230.9 525.3 231.6M508.8 227.1Q513.5 234.1 517.3 241.6M510.9 228.9Q515.9 235 517.9 242.7M505.3 224.1Q513.7 228.8 523.2 230.6M508.5 226.8Q513.4 235.1 516.5 244.2M505.2 224Q510.4 235.3 510 247.8M501.9 221.2Q508.7 228.5 517.9 232.3M503.4 222.4Q514.3 232.1 528.1 237.2M502.3 221.5Q506.7 230.5 508.8 240.2M497.2 346.4Q503.7 341.9 511.1 339M497.3 346.3Q506.9 340.2 513.5 330.9M496.4 347.1Q505.5 343 514.9 339.8M495.2 348.1Q501 341.8 503.8 333.7M494.7 348.5Q504.2 340.3 515.6 335.1M491.4 351.2Q500.1 342.1 505.8 330.9M492.7 350.2Q500.3 340.7 504.5 329.3M495.6 347.7Q503.5 340.1 513.3 335.2M606.8 205.2Q599.5 199.6 595.2 191.5M615.5 213.5Q603.1 208.6 589.9 207.5M613.4 211.4Q606.9 203.4 601 194.8M606.7 205.1Q601.5 200.1 597.5 194.1M609 207.2Q600.1 200.6 589.7 196.6M612.7 210.8Q604.6 207.9 596.1 206.9M612.4 210.6Q603.3 205.9 593 205.3M608.4 206.7Q601.1 201.3 592.5 198.3M607.6 205.9Q601.8 199.6 598.3 191.8M653.7 545.8Q648 557.6 647.8 570.8M649.4 553.7Q645.6 562.9 643.3 572.5M648.8 554.9Q644.2 562.7 637.2 568.6M654.1 545Q642.6 555 629.6 562.8M653.5 546Q646.9 559 642.1 572.8M648.5 555.5Q642.3 563.3 635.4 570.5M650.8 551.2Q649.7 562.5 651 573.7M648.5 555.6Q646.2 562 641.5 566.9M651.3 550.2Q645.3 557.4 637.3 562.2M650.7 551.4Q649.6 559.8 650.8 568.2M652.3 548.3Q642.3 556.1 631.5 562.5M649.5 553.7Q646.5 563.1 647 573M652.4 548.3Q642.2 557.3 630.6 564.5M652.8 547.5Q651.6 561.8 655.8 575.5M649.4 553.8Q644.4 563.3 637 571.3M507.4 419.4Q515.1 418.6 522.4 416.4M507 419.4Q516.1 419.3 525 417.1M502.5 419.3Q512.4 421.6 521.1 426.7M506.1 419.4Q513.9 416.8 521.2 413.1M503.2 419.3Q514.7 422.5 524.3 429.5M506.7 419.4Q519.2 419.9 531.3 416.9M503.9 419.4Q516.2 417.8 526.5 411M503.4 419.4Q515.3 422.6 525.2 429.9M502.7 419.3Q516.3 418.9 528.5 413.1M514.5 419.5Q521.1 419.6 527.1 417M651.8 279.7Q645.2 285.1 637.4 288.2M655.4 275.6Q646.9 283.7 636.6 289.3M654.4 276.7Q645.3 282.8 635.1 287.2M653.2 278.1Q646.1 284.8 636.8 287.9M651.5 280Q644 285.2 636 289.6M658.2 272.4Q650.8 282.8 646.3 294.7M652.5 278.9Q647.8 285.9 640.8 290.5M652.3 279.1Q646.3 283.2 639.1 284.9M638.6 277.9Q630 273.2 624.1 265.4M643.2 280.1Q628.2 277.1 613 276.7M645.7 281.3Q631.3 276.8 616.1 276.4M634.1 275.8Q627.6 270.3 623.4 262.8M640.5 278.8Q628.3 273.4 615.5 269.6M633.3 275.5Q623.2 272.8 612.7 271.5M642.9 280Q632.6 278.1 622.1 277M647 281.9Q638.7 267.8 633 252.5M642.8 279.9Q626.5 279.3 610.9 284.1M637.1 277.3Q627.7 273.8 620.2 267.2M640.3 278.7Q626.9 271.7 611.9 270.5M644.4 424.7Q642.4 414.9 642.4 404.9M646.5 428.4Q639.7 420.8 630.5 416.5M645.7 427.1Q640.7 419.5 638.8 410.5M649.4 433.7Q642 427 633.5 421.6M647.4 430.1Q646.3 417.6 649.9 405.6M647.6 430.4Q639.9 422.9 631.5 416.3M650.9 436.2Q646 425.3 637 417.5M647.7 430.6Q644.6 422.1 645 413.2M648.1 431.3Q640.4 424.6 631.1 420.2M645.4 426.6Q637.8 418.8 627.7 414.9M648.6 432.2Q649.5 423.2 651.1 414.3M648.1 431.3Q644.4 423.9 638.5 417.9M633.3 213.5Q627.7 205.1 620.3 198.4M635.2 219.4Q633.6 209.7 636.1 200.3M633.1 212.7Q631.5 202.6 626 194M635.9 221.7Q635.7 208.7 637.7 195.8M636 222Q631.8 208.3 633.5 194M636.5 223.3Q629.3 212.7 618.7 205.5M634.8 218.1Q632.9 205.2 625.4 194.5M636.8 224.3Q635.2 213.2 635.6 202M635.4 219.9Q632.1 206.9 624.2 196M635.3 219.6Q632.8 208 625.7 198.5M640.5 464.4Q633.5 472.5 629.4 482.4M642.4 462.5Q635.6 470.6 632.7 480.6M644.1 460.7Q636.8 467.8 627.7 472.5M645.1 459.7Q635.5 467.5 624.8 473.5M646.5 458.3Q639.6 469.5 634 481.4M639.6 465.4Q634.6 474.1 631.7 483.6M639.7 465.2Q634.6 470.9 628 474.9M638.8 466.2Q633.5 473.7 630 482.2M643.5 461.4Q632.3 467.2 619.9 469.9M644.2 460.6Q633 468.1 619.9 471.3M646.2 458.5Q635.5 464 623.9 467.1M646.4 458.4Q644.1 468.7 643.8 479.2M484.8 268.9Q494.1 272.4 500.9 279.6M482.4 268.7Q495.2 264.2 505.5 255.3M492.7 269.3Q501.2 269.3 509 272.5M491.7 269.3Q504 270 515.8 266.2M494.9 269.5Q504.6 272.8 513.4 277.9M489.8 269.2Q503.5 269.9 517.2 268.9M487.4 269Q496.6 272.4 503.8 279M495.3 269.5Q504.9 269.8 514.5 268.6M481.7 268.7Q497.8 268.6 512.6 262.4M635.9 580.4Q625.2 580.3 615 583.6M643 581.4Q631.7 579.2 621.8 573.3M646.1 581.8Q630 584.4 615.2 591.4M640.6 581.1Q630.4 583.2 620.7 587.1M634.9 580.3Q622.8 578.8 612 573.2M631.8 579.9Q623.3 580.5 614.9 582.5M632.8 580Q621.9 576.2 612.1 569.8M648.9 582.1Q630.4 577.8 614.2 568M493.2 165.3Q506.8 170.5 520.9 174M502.3 169.6Q510.5 171.5 518.9 171.8M492.4 165Q504.1 171.6 517.4 173.6M499.7 168.4Q510.9 170 522.1 169.6M481.3 266.1Q486 278 485.4 290.8M483.3 268.4Q491.7 275.7 502.2 279.4M482.8 267.8Q490.2 279.6 492.7 293.3M488.5 274.3Q494.3 279.9 497.1 287.6M481 265.8Q489.2 275.5 500.8 280.8M480.6 265.3Q489.4 274.4 495.5 285.4M482.3 267.2Q490.7 276.7 502.2 282.3M488.1 273.8Q491.5 280 494 286.5M487.6 273.3Q493.9 283.3 497.5 294.5M487.9 273.6Q496.9 279.5 507.2 282M624.5 271.7Q618.6 267.2 615.3 260.6M626.4 273Q619 266.9 614.4 258.5M627.7 273.9Q620.7 270.4 613.1 268.2M632.9 277.5Q624 271.5 613.5 269M632.3 277Q621.9 268.5 614.9 257M629.4 275.1Q622.2 273.4 614.9 272.8M628.5 274.4Q620.5 268.5 615.2 260.1M629.9 275.4Q618.8 272.2 607.2 272.2M492.7 512.8Q508.5 518.3 521.2 529.3M498.3 511Q510.7 501.5 521.3 490.1M506.8 508.2Q513.2 502.2 519.1 495.6M501.5 510Q513 500 522.9 488.5M499.6 510.6Q514.1 513.3 526.9 520.5M498.8 510.8Q508.8 504.8 515.3 495.2M504.6 508.9Q514 509.6 522.9 512.6M503.5 509.3Q515.4 505.7 527.7 503.4M494.6 512.2Q513.1 514.6 529.1 524.2M494.8 512.1Q505.5 506.5 512.6 496.8M501 510.1Q510.9 507.5 519 501.2M647.8 573.8Q637 581.7 628.3 591.8M652.6 572.1Q639.6 570.6 626.9 567.5M646.7 574.1Q636.6 578.2 628.3 585.1M652.7 572Q641.6 576.9 631.4 583.7M651.1 572.6Q639.2 581.3 631.2 593.6M643.2 575.4Q632.2 577.8 620.9 578.7M651.1 572.6Q638.7 576.7 625.8 578.3M653.8 571.6Q642.7 574.1 631.2 574.2M653.2 571.8Q641.7 577.8 632.5 586.9M642.5 575.6Q634.2 578 625.6 577.8M652.3 572.2Q640.5 582.7 631.7 595.9M492 582.2Q499.7 589.6 508.1 596M493 583.5Q497.2 592.2 498.9 601.8M494 585Q502.7 593.3 513.4 598.9M485.6 573.2Q493.1 583.1 495.4 595.3M487 575.2Q498.9 585.6 513.8 590.8M493.7 584.5Q499.9 590.7 502.7 599M487.9 576.4Q493.3 588.3 497.3 600.7M489.8 579.1Q502.2 588.1 516.3 594.1M536.9 232.2Q545 235.4 551.5 241.3M531.7 229.3Q541.4 232.5 551.5 231.4M526.3 226.3Q535.5 234 542.5 243.7M534.3 230.7Q542.9 238 550.6 246.3M527.3 226.8Q537.8 229.5 548.6 229.5M536.3 231.9Q543.8 235.7 552.2 236.6M529.8 228.2Q535.6 235 539.9 242.9M535.2 231.2Q542.3 232.9 549.5 234M528.4 227.4Q540.7 233.7 553.9 237.7M528.6 250Q533.8 254.8 540 258.4M524.3 246Q533.1 254.3 537.9 265.3M524.6 246.3Q532 256 535.1 267.9M527 248.5Q533.5 251.7 540.6 253M528.2 249.6Q534.5 255.9 539.5 263.3M522.3 244.1Q531.7 253.2 543.8 257.9M525 246.6Q532.5 255.3 542.4 260.9M529.3 250.6Q535.8 257.4 544 262.1M527.1 248.6Q532.2 254.2 538.9 257.6M523.8 245.5Q531 253.8 536.6 263.3M530.8 252Q536 256.1 541.8 259M523.6 245.3Q529 251.3 533 258.3M494.5 499Q498.8 505.6 505.1 510.4M490.5 492.9Q492 503.8 491.7 514.7M489.5 491.4Q495.3 501.1 504.1 508.3M494.4 498.9Q498.8 509.1 500.2 520.1M486.4 486.6Q494.8 498.1 499.5 511.6M491.9 495.1Q499.4 503.8 508.1 511.3M494.4 499Q500.4 507.3 508.2 513.9M489 490.6Q494.7 500.5 496 511.8M487.8 488.7Q499.8 499.2 514.3 506M487 487.5Q496.2 493.8 505.9 499.1M488.1 489.1Q492.8 503.6 496 518.4M494.4 498.9Q499.7 505.6 505.8 511.8M493.6 497.7Q499.7 507.8 502.2 519.4M487.2 487.8Q498.9 495.9 511.5 502.4M492.3 495.6Q497.8 506.2 498.8 518.1M671.4 276.5Q658.8 279.2 648.7 287.1M668.3 275.5Q657.6 271.9 646.4 271M664.5 274.4Q656.8 269.5 650.8 262.6M670.1 276.1Q659.7 274.3 649.2 273.6M656.7 272Q646.3 267.9 637.9 260.3M659.2 272.8Q647.6 267.3 639.4 257.3M656.5 272Q647.4 269.2 638 268.5M659.5 272.9Q649.4 265.8 640.4 257.2M665.8 274.8Q651 274.5 636.6 278.5M667 275.1Q656.9 267.1 650.3 256.1M664.9 274.5Q655.7 276.2 646.7 279.1M668.8 275.7Q657.1 270.6 646.6 263.2M482.2 495Q495.7 501.4 510.7 501.3M491 499.5Q502.1 501.9 513.4 501.8M483.1 495.5Q494.2 502.9 503 512.9M481 494.4Q492.7 498.6 505.1 498.7M479.1 493.4Q487.5 502.1 493.9 512.3M483.1 495.5Q495.8 499.6 508.9 502.2M477.2 492.4Q495.1 497 513.5 495.1M484.4 496.1Q494.5 505.9 501.2 518.2M478.4 493.1Q489.8 505 500.1 517.9M484.9 496.4Q493.5 503 501.2 510.5M651.4 156.3Q640.3 158.2 630.7 163.9M645.5 155.1Q634.9 153 625.8 147.4M647.3 155.5Q638.1 151.2 629.6 145.5M648.6 155.7Q640.9 155.1 634.2 151.4M647.5 155.5Q636.4 155.4 626 159.5M653 156.6Q643.7 156.8 634.5 158.1M648.1 155.6Q638.3 154.8 628.5 155.2M647.8 155.6Q637 151.4 627.5 144.9M650.8 156.2Q640.8 154.2 630.5 154.2M663.4 323.4Q662.6 333 662.6 342.7M664.9 320.4Q662.9 333.3 663.2 346.3M662.1 326.1Q659.5 334.3 658 342.9M663.4 323.5Q657.6 333.1 649.4 340.7M666.9 316.3Q666.2 329.9 671.2 342.6M667.9 314.3Q660.7 326.9 649 335.5M661.9 326.5Q658.2 332.6 652.4 336.7M665.5 319.2Q661.2 332.1 659.8 345.7M656.6 470Q646.6 465.6 636 462.8M652.4 467.3Q641.5 462.4 629.8 460.6M652.4 467.3Q643.8 460.6 638.6 451M651.4 466.7Q643.5 460 638.3 451M654.5 468.7Q641.5 465 627.9 464.7M647.7 464.3Q643.2 458.9 639.9 452.8M647 463.8Q640.9 459.8 634.1 457.5M653.4 468Q643.2 465.6 632.7 466.1M651.3 466.6Q640.8 464.4 630.2 465.2M656.9 470.3Q647.6 465.8 641 457.9M664.5 456.1Q660.5 443.3 658.5 430.2M662.9 451.9Q660.6 438.7 662.2 425.3M662.6 451.3Q661.9 440.6 664.1 430M663.4 453.2Q654.7 446.9 645 442.4M662.5 451Q656.8 440.6 648.6 432.1M663.7 454Q667.5 440.2 673.2 427.1M659.9 444.8Q656.5 434.6 649 426.9M662 449.9Q657.3 438 649.1 428.2M664.6 456.2Q654.1 449.5 643 444M664 454.8Q656.7 442.2 645 433.5M659.7 444.4Q654.5 437.2 647.5 431.6M664.5 456Q660.9 443 662.3 429.6M659.4 443.5Q653 435.4 644.9 429M662.9 452.2Q664.8 438.5 669.2 425.5M662.6 451.4Q655.7 441.7 646.5 434.1M514.2 299.5Q522.6 298.7 531.1 298.8M509.7 300.1Q519.4 297 528.1 291.7M506.9 300.5Q516 301.9 524.8 304.9M513.4 299.6Q523.2 298.3 532.9 299.7M510.5 300Q517.5 298 524.2 295.4M505.8 300.6Q515.3 298.3 524.2 294M512 299.8Q519.5 298.8 526.7 300.9M506.7 300.5Q518.5 296.9 529.6 291.8M506.1 300.6Q515.2 300.8 523.7 303.9M501.5 301.1Q516.4 299.5 529.2 291.6M503 301Q513.3 299.3 523.7 300.1M478.4 446.8Q484.7 455.1 492.4 462M481.9 457.1Q486.1 467.6 486.4 478.8M478.1 446Q484.9 455 492.6 463.2M477 442.9Q481.5 456.3 480.9 470.4M477.3 443.8Q485 459 494.4 473.2M476.7 441.9Q482.1 453.6 489.1 464.5M477.7 444.8Q489.1 453.9 501.7 461.4M477 443Q474.1 456.5 466.6 468.2M478.5 447Q481.8 460.2 481.2 473.8M477 443Q480.8 455.2 488 465.8M478.8 448.2Q479.7 461.6 478.6 474.9M481 454.5Q485 465.5 490.2 476M478.2 446.2Q482.4 459.9 481.8 474.2M641.1 169.5Q629.9 168.8 619.6 173.2M632.6 167.4Q626 165.2 620.1 161.7M633.4 167.6Q623.8 163 615.8 156.1M640.5 169.4Q631.1 164.2 622.7 157.5M641.4 169.6Q628 167.1 614.4 166.1M642.1 169.8Q631.2 161.7 622.3 151.5M638.6 168.9Q631 164.8 625.2 158.4M645.8 170.7Q635 168.2 624.1 168.4M645.4 170.6Q632.9 165.1 622.6 156.1M639.7 169.2Q629.7 167.7 620.1 170.5M637.5 168.6Q629.2 166 620.5 167.5M638.4 168.8Q630.1 167.1 623.1 162.5M633.1 167.5Q625.8 165.7 619.6 161.5M511.3 579.4Q523.2 570.5 533.6 559.8M521.6 573.2Q530.1 569.4 539 566.7M514.3 577.6Q522.4 574 528.3 567.4M520 574.2Q526.8 570 532 563.8M520.9 573.7Q529.7 567.8 539.8 564.8M522.1 573Q529.8 567.9 538.5 564.6M519.1 574.8Q528.7 571.1 538.9 570.2M517.8 575.5Q525.2 567.7 531.7 559.3M513.2 578.3Q522.1 574.9 531.6 574M511.7 579.2Q519.9 570.6 525.7 560.3M515 577.2Q523.8 573.9 533 573.2M661.2 488.2Q657.8 493.7 656.9 500.1M661.4 487.9Q654.5 494.8 646.3 500.1M662.9 485.4Q658.7 491.1 657.4 498.2M661.5 487.7Q656.5 496.5 648.2 502.3M662.4 486.2Q658.2 491.6 652.3 495.2M663.2 485Q659.7 493.1 657.8 501.6M666.7 479.4Q658.8 490.7 648 499.3M662.7 485.7Q656 491 648.7 495.5M663.3 484.8Q662 492.2 661.3 499.7M665.1 481.9Q656.8 488.8 647.1 493.6M663.9 483.9Q658 493.6 648.7 500.1M662.7 421.2Q651.8 412.9 642.8 402.6M656.3 416.7Q646 409.9 633.9 407.3M661.8 420.5Q651.4 412.4 638.5 409.6M657.4 417.5Q652.4 411.3 648.1 404.5M665.5 423.1Q653.5 414.2 639.7 408.3M668.7 425.3Q659.4 412.9 651.4 399.6M663.2 421.5Q654.8 409.3 649.7 395.5M663.1 421.4Q649.8 412.6 641.3 399.1M655.9 416.4Q646.4 410.8 635.9 407.7M663.6 421.7Q652.1 412.9 637.9 409.9M666 423.4Q654.8 421.8 644 425.3M663.4 421.6Q652.6 412 645.7 399.4M651 400.4Q643.1 406.4 633.7 409.8M650.6 401Q645.5 408.3 639.6 415.1M650.9 400.7Q642.4 411.6 639.4 425.1M649.5 402.8Q644.8 411.3 637.4 417.7M654.2 395.6Q648.2 409 647.4 423.5M650.6 401.1Q650 414.6 651.7 428M652.2 398.6Q650.9 410.3 651.3 422.1M647.3 406.1Q639.8 413.3 630.6 418.2M653.6 396.4Q639.8 403.4 624.5 404.9M655.1 394.1Q642.9 397.5 630.2 397.7M665 196.7Q653.3 194.6 641.5 194.4M662.1 195.3Q651.9 186.3 645.5 174.3M661.1 194.8Q650.4 192.6 639.4 192.6M661.6 195Q652.4 191.7 642.8 192.9M664 196.2Q654.2 194.9 644.3 195.2M661.4 194.9Q653.2 190.8 644.1 190.5M665 196.7Q656 185.5 652.9 171.5M655.7 192.1Q649.1 187.5 641.2 185.9M665.6 197Q656.1 186.7 652 173.3M658 193.2Q650.9 190 645.2 184.7M660.1 194.3Q652.1 188.8 644.9 182.2M661.5 195Q650.9 187.5 641.5 178.6M637.7 473.4Q628 474 618.8 476.9M634.1 472.6Q626.5 470.4 618.7 471.8M645.4 475.1Q633.2 472.4 623 465M641.6 474.2Q630.1 470.9 618.2 472.4M642.2 474.4Q631.9 471.5 623.5 465M634.1 472.6Q625.1 470.4 617.9 464.5M633.4 472.4Q625.1 473.8 617.1 476.2M644.2 474.8Q631.1 468.1 621.5 456.9M644 474.7Q631.6 469.6 620.4 462M643.6 474.7Q632 471.3 620.8 466.7M490.7 396.8Q500.4 397.4 510 395.5M500 401.9Q507.9 408.5 514.5 416.5M497.8 400.7Q505.2 404.3 513.1 406.5M490.4 396.6Q499.6 401.1 509.6 403.4M489.6 396.2Q498.9 406.4 507.2 417.5M501.1 402.5Q506.6 405.7 511.1 410.1M497.8 400.7Q506.9 402.8 516.2 403.1M490.4 396.7Q500.1 396.4 509.6 395.2M497.5 400.5Q506.1 406.3 511.3 415.2M489.9 396.4Q500.8 400.7 512.6 401.6M499.9 401.8Q508.3 405.7 514.3 412.8M497.5 400.6Q505 404.1 513.3 404.1M490.3 396.6Q499.2 408.3 505.4 421.6M493.6 398.4Q501.6 402.2 510.4 402.8M489.1 395.9Q497.4 403.6 502.8 413.5M498.3 401Q507.1 405.6 516.5 408.9M489.8 396.3Q496.9 403.3 501.5 412.3M493.5 398.4Q503.3 400.4 513.1 398.8" fill="none" stroke="#367560" stroke-width="1.1" stroke-linecap="round"/><path d="M480.3 429.6Q482.6 441.3 479.6 452.9M479.6 427.1Q483.8 434.7 488.6 441.9M479.1 425.3Q484.1 433.4 491.8 439M657.2 410.6Q651.6 419.5 647.4 429.1M661.9 524.7Q656.8 519 649.8 515.8M671 533.8Q662.7 524.9 658.1 513.6M667.6 530.4Q656.9 522.3 644.1 518.4M489.7 320Q497.1 311.1 500.7 300.1M497.4 313.8Q505.5 309.7 514.3 307.5M488.2 321.2Q493.5 306.8 496.7 291.9M665.6 490.1Q655.4 491.7 645.4 488.7M671.8 486.7Q665.3 496.6 660 507.3M506.5 288.1Q510.1 278.2 510.6 267.6M497.3 436.2Q505 430.2 509.8 421.6M501.2 434Q511 430.3 518.3 422.7M493.5 438.3Q503.6 435 514.1 435M484.7 191.1Q494 188.7 503.5 187.7M475.4 194.4Q485.3 189.4 493.1 181.5M656.3 308.7Q647.4 305.3 637.9 303.9M617.2 231.4Q606.5 224.8 595.1 219.4M614.8 229.6Q606.9 222.8 602.3 213.4M503.5 379.7Q507.3 385.1 509 391.4M653 361.6Q645.4 352.6 635.5 346.2M655.5 364.5Q644.5 356.2 631.2 352.4M650.1 358.3Q643.9 353.3 637.1 349.1M478.6 182.4Q491.9 187.7 501.9 198M508.9 363.5Q515.7 369.9 519.9 378.2M507.9 362.5Q518 368.2 529.2 371.4M505.3 360Q516.5 365.2 528.3 368.8M641.7 326Q629.5 330.3 616.7 332.5M639 327.4Q631.3 330.3 625.5 336.2M644 324.7Q636.1 334 632.6 345.7M638.6 567.4Q631.5 575.4 626.7 584.9M630 527.1Q620.7 528.1 612.1 531.8M618.7 527.5Q610.7 529.4 603.1 532.3M627.4 527.2Q619 525.6 610.9 522.6M652.1 232.9Q642.6 238.3 634.3 245.3M654 232Q642.9 239.4 629.7 241M669.2 569.4Q660.8 570 652.6 572.1M671.8 570.1Q660.5 568.9 649.4 571.6M484 381.3Q489.5 369 491.6 355.8M628.6 545.3Q616.6 546.1 604.7 544M492.2 244.4Q501.8 251 509.9 259.5M486.8 242.1Q498.8 240.8 510.2 236.9M488.3 242.7Q498 246.9 506.5 253.2M487.9 242.6Q498.5 249 506.3 258.6M526.1 260Q534.2 262.7 541.9 266.5M649.4 398.8Q643.8 391.3 639.1 383.2M642.9 175.8Q634 190.2 627 205.7M638.1 183.3Q631.9 190.9 623.3 195.5M635 188.1Q629.3 196.2 626.2 205.5M513.8 435.9Q519.7 442.8 524.1 450.7M639.2 509Q628 512.7 616.2 512.1M631.8 499.9Q622.7 504.4 616.5 512.4M638.7 497.9Q624.4 507.5 614.3 521.4M508.6 308.6Q515.8 302.7 524.9 300.7M509 308.3Q513.8 303.8 519.7 301M527.7 283.8Q535.6 279.2 544.6 278.2M657.4 242Q653.3 233.1 646.8 226M638.6 517.5Q629.9 505.8 616.9 499.4M501.2 278.7Q514.8 286.7 530.5 288.6M508.3 556.6Q511.8 547.8 511.1 538.3M501.7 190.5Q509.1 200.3 518.4 208.4M506.6 197.2Q514.8 207.4 526.4 213.5M485.4 219Q498.7 222.2 509.7 230.1M492.2 218.4Q500.1 220 507.5 223.1M496.1 218.1Q504.2 216.7 511.8 213.9M642.3 390.8Q633.9 391.7 626.8 396.1M653.9 353.9Q642.5 345.9 630.1 339.6M657.7 359.7Q656.5 343.2 658.5 326.8M657.8 359.9Q651.5 345.3 650.8 329.4M655 355.6Q643.2 343.3 627.6 336.3M489.7 158.8Q503.5 159.3 517.2 158.5M491.8 159.3Q501.2 162.6 511.2 162.2M613.3 231.3Q604.2 224.8 594.4 219.7M620.9 238Q612.3 229.3 606.1 218.7M616.4 234Q607.7 227.8 598.1 223.1M507.2 464.1Q513.3 458.6 518.5 452.3M508.7 463Q513.6 459.8 519.1 457.6M504.9 465.9Q511.2 461.4 518.6 458.8M476.8 479.8Q485 491.6 490.1 505M639.9 394.6Q631.8 389.1 622.1 387.5M642.1 396.2Q635.1 388.5 630.7 379.2M656.5 540.8Q651.1 535.8 645.2 531.5M662.3 158.6Q657 149.3 653.1 139.3M665.5 163.4Q660.5 155.3 653.2 149.5M668 167.1Q661.8 156.1 660.2 143.6M666.5 164.9Q657.5 156.2 646.3 150.5M525.1 560Q532.3 555.6 537.3 549M520.7 563.1Q530.2 554.8 535 543.2M521.1 562.8Q533.1 556.2 546.4 553.3M522.7 561.7Q527.5 555.5 530.6 548.4M494.7 338.4Q504.6 335.5 514.8 335.1M487.8 340.2Q501.2 336.6 513 329.5M483.3 341.3Q494.1 339 505.1 339.5M495.9 338.1Q506.3 334.4 517.3 335.6M618.2 242Q611.3 236.7 603.9 232.1M623.4 246.3Q615.5 235.3 611.4 222.4M668.1 588.5Q656 600.4 639.9 606.1M489.3 434.9Q499 436.6 508.8 436.9M517.8 508.1Q527.5 510.9 537.7 510.7M515.8 507.3Q522.9 511.1 528.8 516.6M518.5 508.4Q524.6 510.1 529.9 513.6M654.3 384.7Q645.7 382 637.6 378.3M666.5 451.5Q653.1 446.2 638.7 446.4M511.9 492.6Q520.3 488.6 527.9 483.4M506.3 494.5Q519.4 493.2 532 496.7M514.5 491.7Q522.7 489.2 531.2 490.4M509.6 493.3Q517.5 488.9 523.4 482M663.6 156.3Q660.7 145.8 660.2 134.8M488.4 509Q491.2 498.8 493.2 488.4M486.7 512.8Q495.5 502.3 508.1 496.8M487.6 510.7Q491 497.6 492 484.2M643 533.7Q636.7 528.4 632.4 521.2M635.8 411.6Q629.2 408 622 406.1M642.3 417.4Q632.2 408.5 624 397.6M637.3 413Q632.1 408.4 626.3 404.5M642 417.1Q634.1 406.4 631.6 393.3M639 414.5Q631.8 407.4 622.4 403.6M632.8 199.5Q629.4 188.6 629.2 177.2M486 283.9Q498.6 285.4 511.3 284.9M494 285.1Q507.6 286.6 520.1 292M487.1 284Q500.2 279.6 512.5 273.4M631.1 541.5Q622.4 546.6 612.5 548.2M624 547.2Q618.1 552 610.7 554.2M625 546.4Q618 553.2 614.6 562.4M502.9 202.6Q510.3 196.2 519.2 192.2M503.6 201.3Q507.1 192.1 508.2 182.2M671.7 300.2Q664.9 309 655.4 314.9M665.4 307.7Q662.3 313.6 662 320.3M667.5 305.2Q664.3 314.2 663.9 323.7M664.7 308.7Q656.4 314.2 647.3 318.2M665.2 308Q660 313.5 653.1 316.7M664.7 308.6Q657.9 315.7 654.7 325.1M665.4 307.8Q660.7 315.6 653.1 320.6M671.3 300.7Q662.9 304.5 653.7 304.6M620 192.8Q610.1 192.6 600.7 195.7M615.5 191.8Q607.1 190.4 599.6 186.2M613 191.3Q601 189.2 589.3 192.7M640.8 499.3Q629.8 503.5 618.4 506M505.4 377.1Q516.9 383.8 527.6 391.6M640.5 348.1Q630.5 349.7 620.4 350M488.9 296.2Q498.5 293.5 508.4 294.6M489 296.1Q504.4 292.4 520.4 292.8M491 294.3Q499.7 289.7 509.6 289.4M511.1 334.2Q520 336.1 529.1 335.8M523.5 553.5Q529.7 545.3 533.1 535.7M617.7 527.4Q609.2 531.7 601.3 536.9M626.4 523.8Q613.4 526.6 600.2 524.5M623.7 525Q615.9 527 609.6 531.9M620.1 526.4Q613.3 529.5 608.3 535M492.2 300.7Q495.4 312.6 497.3 324.7M492.9 303Q498.9 311.1 505.6 318.6M492.9 302.9Q491.2 313 486.2 322M627.9 296.8Q618.5 297.7 609.4 300.3M635.3 296.1Q622 300.9 612.3 311.3M633.3 296.3Q620.6 294.9 608.7 290.4M645.2 428.8Q636.9 423.7 630.8 416.3M648.8 430.3Q638.3 427.7 627.6 428.7M651.2 431.2Q642 427.5 634 421.5M652.4 431.7Q639.9 432.7 627.6 435.3M632.5 474Q623.9 476.6 616.1 481M635.3 473.9Q624.2 473 613.3 471M630.6 474.2Q621 476.9 612.3 481.9M635 473.9Q625 475.2 615.3 472.1M511.4 381.8Q517.9 385.9 523.8 391M500.2 377.9Q514 381.3 524.8 390.5M492.5 498.5Q501.6 506.5 506.5 517.7M501.5 504.9Q510.7 513 518.2 522.7M499.4 503.4Q509.9 508.7 517.1 518M530.6 534.4Q541.3 530.4 551.4 525M522.5 536.8Q537.2 531.4 549 521.2M530.1 534.5Q538 530.9 546.6 531.3M629.1 256.1Q615.7 251.3 601.6 249.1M628.6 255.7Q618.5 250.4 607.2 249.9M639.1 233.4Q632.1 226.4 627.6 217.6M638.7 233Q627.6 226.1 614.8 224.3M528 515.8Q535.1 521.5 543 525.8M522.9 511.2Q532.1 518 543.1 521.5M522.6 510.9Q529.5 516.4 534.1 523.9M639.9 311Q632.2 313.2 626.3 318.5M637.9 311.9Q629.6 315.6 623.5 322.4M642.7 309.9Q633.3 313.6 625.3 319.8M647.5 307.9Q637.3 310.4 627 308.4M476.7 376.5Q485.1 386.4 495.9 393.7M473.7 371.7Q478.4 382.3 487.5 389.7M473.2 370.9Q479.5 383.1 489.4 392.5M479 380.3Q483.5 390.6 483.9 401.7M481.4 384.2Q485.5 390.1 491.5 394.1M476.5 376.3Q479.7 385.7 479 395.6M510.6 248.1Q517.5 241.8 523.7 234.7M509.3 248.9Q519.6 241.6 531.6 237.7M637 419.5Q626.6 422.7 615.9 424.5M647.9 415.7Q637.6 423.6 630.3 434.3M481.6 215.6Q482.1 205.8 480.8 196.2M481.3 216.6Q485.3 207.4 485.9 197.4M498.3 538.9Q509.1 534.5 520.8 534.9M499.7 538.5Q506.2 534.5 511.2 528.7M659.9 287.7Q658 299.2 657.5 310.9M640.6 273.1Q633.4 267.7 627.2 261.2M635 270.1Q629.6 265.4 626.5 259.1M648.2 237.3Q634.6 235.8 621.4 232.2M637.9 241.1Q628 242.2 618.6 239.1M642.4 239.4Q630.6 244.1 620.2 251.4M639.3 240.5Q629 243.1 620.7 249.8M482.6 544Q490.2 537.4 500 534.9M484.3 542.6Q491.5 536.4 499.9 532.2M481.8 544.6Q491.5 537.2 500 528.5M507.4 205.8Q517 210.8 527.7 211.6M505.2 166.7Q514.3 169.2 521.4 175.3M497.3 163.6Q508.7 171.8 516.3 183.6M605.5 220.6Q594.5 219.1 584 222.4M613.9 220.8Q605 224.2 596.5 228.4M647.1 440.8Q638.8 447.4 631.9 455.4M645.9 441.6Q635 446.1 623.3 445.8M641.1 444.6Q634.6 450.9 629.1 458M666.4 438.9Q659.9 446.4 652 452.2M661.8 444.3Q655.7 450.5 648.4 455.2M667.3 553.5Q656.7 547 649.4 537M668.9 553.8Q659.4 547 650.5 539.5M670 554Q659.9 548.6 652.9 539.5M664.2 356.1Q656.1 349.4 646.1 346.2M663.2 355.3Q655 344.4 649.6 331.9M630.9 268.2Q622.4 269.3 614.6 272.7M639.6 269.5Q627.4 269.8 615.9 274M630.2 268.1Q622.4 266.6 615.1 263.6M528.9 550.1Q537.9 552.4 547.1 550.5M504.2 262.3Q512.8 268.7 523.2 271.4M500.4 354.2Q516.3 356.7 532.1 353.6M504.9 354.7Q520.4 357.9 533.5 366.7M502.2 354.4Q515.3 363.4 526.5 374.6M505.5 354.8Q516.2 361.5 524.6 370.8M503.1 354.5Q517.3 354.6 531.2 352M495.9 480.3Q505.4 468.6 511 454.6M500.5 476.8Q510.2 468.2 518.5 458.2M495.2 480.9Q504.5 478.7 514.1 479.1M480.2 187.5Q491.6 188.9 502.9 186.5M488.6 570.3Q497.1 566.4 504.4 560.5M490.6 570.4Q501.2 569.6 511.4 567M484.4 570.2Q495.4 569.1 505.8 572.9M494.1 570.4Q506.5 571.4 518.1 566.8M630.6 568.2Q623.8 568.3 617 569.1M631.9 568.4Q620.7 566.4 611 560.5M498.7 327.7Q511 325 521.1 317.4M505.5 327.2Q515 327.5 523.4 331.8M495.1 327.9Q506.6 333.3 517.1 340.6M619.3 204.5Q611.6 215.8 604.9 227.7M616.5 206.5Q606.1 214.2 594.2 219M614.5 207.8Q606.9 214.8 601.7 223.7M613.3 208.6Q604.5 216.8 599.6 227.7M479.8 503.3Q494 502 507.8 498.6M478.5 502.7Q490.6 508.8 500.8 517.7M484.7 505.6Q496 508.3 507.5 508.5M661.8 477.9Q659.4 471.1 656.2 464.7M665.1 487Q662.9 475.4 665.4 463.9M664.9 486.4Q655.6 477.2 643.3 472.8M521.1 248.6Q527.6 256.6 536.9 260.9M524.2 251.5Q534.4 257.5 545.8 260.9M633.5 290.6Q627.9 297.2 623.6 304.6M635.9 289.1Q625.4 292 614.6 291.8M628.9 293.6Q623.7 296.9 619.2 301.2M632.4 291.3Q626.6 294.4 620.1 295M512.9 483.7Q520.3 487.2 525.6 493.3M489.3 221.7Q499.1 219.8 508.9 219.2M496.2 264.1Q502.2 252.9 503.3 240.2M498.9 261.3Q506.3 253.9 516.2 250.3M657.6 413Q650.5 407 642.2 402.8M658.4 414.8Q657.3 406.2 658.9 397.7M645.5 376.6Q634.8 367.9 622.5 361.8M641.7 373.8Q635.1 369.8 627.5 368.6M645.5 376.6Q638.7 368.7 635.9 358.7M644.3 375.7Q637.7 368.9 632.9 360.7M497.2 448.4Q505.6 445 514.5 444.5M489.1 454.6Q495.8 441.5 497.1 426.9M497.8 447.9Q503.5 442 507.1 434.6M495.7 449.6Q500.4 443.5 504.6 437.1M497.6 448.1Q505.4 444.3 514 442.7M499.2 446.9Q504.4 440.2 507.2 432.2M529.2 196.1Q538.5 192.9 546.5 187.4M522 197.4Q534.9 193.7 547.1 188.1M527.1 196.5Q536.1 195.2 545.1 194.9M507 179.9Q517.9 176.6 529.2 177.9M484.2 164.2Q493.3 153.4 505.9 147.3M486.3 161.5Q491.6 155.3 495 147.9M516.5 200.9Q523.5 196.2 530 190.9M515.7 201.3Q525 195.6 532.1 187.3M522.6 198.4Q530.1 195.7 535.9 190.4M523.3 198.1Q529.2 196.3 535.3 195.7M482.8 305.9Q492.8 313.4 502.1 321.7M476.7 303.9Q490.3 307 504 303.8M654.5 189.6Q645.8 191.8 637 189.8M655.3 189.4Q648.5 194.2 643.2 200.7M479.8 387.2Q486.9 393.9 490.5 403M473.8 383.1Q487.6 387.5 502.2 388.2M483.6 389.8Q488.8 394.9 492.4 401.2M480.4 387.6Q485.2 393 489.2 399M481.8 520.6Q490.2 525.1 499.3 527.8M476.8 516.9Q480.8 533.5 481.2 550.6M479 518.5Q487.5 527.5 493.9 538M642.2 198.7Q635.7 207.9 627.1 215.2M641.8 199.2Q636.1 207.7 628.5 214.4M642.4 198.4Q636.8 206.4 628.6 211.6M637.9 196.5Q630.2 184.9 620.2 175.3M637.3 195.6Q630.8 184.1 625.6 171.9M638.2 196.9Q629.5 187.7 618.6 181M510.3 436.2Q520.8 439.4 530.8 444.1M508.1 435.9Q516.6 437.2 523.8 441.7M498.9 434.7Q512.6 437.2 526.4 434.8M509.9 436.1Q521.5 435.5 532.8 432.3M483 463.5Q487 472.5 487.4 482.4M481.4 461.2Q486.4 468 492.3 474M482.9 463.3Q488.5 469.2 495.3 473.8M503.7 348.6Q513.1 340.2 520.5 330.1M503.2 348.8Q510.3 344.5 516 338.3M644.4 347.2Q637.5 350.1 630.1 349.8M643.1 323.7Q636.8 333.4 631.6 343.6M645.3 321.6Q638.2 334.4 637.4 349M637.1 302.3Q627 307.4 618.1 314.3M637.8 302Q627.5 307.7 615.9 309.5M649.3 296.9Q638 307.9 629.5 321.2M651.3 296Q635.1 301.7 622.4 313.5M485.4 479Q491.5 484.7 499.4 487.4M480 472.8Q487.1 483.7 490.5 496.1M625.4 509.4Q618.5 503.8 613.1 496.8M621.1 507Q609.6 503.2 597.8 501.1M637.5 518Q628.3 508.1 622.6 495.9M639.3 519.4Q627.3 515.1 614.8 512.4M655.8 535Q646.9 541.8 641.7 551.8M652.2 536.9Q641.5 544.2 634.6 555.3M655.5 535.2Q641.2 536.2 627 534.6M513.3 467.8Q526.3 464.6 537.7 457.4M633.3 579.9Q626 582.3 618.4 582.9M642.1 575.4Q631.8 583.5 624.6 594.5M651.5 447.2Q639.9 447.4 628.4 448.8M653.6 447.3Q641.8 441.2 633.2 431.3M648 322.7Q643.8 317.6 642.3 311.2M648.8 323.7Q643.4 319.4 637.6 315.7M654 330Q647.7 322.4 640.1 316M648 322.8Q642.5 313.8 639.9 303.6M650.4 325.6Q644.5 319.4 638 313.8M495.8 409.7Q505.9 407.5 516.3 407.6M498.9 408Q510.9 403.3 523.6 404.3M508.6 417Q516.9 416.4 524.7 413.2M498.7 418.9Q509.2 420.8 518.8 425.2M508.2 417.1Q516.7 415.7 525.3 416.4M482.8 246.6Q488.1 235.5 488.4 223.2M485.3 242.9Q490.8 232.1 492.2 220.1M488.7 237.9Q497 228.3 501.6 216.5M641.9 324.8Q633.8 321.6 627.9 315.2M487 531.4Q499.5 523.6 508.4 511.9M636.1 484.5Q628.5 493.6 623.7 504.5M480.5 160.9Q489.2 168.2 493.9 178.6M483.3 162.4Q492.9 168.8 498.5 178.9M641 167.4Q634.4 173.6 625.9 176.4M635.2 171.4Q627.3 178 622.4 187M635.5 171.2Q629.1 177 624.9 184.7M643.1 165.9Q634.3 172.3 626.5 179.9M506.7 544Q517.5 549.8 525.7 558.9M506.3 320.5Q515.4 322.4 524.1 325.4M654.8 358.1Q643.6 360.4 632.3 361.8M653.9 358.6Q642.5 359.6 631 358.6M660.4 355Q650.8 366.6 643.9 380M479.3 407.2Q484.4 390.6 494.9 376.8M514.9 445.5Q520.6 450 527.1 453.1M510.4 442Q520.8 448.5 532.2 453.2M481.2 325.7Q488.5 320.7 494.6 314.1M490.8 319.2Q497.7 312.2 502 303.4M649.7 557.7Q642.2 547.4 632.6 539M653 563.9Q646.6 555.8 639.5 548.4M638.9 380.6Q628.2 386.5 620.3 395.7M635.6 382Q627.9 384.1 620 384.5M642.8 314.8Q632.6 318.1 622.7 322.3M513.8 409.4Q521.9 416.9 528.8 425.6M510.7 407.2Q518.8 413.4 525.2 421.3M510 406.7Q523 411.7 537 412M512.9 398.9Q520.8 404.5 530.4 406.3M653.8 367.4Q640.8 359.6 630.8 348.2M653.1 386.2Q642.3 384.3 631.3 384.8M657.2 387.5Q645.8 383.5 634.8 378.5M474.4 199.8Q484.1 186.9 492.1 173M475 199.3Q480.6 189.3 482.6 178M520.8 277.4Q530.2 276.4 539.3 278.9M529.1 277.1Q535.2 277.6 540.9 275.4M653.8 414.5Q644 420.3 632.8 421.5M655.4 413.6Q647.5 418 638.4 418.8M524.8 568.1Q532.9 562.9 540.4 557M524.7 568.2Q532.1 564.9 538.8 560.4M524.5 568.3Q534 564.4 541.9 557.8M643.6 369.9Q635.7 374.7 626.6 376.6M647.4 366.3Q637.4 373.5 625.6 376.6M642 371.3Q637.1 374.9 634.3 380.2M647 366.7Q640.6 370.9 633.3 373.3M647 366.7Q640.8 373.2 632.9 377.5M640.6 459.9Q631.9 452.8 625 443.9M508.5 234.7Q515.4 238.6 523.2 239.9M509 235Q516.6 238.4 524.9 238.7M637.1 432Q629.1 433 621.2 431.6M634.7 432.6Q626.5 434.1 619.3 438.1M637.3 247.3Q626.7 246.5 616.4 248.7M637.2 247.3Q627.1 244.4 618.8 237.9M655 201.5Q650.3 195.8 644.2 191.5M657.1 204Q651.8 198.5 648.1 191.7M659.3 206.5Q656.5 197.2 657.6 187.6M658.1 205.1Q651.4 200.3 643.8 197.1M658.1 205.1Q654.2 197.5 652.1 189.2M495.2 196.7Q501.4 189.6 509.8 185.1M497.2 191.9Q500.9 182.3 508.3 175.1M505.4 294.1Q514.9 294.5 524.1 297.3M513.9 293.8Q521.2 293.7 528.2 295.4M513.2 293.8Q523.1 290.8 532.4 286.5M510.2 537.3Q517.2 539 522.8 543.4M501.2 534.5Q510.2 535.6 519.3 535.2M501.1 534.5Q510.4 543.6 517.9 554.1M499.4 533.9Q512.7 531.8 525.1 526.7M501.8 534.7Q512.1 539.4 520.8 546.6M523.2 211.9Q532.4 212.4 540.8 216.2M522.8 211.8Q536.6 210.1 549.1 204M488.3 320Q499.3 317.6 509.9 314M489.5 320.2Q497.1 324.6 504.2 329.6M479.1 318.2Q491.8 316.2 503.6 310.8M503.8 169.5Q512.1 170.9 520.4 169.4M511.5 174.2Q517.6 179.7 522.8 186.1M517.2 241.9Q523.3 248.4 527.9 256.2M477.8 368.9Q485.9 358.8 496.6 351.3M475.5 372.7Q482.9 362.9 493.1 356.1M635.7 557.1Q624.3 565.9 617.1 578.5M490.2 335.2Q492.2 322.5 491.1 309.7M494.7 328.8Q497 319.8 497 310.4M480.6 585.5Q487.6 592 493.5 599.6M503.6 521.8Q507.6 535.8 509.5 550.2M505.1 524.6Q508.6 533.6 515.7 540.3M507.6 572.2Q519.5 577.7 529.9 585.7M624.1 497.6Q614.7 504.1 606.3 511.8M624.2 497.6Q613.6 503.2 605.1 511.7M670.1 242.6Q664.5 233.6 662.2 223.3M661.4 236Q656.1 230.8 649.3 227.9M631.6 478.4Q625 474.9 617.6 473.8M656 474.2Q652.4 481.7 647.2 488.3M660.1 462.1Q651 470.3 641.3 477.7M658.2 467.7Q654 476.1 649 484.1M660.2 461.7Q654.4 474.2 646.6 485.6M489.9 402.2Q491.2 416.4 489.5 430.7M500.4 537.5Q509.8 533.9 518.8 529.2M502.5 537.4Q512.6 534.9 522.5 531.4M505.3 537.4Q512.9 539 519.4 543.1M497.2 467.5Q504.6 462.9 513.1 460.7M492.6 471Q503.5 463.6 515.4 458M497.4 467.4Q506.6 461.2 516.7 456.5M500.5 465Q507.6 458.1 511.6 449M660 421.9Q658.9 433.9 660.9 445.8M659.5 422.6Q654.3 432 646.6 439.4M660.8 420.5Q652.6 430.5 641.9 437.9M663.7 391.9Q654.8 391 646.1 392.9M666.2 392Q652.7 392 639.4 393.8M497.4 575.2Q503.3 563.8 505.7 551.1M497.5 575Q506.5 566.7 511.1 555.3M519.3 180.5Q524.3 177.9 528.9 174.6M515.3 182.3Q522.9 177.2 528.3 169.7M496.1 406.3Q506.3 406.2 515.7 402.1M507.7 177.9Q514.6 172.4 520.5 165.9M508.1 177.7Q519 168.7 525.5 156.3M511.3 175.7Q518.5 171.7 526.4 169.3M673 561.2Q657.6 556.6 645.2 546.4M670.8 561.4Q658.6 559.1 648.5 552M664.7 561.8Q650.9 559 639.3 551.1M662 562Q648.9 566 637.2 573.1M661.3 562Q649.2 559.9 638.9 553.2M644.1 327.3Q640.3 318.7 637.9 309.7M621.1 508.1Q609.2 511.1 598.2 516.5M618.7 508.7Q609.8 511.1 602 516.2M635.1 168Q626 163.1 619.2 155.4M628 166Q622.3 164.4 617.7 160.7M510.7 473.5Q522.5 472.1 534 469.5M517.2 474.6Q525.8 478 533.6 483M656.9 205.6Q650.6 216.6 647.5 228.8M629.6 265Q619.5 267.2 611.2 273.5M616.9 263.8Q607.3 263.6 598.5 259.7M668.2 222.1Q666.6 211.7 666 201.1M525.7 516.1Q532.1 509.1 536 500.5M531.2 511Q537.8 506.9 545.6 505.8M529.6 512.5Q534.3 507.4 536.2 500.7M532 510.3Q538.2 503.9 541.6 495.7M502.6 459.9Q510.1 471.1 514.1 484M510.7 465.9Q515.9 469.8 520.3 474.7M504.3 461.2Q512.5 465.5 521.2 468.6M504.2 461.1Q512.1 467.4 521.8 470.6M654.4 462.4Q645 460.9 635.7 458.7M478.7 442.5Q490.4 436.3 503.5 434.9M477.3 443.1Q486.3 439.1 492.9 431.8M477.1 443.2Q488.4 443 499.1 446.4M476.8 443.4Q484.2 432.2 490.3 420.4M641.7 338.8Q631 343.3 621.6 350M634 339.3Q623.2 340.3 613.1 336.6M641.5 338.8Q632.1 334.8 623.1 330M665.7 316.4Q656.7 326.3 645.5 333.8M611.1 169.7Q605.5 163.6 600.5 157M614.7 172.1Q604.3 168.1 593.3 166.7M662.3 512Q653.3 521.7 642.1 528.8M663.4 510.7Q655.8 517.2 646.9 521.8M659.9 514.7Q650.7 524.5 639.3 531.6M486.5 355.3Q495.3 341.5 502.9 327M613.1 211.2Q606.2 205 597.7 201.4M609.2 207.4Q602.3 201.4 597.7 193.5M614.8 212.8Q603.1 205.2 589.7 201.2M648.7 555.2Q645.4 563.9 646.1 573.2M505 419.4Q516.4 418.4 526.5 413.2M658.6 272Q652.9 284.1 648.8 296.9M645.3 426.4Q643.5 417.3 644 408.1M647.5 430.3Q641.8 424 634.2 420.1M637.3 225.9Q633.4 215.4 632.2 204.2M636 221.9Q631.1 208.9 624 197M633.5 214Q630.4 207.2 626.3 201M635.4 220.1Q633.5 210.1 627.3 201.9M635 218.7Q631.2 207 629.1 194.8M488.7 269.1Q498.5 265.8 506.6 259.2M480.4 268.6Q491.5 262.2 501.8 254.5M490 269.2Q498.7 272.1 506.8 276.5M493.8 269.4Q505.3 272.9 515.5 279.2M487.1 269Q498.7 270.2 510 272.9M641.7 581.2Q629.2 583.3 617.8 588.9M637.7 580.7Q627.1 580 616.6 581.8M644.9 581.6Q631.4 579.9 617.8 580.8M498.2 167.7Q505.9 171.8 513.2 176.6M479.5 264.1Q488.4 276 492.9 290.3M487.5 273.2Q493.1 280.8 500.7 286.3M478.8 263.3Q479.1 280.1 475.5 296.5M627.8 274Q619.6 267.3 609.8 263.2M633.3 277.7Q628 270.7 625.5 262.3M633.7 278Q624.2 271.6 613.6 267.2M507.5 508Q517.4 502.4 524.6 493.7M508.9 507.5Q518.4 502.7 529.1 502.5M504.5 508.9Q512.9 505.1 520.6 500.2M644.7 574.9Q632.7 580.8 619.3 581.3M532 229.4Q542.2 236.2 551.6 244.1M490.4 492.8Q499.2 499.9 509.9 503.8M492.8 496.5Q496.2 503.8 497.6 511.7M486.8 487.2Q493.3 497.8 501.9 506.8M662.4 273.8Q654.3 267.8 646.9 260.9M666.1 274.9Q657.2 269.7 648.8 263.6M483.7 495.8Q497.9 502.4 508.1 514.2M482 494.9Q492.7 497.9 503.7 498M652.5 156.5Q644.3 153.6 636.9 148.9M657.7 157.5Q647.7 156.2 637.8 158.1M666.8 316.5Q662.9 330.2 665.1 344.3M668.6 313Q662 326.1 659.9 340.7M656.3 469.9Q643.4 462.1 632.7 451.6M653.8 468.2Q645.6 459.3 640.7 448.2M651.3 466.6Q643.8 456.8 638.5 445.6M650.4 466Q641.7 458.4 635.3 448.8M503.9 300.8Q517.4 299.2 530 294.1M504.7 300.7Q516.8 300.6 528.3 304.4M481.1 454.6Q485.6 462.8 492.5 469.2M636.7 168.4Q627.4 167.7 618.4 170.3M642.8 169.9Q628.7 167.9 614.5 169.1M646.6 170.9Q631.8 169.4 617.1 172.2M663.1 485.1Q658.9 492.5 656.8 500.7M662.5 486.1Q657.1 494.3 654.7 503.9M663.5 484.6Q657.3 494.3 648.4 501.5M655.9 192.2Q647 189.2 637.7 188.8M656.8 192.6Q650.1 189 644.8 183.7M490.5 396.7Q501.6 399.4 512.9 399.8M500.2 402Q506.4 404.3 511 409.1" fill="none" stroke="#5fa385" stroke-width="0.85" stroke-linecap="round"/><path d="M667.7 489Q660.1 494.5 655.7 502.9M483.1 191.6Q492.1 186.9 502.2 186.5M617.5 231.6Q609.5 222.9 606 211.5M642.7 563.3Q632.2 570.8 620.8 576.7M638.2 567.8Q631.6 577.4 628.2 588.5M641 565Q634.7 573 630.5 582.2M623.2 527.3Q614.2 530.9 606.3 536.7M483.2 383.1Q489.3 375 497 368.3M626.6 501.4Q618.4 502.6 610.2 503.1M657.2 241.5Q650 231.5 640.7 223.5M651.9 351Q644.9 342.5 635.5 336.7M649.2 346.9Q641.4 336.9 630.9 329.7M648.5 401Q639.7 393 634.2 382.4M664.7 384.1Q649.3 386.2 634.7 391.4M504.2 495.2Q517.5 490.7 531.6 490.7M488.4 508.8Q494 501.2 501.5 495.7M669.1 303.3Q662.2 311.3 652.5 315.5M524.3 553Q532.6 548.7 541.8 546.9M636.7 296Q627.3 297.4 618.1 294.8M650.5 268.8Q645.3 274.4 641.7 281.1M535.3 533Q543.2 529.4 549.7 523.6M620.4 249.3Q612.8 243.1 608.3 234.4M525.4 513.5Q531.3 519.9 536.5 526.8M667.2 378Q657.1 373.2 648 366.6M482.6 343Q491 334.4 497.4 324.2M645.1 238.4Q634.9 246.6 626.1 256.4M659.5 447Q656.2 454.1 654.1 461.7M632.5 291.3Q625.8 295.7 618 296.7M493.4 451.3Q497.9 442.4 500.4 432.7M658.3 188.2Q645.9 192.7 632.8 193.5M646.2 193.5Q640 203.7 637.2 215.3M484.2 465Q490.2 469.3 497.3 471.6M650.5 296.4Q638.1 297.3 625.7 296M504.1 417.8Q515.9 417.2 527.2 421M485.8 242.2Q497.8 234.6 511.8 232.2M481.7 161.5Q491 165 498.2 171.9M484.7 163.1Q490.5 168.4 494.9 174.9M635.2 171.4Q627.2 176.9 618.2 180.5M509.6 320.5Q519.7 317.8 529.2 313.7M509.7 294.6Q516.8 297.3 523.4 301M506.8 393Q517.8 397.8 529.5 400.6M664 318.2Q656.9 309.3 652.5 298.7M631 433.5Q621.8 435.3 613.6 439.7M478.4 345.3Q481 338.9 485.2 333.3M485.1 319.4Q498.6 317.3 510.5 310.3M478.3 584.3Q486.7 588.2 495.7 590.4M507.5 529.2Q512.4 537 514.3 546M640.3 482.6Q630.1 480.7 619.6 480.9M641.2 289.3Q635.1 282.6 632.6 273.9M485.6 407.7Q500.3 409.9 514.3 415.1M638.4 168.8Q630.1 162.8 622.9 155.6M657.6 204.4Q649.1 217.2 638.3 228.1M616.7 263.8Q608.1 263.9 600.2 260.4M648.6 462Q638.4 461.6 628.3 459.8M645.2 581.7Q634.4 584 623.8 587.6M503.6 509.2Q517.1 503.1 532 503.2M496.5 511.6Q507.4 511 518.3 512.2M491.4 581.3Q496.2 590.5 498.7 600.5M533.6 230.4Q542.7 235.7 553.2 236.8M664 454.7Q665.1 443.8 669.8 433.8M660.4 194.4Q648.9 190.1 636.6 189.6M635.6 472.9Q627.2 467.8 620.8 460.3M499.8 401.8Q505.6 404.8 511.1 408.6" fill="none" stroke="#a8d4bc" stroke-width="0.6" stroke-linecap="round"/></g><path d="M505.1 205.8Q503.7 203.3 511.7 195.3Q506.5 195.4 506.6 192.3Q503.7 190.6 512.4 182.2Q501.6 185.5 501.9 182.4Q498.9 180.7 503.3 174.8Q493.3 178 493 175.7Q487.9 176.1 486.9 174.2Q487.9 176.1 485.1 180.3Q487 181.7 479.2 188.7Q486.5 187.9 486.4 191.3Q489.3 192.6 481.1 200.3Q492.7 197 492.7 200.3Q495.4 201.8 492.8 206.2Q503.7 203.3 505.1 205.8z" fill="url(#gH1)" stroke="#2a6a1c" stroke-width=".35"/><path d="M505.1 205.8Q503.7 203.3 511.7 195.3Q506.5 195.4 506.6 192.3Q503.7 190.6 512.4 182.2Q501.6 185.5 501.9 182.4Q498.9 180.7 503.3 174.8Q493.3 178 493 175.7Q487.9 176.1 486.9 174.2z" fill="#1f5a18" opacity=".28"/><path d="M505.1 205.8L486.9 174.2" stroke="#8fd060" stroke-width=".5" opacity=".7"/><path d="M505.9 211.8Q507.3 209.3 518.2 212.2Q515.6 207.8 518.3 206.3Q518.3 203 529.9 206.3Q521.7 198.6 524.6 197.3Q524.5 193.9 531.8 194.7Q524 187.7 525.9 186.3Q523.1 182.1 524.1 180.2Q523.1 182.1 518 181.7Q517.7 184 507.7 180.8Q512.1 186.7 509.1 188.4Q509.4 191.5 498.6 188.2Q507.3 196.6 504.4 198.3Q504.5 201.4 499.3 201.3Q507.3 209.3 505.9 211.8z" fill="url(#gH2)" stroke="#2a6a1c" stroke-width=".35"/><path d="M505.9 211.8Q507.3 209.3 518.2 212.2Q515.6 207.8 518.3 206.3Q518.3 203 529.9 206.3Q521.7 198.6 524.6 197.3Q524.5 193.9 531.8 194.7Q524 187.7 525.9 186.3Q523.1 182.1 524.1 180.2z" fill="#1f5a18" opacity=".28"/><path d="M505.9 211.8L524.1 180.2" stroke="#8fd060" stroke-width=".5" opacity=".7"/><path d="M502 281.8Q499.5 280.9 500.4 270.4Q496.7 273.6 495 271.3Q491.9 271.8 493.1 260.6Q487.3 269.4 485.6 267Q482.5 267.6 482.1 260.7Q476.9 269 475.3 267.5Q471.9 270.9 470 270.2Q471.9 270.9 472.3 275.6Q474.6 275.5 473.2 285.2Q477.9 280.2 479.9 282.7Q482.8 281.9 481.5 292.3Q487.8 283 489.9 285.3Q492.6 284.8 493.4 289.5Q499.5 280.9 502 281.8z" fill="url(#gH1)" stroke="#2a6a1c" stroke-width=".35"/><path d="M502 281.8Q499.5 280.9 500.4 270.4Q496.7 273.6 495 271.3Q491.9 271.8 493.1 260.6Q487.3 269.4 485.6 267Q482.5 267.6 482.1 260.7Q476.9 269 475.3 267.5Q471.9 270.9 470 270.2z" fill="#1f5a18" opacity=".28"/><path d="M502 281.8L470 270.2" stroke="#8fd060" stroke-width=".5" opacity=".7"/><path d="M491.7 277.7Q494.6 276.6 501.5 286.5Q502.4 281 505.6 281.7Q507.9 279 515.1 289.7Q513.7 277.8 516.9 278.6Q519.2 275.8 524.6 281.5Q523.1 270.4 525.6 270.5Q526.1 265.1 528.3 264.3Q526.1 265.1 522.3 261.3Q520.4 263 514.5 253.5Q514 261.4 510.4 260.7Q508.5 263.4 501.9 253.4Q503.3 266.2 499.8 265.7Q497.8 268.2 493.5 264.6Q494.6 276.6 491.7 277.7z" fill="url(#gH2)" stroke="#2a6a1c" stroke-width=".35"/><path d="M491.7 277.7Q494.6 276.6 501.5 286.5Q502.4 281 505.6 281.7Q507.9 279 515.1 289.7Q513.7 277.8 516.9 278.6Q519.2 275.8 524.6 281.5Q523.1 270.4 525.6 270.5Q526.1 265.1 528.3 264.3z" fill="#1f5a18" opacity=".28"/><path d="M491.7 277.7L528.3 264.3" stroke="#8fd060" stroke-width=".5" opacity=".7"/><path d="M504.2 288.9Q506.7 290.3 503.8 301.2Q508.2 298.6 509.7 301.3Q513 301.3 509.7 312.9Q517.4 304.7 518.7 307.6Q522.1 307.5 521.3 314.8Q528.3 307 529.7 308.9Q533.9 306.1 535.8 307.1Q533.9 306.1 534.3 301Q532 300.7 535.2 290.7Q529.3 295.1 527.6 292.1Q524.5 292.4 527.8 281.6Q519.4 290.3 517.7 287.4Q514.6 287.5 514.7 282.3Q506.7 290.3 504.2 288.9z" fill="url(#gH1)" stroke="#2a6a1c" stroke-width=".35"/><path d="M504.2 288.9Q506.7 290.3 503.8 301.2Q508.2 298.6 509.7 301.3Q513 301.3 509.7 312.9Q517.4 304.7 518.7 307.6Q522.1 307.5 521.3 314.8Q528.3 307 529.7 308.9Q533.9 306.1 535.8 307.1z" fill="#1f5a18" opacity=".28"/><path d="M504.2 288.9L535.8 307.1" stroke="#8fd060" stroke-width=".5" opacity=".7"/><path d="M505.8 306.5Q503.4 307.8 496 300.4Q496 305.2 493.2 305.1Q491.6 307.8 483.7 299.7Q486.8 309.7 483.9 309.5Q482.3 312.3 476.8 308.2Q479.8 317.5 477.6 317.8Q478 322.5 476.2 323.5Q478 322.5 481.9 325.2Q483.3 323.4 489.8 330.7Q489 323.9 492.2 323.9Q493.5 321.3 500.6 328.9Q497.5 318.1 500.6 318Q502 315.6 506.1 318Q503.4 307.8 505.8 306.5z" fill="url(#gH2)" stroke="#2a6a1c" stroke-width=".35"/><path d="M505.8 306.5Q503.4 307.8 496 300.4Q496 305.2 493.2 305.1Q491.6 307.8 483.7 299.7Q486.8 309.7 483.9 309.5Q482.3 312.3 476.8 308.2Q479.8 317.5 477.6 317.8Q478 322.5 476.2 323.5z" fill="#1f5a18" opacity=".28"/><path d="M505.8 306.5L476.2 323.5" stroke="#8fd060" stroke-width=".5" opacity=".7"/><path d="M500.9 320.2Q502.8 318.6 510.8 324.2Q510 319.7 512.6 319.4Q513.6 316.7 522.1 322.8Q517.7 314.1 520.4 313.9Q521.4 311.1 527.1 314Q522.8 305.9 524.8 305.3Q523.7 301 525.1 299.8Q523.7 301 519.7 299.2Q518.7 301 511.5 295.4Q513.4 301.6 510.4 302Q509.7 304.6 502 298.8Q506.5 308.2 503.7 308.8Q502.9 311.3 498.7 309.7Q502.8 318.6 500.9 320.2z" fill="url(#gH1)" stroke="#2a6a1c" stroke-width=".35"/><path d="M500.9 320.2Q502.8 318.6 510.8 324.2Q510 319.7 512.6 319.4Q513.6 316.7 522.1 322.8Q517.7 314.1 520.4 313.9Q521.4 311.1 527.1 314Q522.8 305.9 524.8 305.3Q523.7 301 525.1 299.8z" fill="#1f5a18" opacity=".28"/><path d="M500.9 320.2L525.1 299.8" stroke="#8fd060" stroke-width=".5" opacity=".7"/><path d="M648.3 201.9Q646.2 199.3 653.5 188.9Q647.7 189.9 647.3 186.5Q643.7 185.2 651.8 174.1Q640.4 179.8 640.1 176.3Q636.4 175.1 640.2 167.6Q629.7 173.2 628.9 170.6Q623.3 172 621.7 170.1Q623.3 172 620.9 177.3Q623.3 178.5 616 187.9Q624 185.5 624.6 189.3Q628 190.3 620.4 200.4Q632.7 194.5 633.4 198.2Q636.7 199.2 634.6 204.7Q646.2 199.3 648.3 201.9z" fill="url(#gH2)" stroke="#2a6a1c" stroke-width=".35"/><path d="M648.3 201.9Q646.2 199.3 653.5 188.9Q647.7 189.9 647.3 186.5Q643.7 185.2 651.8 174.1Q640.4 179.8 640.1 176.3Q636.4 175.1 640.2 167.6Q629.7 173.2 628.9 170.6Q623.3 172 621.7 170.1z" fill="#1f5a18" opacity=".28"/><path d="M648.3 201.9L621.7 170.1" stroke="#8fd060" stroke-width=".5" opacity=".7"/><path d="M647.9 192.8Q649.3 190.3 660.2 193.2Q657.6 188.8 660.3 187.3Q660.3 184 671.9 187.3Q663.7 179.6 666.6 178.3Q666.5 174.9 673.8 175.7Q666 168.7 667.9 167.3Q665.1 163.1 666.1 161.2Q665.1 163.1 660 162.7Q659.7 165 649.7 161.8Q654.1 167.7 651.1 169.4Q651.4 172.5 640.6 169.2Q649.3 177.6 646.4 179.3Q646.5 182.4 641.3 182.3Q649.3 190.3 647.9 192.8z" fill="url(#gH1)" stroke="#2a6a1c" stroke-width=".35"/><path d="M647.9 192.8Q649.3 190.3 660.2 193.2Q657.6 188.8 660.3 187.3Q660.3 184 671.9 187.3Q663.7 179.6 666.6 178.3Q666.5 174.9 673.8 175.7Q666 168.7 667.9 167.3Q665.1 163.1 666.1 161.2z" fill="#1f5a18" opacity=".28"/><path d="M647.9 192.8L666.1 161.2" stroke="#8fd060" stroke-width=".5" opacity=".7"/><path d="M653.1 201.4Q655.5 200.6 661.1 208.6Q661.8 204.1 664.4 204.7Q666.3 202.5 672.2 211.2Q671 201.5 673.6 202.2Q675.5 199.9 679.9 204.5Q678.6 195.5 680.7 195.6Q681.1 191.2 682.9 190.6Q681.1 191.2 678 188.1Q676.4 189.5 671.6 181.8Q671.2 188.2 668.3 187.6Q666.8 189.8 661.4 181.7Q662.5 192.1 659.7 191.7Q658.1 193.7 654.6 190.8Q655.5 200.6 653.1 201.4z" fill="url(#gH2)" stroke="#2a6a1c" stroke-width=".35"/><path d="M653.1 201.4Q655.5 200.6 661.1 208.6Q661.8 204.1 664.4 204.7Q666.3 202.5 672.2 211.2Q671 201.5 673.6 202.2Q675.5 199.9 679.9 204.5Q678.6 195.5 680.7 195.6Q681.1 191.2 682.9 190.6z" fill="#1f5a18" opacity=".28"/><path d="M653.1 201.4L682.9 190.6" stroke="#8fd060" stroke-width=".5" opacity=".7"/><path d="M656.6 249.5Q653.3 250.7 645.6 239.6Q644.5 245.7 641 245Q638.3 248 630.2 236Q631.8 249.4 628.2 248.4Q625.6 251.6 619.5 245.2Q621.3 257.7 618.4 257.5Q617.8 263.6 615.4 264.5Q617.8 263.6 622.2 267.9Q624.3 266 631 276.6Q631.5 267.8 635.5 268.6Q637.7 265.5 645.1 276.8Q643.6 262.4 647.5 263Q649.8 260.1 654.5 264.2Q653.3 250.7 656.6 249.5z" fill="url(#gH1)" stroke="#2a6a1c" stroke-width=".35"/><path d="M656.6 249.5Q653.3 250.7 645.6 239.6Q644.5 245.7 641 245Q638.3 248 630.2 236Q631.8 249.4 628.2 248.4Q625.6 251.6 619.5 245.2Q621.3 257.7 618.4 257.5Q617.8 263.6 615.4 264.5z" fill="#1f5a18" opacity=".28"/><path d="M656.6 249.5L615.4 264.5" stroke="#8fd060" stroke-width=".5" opacity=".7"/><path d="M647.2 263.1Q649.7 261.7 657.7 269.7Q657.6 264.5 660.7 264.6Q662.4 261.7 670.8 270.4Q667.5 259.6 670.6 259.9Q672.3 256.9 678.2 261.3Q675 251.3 677.3 251Q676.9 245.9 678.8 244.8Q676.9 245.9 672.7 243.1Q671.3 245 664.3 237.2Q665.1 244.5 661.7 244.4Q660.4 247.3 652.7 239.1Q656 250.7 652.7 250.7Q651.2 253.4 646.8 250.8Q649.7 261.7 647.2 263.1z" fill="url(#gH2)" stroke="#2a6a1c" stroke-width=".35"/><path d="M647.2 263.1Q649.7 261.7 657.7 269.7Q657.6 264.5 660.7 264.6Q662.4 261.7 670.8 270.4Q667.5 259.6 670.6 259.9Q672.3 256.9 678.2 261.3Q675 251.3 677.3 251Q676.9 245.9 678.8 244.8z" fill="#1f5a18" opacity=".28"/><path d="M647.2 263.1L678.8 244.8" stroke="#8fd060" stroke-width=".5" opacity=".7"/><path d="M652 286.2Q649.8 288.1 640.5 281.6Q641.5 286.8 638.5 287.2Q637.3 290.3 627.5 283.2Q632.6 293.2 629.4 293.5Q628.4 296.8 621.7 293.4Q626.7 302.7 624.4 303.4Q625.7 308.4 624 309.8Q625.7 308.4 630.3 310.5Q631.4 308.3 639.7 314.8Q637.6 307.7 640.9 307.2Q641.8 304.2 650.7 310.9Q645.5 300.1 648.7 299.4Q649.7 296.5 654.5 298.4Q649.8 288.1 652 286.2z" fill="url(#gH1)" stroke="#2a6a1c" stroke-width=".35"/><path d="M652 286.2Q649.8 288.1 640.5 281.6Q641.5 286.8 638.5 287.2Q637.3 290.3 627.5 283.2Q632.6 293.2 629.4 293.5Q628.4 296.8 621.7 293.4Q626.7 302.7 624.4 303.4Q625.7 308.4 624 309.8z" fill="#1f5a18" opacity=".28"/><path d="M652 286.2L624 309.8" stroke="#8fd060" stroke-width=".5" opacity=".7"/><path d="M646.3 292.1Q648.5 293.3 645.9 302.8Q649.8 300.5 651 302.8Q653.9 302.9 651.1 312.9Q657.7 305.8 658.9 308.3Q661.8 308.2 661.1 314.6Q667.2 307.8 668.4 309.5Q672.1 307 673.7 307.9Q672.1 307 672.4 302.6Q670.4 302.3 673.2 293.7Q668 297.5 666.6 294.9Q663.9 295.1 666.7 285.8Q659.5 293.3 658 290.8Q655.4 290.9 655.4 286.4Q648.5 293.3 646.3 292.1z" fill="url(#gH2)" stroke="#2a6a1c" stroke-width=".35"/><path d="M646.3 292.1Q648.5 293.3 645.9 302.8Q649.8 300.5 651 302.8Q653.9 302.9 651.1 312.9Q657.7 305.8 658.9 308.3Q661.8 308.2 661.1 314.6Q667.2 307.8 668.4 309.5Q672.1 307 673.7 307.9z" fill="#1f5a18" opacity=".28"/><path d="M646.3 292.1L673.7 307.9" stroke="#8fd060" stroke-width=".5" opacity=".7"/><path d="M479.8 369.4Q479.3 371.9 469.6 372.7Q473 375.6 471.3 377.6Q472.2 380.3 461.8 381Q470.7 384.9 468.8 386.8Q469.9 389.5 463.7 391Q472.1 394.4 471 396.2Q474.6 398.7 474.2 400.6Q474.6 398.7 478.8 397.6Q478.4 395.6 487.5 395.2Q482.1 391.7 484.1 389.5Q482.9 387 492.7 386.5Q483.1 382.2 484.9 380Q483.9 377.5 488.2 376Q479.3 371.9 479.8 369.4z" fill="url(#gH1)" stroke="#2a6a1c" stroke-width=".35"/><path d="M479.8 369.4Q479.3 371.9 469.6 372.7Q473 375.6 471.3 377.6Q472.2 380.3 461.8 381Q470.7 384.9 468.8 386.8Q469.9 389.5 463.7 391Q472.1 394.4 471 396.2Q474.6 398.7 474.2 400.6z" fill="#1f5a18" opacity=".28"/><path d="M479.8 369.4L474.2 400.6" stroke="#8fd060" stroke-width=".5" opacity=".7"/><path d="M485.8 438.7Q488.6 439.7 487.6 451Q491.5 447.6 493.4 450Q496.7 449.5 495.4 461.5Q501.6 452.1 503.4 454.7Q506.7 454 507.2 461.4Q512.7 452.5 514.5 454.1Q518.1 450.5 520.2 451.3Q518.1 450.5 517.6 445.4Q515.3 445.5 516.7 435.1Q511.6 440.5 509.5 437.9Q506.5 438.7 507.8 427.5Q501.1 437.5 498.9 435Q495.9 435.6 495 430.5Q488.6 439.7 485.8 438.7z" fill="url(#gH2)" stroke="#2a6a1c" stroke-width=".35"/><path d="M485.8 438.7Q488.6 439.7 487.6 451Q491.5 447.6 493.4 450Q496.7 449.5 495.4 461.5Q501.6 452.1 503.4 454.7Q506.7 454 507.2 461.4Q512.7 452.5 514.5 454.1Q518.1 450.5 520.2 451.3z" fill="#1f5a18" opacity=".28"/><path d="M485.8 438.7L520.2 451.3" stroke="#8fd060" stroke-width=".5" opacity=".7"/><path d="M502.9 449.6Q500.5 450.4 494.9 442.4Q494.2 446.9 491.6 446.3Q489.7 448.5 483.8 439.8Q485 449.5 482.4 448.8Q480.5 451.1 476.1 446.5Q477.4 455.5 475.3 455.4Q474.9 459.8 473.1 460.4Q474.9 459.8 478 462.9Q479.6 461.5 484.4 469.2Q484.8 462.8 487.7 463.4Q489.2 461.2 494.6 469.3Q493.5 458.9 496.3 459.3Q497.9 457.3 501.4 460.2Q500.5 450.4 502.9 449.6z" fill="url(#gH1)" stroke="#2a6a1c" stroke-width=".35"/><path d="M502.9 449.6Q500.5 450.4 494.9 442.4Q494.2 446.9 491.6 446.3Q489.7 448.5 483.8 439.8Q485 449.5 482.4 448.8Q480.5 451.1 476.1 446.5Q477.4 455.5 475.3 455.4Q474.9 459.8 473.1 460.4z" fill="#1f5a18" opacity=".28"/><path d="M502.9 449.6L473.1 460.4" stroke="#8fd060" stroke-width=".5" opacity=".7"/><path d="M655.2 438.7Q652.4 439.7 646 430.5Q645.1 435.6 642.1 435Q639.9 437.5 633.2 427.5Q634.5 438.7 631.5 437.9Q629.4 440.5 624.3 435.1Q625.7 445.5 623.4 445.4Q622.9 450.5 620.8 451.3Q622.9 450.5 626.5 454.1Q628.3 452.5 633.8 461.4Q634.3 454 637.6 454.7Q639.4 452.1 645.6 461.5Q644.3 449.5 647.6 450Q649.5 447.6 653.4 451Q652.4 439.7 655.2 438.7z" fill="url(#gH2)" stroke="#2a6a1c" stroke-width=".35"/><path d="M655.2 438.7Q652.4 439.7 646 430.5Q645.1 435.6 642.1 435Q639.9 437.5 633.2 427.5Q634.5 438.7 631.5 437.9Q629.4 440.5 624.3 435.1Q625.7 445.5 623.4 445.4Q622.9 450.5 620.8 451.3z" fill="#1f5a18" opacity=".28"/><path d="M655.2 438.7L620.8 451.3" stroke="#8fd060" stroke-width=".5" opacity=".7"/><path d="M646.9 437Q649 435.2 657.6 441.3Q656.8 436.5 659.6 436.1Q660.7 433.2 669.8 439.8Q665.1 430.5 668 430.2Q669 427.2 675.2 430.3Q670.6 421.6 672.7 420.9Q671.5 416.3 673.1 415Q671.5 416.3 667.2 414.4Q666.2 416.3 658.4 410.3Q660.4 416.9 657.3 417.4Q656.5 420.2 648.1 413.9Q653 424.1 650 424.7Q649.1 427.4 644.6 425.7Q649 435.2 646.9 437z" fill="url(#gH1)" stroke="#2a6a1c" stroke-width=".35"/><path d="M646.9 437Q649 435.2 657.6 441.3Q656.8 436.5 659.6 436.1Q660.7 433.2 669.8 439.8Q665.1 430.5 668 430.2Q669 427.2 675.2 430.3Q670.6 421.6 672.7 420.9Q671.5 416.3 673.1 415z" fill="#1f5a18" opacity=".28"/><path d="M646.9 437L673.1 415" stroke="#8fd060" stroke-width=".5" opacity=".7"/><path d="M665 373.9Q665 371.3 674.5 368.8Q670.5 366.6 671.9 364.3Q670.5 361.8 680.7 359.3Q671.2 357 672.7 354.8Q671.2 352.3 677.1 349.8Q668.2 347.8 669 345.9Q665 344 665 342.1Q665 344 661 345.9Q661.8 347.8 652.9 349.8Q658.8 352.3 657.3 354.8Q658.8 357 649.3 359.3Q659.5 361.8 658.1 364.3Q659.5 366.6 655.5 368.8Q665 371.3 665 373.9z" fill="url(#gH2)" stroke="#2a6a1c" stroke-width=".35"/><path d="M665 373.9Q665 371.3 674.5 368.8Q670.5 366.6 671.9 364.3Q670.5 361.8 680.7 359.3Q671.2 357 672.7 354.8Q671.2 352.3 677.1 349.8Q668.2 347.8 669 345.9Q665 344 665 342.1z" fill="#1f5a18" opacity=".28"/><path d="M665 373.9L665 342.1" stroke="#8fd060" stroke-width=".5" opacity=".7"/><path d="M498.2 463.5Q500.6 462.2 508 469.6Q508 464.8 510.8 464.9Q512.4 462.2 520.3 470.3Q517.2 460.3 520.1 460.5Q521.7 457.7 527.2 461.8Q524.2 452.5 526.4 452.2Q526 447.5 527.8 446.5Q526 447.5 522.1 444.8Q520.7 446.6 514.2 439.3Q515 446.1 511.8 446.1Q510.5 448.7 503.4 441.1Q506.5 451.9 503.4 452Q502 454.4 497.9 452Q500.6 462.2 498.2 463.5z" fill="url(#gH1)" stroke="#2a6a1c" stroke-width=".35"/><path d="M498.2 463.5Q500.6 462.2 508 469.6Q508 464.8 510.8 464.9Q512.4 462.2 520.3 470.3Q517.2 460.3 520.1 460.5Q521.7 457.7 527.2 461.8Q524.2 452.5 526.4 452.2Q526 447.5 527.8 446.5z" fill="#1f5a18" opacity=".28"/><path d="M498.2 463.5L527.8 446.5" stroke="#8fd060" stroke-width=".5" opacity=".7"/><path d="M501.3 505.3Q502.4 502.4 514.4 503.5Q510.8 499.2 513.3 497.2Q512.8 493.7 525.6 495.1Q515.6 488.5 518.3 486.6Q517.6 483 525.5 482.5Q516 476.6 517.7 474.7Q513.9 470.9 514.7 468.7Q513.9 470.9 508.5 471.4Q508.6 473.9 497.5 472.4Q503.2 477.8 500.4 480.1Q501.2 483.3 489.3 481.9Q500 489.1 497.3 491.4Q498 494.6 492.5 495.5Q502.4 502.4 501.3 505.3z" fill="url(#gH2)" stroke="#2a6a1c" stroke-width=".35"/><path d="M501.3 505.3Q502.4 502.4 514.4 503.5Q510.8 499.2 513.3 497.2Q512.8 493.7 525.6 495.1Q515.6 488.5 518.3 486.6Q517.6 483 525.5 482.5Q516 476.6 517.7 474.7Q513.9 470.9 514.7 468.7z" fill="#1f5a18" opacity=".28"/><path d="M501.3 505.3L514.7 468.7" stroke="#8fd060" stroke-width=".5" opacity=".7"/><path d="M497 493.1Q495.2 491 501.3 482.4Q496.5 483.2 496.1 480.4Q493.2 479.3 499.8 470.2Q490.5 474.9 490.2 472Q487.2 471 490.3 464.8Q481.6 469.4 480.9 467.3Q476.3 468.5 475 466.9Q476.3 468.5 474.4 472.8Q476.3 473.8 470.3 481.6Q476.9 479.6 477.4 482.7Q480.2 483.5 473.9 491.9Q484.1 487 484.7 490Q487.4 490.9 485.7 495.4Q495.2 491 497 493.1z" fill="url(#gH1)" stroke="#2a6a1c" stroke-width=".35"/><path d="M497 493.1Q495.2 491 501.3 482.4Q496.5 483.2 496.1 480.4Q493.2 479.3 499.8 470.2Q490.5 474.9 490.2 472Q487.2 471 490.3 464.8Q481.6 469.4 480.9 467.3Q476.3 468.5 475 466.9z" fill="#1f5a18" opacity=".28"/><path d="M497 493.1L475 466.9" stroke="#8fd060" stroke-width=".5" opacity=".7"/><path d="M643.4 492Q641.7 489.1 650.8 480Q644.9 480.1 645 476.7Q641.8 474.7 651.6 465.2Q639.4 468.9 639.7 465.3Q636.3 463.5 641.3 456.8Q630 460.4 629.6 457.7Q623.9 458.2 622.6 456Q623.9 458.2 620.6 463Q622.8 464.6 613.9 472.6Q622.2 471.6 622.2 475.5Q625.4 477 616.1 485.7Q629.2 481.9 629.3 485.7Q632.3 487.3 629.3 492.4Q641.7 489.1 643.4 492z" fill="url(#gH2)" stroke="#2a6a1c" stroke-width=".35"/><path d="M643.4 492Q641.7 489.1 650.8 480Q644.9 480.1 645 476.7Q641.8 474.7 651.6 465.2Q639.4 468.9 639.7 465.3Q636.3 463.5 641.3 456.8Q630 460.4 629.6 457.7Q623.9 458.2 622.6 456z" fill="#1f5a18" opacity=".28"/><path d="M643.4 492L622.6 456" stroke="#8fd060" stroke-width=".5" opacity=".7"/><path d="M647.9 485.8Q649.3 483.3 660.2 486.2Q657.6 481.8 660.3 480.3Q660.3 477 671.9 480.3Q663.7 472.6 666.6 471.3Q666.5 467.9 673.8 468.7Q666 461.7 667.9 460.3Q665.1 456.1 666.1 454.2Q665.1 456.1 660 455.7Q659.7 458 649.7 454.8Q654.1 460.7 651.1 462.4Q651.4 465.5 640.6 462.2Q649.3 470.6 646.4 472.3Q646.5 475.4 641.3 475.3Q649.3 483.3 647.9 485.8z" fill="url(#gH1)" stroke="#2a6a1c" stroke-width=".35"/><path d="M647.9 485.8Q649.3 483.3 660.2 486.2Q657.6 481.8 660.3 480.3Q660.3 477 671.9 480.3Q663.7 472.6 666.6 471.3Q666.5 467.9 673.8 468.7Q666 461.7 667.9 460.3Q665.1 456.1 666.1 454.2z" fill="#1f5a18" opacity=".28"/><path d="M647.9 485.8L666.1 454.2" stroke="#8fd060" stroke-width=".5" opacity=".7"/><path d="M653.6 492.5Q655.9 492.1 659.7 500.3Q661.1 496.4 663.3 497.3Q665.4 495.6 669.4 504.4Q669.9 495.5 672.1 496.5Q674.2 494.7 677.4 499.7Q677.7 491.3 679.6 491.7Q680.7 487.8 682.4 487.5Q680.7 487.8 678.3 484.4Q676.7 485.5 673.6 477.7Q672.2 483.5 669.6 482.4Q667.9 484.2 664.3 476Q663.7 485.6 661.1 484.7Q659.3 486.3 656.7 483.1Q655.9 492.1 653.6 492.5z" fill="url(#gH2)" stroke="#2a6a1c" stroke-width=".35"/><path d="M653.6 492.5Q655.9 492.1 659.7 500.3Q661.1 496.4 663.3 497.3Q665.4 495.6 669.4 504.4Q669.9 495.5 672.1 496.5Q674.2 494.7 677.4 499.7Q677.7 491.3 679.6 491.7Q680.7 487.8 682.4 487.5z" fill="#1f5a18" opacity=".28"/><path d="M653.6 492.5L682.4 487.5" stroke="#8fd060" stroke-width=".5" opacity=".7"/><path d="M493.8 557.6Q496.9 558.2 497.9 570.2Q501.4 565.9 503.8 568Q507.2 566.9 508.1 579.7Q512.8 568.7 515.2 571.1Q518.6 569.7 520.4 577.4Q524.6 567 526.8 568.4Q529.9 564 532.2 564.4Q529.9 564 528.5 558.7Q526 559.3 525.6 548.1Q521.2 554.7 518.5 552.3Q515.5 553.7 514.8 541.7Q509.6 553.5 506.8 551.3Q503.8 552.5 501.9 547.2Q496.9 558.2 493.8 557.6z" fill="url(#gH1)" stroke="#2a6a1c" stroke-width=".35"/><path d="M493.8 557.6Q496.9 558.2 497.9 570.2Q501.4 565.9 503.8 568Q507.2 566.9 508.1 579.7Q512.8 568.7 515.2 571.1Q518.6 569.7 520.4 577.4Q524.6 567 526.8 568.4Q529.9 564 532.2 564.4z" fill="#1f5a18" opacity=".28"/><path d="M493.8 557.6L532.2 564.4" stroke="#8fd060" stroke-width=".5" opacity=".7"/><path d="M508.8 562.5Q506.4 563.8 499 556.4Q499 561.2 496.2 561.1Q494.6 563.8 486.7 555.7Q489.8 565.7 486.9 565.5Q485.3 568.3 479.8 564.2Q482.8 573.5 480.6 573.8Q481 578.5 479.2 579.5Q481 578.5 484.9 581.2Q486.3 579.4 492.8 586.7Q492 579.9 495.2 579.9Q496.5 577.3 503.6 584.9Q500.5 574.1 503.6 574Q505 571.6 509.1 574Q506.4 563.8 508.8 562.5z" fill="url(#gH2)" stroke="#2a6a1c" stroke-width=".35"/><path d="M508.8 562.5Q506.4 563.8 499 556.4Q499 561.2 496.2 561.1Q494.6 563.8 486.7 555.7Q489.8 565.7 486.9 565.5Q485.3 568.3 479.8 564.2Q482.8 573.5 480.6 573.8Q481 578.5 479.2 579.5z" fill="#1f5a18" opacity=".28"/><path d="M508.8 562.5L479.2 579.5" stroke="#8fd060" stroke-width=".5" opacity=".7"/><path d="M487.3 535.3Q486.1 537.3 477.4 535Q479.5 538.6 477.4 539.7Q477.3 542.4 468.1 539.8Q474.6 545.9 472.3 547Q472.4 549.7 466.5 549Q472.8 554.6 471.2 555.8Q473.6 559.2 472.7 560.7Q473.6 559.2 477.6 559.5Q477.9 557.6 485.9 560.2Q482.3 555.4 484.7 554.1Q484.5 551.6 493.1 554.2Q486.2 547.5 488.5 546.1Q488.4 543.7 492.5 543.7Q486.1 537.3 487.3 535.3z" fill="url(#gH1)" stroke="#2a6a1c" stroke-width=".35"/><path d="M487.3 535.3Q486.1 537.3 477.4 535Q479.5 538.6 477.4 539.7Q477.3 542.4 468.1 539.8Q474.6 545.9 472.3 547Q472.4 549.7 466.5 549Q472.8 554.6 471.2 555.8Q473.6 559.2 472.7 560.7z" fill="#1f5a18" opacity=".28"/><path d="M487.3 535.3L472.7 560.7" stroke="#8fd060" stroke-width=".5" opacity=".7"/><path d="M654.6 548.2Q651.2 548.8 645.4 536.5Q643.3 542.4 640 541Q636.9 543.5 631 530.3Q630.2 543.8 626.8 542.2Q623.7 544.9 618.8 537.5Q618.4 550.1 615.6 549.5Q614 555.4 611.4 555.8Q614 555.4 617.5 560.3Q619.9 558.8 624.7 570.5Q626.7 561.8 630.5 563.3Q633.2 560.7 638.5 573.1Q639.5 558.6 643.3 559.9Q646 557.5 650 562.3Q651.2 548.8 654.6 548.2z" fill="url(#gH2)" stroke="#2a6a1c" stroke-width=".35"/><path d="M654.6 548.2Q651.2 548.8 645.4 536.5Q643.3 542.4 640 541Q636.9 543.5 631 530.3Q630.2 543.8 626.8 542.2Q623.7 544.9 618.8 537.5Q618.4 550.1 615.6 549.5Q614 555.4 611.4 555.8z" fill="#1f5a18" opacity=".28"/><path d="M654.6 548.2L611.4 555.8" stroke="#8fd060" stroke-width=".5" opacity=".7"/><path d="M642 550.8Q644.9 551.3 645.9 562.6Q649.2 558.6 651.4 560.6Q654.6 559.5 655.4 571.6Q659.8 561.2 662.1 563.4Q665.2 562.2 666.9 569.4Q670.9 559.7 672.9 560.9Q675.9 556.8 678 557.2Q675.9 556.8 674.5 551.9Q672.2 552.4 671.8 541.9Q667.7 548.1 665.2 545.8Q662.3 547.1 661.7 535.9Q656.8 546.9 654.2 544.9Q651.4 546 649.6 541.1Q644.9 551.3 642 550.8z" fill="url(#gH1)" stroke="#2a6a1c" stroke-width=".35"/><path d="M642 550.8Q644.9 551.3 645.9 562.6Q649.2 558.6 651.4 560.6Q654.6 559.5 655.4 571.6Q659.8 561.2 662.1 563.4Q665.2 562.2 666.9 569.4Q670.9 559.7 672.9 560.9Q675.9 556.8 678 557.2z" fill="#1f5a18" opacity=".28"/><path d="M642 550.8L678 557.2" stroke="#8fd060" stroke-width=".5" opacity=".7"/><path d="M645.2 559.4Q645.7 561.9 636.8 566Q641.1 567.5 640.1 570Q641.9 572.2 632.3 576.5Q642.1 577 640.9 579.5Q642.9 581.7 637.5 585.2Q646.6 585.6 646.2 587.6Q650.4 588.7 650.8 590.6Q650.4 588.7 654 586.2Q652.9 584.4 661.3 581Q655.1 579.5 656.2 576.8Q654.3 574.9 663.2 571Q652.8 570.3 653.7 567.6Q652 565.6 655.4 562.7Q645.7 561.9 645.2 559.4z" fill="url(#gH2)" stroke="#2a6a1c" stroke-width=".35"/><path d="M645.2 559.4Q645.7 561.9 636.8 566Q641.1 567.5 640.1 570Q641.9 572.2 632.3 576.5Q642.1 577 640.9 579.5Q642.9 581.7 637.5 585.2Q646.6 585.6 646.2 587.6Q650.4 588.7 650.8 590.6z" fill="#1f5a18" opacity=".28"/><path d="M645.2 559.4L650.8 590.6" stroke="#8fd060" stroke-width=".5" opacity=".7"/><path d="M497.2 233.2C505 249.5 521.7 247.1 533.7 236.4C523.8 223.9 507.7 218.5 497.2 233.2z" fill="#8e1a12"/><path d="M497.2 233.2C505 249.5 521.7 247.1 533.7 236.4z" fill="#4a0a06" opacity=".38"/><path d="M497.2 233.2L533.7 236.4" stroke="#7a120c" stroke-width=".45" opacity=".8"/><path d="M497.2 233.2C485.8 247.5 495.3 262.3 510.2 269.1C517.3 254.4 515.1 236.9 497.2 233.2z" fill="#8e1a12"/><path d="M497.2 233.2C485.8 247.5 495.3 262.3 510.2 269.1z" fill="#4a0a06" opacity=".38"/><path d="M497.2 233.2L510.2 269.1" stroke="#7a120c" stroke-width=".45" opacity=".8"/><path d="M497.2 233.2C480.1 228.3 471.8 242.1 472.7 257.7C488.3 258.6 502 250.3 497.2 233.2z" fill="#8e1a12"/><path d="M497.2 233.2C480.1 228.3 471.8 242.1 472.7 257.7z" fill="#4a0a06" opacity=".38"/><path d="M497.2 233.2L472.7 257.7" stroke="#7a120c" stroke-width=".45" opacity=".8"/><path d="M497.2 233.2C489.2 217 472.2 219.5 460.2 230.2C470.3 242.7 486.7 247.9 497.2 233.2z" fill="#8e1a12"/><path d="M497.2 233.2C489.2 217 472.2 219.5 460.2 230.2z" fill="#4a0a06" opacity=".38"/><path d="M497.2 233.2L460.2 230.2" stroke="#7a120c" stroke-width=".45" opacity=".8"/><path d="M497.2 233.2C508.4 218.9 498.8 204.3 483.9 197.8C477 212.6 479.3 229.8 497.2 233.2z" fill="#8e1a12"/><path d="M497.2 233.2C508.4 218.9 498.8 204.3 483.9 197.8z" fill="#4a0a06" opacity=".38"/><path d="M497.2 233.2L483.9 197.8" stroke="#7a120c" stroke-width=".45" opacity=".8"/><path d="M497.2 233.2C514.9 236 522.1 221 519.8 205.3C503.9 206.4 490.8 216.5 497.2 233.2z" fill="#8e1a12"/><path d="M497.2 233.2C514.9 236 522.1 221 519.8 205.3z" fill="#4a0a06" opacity=".38"/><path d="M497.2 233.2L519.8 205.3" stroke="#7a120c" stroke-width=".45" opacity=".8"/><path d="M497.2 233.2C494.4 246.9 505.1 251.1 516.7 248.1C516.6 236.1 509.7 226.9 497.2 233.2z" fill="#b02418"/><path d="M497.2 233.2C494.4 246.9 505.1 251.1 516.7 248.1z" fill="#4a0a06" opacity=".38"/><path d="M497.2 233.2L516.7 248.1" stroke="#8a1810" stroke-width=".45" opacity=".8"/><path d="M497.2 233.2C483.8 238.1 485.2 250.6 493.3 260C503.8 253.3 508.7 241.7 497.2 233.2z" fill="#b02418"/><path d="M497.2 233.2C483.8 238.1 485.2 250.6 493.3 260z" fill="#4a0a06" opacity=".38"/><path d="M497.2 233.2L493.3 260" stroke="#8a1810" stroke-width=".45" opacity=".8"/><path d="M497.2 233.2C488.1 222.4 477.3 228 471.8 238.9C481.5 246.4 493.6 246.9 497.2 233.2z" fill="#bb2a1c"/><path d="M497.2 233.2C488.1 222.4 477.3 228 471.8 238.9z" fill="#4a0a06" opacity=".38"/><path d="M497.2 233.2L471.8 238.9" stroke="#8a1810" stroke-width=".45" opacity=".8"/><path d="M497.2 233.2C501.6 219.6 490.9 212.7 478.3 213.1C477.1 225.6 483.3 236.8 497.2 233.2z" fill="#bb2a1c"/><path d="M497.2 233.2C501.6 219.6 490.9 212.7 478.3 213.1z" fill="#4a0a06" opacity=".38"/><path d="M497.2 233.2L478.3 213.1" stroke="#8a1810" stroke-width=".45" opacity=".8"/><path d="M497.2 233.2C511.1 229.7 511.2 217 504.1 206.7C492.9 212.3 486.7 223.4 497.2 233.2z" fill="#c6321f"/><path d="M497.2 233.2C511.1 229.7 511.2 217 504.1 206.7z" fill="#4a0a06" opacity=".38"/><path d="M497.2 233.2L504.1 206.7" stroke="#8a1810" stroke-width=".45" opacity=".8"/><path d="M497.2 233.2C506 244.1 516.1 238.6 521.3 227.8C512 220.2 500.5 219.6 497.2 233.2z" fill="#b02418"/><path d="M497.2 233.2C506 244.1 516.1 238.6 521.3 227.8z" fill="#4a0a06" opacity=".38"/><path d="M497.2 233.2L521.3 227.8" stroke="#8a1810" stroke-width=".45" opacity=".8"/><circle cx="497.2" cy="233.2" r="7.4" fill="#5a0e08" opacity=".55"/><circle cx="496.2" cy="237.4" r="2" fill="#dcae3c" stroke="#7a4a12" stroke-width=".5"/><circle cx="491.5" cy="231.6" r="2" fill="#dcae3c" stroke="#7a4a12" stroke-width=".5"/><circle cx="497.9" cy="232" r="2" fill="#dcae3c" stroke="#7a4a12" stroke-width=".5"/><circle cx="496.7" cy="233.4" r="2" fill="#dcae3c" stroke="#7a4a12" stroke-width=".5"/><circle cx="499.2" cy="238.3" r="2" fill="#dcae3c" stroke="#7a4a12" stroke-width=".5"/><circle cx="496.6" cy="232.1" r="2" fill="#dcae3c" stroke="#7a4a12" stroke-width=".5"/><circle cx="496.5" cy="233.6" r="2" fill="#dcae3c" stroke="#7a4a12" stroke-width=".5"/><circle cx="497.8" cy="237.4" r="2" fill="#dcae3c" stroke="#7a4a12" stroke-width=".5"/><circle cx="498.2" cy="230.1" r="2" fill="#dcae3c" stroke="#7a4a12" stroke-width=".5"/><circle cx="492.4" cy="232.4" r="2" fill="#dcae3c" stroke="#7a4a12" stroke-width=".5"/><path d="M663.6 220C662.3 238.3 678 243.8 693.5 239.8C691.1 223.8 679.9 211.6 663.6 220z" fill="#8e1a12"/><path d="M663.6 220C662.3 238.3 678 243.8 693.5 239.8z" fill="#4a0a06" opacity=".38"/><path d="M663.6 220L693.5 239.8" stroke="#7a120c" stroke-width=".45" opacity=".8"/><path d="M663.6 220C647.4 229.1 651.1 246.1 662.8 257.7C675 246.6 679.4 229.7 663.6 220z" fill="#8e1a12"/><path d="M663.6 220C647.4 229.1 651.1 246.1 662.8 257.7z" fill="#4a0a06" opacity=".38"/><path d="M663.6 220L662.8 257.7" stroke="#7a120c" stroke-width=".45" opacity=".8"/><path d="M663.6 220C646.1 213 634 226.9 631.4 243.6C648.2 246.2 665 238.8 663.6 220z" fill="#8e1a12"/><path d="M663.6 220C646.1 213 634 226.9 631.4 243.6z" fill="#4a0a06" opacity=".38"/><path d="M663.6 220L631.4 243.6" stroke="#7a120c" stroke-width=".45" opacity=".8"/><path d="M663.6 220C663 201.3 645.8 196.2 629.8 200.9C634 217 647.3 229.1 663.6 220z" fill="#8e1a12"/><path d="M663.6 220C663 201.3 645.8 196.2 629.8 200.9z" fill="#4a0a06" opacity=".38"/><path d="M663.6 220L629.8 200.9" stroke="#7a120c" stroke-width=".45" opacity=".8"/><path d="M663.6 220C679.9 211.8 676.6 195.8 665 184.8C652.7 194.8 648 210.5 663.6 220z" fill="#8e1a12"/><path d="M663.6 220C679.9 211.8 676.6 195.8 665 184.8z" fill="#4a0a06" opacity=".38"/><path d="M663.6 220L665 184.8" stroke="#7a120c" stroke-width=".45" opacity=".8"/><path d="M663.6 220C679.7 229.4 693.2 217.6 697.8 201.5C681.8 196.5 664.6 201.3 663.6 220z" fill="#8e1a12"/><path d="M663.6 220C679.7 229.4 693.2 217.6 697.8 201.5z" fill="#4a0a06" opacity=".38"/><path d="M663.6 220L697.8 201.5" stroke="#7a120c" stroke-width=".45" opacity=".8"/><path d="M663.6 220C656 232.8 665.3 242.6 678.1 245.4C682.2 233 678.5 220 663.6 220z" fill="#b02418"/><path d="M663.6 220C656 232.8 665.3 242.6 678.1 245.4z" fill="#4a0a06" opacity=".38"/><path d="M663.6 220L678.1 245.4" stroke="#8a1810" stroke-width=".45" opacity=".8"/><path d="M663.6 220C648.9 221.6 646.9 234.7 652.4 246.4C664.7 242.2 672.7 231.6 663.6 220z" fill="#b02418"/><path d="M663.6 220C648.9 221.6 646.9 234.7 652.4 246.4z" fill="#4a0a06" opacity=".38"/><path d="M663.6 220L652.4 246.4" stroke="#8a1810" stroke-width=".45" opacity=".8"/><path d="M663.6 220C655.4 208 643.7 212.6 636.8 223.2C646 231.8 658.4 233.6 663.6 220z" fill="#b02418"/><path d="M663.6 220C655.4 208 643.7 212.6 636.8 223.2z" fill="#4a0a06" opacity=".38"/><path d="M663.6 220L636.8 223.2" stroke="#8a1810" stroke-width=".45" opacity=".8"/><path d="M663.6 220C672.6 208.7 664.8 199.5 652.8 196.5C647.2 207.6 649.2 219.5 663.6 220z" fill="#b02418"/><path d="M663.6 220C672.6 208.7 664.8 199.5 652.8 196.5z" fill="#4a0a06" opacity=".38"/><path d="M663.6 220L652.8 196.5" stroke="#8a1810" stroke-width=".45" opacity=".8"/><path d="M663.6 220C678.4 221.3 683.1 208.6 680.1 195.9C667.1 197.7 657.1 206.7 663.6 220z" fill="#bb2a1c"/><path d="M663.6 220C678.4 221.3 683.1 208.6 680.1 195.9z" fill="#4a0a06" opacity=".38"/><path d="M663.6 220L680.1 195.9" stroke="#8a1810" stroke-width=".45" opacity=".8"/><path d="M663.6 220C671.8 232.2 684.2 227.9 691.8 217.5C682.5 208.6 669.5 206.5 663.6 220z" fill="#c6321f"/><path d="M663.6 220C671.8 232.2 684.2 227.9 691.8 217.5z" fill="#4a0a06" opacity=".38"/><path d="M663.6 220L691.8 217.5" stroke="#8a1810" stroke-width=".45" opacity=".8"/><circle cx="663.6" cy="220" r="7.6" fill="#5a0e08" opacity=".55"/><circle cx="662.1" cy="219.3" r="2.1" fill="#dcae3c" stroke="#7a4a12" stroke-width=".5"/><circle cx="664" cy="224.1" r="2.1" fill="#dcae3c" stroke="#7a4a12" stroke-width=".5"/><circle cx="666.1" cy="224.2" r="2.1" fill="#dcae3c" stroke="#7a4a12" stroke-width=".5"/><circle cx="663.9" cy="215.2" r="2.1" fill="#dcae3c" stroke="#7a4a12" stroke-width=".5"/><circle cx="664.4" cy="225" r="2.1" fill="#dcae3c" stroke="#7a4a12" stroke-width=".5"/><circle cx="663.2" cy="220.6" r="2.1" fill="#dcae3c" stroke="#7a4a12" stroke-width=".5"/><circle cx="660.3" cy="219.1" r="2.1" fill="#dcae3c" stroke="#7a4a12" stroke-width=".5"/><circle cx="657.9" cy="220.9" r="2.1" fill="#dcae3c" stroke="#7a4a12" stroke-width=".5"/><circle cx="664" cy="220.4" r="2.1" fill="#dcae3c" stroke="#7a4a12" stroke-width=".5"/><circle cx="665.6" cy="218.4" r="2.1" fill="#dcae3c" stroke="#7a4a12" stroke-width=".5"/><path d="M655.2 330C660.9 342.6 674.4 341.4 684.2 333.7C676.6 323.9 664 319.3 655.2 330z" fill="#8e1a12"/><path d="M655.2 330C660.9 342.6 674.4 341.4 684.2 333.7z" fill="#4a0a06" opacity=".38"/><path d="M655.2 330L684.2 333.7" stroke="#7a120c" stroke-width=".45" opacity=".8"/><path d="M655.2 330C646.3 340.1 653 350.4 663.9 355.1C669.6 344.6 668.5 332.4 655.2 330z" fill="#8e1a12"/><path d="M655.2 330C646.3 340.1 653 350.4 663.9 355.1z" fill="#4a0a06" opacity=".38"/><path d="M655.2 330L663.9 355.1" stroke="#7a120c" stroke-width=".45" opacity=".8"/><path d="M655.2 330C641.8 328.4 637 339.8 639.3 351.5C651.1 350.3 660.7 342.4 655.2 330z" fill="#8e1a12"/><path d="M655.2 330C641.8 328.4 637 339.8 639.3 351.5z" fill="#4a0a06" opacity=".38"/><path d="M655.2 330L639.3 351.5" stroke="#7a120c" stroke-width=".45" opacity=".8"/><path d="M655.2 330C650.4 317.1 637.3 317.6 627.3 324.6C634 334.9 646 340.2 655.2 330z" fill="#8e1a12"/><path d="M655.2 330C650.4 317.1 637.3 317.6 627.3 324.6z" fill="#4a0a06" opacity=".38"/><path d="M655.2 330L627.3 324.6" stroke="#7a120c" stroke-width=".45" opacity=".8"/><path d="M655.2 330C663.7 319.2 656.4 308.2 645.1 303.4C639.9 314.5 641.7 327.5 655.2 330z" fill="#8e1a12"/><path d="M655.2 330C663.7 319.2 656.4 308.2 645.1 303.4z" fill="#4a0a06" opacity=".38"/><path d="M655.2 330L645.1 303.4" stroke="#7a120c" stroke-width=".45" opacity=".8"/><path d="M655.2 330C668.9 330.3 673.2 318 670.3 306.2C658.3 308.6 649 317.8 655.2 330z" fill="#8e1a12"/><path d="M655.2 330C668.9 330.3 673.2 318 670.3 306.2z" fill="#4a0a06" opacity=".38"/><path d="M655.2 330L670.3 306.2" stroke="#7a120c" stroke-width=".45" opacity=".8"/><path d="M655.2 330C654.1 340.6 662.5 343.1 671.1 340C670.1 331 664.3 324.5 655.2 330z" fill="#c6321f"/><path d="M655.2 330C654.1 340.6 662.5 343.1 671.1 340z" fill="#4a0a06" opacity=".38"/><path d="M655.2 330L671.1 340" stroke="#8a1810" stroke-width=".45" opacity=".8"/><path d="M655.2 330C645.4 335 647.2 345 654 352C661.5 345.8 664.4 336 655.2 330z" fill="#bb2a1c"/><path d="M655.2 330C645.4 335 647.2 345 654 352z" fill="#4a0a06" opacity=".38"/><path d="M655.2 330L654 352" stroke="#8a1810" stroke-width=".45" opacity=".8"/><path d="M655.2 330C646.7 323.5 640 329.4 637.9 338.4C646.2 342.3 655 340.7 655.2 330z" fill="#c6321f"/><path d="M655.2 330C646.7 323.5 640 329.4 637.9 338.4z" fill="#4a0a06" opacity=".38"/><path d="M655.2 330L637.9 338.4" stroke="#8a1810" stroke-width=".45" opacity=".8"/><path d="M655.2 330C657 319.6 648.9 316.5 640.1 319C640.5 328.1 645.8 335 655.2 330z" fill="#bb2a1c"/><path d="M655.2 330C657 319.6 648.9 316.5 640.1 319z" fill="#4a0a06" opacity=".38"/><path d="M655.2 330L640.1 319" stroke="#8a1810" stroke-width=".45" opacity=".8"/><path d="M655.2 330C665.1 325.2 663.5 315.2 656.9 308C649.3 314.1 646.1 323.8 655.2 330z" fill="#bb2a1c"/><path d="M655.2 330C665.1 325.2 663.5 315.2 656.9 308z" fill="#4a0a06" opacity=".38"/><path d="M655.2 330L656.9 308" stroke="#8a1810" stroke-width=".45" opacity=".8"/><path d="M655.2 330C664.2 335.7 670.5 329.2 671.8 320.1C663.2 317 654.5 319.3 655.2 330z" fill="#c6321f"/><path d="M655.2 330C664.2 335.7 670.5 329.2 671.8 320.1z" fill="#4a0a06" opacity=".38"/><path d="M655.2 330L671.8 320.1" stroke="#8a1810" stroke-width=".45" opacity=".8"/><circle cx="655.2" cy="330" r="5.6" fill="#5a0e08" opacity=".55"/><circle cx="656.6" cy="329.6" r="1.5" fill="#dcae3c" stroke="#7a4a12" stroke-width=".5"/><circle cx="654.2" cy="326.8" r="1.5" fill="#dcae3c" stroke="#7a4a12" stroke-width=".5"/><circle cx="657.3" cy="332.2" r="1.5" fill="#dcae3c" stroke="#7a4a12" stroke-width=".5"/><circle cx="658.6" cy="327.5" r="1.5" fill="#dcae3c" stroke="#7a4a12" stroke-width=".5"/><circle cx="655.2" cy="326.2" r="1.5" fill="#dcae3c" stroke="#7a4a12" stroke-width=".5"/><circle cx="655.2" cy="330" r="1.5" fill="#dcae3c" stroke="#7a4a12" stroke-width=".5"/><circle cx="656.8" cy="327" r="1.5" fill="#dcae3c" stroke="#7a4a12" stroke-width=".5"/><circle cx="653.4" cy="330.4" r="1.5" fill="#dcae3c" stroke="#7a4a12" stroke-width=".5"/><circle cx="658.1" cy="330.5" r="1.5" fill="#dcae3c" stroke="#7a4a12" stroke-width=".5"/><circle cx="656.9" cy="332.6" r="1.5" fill="#dcae3c" stroke="#7a4a12" stroke-width=".5"/><path d="M664.8 401C663.4 411.5 672.2 415.2 681.3 413.3C680.5 404.1 674.5 396.7 664.8 401z" fill="#8e1a12"/><path d="M664.8 401C663.4 411.5 672.2 415.2 681.3 413.3z" fill="#4a0a06" opacity=".38"/><path d="M664.8 401L681.3 413.3" stroke="#7a120c" stroke-width=".45" opacity=".8"/><path d="M664.8 401C654.5 403.4 654.2 413 659.1 420.9C667.5 416.8 672.3 408.5 664.8 401z" fill="#8e1a12"/><path d="M664.8 401C654.5 403.4 654.2 413 659.1 420.9z" fill="#4a0a06" opacity=".38"/><path d="M664.8 401L659.1 420.9" stroke="#7a120c" stroke-width=".45" opacity=".8"/><path d="M664.8 401C657.1 393.7 649 398.7 645.3 407.2C653.2 412 662.7 411.4 664.8 401z" fill="#8e1a12"/><path d="M664.8 401C657.1 393.7 649 398.7 645.3 407.2z" fill="#4a0a06" opacity=".38"/><path d="M664.8 401L645.3 407.2" stroke="#7a120c" stroke-width=".45" opacity=".8"/><path d="M664.8 401C666.1 390.4 657 386.4 647.6 388C648.6 397.4 654.9 405.1 664.8 401z" fill="#8e1a12"/><path d="M664.8 401C666.1 390.4 657 386.4 647.6 388z" fill="#4a0a06" opacity=".38"/><path d="M664.8 401L647.6 388" stroke="#7a120c" stroke-width=".45" opacity=".8"/><path d="M664.8 401C675.2 398 675.7 387.4 670.9 379C662.4 383.7 657.4 393 664.8 401z" fill="#8e1a12"/><path d="M664.8 401C675.2 398 675.7 387.4 670.9 379z" fill="#4a0a06" opacity=".38"/><path d="M664.8 401L670.9 379" stroke="#7a120c" stroke-width=".45" opacity=".8"/><path d="M664.8 401C673.3 407.7 682.1 402.1 686.2 393.2C677.4 389.1 667 390.4 664.8 401z" fill="#8e1a12"/><path d="M664.8 401C673.3 407.7 682.1 402.1 686.2 393.2z" fill="#4a0a06" opacity=".38"/><path d="M664.8 401L686.2 393.2" stroke="#7a120c" stroke-width=".45" opacity=".8"/><path d="M664.8 401C658.8 407 662.7 413.5 669.5 416.6C673.4 410.3 673.1 402.7 664.8 401z" fill="#b02418"/><path d="M664.8 401C658.8 407 662.7 413.5 669.5 416.6z" fill="#4a0a06" opacity=".38"/><path d="M664.8 401L669.5 416.6" stroke="#8a1810" stroke-width=".45" opacity=".8"/><path d="M664.8 401C656.4 399.7 653.5 406.6 655 413.9C662.4 413.4 668.3 408.8 664.8 401z" fill="#b02418"/><path d="M664.8 401C656.4 399.7 653.5 406.6 655 413.9z" fill="#4a0a06" opacity=".38"/><path d="M664.8 401L655 413.9" stroke="#8a1810" stroke-width=".45" opacity=".8"/><path d="M664.8 401C661 393.2 653 394.5 647.3 399.7C652.1 405.7 659.8 408.1 664.8 401z" fill="#b02418"/><path d="M664.8 401C661 393.2 653 394.5 647.3 399.7z" fill="#4a0a06" opacity=".38"/><path d="M664.8 401L647.3 399.7" stroke="#8a1810" stroke-width=".45" opacity=".8"/><path d="M664.8 401C671 395.1 667.4 388.2 660.7 384.6C656.5 390.9 656.5 398.7 664.8 401z" fill="#bb2a1c"/><path d="M664.8 401C671 395.1 667.4 388.2 660.7 384.6z" fill="#4a0a06" opacity=".38"/><path d="M664.8 401L660.7 384.6" stroke="#8a1810" stroke-width=".45" opacity=".8"/><path d="M664.8 401C672.9 403.3 676.2 397 675.2 389.9C668 389.4 661.9 393.1 664.8 401z" fill="#bb2a1c"/><path d="M664.8 401C672.9 403.3 676.2 397 675.2 389.9z" fill="#4a0a06" opacity=".38"/><path d="M664.8 401L675.2 389.9" stroke="#8a1810" stroke-width=".45" opacity=".8"/><path d="M664.8 401C667.8 408.9 675.2 408 680.7 403C676.6 396.9 669.7 394.1 664.8 401z" fill="#c6321f"/><path d="M664.8 401C667.8 408.9 675.2 408 680.7 403z" fill="#4a0a06" opacity=".38"/><path d="M664.8 401L680.7 403" stroke="#8a1810" stroke-width=".45" opacity=".8"/><circle cx="664.8" cy="401" r="4.4" fill="#5a0e08" opacity=".55"/><circle cx="665.3" cy="400.4" r="1.2" fill="#dcae3c" stroke="#7a4a12" stroke-width=".5"/><circle cx="665.3" cy="401.4" r="1.2" fill="#dcae3c" stroke="#7a4a12" stroke-width=".5"/><circle cx="665.8" cy="402.5" r="1.2" fill="#dcae3c" stroke="#7a4a12" stroke-width=".5"/><circle cx="662.9" cy="400.8" r="1.2" fill="#dcae3c" stroke="#7a4a12" stroke-width=".5"/><circle cx="664.9" cy="402.1" r="1.2" fill="#dcae3c" stroke="#7a4a12" stroke-width=".5"/><circle cx="665.6" cy="400.4" r="1.2" fill="#dcae3c" stroke="#7a4a12" stroke-width=".5"/><circle cx="663.8" cy="401.4" r="1.2" fill="#dcae3c" stroke="#7a4a12" stroke-width=".5"/><circle cx="664.2" cy="403.6" r="1.2" fill="#dcae3c" stroke="#7a4a12" stroke-width=".5"/><circle cx="664.9" cy="401.5" r="1.2" fill="#dcae3c" stroke="#7a4a12" stroke-width=".5"/><circle cx="665.5" cy="401.1" r="1.2" fill="#dcae3c" stroke="#7a4a12" stroke-width=".5"/><path d="M479 346C480.8 358 491.8 359.5 501.5 354.9C497.6 344.9 488.5 338.5 479 346z" fill="#8e1a12"/><path d="M479 346C480.8 358 491.8 359.5 501.5 354.9z" fill="#4a0a06" opacity=".38"/><path d="M479 346L501.5 354.9" stroke="#7a120c" stroke-width=".45" opacity=".8"/><path d="M479 346C469.2 353.2 473 364 481.5 370.6C488.6 362.4 490.1 351.1 479 346z" fill="#8e1a12"/><path d="M479 346C469.2 353.2 473 364 481.5 370.6z" fill="#4a0a06" opacity=".38"/><path d="M479 346L481.5 370.6" stroke="#7a120c" stroke-width=".45" opacity=".8"/><path d="M479 346C467.6 342 461.4 350.9 461.2 361.5C471.7 362.8 481.5 357.8 479 346z" fill="#8e1a12"/><path d="M479 346C467.6 342 461.4 350.9 461.2 361.5z" fill="#4a0a06" opacity=".38"/><path d="M479 346L461.2 361.5" stroke="#7a120c" stroke-width=".45" opacity=".8"/><path d="M479 346C476.3 334.3 465.3 333.8 456.3 339.4C460.9 349 470.4 354.4 479 346z" fill="#8e1a12"/><path d="M479 346C476.3 334.3 465.3 333.8 456.3 339.4z" fill="#4a0a06" opacity=".38"/><path d="M479 346L456.3 339.4" stroke="#7a120c" stroke-width=".45" opacity=".8"/><path d="M479 346C489.1 339.2 485.9 328.2 477.6 321.2C470.2 329.1 468.2 340.4 479 346z" fill="#8e1a12"/><path d="M479 346C489.1 339.2 485.9 328.2 477.6 321.2z" fill="#4a0a06" opacity=".38"/><path d="M479 346L477.6 321.2" stroke="#7a120c" stroke-width=".45" opacity=".8"/><path d="M479 346C490 351.3 497.9 342.9 499.8 332.2C489.2 329.8 478.4 333.8 479 346z" fill="#8e1a12"/><path d="M479 346C490 351.3 497.9 342.9 499.8 332.2z" fill="#4a0a06" opacity=".38"/><path d="M479 346L499.8 332.2" stroke="#7a120c" stroke-width=".45" opacity=".8"/><path d="M479 346C474.3 354.6 480.7 361.1 489.2 362.8C491.6 354.5 488.8 345.8 479 346z" fill="#b02418"/><path d="M479 346C474.3 354.6 480.7 361.1 489.2 362.8z" fill="#4a0a06" opacity=".38"/><path d="M479 346L489.2 362.8" stroke="#8a1810" stroke-width=".45" opacity=".8"/><path d="M479 346C469.3 346.1 467.3 354.4 470.3 362.3C478.5 360.4 484.3 354.1 479 346z" fill="#b02418"/><path d="M479 346C469.3 346.1 467.3 354.4 470.3 362.3z" fill="#4a0a06" opacity=".38"/><path d="M479 346L470.3 362.3" stroke="#8a1810" stroke-width=".45" opacity=".8"/><path d="M479 346C473 338.7 466.2 342.5 462.9 349.9C469.3 354.9 477 355.2 479 346z" fill="#c6321f"/><path d="M479 346C473 338.7 466.2 342.5 462.9 349.9z" fill="#4a0a06" opacity=".38"/><path d="M479 346L462.9 349.9" stroke="#8a1810" stroke-width=".45" opacity=".8"/><path d="M479 346C482.4 337.1 475.7 332.9 467.6 333.5C466.3 341.5 469.9 348.6 479 346z" fill="#c6321f"/><path d="M479 346C482.4 337.1 475.7 332.9 467.6 333.5z" fill="#4a0a06" opacity=".38"/><path d="M479 346L467.6 333.5" stroke="#8a1810" stroke-width=".45" opacity=".8"/><path d="M479 346C488.7 345.5 490.7 336.9 487.5 328.9C479.2 331.2 473.5 337.9 479 346z" fill="#c6321f"/><path d="M479 346C488.7 345.5 490.7 336.9 487.5 328.9z" fill="#4a0a06" opacity=".38"/><path d="M479 346L487.5 328.9" stroke="#8a1810" stroke-width=".45" opacity=".8"/><path d="M479 346C483.5 354.3 490.9 351.9 495.7 345.3C490.4 339.1 482.8 337.3 479 346z" fill="#b02418"/><path d="M479 346C483.5 354.3 490.9 351.9 495.7 345.3z" fill="#4a0a06" opacity=".38"/><path d="M479 346L495.7 345.3" stroke="#8a1810" stroke-width=".45" opacity=".8"/><circle cx="479" cy="346" r="5" fill="#5a0e08" opacity=".55"/><circle cx="479.5" cy="348.4" r="1.4" fill="#dcae3c" stroke="#7a4a12" stroke-width=".5"/><circle cx="479.4" cy="343.9" r="1.4" fill="#dcae3c" stroke="#7a4a12" stroke-width=".5"/><circle cx="477.5" cy="346.8" r="1.4" fill="#dcae3c" stroke="#7a4a12" stroke-width=".5"/><circle cx="478.9" cy="346.5" r="1.4" fill="#dcae3c" stroke="#7a4a12" stroke-width=".5"/><circle cx="479.5" cy="348.7" r="1.4" fill="#dcae3c" stroke="#7a4a12" stroke-width=".5"/><circle cx="478.2" cy="345.1" r="1.4" fill="#dcae3c" stroke="#7a4a12" stroke-width=".5"/><circle cx="478.6" cy="344.4" r="1.4" fill="#dcae3c" stroke="#7a4a12" stroke-width=".5"/><circle cx="477.9" cy="348.2" r="1.4" fill="#dcae3c" stroke="#7a4a12" stroke-width=".5"/><circle cx="482.3" cy="347.8" r="1.4" fill="#dcae3c" stroke="#7a4a12" stroke-width=".5"/><circle cx="478.6" cy="343.9" r="1.4" fill="#dcae3c" stroke="#7a4a12" stroke-width=".5"/><path d="M491 418C486 430.7 496 438.6 508 439.6C509.8 427.6 504.5 416.1 491 418z" fill="#8e1a12"/><path d="M491 418C486 430.7 496 438.6 508 439.6z" fill="#4a0a06" opacity=".38"/><path d="M491 418L508 439.6" stroke="#7a120c" stroke-width=".45" opacity=".8"/><path d="M491 418C477.6 419.7 475.6 432.1 480.7 442.9C492 438.8 499.3 428.7 491 418z" fill="#8e1a12"/><path d="M491 418C477.6 419.7 475.6 432.1 480.7 442.9z" fill="#4a0a06" opacity=".38"/><path d="M491 418L480.7 442.9" stroke="#7a120c" stroke-width=".45" opacity=".8"/><path d="M491 418C482.7 407.3 471 411.8 464.1 421.6C473.4 429.3 485.9 430.6 491 418z" fill="#8e1a12"/><path d="M491 418C482.7 407.3 471 411.8 464.1 421.6z" fill="#4a0a06" opacity=".38"/><path d="M491 418L464.1 421.6" stroke="#7a120c" stroke-width=".45" opacity=".8"/><path d="M491 418C495.6 405 485 396.7 472.7 395.5C471.4 407.8 477.3 419.8 491 418z" fill="#8e1a12"/><path d="M491 418C495.6 405 485 396.7 472.7 395.5z" fill="#4a0a06" opacity=".38"/><path d="M491 418L472.7 395.5" stroke="#7a120c" stroke-width=".45" opacity=".8"/><path d="M491 418C504.5 417.1 506.9 405.1 502.4 394.2C491 397.5 483.2 407 491 418z" fill="#8e1a12"/><path d="M491 418C504.5 417.1 506.9 405.1 502.4 394.2z" fill="#4a0a06" opacity=".38"/><path d="M491 418L502.4 394.2" stroke="#7a120c" stroke-width=".45" opacity=".8"/><path d="M491 418C499.9 428.2 511 422.9 517 412.6C507.4 405.6 495.1 405.1 491 418z" fill="#8e1a12"/><path d="M491 418C499.9 428.2 511 422.9 517 412.6z" fill="#4a0a06" opacity=".38"/><path d="M491 418L517 412.6" stroke="#7a120c" stroke-width=".45" opacity=".8"/><path d="M491 418C481.7 423 484.4 431.2 491.8 436.5C498.7 430.6 500.7 422.2 491 418z" fill="#b02418"/><path d="M491 418C481.7 423 484.4 431.2 491.8 436.5z" fill="#4a0a06" opacity=".38"/><path d="M491 418L491.8 436.5" stroke="#8a1810" stroke-width=".45" opacity=".8"/><path d="M491 418C481 414.1 475.7 421.9 475.8 431.2C485 432.6 493.4 428.5 491 418z" fill="#bb2a1c"/><path d="M491 418C481 414.1 475.7 421.9 475.8 431.2z" fill="#4a0a06" opacity=".38"/><path d="M491 418L475.8 431.2" stroke="#8a1810" stroke-width=".45" opacity=".8"/><path d="M491 418C488.8 407.4 479.2 406.9 471.1 411.9C475 420.5 483.2 425.6 491 418z" fill="#bb2a1c"/><path d="M491 418C488.8 407.4 479.2 406.9 471.1 411.9z" fill="#4a0a06" opacity=".38"/><path d="M491 418L471.1 411.9" stroke="#8a1810" stroke-width=".45" opacity=".8"/><path d="M491 418C500.2 412.7 497.2 404.5 489.7 399.5C482.9 405.6 481.2 414.1 491 418z" fill="#b02418"/><path d="M491 418C500.2 412.7 497.2 404.5 489.7 399.5z" fill="#4a0a06" opacity=".38"/><path d="M491 418L489.7 399.5" stroke="#8a1810" stroke-width=".45" opacity=".8"/><path d="M491 418C500.9 422.6 507.2 415.1 508.2 405.6C498.9 403.5 489.7 407.2 491 418z" fill="#bb2a1c"/><path d="M491 418C500.9 422.6 507.2 415.1 508.2 405.6z" fill="#4a0a06" opacity=".38"/><path d="M491 418L508.2 405.6" stroke="#8a1810" stroke-width=".45" opacity=".8"/><path d="M491 418C491.9 428.9 501.7 430.9 510.7 427.2C507.8 418 500 411.7 491 418z" fill="#bb2a1c"/><path d="M491 418C491.9 428.9 501.7 430.9 510.7 427.2z" fill="#4a0a06" opacity=".38"/><path d="M491 418L510.7 427.2" stroke="#8a1810" stroke-width=".45" opacity=".8"/><circle cx="491" cy="418" r="5.6" fill="#5a0e08" opacity=".55"/><circle cx="489.7" cy="415" r="1.5" fill="#dcae3c" stroke="#7a4a12" stroke-width=".5"/><circle cx="490.9" cy="417.2" r="1.5" fill="#dcae3c" stroke="#7a4a12" stroke-width=".5"/><circle cx="493.7" cy="415.7" r="1.5" fill="#dcae3c" stroke="#7a4a12" stroke-width=".5"/><circle cx="491.7" cy="416.2" r="1.5" fill="#dcae3c" stroke="#7a4a12" stroke-width=".5"/><circle cx="491.7" cy="418.7" r="1.5" fill="#dcae3c" stroke="#7a4a12" stroke-width=".5"/><circle cx="489.5" cy="417.7" r="1.5" fill="#dcae3c" stroke="#7a4a12" stroke-width=".5"/><circle cx="491" cy="414.8" r="1.5" fill="#dcae3c" stroke="#7a4a12" stroke-width=".5"/><circle cx="489.9" cy="417" r="1.5" fill="#dcae3c" stroke="#7a4a12" stroke-width=".5"/><circle cx="487.9" cy="419.5" r="1.5" fill="#dcae3c" stroke="#7a4a12" stroke-width=".5"/><circle cx="490.8" cy="417.7" r="1.5" fill="#dcae3c" stroke="#7a4a12" stroke-width=".5"/><path d="M482.7 528.4C487.1 546.8 504.7 547.8 519.2 539.3C511.8 524.3 496.5 515.4 482.7 528.4z" fill="#8e1a12"/><path d="M482.7 528.4C487.1 546.8 504.7 547.8 519.2 539.3z" fill="#4a0a06" opacity=".38"/><path d="M482.7 528.4L519.2 539.3" stroke="#7a120c" stroke-width=".45" opacity=".8"/><path d="M482.7 528.4C469.2 542.1 477.6 558.6 492.4 567.3C501.4 552.6 501 534.2 482.7 528.4z" fill="#8e1a12"/><path d="M482.7 528.4C469.2 542.1 477.6 558.6 492.4 567.3z" fill="#4a0a06" opacity=".38"/><path d="M482.7 528.4L492.4 567.3" stroke="#7a120c" stroke-width=".45" opacity=".8"/><path d="M482.7 528.4C464.6 522.3 454 536.8 453.1 553.8C470 555.5 486 547.2 482.7 528.4z" fill="#8e1a12"/><path d="M482.7 528.4C464.6 522.3 454 536.8 453.1 553.8z" fill="#4a0a06" opacity=".38"/><path d="M482.7 528.4L453.1 553.8" stroke="#7a120c" stroke-width=".45" opacity=".8"/><path d="M482.7 528.4C477 510.3 459.5 510.6 445.7 520.1C454.1 534.6 469.9 542.3 482.7 528.4z" fill="#8e1a12"/><path d="M482.7 528.4C477 510.3 459.5 510.6 445.7 520.1z" fill="#4a0a06" opacity=".38"/><path d="M482.7 528.4L445.7 520.1" stroke="#7a120c" stroke-width=".45" opacity=".8"/><path d="M482.7 528.4C495.9 514.6 487.3 498.6 472.3 490.5C463.6 505.1 464.3 523.2 482.7 528.4z" fill="#8e1a12"/><path d="M482.7 528.4C495.9 514.6 487.3 498.6 472.3 490.5z" fill="#4a0a06" opacity=".38"/><path d="M482.7 528.4L472.3 490.5" stroke="#7a120c" stroke-width=".45" opacity=".8"/><path d="M482.7 528.4C500.7 533.5 509.3 519.1 508.3 502.7C491.9 501.7 477.5 510.4 482.7 528.4z" fill="#8e1a12"/><path d="M482.7 528.4C500.7 533.5 509.3 519.1 508.3 502.7z" fill="#4a0a06" opacity=".38"/><path d="M482.7 528.4L508.3 502.7" stroke="#7a120c" stroke-width=".45" opacity=".8"/><path d="M482.7 528.4C476.6 542.2 487.2 550.5 500.3 551.3C502.9 538.3 497.6 526 482.7 528.4z" fill="#b02418"/><path d="M482.7 528.4C476.6 542.2 487.2 550.5 500.3 551.3z" fill="#4a0a06" opacity=".38"/><path d="M482.7 528.4L500.3 551.3" stroke="#8a1810" stroke-width=".45" opacity=".8"/><path d="M482.7 528.4C468.1 532.4 468.2 546 475.8 556.9C487.6 550.7 493.9 538.6 482.7 528.4z" fill="#c6321f"/><path d="M482.7 528.4C468.1 532.4 468.2 546 475.8 556.9z" fill="#4a0a06" opacity=".38"/><path d="M482.7 528.4L475.8 556.9" stroke="#8a1810" stroke-width=".45" opacity=".8"/><path d="M482.7 528.4C472 517.4 459.4 524 452.9 535.9C464.2 543.3 478.5 543.1 482.7 528.4z" fill="#b02418"/><path d="M482.7 528.4C472 517.4 459.4 524 452.9 535.9z" fill="#4a0a06" opacity=".38"/><path d="M482.7 528.4L452.9 535.9" stroke="#8a1810" stroke-width=".45" opacity=".8"/><path d="M482.7 528.4C486 513.7 474.2 508 461.3 509.9C461.2 523 468.7 533.8 482.7 528.4z" fill="#b02418"/><path d="M482.7 528.4C486 513.7 474.2 508 461.3 509.9z" fill="#4a0a06" opacity=".38"/><path d="M482.7 528.4L461.3 509.9" stroke="#8a1810" stroke-width=".45" opacity=".8"/><path d="M482.7 528.4C497.4 525.5 497.9 512.5 490.8 501.5C478.9 506.7 472 517.8 482.7 528.4z" fill="#bb2a1c"/><path d="M482.7 528.4C497.4 525.5 497.9 512.5 490.8 501.5z" fill="#4a0a06" opacity=".38"/><path d="M482.7 528.4L490.8 501.5" stroke="#8a1810" stroke-width=".45" opacity=".8"/><path d="M482.7 528.4C491.5 540.6 503.7 535.6 510.7 524.6C501 515.9 487.9 514.3 482.7 528.4z" fill="#b02418"/><path d="M482.7 528.4C491.5 540.6 503.7 535.6 510.7 524.6z" fill="#4a0a06" opacity=".38"/><path d="M482.7 528.4L510.7 524.6" stroke="#8a1810" stroke-width=".45" opacity=".8"/><circle cx="482.7" cy="528.4" r="7.8" fill="#5a0e08" opacity=".55"/><circle cx="482.6" cy="532.4" r="2.1" fill="#dcae3c" stroke="#7a4a12" stroke-width=".5"/><circle cx="484.8" cy="533.3" r="2.1" fill="#dcae3c" stroke="#7a4a12" stroke-width=".5"/><circle cx="482.5" cy="528.2" r="2.1" fill="#dcae3c" stroke="#7a4a12" stroke-width=".5"/><circle cx="479.4" cy="526.1" r="2.1" fill="#dcae3c" stroke="#7a4a12" stroke-width=".5"/><circle cx="481.3" cy="527.2" r="2.1" fill="#dcae3c" stroke="#7a4a12" stroke-width=".5"/><circle cx="480.2" cy="526.9" r="2.1" fill="#dcae3c" stroke="#7a4a12" stroke-width=".5"/><circle cx="484.2" cy="524" r="2.1" fill="#dcae3c" stroke="#7a4a12" stroke-width=".5"/><circle cx="480.1" cy="526.4" r="2.1" fill="#dcae3c" stroke="#7a4a12" stroke-width=".5"/><circle cx="481.9" cy="534.3" r="2.1" fill="#dcae3c" stroke="#7a4a12" stroke-width=".5"/><circle cx="485.9" cy="529.1" r="2.1" fill="#dcae3c" stroke="#7a4a12" stroke-width=".5"/><path d="M648 514C645.2 531.7 660.2 539 676 536.8C675 521 664.8 507.7 648 514z" fill="#8e1a12"/><path d="M648 514C645.2 531.7 660.2 539 676 536.8z" fill="#4a0a06" opacity=".38"/><path d="M648 514L676 536.8" stroke="#7a120c" stroke-width=".45" opacity=".8"/><path d="M648 514C632.2 522.6 635.6 539.1 646.9 550.4C658.9 539.8 663.2 523.6 648 514z" fill="#8e1a12"/><path d="M648 514C632.2 522.6 635.6 539.1 646.9 550.4z" fill="#4a0a06" opacity=".38"/><path d="M648 514L646.9 550.4" stroke="#7a120c" stroke-width=".45" opacity=".8"/><path d="M648 514C632.9 503.9 619.1 514.5 613.7 529.8C628.9 535.7 646 532.1 648 514z" fill="#8e1a12"/><path d="M648 514C632.9 503.9 619.1 514.5 613.7 529.8z" fill="#4a0a06" opacity=".38"/><path d="M648 514L613.7 529.8" stroke="#7a120c" stroke-width=".45" opacity=".8"/><path d="M648 514C646.9 495.8 629.9 491 614.2 495.8C618.8 511.5 632.2 523.1 648 514z" fill="#8e1a12"/><path d="M648 514C646.9 495.8 629.9 491 614.2 495.8z" fill="#4a0a06" opacity=".38"/><path d="M648 514L614.2 495.8" stroke="#7a120c" stroke-width=".45" opacity=".8"/><path d="M648 514C664.3 506.3 661.9 489.7 651.3 477.8C638.7 487.6 633.3 503.6 648 514z" fill="#8e1a12"/><path d="M648 514C664.3 506.3 661.9 489.7 651.3 477.8z" fill="#4a0a06" opacity=".38"/><path d="M648 514L651.3 477.8" stroke="#7a120c" stroke-width=".45" opacity=".8"/><path d="M648 514C661.9 525.5 675.9 516.2 682.1 501.5C667.9 494.3 651.2 496.3 648 514z" fill="#8e1a12"/><path d="M648 514C661.9 525.5 675.9 516.2 682.1 501.5z" fill="#4a0a06" opacity=".38"/><path d="M648 514L682.1 501.5" stroke="#7a120c" stroke-width=".45" opacity=".8"/><path d="M648 514C639.7 525.5 647.8 534.8 659.8 537.7C664.7 526.4 662.2 514.3 648 514z" fill="#b02418"/><path d="M648 514C639.7 525.5 647.8 534.8 659.8 537.7z" fill="#4a0a06" opacity=".38"/><path d="M648 514L659.8 537.7" stroke="#8a1810" stroke-width=".45" opacity=".8"/><path d="M648 514C633.9 512.2 629.5 523.9 632.5 535.9C644.9 534.8 654.4 526.7 648 514z" fill="#c6321f"/><path d="M648 514C633.9 512.2 629.5 523.9 632.5 535.9z" fill="#4a0a06" opacity=".38"/><path d="M648 514L632.5 535.9" stroke="#8a1810" stroke-width=".45" opacity=".8"/><path d="M648 514C643.6 500.5 631.4 501.7 622.1 509.7C628.4 520.3 639.5 525.3 648 514z" fill="#b02418"/><path d="M648 514C643.6 500.5 631.4 501.7 622.1 509.7z" fill="#4a0a06" opacity=".38"/><path d="M648 514L622.1 509.7" stroke="#8a1810" stroke-width=".45" opacity=".8"/><path d="M648 514C655 501.6 645.8 493 633.5 491.3C629.9 503.2 633.8 515.1 648 514z" fill="#bb2a1c"/><path d="M648 514C655 501.6 645.8 493 633.5 491.3z" fill="#4a0a06" opacity=".38"/><path d="M648 514L633.5 491.3" stroke="#8a1810" stroke-width=".45" opacity=".8"/><path d="M648 514C662.4 515.8 667.7 503.5 665.3 490.9C652.6 492.2 642.3 500.7 648 514z" fill="#bb2a1c"/><path d="M648 514C662.4 515.8 667.7 503.5 665.3 490.9z" fill="#4a0a06" opacity=".38"/><path d="M648 514L665.3 490.9" stroke="#8a1810" stroke-width=".45" opacity=".8"/><path d="M648 514C654.3 526.7 666.3 523.9 674.5 514.7C666.8 505 654.9 501.6 648 514z" fill="#b02418"/><path d="M648 514C654.3 526.7 666.3 523.9 674.5 514.7z" fill="#4a0a06" opacity=".38"/><path d="M648 514L674.5 514.7" stroke="#8a1810" stroke-width=".45" opacity=".8"/><circle cx="648" cy="514" r="7.4" fill="#5a0e08" opacity=".55"/><circle cx="647.2" cy="516" r="2" fill="#dcae3c" stroke="#7a4a12" stroke-width=".5"/><circle cx="645.4" cy="515.9" r="2" fill="#dcae3c" stroke="#7a4a12" stroke-width=".5"/><circle cx="648.5" cy="517.2" r="2" fill="#dcae3c" stroke="#7a4a12" stroke-width=".5"/><circle cx="648.1" cy="513.9" r="2" fill="#dcae3c" stroke="#7a4a12" stroke-width=".5"/><circle cx="647.1" cy="513.9" r="2" fill="#dcae3c" stroke="#7a4a12" stroke-width=".5"/><circle cx="652.5" cy="517.4" r="2" fill="#dcae3c" stroke="#7a4a12" stroke-width=".5"/><circle cx="644.6" cy="513.1" r="2" fill="#dcae3c" stroke="#7a4a12" stroke-width=".5"/><circle cx="646.5" cy="519.2" r="2" fill="#dcae3c" stroke="#7a4a12" stroke-width=".5"/><circle cx="648.4" cy="515.7" r="2" fill="#dcae3c" stroke="#7a4a12" stroke-width=".5"/><circle cx="645.5" cy="511" r="2" fill="#dcae3c" stroke="#7a4a12" stroke-width=".5"/><path d="M573.6 292.8L606.4 292.8Q620.5 292.8 620.5 307L620.5 322.5L637.6 322.5L637.6 332.5L651.7 332.5C653.1 352 656.6 368 665.1 376.5C656.6 385 653.1 402 651.7 421L637.6 421L637.6 431.7L620.5 431.7L620.5 450C619.6 460 603.6 463.5 589.6 466Q577.6 468 573.6 475L573.6 292.8zM573.6 292.8L540.8 292.8Q526.7 292.8 526.7 307L526.7 322.5L509.6 322.5L509.6 332.5L495.5 332.5C494.1 352 490.6 368 482.1 376.5C490.6 385 494.1 402 495.5 421L509.6 421L509.6 431.7L526.7 431.7L526.7 450C527.6 460 543.6 463.5 557.6 466Q569.6 468 573.6 475L573.6 292.8z" fill="url(#gPlaque)"/><path d="M573.6 292.8L606.4 292.8Q620.5 292.8 620.5 307L620.5 322.5L637.6 322.5L637.6 332.5L651.7 332.5C653.1 352 656.6 368 665.1 376.5C656.6 385 653.1 402 651.7 421L637.6 421L637.6 431.7L620.5 431.7L620.5 450C619.6 460 603.6 463.5 589.6 466Q577.6 468 573.6 475M573.6 292.8L540.8 292.8Q526.7 292.8 526.7 307L526.7 322.5L509.6 322.5L509.6 332.5L495.5 332.5C494.1 352 490.6 368 482.1 376.5C490.6 385 494.1 402 495.5 421L509.6 421L509.6 431.7L526.7 431.7L526.7 450C527.6 460 543.6 463.5 557.6 466Q569.6 468 573.6 475" fill="none" stroke="#5e130c" stroke-width=".8"/><path d="M573.6 295.8L605.2 295.8Q617.5 295.8 617.5 307.9L617.5 319.5L634.6 319.5L634.6 329.5L648.7 329.5C650.1 352 653.6 368 661.1 376.5C653.6 385 650.1 402 648.7 424L634.6 424L634.6 434.7L617.5 434.7L617.5 449.4C616.6 457 603.6 460.5 589.6 463Q577.6 465 573.6 469.9M573.6 295.8L542 295.8Q529.7 295.8 529.7 307.9L529.7 319.5L512.6 319.5L512.6 329.5L498.5 329.5C497.1 352 493.6 368 486.2 376.5C493.6 385 497.1 402 498.5 424L512.6 424L512.6 434.7L529.7 434.7L529.7 449.4C530.6 457 543.6 460.5 557.6 463Q569.6 465 573.6 469.9" fill="none" stroke="#dcae54" stroke-width=".8"/><path d="M572.8 277.5C564.8 261.5 548.8 261.5 546.8 271.5C544.8 283.5 560.8 285.5 572.8 277.5z" fill="url(#gBow)" stroke="#8a5a12" stroke-width=".5"/><path d="M572.8 277.5C580.8 261.5 596.8 261.5 598.8 271.5C600.8 283.5 584.8 285.5 572.8 277.5z" fill="url(#gBow)" stroke="#8a5a12" stroke-width=".5"/><path d="M570.8 279.5L559.8 299.5L565.8 297.5L568.8 304.5L573.8 281.5z" fill="#d49a2c" stroke="#8a5a12" stroke-width=".4"/><path d="M574.8 279.5L585.8 299.5L579.8 297.5L576.8 304.5L571.8 281.5z" fill="#c88a22" stroke="#8a5a12" stroke-width=".4"/><path d="M554.8 268.5Q562.8 267.5 568.8 275.5M590.8 268.5Q582.8 267.5 576.8 275.5" stroke="#f8e09a" stroke-width="1.2" fill="none" opacity=".8"/><ellipse cx="572.8" cy="277.5" rx="4.2" ry="4.8" fill="#e2ac3c" stroke="#8a5a12" stroke-width=".5"/><circle cx="481" cy="197" r="5" fill="url(#gSp)"/><circle cx="518" cy="303" r="4" fill="url(#gSp)"/><circle cx="543" cy="252" r="3" fill="url(#gSp)"/><circle cx="660" cy="198" r="4" fill="url(#gSp)"/><circle cx="636" cy="285" r="4" fill="url(#gSp)"/><circle cx="624" cy="262" r="3" fill="url(#gSp)"/><circle cx="651" cy="290" r="5" fill="url(#gSp)"/><circle cx="514" cy="490" r="4" fill="url(#gSp)"/><circle cx="491" cy="462" r="4" fill="url(#gSp)"/><circle cx="531" cy="519" r="3" fill="url(#gSp)"/><circle cx="488" cy="548" r="4" fill="url(#gSp)"/><circle cx="626" cy="458" r="3" fill="url(#gSp)"/><circle cx="652" cy="480" r="4" fill="url(#gSp)"/><circle cx="662" cy="550" r="5" fill="url(#gSp)"/><circle cx="482" cy="392" r="3" fill="url(#gSp)"/><circle cx="512" cy="470" r="3" fill="url(#gSp)"/><circle cx="636" cy="221" r="5" fill="#fff" opacity=".32"/><circle cx="510" cy="523" r="5" fill="#fff" opacity=".32"/><circle cx="662" cy="348" r="4" fill="#fff" opacity=".32"/><circle cx="485" cy="414" r="4" fill="#fff" opacity=".32"/><circle cx="655" cy="230" r="3" fill="#fff" opacity=".32"/></g><text x="502.7" y="367.2" font-family='"Liberation Serif",serif' font-style="italic" font-size="21.5" letter-spacing="-0.823" fill="url(#gGold)" stroke="#6a2a10" stroke-width=".25" paint-order="stroke">Сладкий подарок</text><text x="502.0" y="386.2" font-family='"Liberation Serif",serif' font-style="italic" font-size="21.5" letter-spacing="-0.795" fill="url(#gGold)" stroke="#6a2a10" stroke-width=".25" paint-order="stroke">от Деда Мороза!</text></svg>
<svg class="a" style="left:368.7px;top:138.5px" width="82" height="42.7" viewBox="0 0 262 140"><rect width="262" height="140" fill="#ffd24d"/><rect x="19" y="13" width="224" height="1.6" fill="#fff"/><rect x="19" y="125.600" width="224" height="1.600" fill="#fff"/><text x="79.5" y="68.5" font-family='"Liberation Sans",sans-serif' font-weight="bold" font-size="45" letter-spacing="-3.13" fill="#2b7c78" stroke="#2b7c78" stroke-width="3.4" stroke-linejoin="round">MISS</text><text x="79.5" y="68.5" font-family='"Liberation Sans",sans-serif' font-weight="bold" font-size="45" letter-spacing="-3.13" fill="none" stroke="#ffd24d" stroke-width="1.5" stroke-linejoin="round">MISS</text><text x="41.5" y="102.3" font-family='"Liberation Sans",sans-serif' font-weight="bold" font-size="51.5" letter-spacing="-2.20" fill="#f57fb9" stroke="#f57fb9" stroke-width="4.2" stroke-linejoin="round">HOBBY</text><text x="41.5" y="102.3" font-family='"Liberation Sans",sans-serif' font-weight="bold" font-size="51.5" letter-spacing="-2.20" fill="none" stroke="#ffd24d" stroke-width="1.6" stroke-linejoin="round">HOBBY</text></svg>
<div class="a" id="ftext"><span>Файл №2 «Открытка 1»</span></div>
<svg class="a" style="left:366px;top:120px" width="94" height="402" viewBox="366 120 94 402"><rect x="367.9" y="122.2" width="89.7" height="397.1" fill="none" stroke="#fff" stroke-width="1"/><rect x="367.9" y="122.2" width="89.7" height="397.1" fill="none" stroke="#111" stroke-width="1" stroke-dasharray="3 3"/></svg>
<div class="a" style="left:48px;top:96px;width:28.3px;height:515px;background:#4c4c4c;box-shadow:0 1px 4px rgba(0,0,0,.5);"></div>
<div class="a" style="left:48px;top:96px;width:28.3px;height:8.5px;background:#383838;"></div>
<svg class="a" style="left:51px;top:97.5px" width="6" height="6" viewBox="0 0 6 6"><path d="M.7.7L5.3 5.3M5.3.7L.7 5.3" stroke="#e0e0e0" stroke-width="1.2"/></svg>
<svg class="a" style="left:66px;top:98px" width="7" height="5" viewBox="0 0 7 5"><path d="M0 0L3 2.5 0 5zM3.6 0L6.6 2.5 3.6 5z" fill="#e0e0e0"/></svg>
<div class="a" style="left:54.500px;top:107px;width:14.500px;height:2.800px;background:repeating-linear-gradient(90deg,#3a3a3a 0 1px,#444 1px 2px);"></div>
<div class="a" style="left:50px;top:136.5px;width:23px;height:17px;background:#343434;border-radius:2px;"></div>
<div class="a" style="left:50px;top:233.2px;width:24.5px;height:1px;background:#3d3d3d;"></div>
<div class="a" style="left:50px;top:391px;width:24.5px;height:1px;background:#3d3d3d;"></div>
<div class="a" style="left:50px;top:471.3px;width:24.5px;height:1px;background:#3d3d3d;"></div>
<svg class="a" style="left:53.9px;top:118.2px" width="16.2" height="16.2" viewBox="0 0 18 18"><path d="M2.5 2.5L9.2 7 5.8 7.6 2.5 11z" fill="#d6d6d6"/><path d="M12.5 7.5v8M8.5 11.5h8" stroke="#d6d6d6" stroke-width="1.2"/><path d="M12.5 6.6l1.6 1.9h-3.2zM12.5 16.4l1.6-1.9h-3.2zM7.6 11.5l1.9-1.6v3.2zM17.4 11.5l-1.9-1.6v3.2z" fill="#d6d6d6"/></svg><svg class="a" style="left:70.2px;top:131.7px" width="2.600" height="2.600" viewBox="0 0 3 3"><path d="M3 0V3H0z" fill="#b0b0b0"/></svg>
<svg class="a" style="left:53.7px;top:136.6px" width="16.2" height="16.2" viewBox="0 0 18 18"><rect x="3.2" y="3.6" width="11.6" height="10.4" fill="none" stroke="#ececec" stroke-width="1.3" stroke-dasharray="3 1.6"/></svg><svg class="a" style="left:70.0px;top:150.1px" width="2.600" height="2.600" viewBox="0 0 3 3"><path d="M3 0V3H0z" fill="#b0b0b0"/></svg>
<svg class="a" style="left:53.9px;top:156.4px" width="16.2" height="16.2" viewBox="0 0 18 18"><path d="M3.5 4.2L8.4 7 13.6 3.2 14.6 11.2 6.4 12.2zM6.4 12.2L5 15.4" fill="none" stroke="#d6d6d6" stroke-width="1.4" stroke-linejoin="round"/></svg><svg class="a" style="left:70.2px;top:169.9px" width="2.600" height="2.600" viewBox="0 0 3 3"><path d="M3 0V3H0z" fill="#b0b0b0"/></svg>
<svg class="a" style="left:53.9px;top:175.7px" width="16.2" height="16.2" viewBox="0 0 18 18"><path d="M9 9.2L15.4 15.6" stroke="#d6d6d6" stroke-width="1.8"/><path d="M6.4 2.2l1 2.9 3-.9-1.8 2.6 2.5 1.9-3.1.1-.1 3.1-1.8-2.5-2.6 1.7.9-3-2.9-1.1 3-.9z" fill="#d6d6d6"/></svg><svg class="a" style="left:70.2px;top:189.2px" width="2.600" height="2.600" viewBox="0 0 3 3"><path d="M3 0V3H0z" fill="#b0b0b0"/></svg>
<svg class="a" style="left:53.9px;top:195.1px" width="16.2" height="16.2" viewBox="0 0 18 18"><path d="M6 2v10.2h10M2.4 5.6h10.2V16" fill="none" stroke="#d6d6d6" stroke-width="1.7"/><path d="M15.6 2.6L7 11.2" stroke="#9a9a9a" stroke-width=".8"/></svg><svg class="a" style="left:70.2px;top:208.6px" width="2.600" height="2.600" viewBox="0 0 3 3"><path d="M3 0V3H0z" fill="#b0b0b0"/></svg>
<svg class="a" style="left:53.9px;top:213.9px" width="16.2" height="16.2" viewBox="0 0 18 18"><path d="M3 15.4l1.2-3L9.6 7l1.8 1.8L6 14.2z" fill="none" stroke="#d6d6d6" stroke-width="1.1"/><path d="M9 5.6l3.8 3.8M10.4 7l2.4-3.2a1.9 1.9 0 0 1 2.7 2.7L12.3 8.9z" fill="#d6d6d6" stroke="#d6d6d6" stroke-width="1.2"/></svg><svg class="a" style="left:70.2px;top:227.4px" width="2.600" height="2.600" viewBox="0 0 3 3"><path d="M3 0V3H0z" fill="#b0b0b0"/></svg>
<svg class="a" style="left:53.9px;top:237.1px" width="16.2" height="16.2" viewBox="0 0 18 18"><ellipse cx="8.6" cy="8.6" rx="5" ry="4.4" fill="#a9a9a9"/><ellipse cx="8.6" cy="8.6" rx="5.6" ry="5" fill="none" stroke="#d6d6d6" stroke-width="1.6" stroke-dasharray="1.4 1.1"/><path d="M9 12l1.2 4" stroke="#d6d6d6" stroke-width="1.2"/></svg><svg class="a" style="left:70.2px;top:250.6px" width="2.600" height="2.600" viewBox="0 0 3 3"><path d="M3 0V3H0z" fill="#b0b0b0"/></svg>
<svg class="a" style="left:53.9px;top:256.2px" width="16.2" height="16.2" viewBox="0 0 18 18"><path d="M15.6 2.2L8.2 10.4" stroke="#d6d6d6" stroke-width="1.9" stroke-linecap="round"/><path d="M7.8 10.2c-2.4-.4-3.4 1.4-3.6 2.6-.2 1-1 1.6-2 1.8 2.6 1.4 6.600.6 6.900-2.600z" fill="#d6d6d6"/></svg><svg class="a" style="left:70.2px;top:269.7px" width="2.600" height="2.600" viewBox="0 0 3 3"><path d="M3 0V3H0z" fill="#b0b0b0"/></svg>
<svg class="a" style="left:53.9px;top:275.8px" width="16.2" height="16.2" viewBox="0 0 18 18"><path d="M9 2.2a2.5 2.5 0 0 1 2.400 3.400c-.5 1.200-.7 2.200-.4 3.400h3.600v3H3.400v-3H7c.3-1.200.1-2.200-.4-3.400A2.500 2.500 0 0 1 9 2.200z" fill="#d6d6d6"/><path d="M3.400 14.600h11.200" stroke="#d6d6d6" stroke-width="1.400"/></svg><svg class="a" style="left:70.2px;top:289.3px" width="2.600" height="2.600" viewBox="0 0 3 3"><path d="M3 0V3H0z" fill="#b0b0b0"/></svg>
<svg class="a" style="left:53.9px;top:294.9px" width="16.2" height="16.2" viewBox="0 0 18 18"><path d="M15.200 4.200L9.600 10.600" stroke="#d6d6d6" stroke-width="1.800" stroke-linecap="round"/><path d="M9.200 10.400c-2-.3-2.900 1.200-3 2.200-.2.900-.9 1.400-1.700 1.500 2.200 1.200 5.600.5 5.900-2.200z" fill="#d6d6d6"/><path d="M3.400 6.600C4.600 3.600 8.600 2.600 11 4.400" fill="none" stroke="#d6d6d6" stroke-width="1.300"/><path d="M2 4.600l1.400 3.400 2.800-2z" fill="#d6d6d6"/><path d="M13.400 11.400l1.800 3.400" stroke="#9a9a9a" stroke-width="1"/></svg><svg class="a" style="left:70.2px;top:308.4px" width="2.600" height="2.600" viewBox="0 0 3 3"><path d="M3 0V3H0z" fill="#b0b0b0"/></svg>
<svg class="a" style="left:53.9px;top:314.2px" width="16.2" height="16.2" viewBox="0 0 18 18"><path d="M7.200 4L15.600 4 11.200 9.800 2.800 9.800z" fill="#d6d6d6"/><path d="M2.800 10.600h8.400v3.600H2.800zM12 10.200l3.600-4.800v3.400L12 13.600z" fill="#b4b4b4"/></svg><svg class="a" style="left:70.2px;top:327.7px" width="2.600" height="2.600" viewBox="0 0 3 3"><path d="M3 0V3H0z" fill="#b0b0b0"/></svg>
<svg class="a" style="left:54.6px;top:335.8px" width="15" height="12" viewBox="0 0 15 12"><defs><linearGradient id="tg"><stop offset="0" stop-color="#f2f2f2"/><stop offset="1" stop-color="#4a4a4a"/></linearGradient></defs><rect x=".7" y=".7" width="13.600" height="10.600" fill="url(#tg)" stroke="#e2e2e2" stroke-width="1.200"/></svg>
<svg class="a" style="left:53.9px;top:333.6px" width="16.2" height="16.2" viewBox="0 0 18 18"></svg><svg class="a" style="left:70.2px;top:347.1px" width="2.600" height="2.600" viewBox="0 0 3 3"><path d="M3 0V3H0z" fill="#b0b0b0"/></svg>
<svg class="a" style="left:53.9px;top:353.7px" width="16.2" height="16.2" viewBox="0 0 18 18"><path d="M9 2.400C10.600 5.400 13 7.600 13 10.400a4 4 0 0 1-8 0C5 7.600 7.400 5.400 9 2.400z" fill="#d6d6d6"/></svg><svg class="a" style="left:70.2px;top:367.2px" width="2.600" height="2.600" viewBox="0 0 3 3"><path d="M3 0V3H0z" fill="#b0b0b0"/></svg>
<svg class="a" style="left:53.9px;top:372.5px" width="16.2" height="16.2" viewBox="0 0 18 18"><circle cx="7" cy="6.800" r="3.900" fill="#d6d6d6"/><path d="M9.600 9.600L15 15" stroke="#d6d6d6" stroke-width="2" stroke-linecap="round"/></svg><svg class="a" style="left:70.2px;top:386.0px" width="2.600" height="2.600" viewBox="0 0 3 3"><path d="M3 0V3H0z" fill="#b0b0b0"/></svg>
<svg class="a" style="left:53.9px;top:393.9px" width="16.2" height="16.2" viewBox="0 0 18 18"><path d="M3 15.600L5 9.200 10.400 5 13.600 8.200 9.400 13.600z" fill="#d6d6d6"/><path d="M3 15.600L8 10.600" stroke="#4c4c4c" stroke-width="1"/><circle cx="8.200" cy="10.400" r="1" fill="#4c4c4c"/><path d="M11 3.800L14.800 7.600" stroke="#d6d6d6" stroke-width="2.200"/></svg><svg class="a" style="left:70.2px;top:407.4px" width="2.600" height="2.600" viewBox="0 0 3 3"><path d="M3 0V3H0z" fill="#b0b0b0"/></svg>
<div class="t" style="left:56.3px;top:413.600px;font-family:'Liberation Serif',serif;font-size:17px;color:#d6d6d6;">T</div>
<svg class="a" style="left:53.9px;top:413.5px" width="16.2" height="16.2" viewBox="0 0 18 18"></svg><svg class="a" style="left:70.2px;top:427.0px" width="2.600" height="2.600" viewBox="0 0 3 3"><path d="M3 0V3H0z" fill="#b0b0b0"/></svg>
<svg class="a" style="left:53.9px;top:432.9px" width="16.2" height="16.2" viewBox="0 0 18 18"><path d="M5.600 2.400L12.800 9.600 9.400 9.800 11.400 14.200 9.600 15 7.600 10.600 5.600 12.800z" fill="#3a3a3a" stroke="#d6d6d6" stroke-width="1.200" stroke-linejoin="round"/></svg><svg class="a" style="left:70.2px;top:446.4px" width="2.600" height="2.600" viewBox="0 0 3 3"><path d="M3 0V3H0z" fill="#b0b0b0"/></svg>
<svg class="a" style="left:53.9px;top:452.1px" width="16.2" height="16.2" viewBox="0 0 18 18"><path d="M4.200 4.400c1.600-1.600 3 .2 4.200-.8 1.600-1.400 3.600-.6 3.400 1.400 1.800-.6 3.600.8 2.800 2.600-.6 1.200-2.200 1-2.400 2.400-.2 1.600 1 2.800-.6 3.800-1.400.8-2.400-.8-3.800-.4-1.600.6-2.200 2.200-4 1.400C2.200 14 3.200 12.200 3.600 11c.4-1.400-1.600-2-1.200-3.600.400-1.400 2-.8 2.400-1.600.200-.600-.8-.800-.600-1.400z" fill="#a6a6a6" stroke="#d6d6d6" stroke-width="1"/></svg><svg class="a" style="left:70.2px;top:465.6px" width="2.600" height="2.600" viewBox="0 0 3 3"><path d="M3 0V3H0z" fill="#b0b0b0"/></svg>
<svg class="a" style="left:54.9px;top:474.3px" width="16.2" height="16.2" viewBox="0 0 18 18"><path d="M5.400 15.600C4 13.600 2.800 11.600 2 9.600c-.4-1 .8-1.600 1.600-.8l1.600 1.800V4.200c0-1.200 1.600-1.200 1.600 0V3c0-1.200 1.700-1.200 1.700 0v1c0-1.200 1.700-1.200 1.700 0v1.400c0-1.100 1.600-1.100 1.600 0V11c0 2-.6 3.400-1.400 4.600z" fill="#d6d6d6"/><path d="M6.800 4v4.600M8.500 3.600v5M10.200 4.600v4" stroke="#6a6a6a" stroke-width=".5"/></svg><svg class="a" style="left:71.2px;top:487.8px" width="2.600" height="2.600" viewBox="0 0 3 3"><path d="M3 0V3H0z" fill="#b0b0b0"/></svg>
<svg class="a" style="left:53.9px;top:493.4px" width="16.2" height="16.2" viewBox="0 0 18 18"><circle cx="7.400" cy="7" r="4" fill="#8a8a8a" stroke="#d6d6d6" stroke-width="1.500"/><path d="M10.400 10.200L15 15" stroke="#d6d6d6" stroke-width="2.200" stroke-linecap="round"/></svg>
<svg class="a" style="left:50px;top:513px" width="9" height="9" viewBox="0 0 9 9"><rect x="3" y="3" width="5.400" height="5.400" fill="#fff" stroke="#ddd" stroke-width=".6"/><rect x=".6" y=".6" width="5" height="5" fill="#111" stroke="#ddd" stroke-width=".9"/></svg>
<svg class="a" style="left:63px;top:512.5px" width="10" height="10" viewBox="0 0 10 10"><path d="M2.600 3.200C5.400 2.600 7.200 4.200 7 7" fill="none" stroke="#d6d6d6" stroke-width="1.200"/><path d="M.6 3.400L3.400 1v4.400zM7 9.400L4.800 6.600h4.400z" fill="#d6d6d6"/></svg>
<div class="a" style="left:57.8px;top:533.5px;width:14.3px;height:13.5px;background:#fff;box-shadow:0 0 0 .8px #8c8c8c;"></div>
<div class="a" style="left:51px;top:525.8px;width:13.700px;height:13.400px;background:#d2402b;box-shadow:0 0 0 1px #e8e8e8,0 0 0 1.600px #444;"></div>
<svg class="a" style="left:53.2px;top:553.5px" width="15" height="11" viewBox="0 0 15 11"><rect x=".7" y=".7" width="13.600" height="9.600" fill="#3a3a3a" stroke="#d6d6d6" stroke-width="1.300"/><circle cx="7.500" cy="5.500" r="2.900" fill="#6a6a6a" stroke="#bdbdbd" stroke-width=".9"/></svg>
<svg class="a" style="left:53px;top:573px" width="16" height="12" viewBox="0 0 16 12"><rect x=".7" y="3.200" width="9.600" height="7.600" fill="#4c4c4c" stroke="#d6d6d6" stroke-width="1.200"/><rect x="4.700" y=".7" width="10" height="7.600" fill="#8c8c8c" stroke="#d6d6d6" stroke-width="1.200"/><rect x=".7" y="3.200" width="9.600" height="7.600" fill="none" stroke="#d6d6d6" stroke-width="1.200"/></svg>
<svg class="a" style="left:70px;top:584.5px" width="2.600" height="2.600" viewBox="0 0 3 3"><path d="M3 0V3H0z" fill="#b0b0b0"/></svg>
<div class="a" style="left:813.500px;top:85px;width:160px;height:580.500px;background:linear-gradient(#464646,#424242 40%,#3f3f3f);"></div>
<div class="a" style="left:813.500px;top:85px;width:160px;height:8.500px;background:#3a3a3a;"></div>
<svg class="a" style="left:816.500px;top:86.500px" width="6" height="6" viewBox="0 0 6 6"><path d="M.8.8L5.200 5.200M5.200.8L.8 5.200" stroke="#e4e4e4" stroke-width="1.100"/></svg>
<div class="a" style="left:813.500px;top:93.500px;width:160px;height:12.500px;background:#353535;"></div>
<div class="a" style="left:893px;top:93.500px;width:28.500px;height:12.500px;background:#474747;"></div>
<div class="a" style="left:859.500px;top:94px;width:1px;height:11.500px;background:#2a2a2a;"></div>
<div class="a" style="left:892.500px;top:94px;width:1px;height:11.500px;background:#2a2a2a;"></div>
<div class="a" style="left:921.500px;top:94px;width:1px;height:11.500px;background:#2a2a2a;"></div>
<div class="t" style="left:819.00px;top:95.90px;font-size:8.2px;font-weight:normal;color:#a8a8a8;letter-spacing:-0.057px;-webkit-text-stroke:.25px #a8a8a8;">Свойства</div>
<div class="t" style="left:865.00px;top:95.90px;font-size:8.2px;font-weight:normal;color:#a8a8a8;letter-spacing:0.249px;-webkit-text-stroke:.25px #a8a8a8;">Инфо</div>
<div class="t" style="left:897.00px;top:95.90px;font-size:8.2px;font-weight:normal;color:#ffffff;letter-spacing:-0.055px;-webkit-text-stroke:.25px #fff;">Слои</div>
<div class="t" style="left:926.70px;top:95.90px;font-size:8.2px;font-weight:normal;color:#a8a8a8;letter-spacing:0.308px;-webkit-text-stroke:.25px #a8a8a8;">Контуры</div>
<div class="a" style="left:817.400px;top:111px;width:93.600px;height:11.500px;background:linear-gradient(#606060,#555);border-radius:2px;box-shadow:0 0 0 .5px #2c2c2c;"></div>
<svg class="a" style="left:821.500px;top:113px" width="9" height="9" viewBox="0 0 9 9"><circle cx="5.200" cy="3.600" r="2.500" fill="none" stroke="#eee" stroke-width="1"/><path d="M3.400 5.400L.8 8.200" stroke="#eee" stroke-width="1.200"/></svg>
<div class="t" style="left:832.00px;top:112.60px;font-size:8.4px;font-weight:normal;color:#f4f4f4;letter-spacing:-0.885px;">Вид</div>
<svg class="a" style="left:903px;top:112.500px" width="5" height="9" viewBox="0 0 5 9"><path d="M.4 3.400L2.500.8 4.600 3.400zM.4 5.600L2.500 8.200 4.600 5.600z" fill="#e8e8e8"/></svg>
<svg class="a" style="left:947px;top:112px" width="11" height="9" viewBox="0 0 11 9"><rect x=".6" y=".6" width="9.800" height="7.800" fill="#4a4a4a" stroke="#d8d8d8" stroke-width="1"/><path d="M1.800 7L4 4.200 5.600 6 7 4.800 9.200 7z" fill="#d8d8d8"/><circle cx="7.600" cy="2.800" r=".9" fill="#d8d8d8"/></svg>
<div class="a" style="left:964.500px;top:112.500px;width:9px;height:9px;border-radius:50%;background:#cfcfcf;"></div>
<div class="a" style="left:813.500px;top:126.500px;width:160px;height:1px;background:#383838;"></div>
<div class="a" style="left:817.400px;top:132px;width:142.600px;height:11.500px;background:linear-gradient(#606060,#555);border-radius:2px;box-shadow:0 0 0 .5px #2c2c2c;"></div>
<div class="t" style="left:821.50px;top:133.60px;font-size:8.4px;font-weight:normal;color:#f4f4f4;letter-spacing:-0.357px;-webkit-text-stroke:.25px #f4f4f4;">Обычные</div>
<svg class="a" style="left:952.500px;top:133.500px" width="5" height="9" viewBox="0 0 5 9"><path d="M.4 3.400L2.500.8 4.600 3.400zM.4 5.600L2.500 8.200 4.600 5.600z" fill="#e8e8e8"/></svg>
<div class="t" style="left:963.50px;top:133.60px;font-size:8.4px;font-weight:normal;color:#f0f0f0;letter-spacing:0.150px;-webkit-text-stroke:.25px #f0f0f0;">Непрозр.</div>
<div class="a" style="left:813.500px;top:148px;width:160px;height:1px;background:#383838;"></div>
<div class="t" style="left:817.50px;top:155.20px;font-size:8.4px;font-weight:normal;color:#f0f0f0;letter-spacing:-0.034px;">Закрепить:</div>
<svg class="a" style="left:864.300px;top:155.200px" width="8.500" height="8.500" viewBox="0 0 8 8"><rect x=".4" y=".4" width="7.200" height="7.200" fill="#4a4a4a" stroke="#e0e0e0" stroke-width=".8"/><path d="M1 1h2v2H1zM5 1h2v2H5zM3 3h2v2H3zM1 5h2v2H1zM5 5h2v2H5z" fill="#e8e8e8"/></svg>
<svg class="a" style="left:880.500px;top:154.500px" width="11" height="10" viewBox="0 0 11 10"><path d="M10.200.8L5 6.200" stroke="#e4e4e4" stroke-width="1.500" stroke-linecap="round"/><path d="M4.800 5.800c-1.800-.3-2.500 1-2.600 1.900-.1.700-.7 1.100-1.400 1.300 1.900 1 4.800.4 5-1.900z" fill="#e4e4e4"/></svg>
<svg class="a" style="left:896px;top:154.200px" width="10.500" height="10.500" viewBox="0 0 11 11"><path d="M5.500 1.200v8.600M1.200 5.500h8.600" stroke="#e4e4e4" stroke-width="1"/><path d="M5.500 0l1.700 2.200H3.800zM5.500 11l1.700-2.200H3.800zM0 5.500l2.200-1.700v3.400zM11 5.500L8.800 3.800v3.400z" fill="#e4e4e4"/></svg>
<svg class="a" style="left:913.600px;top:153.800px" width="8.500" height="10.500" viewBox="0 0 8 10"><path d="M2 4.600V3a2 2 0 0 1 4 0v1.600" fill="none" stroke="#e4e4e4" stroke-width="1.100"/><rect x=".8" y="4.400" width="6.400" height="5" rx=".6" fill="#e4e4e4"/></svg>
<div class="a" style="left:813.500px;top:170.800px;width:160px;height:28.800px;background:#464646;border-top:1px solid #303030;border-bottom:1px solid #303030;box-sizing:border-box;"></div>
<div class="a" style="left:835.500px;top:171.500px;width:140px;height:27.500px;background:#5f6b86;"></div>
<div class="a" style="left:835px;top:171px;width:1px;height:28.500px;background:#333;"></div>
<svg class="a" style="left:819px;top:181.800px" width="11.500" height="7.500" viewBox="0 0 12 8"><path d="M.4 4C2.400 1 4.400.4 6 .4S9.600 1 11.600 4C9.600 7 7.600 7.600 6 7.600S2.400 7 .4 4z" fill="#dedede"/><circle cx="6" cy="4" r="2.300" fill="#3c3c3c"/><circle cx="6" cy="4" r="1" fill="#ddd"/></svg>
<div class="a" style="left:837px;top:171.500px;width:20px;height:27.500px;background:#fff;box-shadow:0 0 0 .6px #222;"></div>
<div class="a" style="left:840.300px;top:173.500px;width:14px;height:23.500px;background:#efe0bd;"></div>
<svg class="a" style="left:841.500px;top:174.800px" width="11.500" height="21" viewBox="0 0 11.500 21"><rect width="11.500" height="21" fill="#3a7d4f"/><rect x="3.800" width="4" height="21" fill="#dca85c"/><circle cx="1.600" cy="4" r="1.700" fill="#c22a1e"/><circle cx="10" cy="3.600" r="1.700" fill="#c22a1e"/><circle cx="1.400" cy="17.600" r="1.800" fill="#c22a1e"/><circle cx="9.800" cy="17" r="1.900" fill="#c22a1e"/><path d="M1.200 7.400h9.100v7H1.200z" fill="#a8281c"/><rect x="2.500" y="9.400" width="6.500" height="2.600" fill="#c9503a"/></svg>
<div class="t" style="left:861.80px;top:181.40px;font-size:8.4px;font-weight:normal;color:#ffffff;letter-spacing:-0.360px;">Слой 0</div>
<div class="a" style="left:813.500px;top:640px;width:160px;height:12px;background:#3a3a3a;border-top:1px solid #2c2c2c;box-sizing:border-box;"></div>
<div class="a" style="left:957px;top:648px;width:1.500px;height:1.500px;background:#ccc;"></div>
<div class="a" style="left:963.500px;top:642.500px;width:7px;height:7px;background:#d8d8d8;"></div><div class="a" style="left:965.500px;top:644.500px;width:3px;height:3px;background:#3a3a3a;"></div>
<div class="a" style="left:813.500px;top:652px;width:160px;height:13.500px;background:#2e2e2e;"></div>
<div class="a" style="left:683px;top:511.500px;width:300px;height:163.500px;border-radius:13px;background:rgba(255,255,255,.09);"></div><div class="a" style="left:691.400px;top:518px;width:261.800px;height:139.400px;box-shadow:0 2px 5px rgba(0,0,0,.55);"></div><svg class="a" style="left:691.4px;top:518px" width="261.8" height="139.4" viewBox="0 0 262 140"><rect width="262" height="140" fill="#ffd24d"/><rect x="19" y="13" width="224" height="1.6" fill="#fff"/><rect x="19" y="125.600" width="224" height="1.600" fill="#fff"/><text x="79.5" y="68.5" font-family='"Liberation Sans",sans-serif' font-weight="bold" font-size="45" letter-spacing="-3.13" fill="#2b7c78" stroke="#2b7c78" stroke-width="3.4" stroke-linejoin="round">MISS</text><text x="79.5" y="68.5" font-family='"Liberation Sans",sans-serif' font-weight="bold" font-size="45" letter-spacing="-3.13" fill="none" stroke="#ffd24d" stroke-width="1.5" stroke-linejoin="round">MISS</text><text x="41.5" y="102.3" font-family='"Liberation Sans",sans-serif' font-weight="bold" font-size="51.5" letter-spacing="-2.20" fill="#f57fb9" stroke="#f57fb9" stroke-width="4.2" stroke-linejoin="round">HOBBY</text><text x="41.5" y="102.3" font-family='"Liberation Sans",sans-serif' font-weight="bold" font-size="51.5" letter-spacing="-2.20" fill="none" stroke="#ffd24d" stroke-width="1.6" stroke-linejoin="round">HOBBY</text></svg>
</div></div>
<div class="a t" id="vtext">misshobby.livemaster.ru</div>
</body></html>
